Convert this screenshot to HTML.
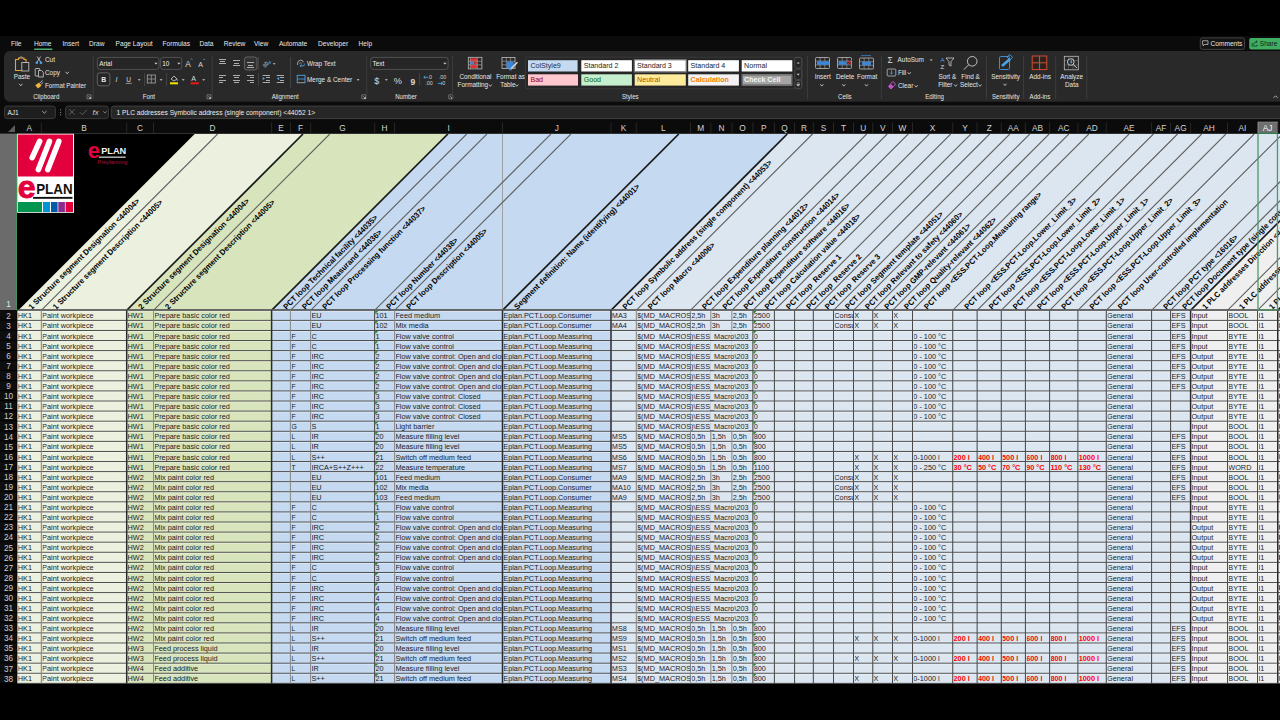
<!DOCTYPE html>
<html><head><meta charset="utf-8"><title>Excel</title>
<style>
html,body{margin:0;padding:0;width:1280px;height:720px;overflow:hidden;background:#000;font-family:"Liberation Sans",sans-serif;}
.a{position:absolute;white-space:nowrap;}
svg text{font-family:"Liberation Sans",sans-serif;}
</style></head><body>
<svg width="1280" height="122" style="position:absolute;left:0;top:0">
<rect x="0" y="0" width="1280" height="36" fill="#000"/>
<rect x="0" y="36" width="1280" height="86" fill="#0b0b0b"/>
<text x="10.9" y="46.4" font-size="7.26" fill="#e8e8e8" textLength="10.63" lengthAdjust="spacingAndGlyphs" style="white-space:pre">File</text>
<text x="33.9" y="46.4" font-size="7.26" fill="#e8e8e8" textLength="17.60" lengthAdjust="spacingAndGlyphs" style="white-space:pre">Home</text>
<text x="62.5" y="46.4" font-size="7.26" fill="#e8e8e8" textLength="16.51" lengthAdjust="spacingAndGlyphs" style="white-space:pre">Insert</text>
<text x="89" y="46.4" font-size="7.26" fill="#e8e8e8" textLength="15.40" lengthAdjust="spacingAndGlyphs" style="white-space:pre">Draw</text>
<text x="115.6" y="46.4" font-size="7.26" fill="#e8e8e8" textLength="37.06" lengthAdjust="spacingAndGlyphs" style="white-space:pre">Page Layout</text>
<text x="162.5" y="46.4" font-size="7.26" fill="#e8e8e8" textLength="27.50" lengthAdjust="spacingAndGlyphs" style="white-space:pre">Formulas</text>
<text x="199.5" y="46.4" font-size="7.26" fill="#e8e8e8" textLength="13.94" lengthAdjust="spacingAndGlyphs" style="white-space:pre">Data</text>
<text x="223.75" y="46.4" font-size="7.26" fill="#e8e8e8" textLength="21.64" lengthAdjust="spacingAndGlyphs" style="white-space:pre">Review</text>
<text x="254" y="46.4" font-size="7.26" fill="#e8e8e8" textLength="14.19" lengthAdjust="spacingAndGlyphs" style="white-space:pre">View</text>
<text x="278.9" y="46.4" font-size="7.26" fill="#e8e8e8" textLength="28.25" lengthAdjust="spacingAndGlyphs" style="white-space:pre">Automate</text>
<text x="318" y="46.4" font-size="7.26" fill="#e8e8e8" textLength="30.08" lengthAdjust="spacingAndGlyphs" style="white-space:pre">Developer</text>
<text x="358.6" y="46.4" font-size="7.26" fill="#e8e8e8" textLength="13.57" lengthAdjust="spacingAndGlyphs" style="white-space:pre">Help</text>
<rect x="34" y="48.6" width="18.5" height="1.3" rx="0.6" fill="#4fb072"/>
<rect x="1200.3" y="37.9" width="44.3" height="11.5" rx="2" fill="#141414" stroke="#505050" stroke-width="0.8"/>
<path d="M1202.6,40.8 h5.4 v3.6 h-3.4 l-1.4,1.5 v-1.5 h-0.6 z" fill="none" stroke="#e0e0e0" stroke-width="0.7"/>
<text x="1210.5" y="46.2" font-size="7.26" fill="#e8e8e8" textLength="31.91" lengthAdjust="spacingAndGlyphs" style="white-space:pre">Comments</text>
<rect x="1249.2" y="37.9" width="36" height="11.5" rx="2" fill="#3fae62"/>
<path d="M1252.2,43 v3 h5 v-1.2 M1253.5,44.6 q0.8,-3 3.6,-3 m-1.2,-1.2 l1.3,1.2 l-1.3,1.2" fill="none" stroke="#0b2b16" stroke-width="0.7"/>
<text x="1259.8" y="46.2" font-size="7.26" fill="#0d1f12" textLength="17.61" lengthAdjust="spacingAndGlyphs" style="white-space:pre">Share</text>
<rect x="4" y="51" width="1290" height="50.8" rx="6" fill="#292929"/>
<path d="M15.5,59.5 h3 v-1.5 h5.5 v1.5 h2 v11 h-10.5 z" fill="none" stroke="#e8a23a" stroke-width="1.1"/>
<path d="M19,58.5 l2.2,-2 l2.2,2" fill="none" stroke="#bdbdbd" stroke-width="0.8"/>
<rect x="21.8" y="62.5" width="7" height="8.5" fill="#292929" stroke="#bdbdbd" stroke-width="0.9"/>
<text x="13.8" y="79.2" font-size="7.04" fill="#e6e6e6" textLength="16.36" lengthAdjust="spacingAndGlyphs" style="white-space:pre">Paste</text>
<path d="M19.20,83.80 L20.80,85.80 L22.40,83.80" fill="none" stroke="#d8d8d8" stroke-width="0.8"/>
<path d="M37.2,56.5 l3.4,5.5 M40.6,56.5 l-3.4,5.5" stroke="#cfcfcf" stroke-width="0.8"/>
<circle cx="36.8" cy="62.8" r="1.3" fill="#4aa3e8"/><circle cx="41" cy="62.8" r="1.3" fill="#4aa3e8"/>
<text x="45" y="62.4" font-size="7.04" fill="#e6e6e6" textLength="9.96" lengthAdjust="spacingAndGlyphs" style="white-space:pre">Cut</text>
<rect x="35.2" y="68.5" width="4.5" height="7.5" rx="0.6" fill="none" stroke="#cfcfcf" stroke-width="0.8"/>
<path d="M38.5,70.5 h3 l1.8,1.8 v4.7 h-4.8 z" fill="#292929" stroke="#cfcfcf" stroke-width="0.8"/>
<text x="45" y="75.4" font-size="7.04" fill="#e6e6e6" textLength="14.94" lengthAdjust="spacingAndGlyphs" style="white-space:pre">Copy</text>
<path d="M65.60,71.80 L67.20,73.80 L68.80,71.80" fill="none" stroke="#d8d8d8" stroke-width="0.8"/>
<path d="M35.2,85.2 l3.8,-2.8 l2.4,3.4 l-3.4,2.8 z" fill="#f0b43c"/>
<path d="M39.6,83.2 l3,-2.8 M40.6,84.6 l2.6,-2.2" stroke="#cfcfcf" stroke-width="0.8"/>
<text x="45" y="88.4" font-size="6.82" fill="#e6e6e6" textLength="41.00" lengthAdjust="spacingAndGlyphs" style="white-space:pre">Format Painter</text>
<text x="33.2" y="99.3" font-size="6.71" fill="#e6e6e6" textLength="26.11" lengthAdjust="spacingAndGlyphs" style="white-space:pre">Clipboard</text>
<path d="M87,94.8 h4 v4 h-4 z" fill="none" stroke="#9a9a9a" stroke-width="0.6"/><path d="M88.5,96.3 l2.2,2.2 m0,-1.6 v1.6 h-1.6" fill="none" stroke="#cfcfcf" stroke-width="0.7"/>
<line x1="93.2" y1="56" x2="93.2" y2="99" stroke="#3d3d3d" stroke-width="1"/>
<rect x="97.4" y="57.4" width="61.6" height="12" rx="2.5" fill="#262626" stroke="#5c5c5c" stroke-width="0.8"/>
<text x="99.3" y="65.9" font-size="7.04" fill="#f0f0f0" textLength="12.80" lengthAdjust="spacingAndGlyphs" style="white-space:pre">Arial</text>
<path d="M154.3,62.7 h3.4 l-1.7,1.8 z" fill="#cfcfcf"/>
<rect x="160.6" y="57.4" width="21.2" height="12" rx="2.5" fill="#262626" stroke="#5c5c5c" stroke-width="0.8"/>
<text x="162.2" y="65.9" font-size="7.04" fill="#f0f0f0" textLength="7.12" lengthAdjust="spacingAndGlyphs" style="white-space:pre">10</text>
<path d="M177.2,62.7 h3.4 l-1.7,1.8 z" fill="#cfcfcf"/>
<text x="185.2" y="67.3" font-size="8.4" fill="#dcdcdc">A</text>
<path d="M190.5,59.5 l1,-0.8 l1,0.8" fill="none" stroke="#4aa3e8" stroke-width="0.8"/>
<text x="198.3" y="67.3" font-size="7" fill="#dcdcdc">A</text>
<path d="M203.2,59 l0.9,0.8 l0.9,-0.8" fill="none" stroke="#4aa3e8" stroke-width="0.8"/>
<rect x="97.3" y="72.8" width="12.6" height="13" rx="2.5" fill="#262626" stroke="#6a6a6a" stroke-width="0.9"/>
<text x="101.2" y="82" font-size="6.8" fill="#e8e8e8" font-weight="bold">B</text>
<text x="115.5" y="82" font-size="7" fill="#d8d8d8" font-style="italic" font-family="Liberation Serif">I</text>
<text x="126.2" y="81.6" font-size="6.6" fill="#d8d8d8">U</text>
<line x1="125.8" y1="83.4" x2="131.8" y2="83.4" stroke="#d8d8d8" stroke-width="0.6"/>
<path d="M137.7,79.3 h3 l-1.5,1.5 z" fill="#cfcfcf"/>
<line x1="144.6" y1="73" x2="144.6" y2="86" stroke="#444" stroke-width="1"/>
<rect x="147.3" y="75" width="8" height="8" fill="none" stroke="#a8a8a8" stroke-width="0.8"/><path d="M151.3,75 v8 M147.3,79 h8" stroke="#a8a8a8" stroke-width="0.7"/>
<path d="M159.6,79.3 h3 l-1.5,1.5 z" fill="#cfcfcf"/>
<line x1="166.6" y1="73" x2="166.6" y2="86" stroke="#444" stroke-width="1"/>
<path d="M171,79 l3,-3 l3,3 l-3,2 z" fill="none" stroke="#d0d0d0" stroke-width="0.8"/><circle cx="177.4" cy="80" r="0.8" fill="#4aa3e8"/>
<rect x="170" y="82.3" width="8" height="2" fill="#f2e600"/>
<path d="M181.7,79.3 h3 l-1.5,1.5 z" fill="#cfcfcf"/>
<text x="191.2" y="81.2" font-size="7" fill="#dcdcdc">A</text>
<rect x="190.5" y="82.3" width="8.4" height="2" fill="#e81818"/>
<path d="M202.2,79.3 h3 l-1.5,1.5 z" fill="#cfcfcf"/>
<text x="142.8" y="99.3" font-size="6.71" fill="#e6e6e6" textLength="12.20" lengthAdjust="spacingAndGlyphs" style="white-space:pre">Font</text>
<path d="M207,94.8 h4 v4 h-4 z" fill="none" stroke="#9a9a9a" stroke-width="0.6"/><path d="M208.5,96.3 l2.2,2.2 m0,-1.6 v1.6 h-1.6" fill="none" stroke="#cfcfcf" stroke-width="0.7"/>
<line x1="212.2" y1="56" x2="212.2" y2="99" stroke="#3d3d3d" stroke-width="1"/>
<line x1="219" y1="59.5" x2="226" y2="59.5" stroke="#c4c4c4" stroke-width="0.85"/><line x1="220" y1="61.5" x2="225" y2="61.5" stroke="#c4c4c4" stroke-width="0.85"/><line x1="219" y1="63.5" x2="226" y2="63.5" stroke="#c4c4c4" stroke-width="0.85"/>
<line x1="233" y1="60.5" x2="240" y2="60.5" stroke="#c4c4c4" stroke-width="0.85"/><line x1="234" y1="63.5" x2="239" y2="63.5" stroke="#c4c4c4" stroke-width="0.85"/><line x1="233" y1="65.5" x2="240" y2="65.5" stroke="#c4c4c4" stroke-width="0.85"/>
<rect x="244.4" y="57" width="12.6" height="13" rx="2.5" fill="#323232" stroke="#6a6a6a" stroke-width="0.9"/>
<line x1="247" y1="62.5" x2="254" y2="62.5" stroke="#c4c4c4" stroke-width="0.85"/><line x1="248" y1="65.5" x2="253" y2="65.5" stroke="#c4c4c4" stroke-width="0.85"/><line x1="247" y1="67.5" x2="254" y2="67.5" stroke="#c4c4c4" stroke-width="0.85"/>
<line x1="258.4" y1="57" x2="258.4" y2="70" stroke="#444" stroke-width="1"/>
<text x="261.8" y="66" font-size="5.2" fill="#bdbdbd" transform="rotate(-40 264.5 63.5)">ab</text>
<line x1="264.8" y1="67.8" x2="270.2" y2="62.2" stroke="#4aa3e8" stroke-width="0.9"/>
<path d="M268.6,62 l1.8,-0.2 l-0.2,1.8" fill="none" stroke="#4aa3e8" stroke-width="0.7"/>
<path d="M272.8,63.3 h2.8 l-1.4,1.4 z" fill="#cfcfcf"/>
<line x1="219" y1="75.5" x2="226" y2="75.5" stroke="#c4c4c4" stroke-width="0.85"/><line x1="219" y1="77.5" x2="223" y2="77.5" stroke="#c4c4c4" stroke-width="0.85"/><line x1="219" y1="80.5" x2="226" y2="80.5" stroke="#c4c4c4" stroke-width="0.85"/><line x1="219" y1="82.5" x2="223" y2="82.5" stroke="#c4c4c4" stroke-width="0.85"/>
<line x1="233" y1="75.5" x2="240" y2="75.5" stroke="#c4c4c4" stroke-width="0.85"/><line x1="234" y1="77.5" x2="239" y2="77.5" stroke="#c4c4c4" stroke-width="0.85"/><line x1="233" y1="80.5" x2="240" y2="80.5" stroke="#c4c4c4" stroke-width="0.85"/><line x1="234" y1="82.5" x2="239" y2="82.5" stroke="#c4c4c4" stroke-width="0.85"/>
<line x1="247" y1="75.5" x2="254" y2="75.5" stroke="#c4c4c4" stroke-width="0.85"/><line x1="250" y1="77.5" x2="254" y2="77.5" stroke="#c4c4c4" stroke-width="0.85"/><line x1="247" y1="80.5" x2="254" y2="80.5" stroke="#c4c4c4" stroke-width="0.85"/><line x1="250" y1="82.5" x2="254" y2="82.5" stroke="#c4c4c4" stroke-width="0.85"/>
<line x1="258.4" y1="73" x2="258.4" y2="86" stroke="#444" stroke-width="1"/>
<line x1="262.7" y1="75.5" x2="270" y2="75.5" stroke="#c4c4c4" stroke-width="0.85"/><line x1="266" y1="77.5" x2="270" y2="77.5" stroke="#c4c4c4" stroke-width="0.85"/><line x1="266" y1="80.5" x2="270" y2="80.5" stroke="#c4c4c4" stroke-width="0.85"/><line x1="262.7" y1="82.5" x2="270" y2="82.5" stroke="#c4c4c4" stroke-width="0.85"/>
<path d="M262.6,77 l2.4,1.6 l-2.4,1.6 z" fill="#4aa3e8"/>
<line x1="276.7" y1="75.5" x2="284" y2="75.5" stroke="#c4c4c4" stroke-width="0.85"/><line x1="280" y1="77.5" x2="284" y2="77.5" stroke="#c4c4c4" stroke-width="0.85"/><line x1="280" y1="80.5" x2="284" y2="80.5" stroke="#c4c4c4" stroke-width="0.85"/><line x1="276.7" y1="82.5" x2="284" y2="82.5" stroke="#c4c4c4" stroke-width="0.85"/>
<path d="M279.2,77 l-2.4,1.6 l2.4,1.6 z" fill="#4aa3e8"/>
<line x1="290.6" y1="57" x2="290.6" y2="88" stroke="#444" stroke-width="1"/>
<path d="M297.6,65 q-0.5,-4.5 3,-4.8 q2.6,-0.2 2.6,2.2" fill="none" stroke="#bdbdbd" stroke-width="0.8"/>
<path d="M299.2,63.6 q1.2,-1.8 2.4,0" fill="none" stroke="#bdbdbd" stroke-width="0.6"/>
<path d="M300,65.8 h3.2 q1.2,0 1.2,-1.2 v-1 M301.4,64.5 l-1.3,1.3 l1.3,1.3" fill="none" stroke="#4aa3e8" stroke-width="0.85"/>
<text x="307" y="66.4" font-size="7.04" fill="#e6e6e6" textLength="28.57" lengthAdjust="spacingAndGlyphs" style="white-space:pre">Wrap Text</text>
<rect x="297.2" y="75.3" width="7.8" height="7.5" fill="none" stroke="#4aa3e8" stroke-width="0.9"/><path d="M297.2,79 h7.8" stroke="#4aa3e8" stroke-width="0.8"/><path d="M297.6,82.5 h7" stroke="#c08850" stroke-width="0.6"/>
<text x="307" y="82" font-size="7.04" fill="#e6e6e6" textLength="45.17" lengthAdjust="spacingAndGlyphs" style="white-space:pre">Merge &amp; Center</text>
<path d="M356.6,79.3 h3 l-1.5,1.5 z" fill="#cfcfcf"/>
<text x="271.7" y="99.3" font-size="6.71" fill="#e6e6e6" textLength="27.12" lengthAdjust="spacingAndGlyphs" style="white-space:pre">Alignment</text>
<path d="M361.8,94.8 h4 v4 h-4 z" fill="none" stroke="#9a9a9a" stroke-width="0.6"/><path d="M363.3,96.3 l2.2,2.2 m0,-1.6 v1.6 h-1.6" fill="none" stroke="#cfcfcf" stroke-width="0.7"/>
<line x1="366.7" y1="56" x2="366.7" y2="99" stroke="#3d3d3d" stroke-width="1"/>
<rect x="370.7" y="57.4" width="77.4" height="12" rx="2.5" fill="#262626" stroke="#5c5c5c" stroke-width="0.8"/>
<text x="372.6" y="65.9" font-size="7.04" fill="#f0f0f0" textLength="11.74" lengthAdjust="spacingAndGlyphs" style="white-space:pre">Text</text>
<path d="M443.2,62.7 h3.4 l-1.7,1.8 z" fill="#cfcfcf"/>
<text x="374.3" y="83.6" font-size="9" fill="#d8d8d8" font-family="Liberation Serif">$</text>
<path d="M384.8,79.3 h3 l-1.5,1.5 z" fill="#cfcfcf"/>
<text x="393.8" y="83.8" font-size="9.2" fill="#d8d8d8">%</text>
<text x="410.6" y="84.6" font-size="8.6" fill="#d8d8d8" font-weight="bold">9</text>
<line x1="419.6" y1="73.5" x2="419.6" y2="85.5" stroke="#444" stroke-width="1"/>
<text x="427.6" y="79.2" font-size="5.4" fill="#cfcfcf">.0</text><text x="425.2" y="85" font-size="5.4" fill="#cfcfcf">.00</text><path d="M423.8,77.3 h4.2 M423.8,77.3 l1.5,-1.2 m-1.5,1.2 l1.5,1.2" stroke="#4aa3e8" stroke-width="0.9" fill="none"/>
<text x="438.8" y="79.2" font-size="5.4" fill="#cfcfcf">.00</text><text x="440.8" y="85" font-size="5.4" fill="#cfcfcf">.0</text><path d="M437.8,83.4 h4.6 l-1.5,-1.2 m1.5,1.2 l-1.5,1.2" stroke="#4aa3e8" stroke-width="0.9" fill="none"/>
<text x="395.2" y="99.3" font-size="6.71" fill="#e6e6e6" textLength="21.69" lengthAdjust="spacingAndGlyphs" style="white-space:pre">Number</text>
<path d="M448.8,94.8 h4 v4 h-4 z" fill="none" stroke="#9a9a9a" stroke-width="0.6"/><path d="M450.3,96.3 l2.2,2.2 m0,-1.6 v1.6 h-1.6" fill="none" stroke="#cfcfcf" stroke-width="0.7"/>
<line x1="452.4" y1="56" x2="452.4" y2="99" stroke="#3d3d3d" stroke-width="1"/>
<rect x="468.3" y="57.3" width="13.6" height="11.6" fill="none" stroke="#bdbdbd" stroke-width="0.8"/>
<rect x="470.3" y="58.3" width="7" height="3" fill="#e03030"/><rect x="470.3" y="61.8" width="4" height="2.6" fill="#3a86d8"/><rect x="474.3" y="61.8" width="3" height="2.6" fill="#e03030"/><rect x="470.3" y="65" width="7" height="3" fill="#e03030"/>
<path d="M468.3,61.3 h13.6 M468.3,64.8 h13.6 M470.3,57.3 v11.6 M477.3,57.3 v11.6" stroke="#bdbdbd" stroke-width="0.5"/>
<text x="459.4" y="78.8" font-size="7.04" fill="#e6e6e6" textLength="32.02" lengthAdjust="spacingAndGlyphs" style="white-space:pre">Conditional</text>
<text x="457.6" y="86.8" font-size="7.04" fill="#e6e6e6" textLength="30.59" lengthAdjust="spacingAndGlyphs" style="white-space:pre">Formatting</text>
<path d="M488.80,84.46 L490.30,86.34 L491.80,84.46" fill="none" stroke="#d8d8d8" stroke-width="0.8"/>
<rect x="502" y="57.5" width="13" height="11" fill="none" stroke="#bdbdbd" stroke-width="0.8"/><path d="M502,61.2 h13 M502,64.8 h13 M506.3,57.5 v11 M510.6,57.5 v11" stroke="#bdbdbd" stroke-width="0.5"/>
<rect x="506.6" y="61.5" width="7" height="6.6" fill="#3a86d8"/><path d="M510,69.8 l7.5,-7.5" stroke="#dcdcdc" stroke-width="1.4"/><circle cx="510.4" cy="69.4" r="1.2" fill="#3a86d8"/>
<text x="496.2" y="78.8" font-size="7.04" fill="#e6e6e6" textLength="28.80" lengthAdjust="spacingAndGlyphs" style="white-space:pre">Format as</text>
<text x="500.2" y="86.8" font-size="7.04" fill="#e6e6e6" textLength="15.30" lengthAdjust="spacingAndGlyphs" style="white-space:pre">Table</text>
<path d="M515.30,84.46 L516.80,86.34 L518.30,84.46" fill="none" stroke="#d8d8d8" stroke-width="0.8"/>
<rect x="525.4" y="57.2" width="276.6" height="31.6" rx="3" fill="#262626" stroke="#3c3c3c" stroke-width="0.9"/>
<rect x="528.0" y="60.2" width="49.6" height="11.3" fill="#c5d9f1"/>
<text x="530.4" y="68.10000000000001" font-size="7.81" fill="#1f2f4f" textLength="30.39" lengthAdjust="spacingAndGlyphs" style="white-space:pre">ColStyle9</text>
<rect x="581.3" y="60.2" width="50.6" height="11.3" fill="#ffffff"/>
<text x="583.6999999999999" y="68.10000000000001" font-size="7.81" fill="#222" textLength="34.73" lengthAdjust="spacingAndGlyphs" style="white-space:pre">Standard 2</text>
<rect x="634.7" y="60.2" width="51.1" height="11.3" fill="#ffffff"/>
<text x="637.1" y="68.10000000000001" font-size="7.81" fill="#222" textLength="34.73" lengthAdjust="spacingAndGlyphs" style="white-space:pre">Standard 3</text>
<rect x="688.2" y="60.2" width="50.7" height="11.3" fill="#ffffff"/>
<text x="690.6" y="68.10000000000001" font-size="7.81" fill="#222" textLength="34.73" lengthAdjust="spacingAndGlyphs" style="white-space:pre">Standard 4</text>
<rect x="741.7" y="60.2" width="50.6" height="11.3" fill="#ffffff"/>
<text x="744.1" y="68.10000000000001" font-size="7.81" fill="#222" textLength="22.88" lengthAdjust="spacingAndGlyphs" style="white-space:pre">Normal</text>
<rect x="528.0" y="74.3" width="50.0" height="11.3" fill="#ffc7ce"/>
<text x="530.4" y="82.2" font-size="7.81" fill="#9c0006" textLength="12.63" lengthAdjust="spacingAndGlyphs" style="white-space:pre">Bad</text>
<rect x="581.3" y="74.3" width="50.6" height="11.3" fill="#c6efce"/>
<text x="583.6999999999999" y="82.2" font-size="7.81" fill="#006100" textLength="17.37" lengthAdjust="spacingAndGlyphs" style="white-space:pre">Good</text>
<rect x="634.7" y="74.3" width="51.1" height="11.3" fill="#ffeb9c"/>
<text x="637.1" y="82.2" font-size="7.81" fill="#9c5700" textLength="22.89" lengthAdjust="spacingAndGlyphs" style="white-space:pre">Neutral</text>
<rect x="688.2" y="74.3" width="50.7" height="11.3" fill="#f2f2f2"/>
<text x="690.6" y="82.2" font-size="7.81" fill="#fa7d00" font-weight="bold" textLength="38.26" lengthAdjust="spacingAndGlyphs" style="white-space:pre">Calculation</text>
<rect x="741.7" y="74.3" width="50.6" height="11.3" fill="#a5a5a5"/>
<rect x="742.5" y="75.1" width="49.0" height="9.7" fill="none" stroke="#5a5a5a" stroke-width="0.7"/>
<text x="744.1" y="82.2" font-size="7.81" fill="#f4f4f4" font-weight="bold" textLength="36.30" lengthAdjust="spacingAndGlyphs" style="white-space:pre">Check Cell</text>
<rect x="634.2" y="59.7" width="52.1" height="12.3" fill="none" stroke="#8a8a8a" stroke-width="0.9"/>
<rect x="794.8" y="57.5" width="6.9" height="10.5" rx="1.5" fill="#262626" stroke="#5a5a5a" stroke-width="0.7"/>
<path d="M796.7,63.6 l1.55,-1.6 l1.55,1.6 z" fill="#d0d0d0"/>
<rect x="794.8" y="69.2" width="6.9" height="10.5" rx="1.5" fill="#262626" stroke="#5a5a5a" stroke-width="0.7"/>
<path d="M796.7,73.8 l1.55,1.6 l1.55,-1.6 z" fill="#d0d0d0"/>
<rect x="794.8" y="80.4" width="6.9" height="8" rx="1.5" fill="#262626" stroke="#5a5a5a" stroke-width="0.7"/>
<path d="M796.8,83 h3 M796.7,84.6 l1.55,1.4 l1.55,-1.4 z" fill="#d0d0d0" stroke="#d0d0d0" stroke-width="0.6"/>
<text x="622" y="99.3" font-size="6.71" fill="#e6e6e6" textLength="16.61" lengthAdjust="spacingAndGlyphs" style="white-space:pre">Styles</text>
<line x1="807.4" y1="56" x2="807.4" y2="99" stroke="#3d3d3d" stroke-width="1"/>
<rect x="815.5" y="57.5" width="14" height="11" rx="1" fill="none" stroke="#bdbdbd" stroke-width="0.8"/><path d="M815.5,61.17 h14 M815.5,64.83 h14 M820.17,57.5 v11 M824.83,57.5 v11" stroke="#bdbdbd" stroke-width="0.5"/>
<rect x="817" y="61.4" width="12.5" height="3.4" fill="#3a86d8"/><path d="M820,59.8 l-3,3.2 l3,3.2" fill="none" stroke="#3a86d8" stroke-width="1"/>
<text x="814.7" y="78.8" font-size="7.04" fill="#e6e6e6" textLength="16.00" lengthAdjust="spacingAndGlyphs" style="white-space:pre">Insert</text>
<path d="M820.30,84.26 L821.80,86.14 L823.30,84.26" fill="none" stroke="#d8d8d8" stroke-width="0.8"/>
<rect x="837.5" y="57.5" width="14" height="11" rx="1" fill="none" stroke="#bdbdbd" stroke-width="0.8"/><path d="M837.5,61.17 h14 M837.5,64.83 h14 M842.17,57.5 v11 M846.83,57.5 v11" stroke="#bdbdbd" stroke-width="0.5"/>
<rect x="838.5" y="61.4" width="8" height="3.4" fill="#3a86d8"/><path d="M847.3,60 l4.6,4.6 M851.9,60 l-4.6,4.6" stroke="#e03030" stroke-width="1"/>
<text x="835.9" y="78.8" font-size="7.04" fill="#e6e6e6" textLength="18.50" lengthAdjust="spacingAndGlyphs" style="white-space:pre">Delete</text>
<path d="M842.30,84.26 L843.80,86.14 L845.30,84.26" fill="none" stroke="#d8d8d8" stroke-width="0.8"/>
<rect x="859.5" y="58" width="14" height="11" rx="1" fill="none" stroke="#bdbdbd" stroke-width="0.8"/><path d="M859.5,61.67 h14 M859.5,65.33 h14 M864.17,58 v11 M868.83,58 v11" stroke="#bdbdbd" stroke-width="0.5"/>
<rect x="862" y="61.8" width="9" height="3.4" fill="#3a86d8"/><path d="M861,55.6 h10" stroke="#3a86d8" stroke-width="0.8"/>
<text x="857" y="78.8" font-size="7.04" fill="#e6e6e6" textLength="20.27" lengthAdjust="spacingAndGlyphs" style="white-space:pre">Format</text>
<path d="M865.00,84.26 L866.50,86.14 L868.00,84.26" fill="none" stroke="#d8d8d8" stroke-width="0.8"/>
<text x="838" y="99.3" font-size="6.71" fill="#e6e6e6" textLength="13.56" lengthAdjust="spacingAndGlyphs" style="white-space:pre">Cells</text>
<line x1="881.4" y1="56" x2="881.4" y2="99" stroke="#3d3d3d" stroke-width="1"/>
<text x="887.6" y="63.3" font-size="8.5" fill="#dcdcdc">Σ</text>
<text x="897.6" y="62.4" font-size="7.04" fill="#e6e6e6" textLength="26.32" lengthAdjust="spacingAndGlyphs" style="white-space:pre">AutoSum</text>
<path d="M929.6,59.6 h3 l-1.5,1.5 z" fill="#cfcfcf"/>
<rect x="887.2" y="69" width="8.6" height="7" rx="0.8" fill="none" stroke="#bdbdbd" stroke-width="0.8"/><path d="M891.5,70 v4 M890,72.6 l1.5,1.5 l1.5,-1.5" fill="none" stroke="#4aa3e8" stroke-width="0.8"/>
<text x="898" y="75.2" font-size="7.04" fill="#e6e6e6" textLength="8.18" lengthAdjust="spacingAndGlyphs" style="white-space:pre">Fill</text>
<path d="M907.70,72.26 L909.20,74.14 L910.70,72.26" fill="none" stroke="#d8d8d8" stroke-width="0.8"/>
<path d="M888.3,86.5 l4.5,-5 l2.8,2.5 l-4.5,5 z" fill="none" stroke="#c452c8" stroke-width="1"/><path d="M888.6,86.6 l2.3,-2.6 l2.3,2.2 l-2.2,2.5 z" fill="#c452c8"/>
<text x="898" y="88.2" font-size="7.04" fill="#e6e6e6" textLength="15.29" lengthAdjust="spacingAndGlyphs" style="white-space:pre">Clear</text>
<path d="M914.70,85.26 L916.20,87.14 L917.70,85.26" fill="none" stroke="#d8d8d8" stroke-width="0.8"/>
<text x="925.3" y="99.3" font-size="6.71" fill="#e6e6e6" textLength="18.65" lengthAdjust="spacingAndGlyphs" style="white-space:pre">Editing</text>
<text x="940.5" y="62" font-size="6" fill="#4aa3e8">A</text>
<text x="940.5" y="69" font-size="6" fill="#dcdcdc">Z</text>
<path d="M946,58 h8 l-3,3.6 v4.5 l-2,-1.2 v-3.3 z" fill="none" stroke="#cfcfcf" stroke-width="0.8"/>
<text x="938.4" y="78.8" font-size="7.04" fill="#e6e6e6" textLength="17.78" lengthAdjust="spacingAndGlyphs" style="white-space:pre">Sort &amp;</text>
<text x="938.2" y="86.8" font-size="7.04" fill="#e6e6e6" textLength="14.22" lengthAdjust="spacingAndGlyphs" style="white-space:pre">Filter</text>
<path d="M954.10,84.46 L955.60,86.34 L957.10,84.46" fill="none" stroke="#d8d8d8" stroke-width="0.8"/>
<circle cx="972.2" cy="61.3" r="4.8" fill="none" stroke="#cfcfcf" stroke-width="0.9"/><path d="M968.8,64.7 l-5,5" stroke="#cfcfcf" stroke-width="0.9"/>
<text x="961.3" y="78.8" font-size="7.04" fill="#e6e6e6" textLength="18.50" lengthAdjust="spacingAndGlyphs" style="white-space:pre">Find &amp;</text>
<text x="960" y="86.8" font-size="7.04" fill="#e6e6e6" textLength="17.79" lengthAdjust="spacingAndGlyphs" style="white-space:pre">Select</text>
<path d="M978.50,84.46 L980.00,86.34 L981.50,84.46" fill="none" stroke="#d8d8d8" stroke-width="0.8"/>
<line x1="986.5" y1="56" x2="986.5" y2="99" stroke="#3d3d3d" stroke-width="1"/>
<rect x="999.5" y="56.5" width="10" height="13" rx="1" fill="none" stroke="#3d8ed6" stroke-width="1"/>
<path d="M1002,66 l8,-7" stroke="#4aa3e8" stroke-width="2.6"/><rect x="1008" y="55.5" width="4" height="3.5" fill="none" stroke="#4aa3e8" stroke-width="0.8" transform="rotate(40 1010 57)"/>
<text x="991.2" y="78.8" font-size="7.04" fill="#e6e6e6" textLength="28.81" lengthAdjust="spacingAndGlyphs" style="white-space:pre">Sensitivity</text>
<path d="M1003.50,83.66 L1005.00,85.54 L1006.50,83.66" fill="none" stroke="#d8d8d8" stroke-width="0.8"/>
<text x="992" y="99.3" font-size="6.71" fill="#e6e6e6" textLength="27.46" lengthAdjust="spacingAndGlyphs" style="white-space:pre">Sensitivity</text>
<line x1="1023.6" y1="56" x2="1023.6" y2="99" stroke="#3d3d3d" stroke-width="1"/>
<rect x="1032.2" y="56" width="14.6" height="13.6" fill="none" stroke="#d24a2a" stroke-width="1"/>
<path d="M1039.5,56 v13.6 M1032.2,62.8 h14.6" stroke="#d24a2a" stroke-width="1"/>
<rect x="1034" y="57.8" width="3.6" height="3.4" fill="#3a1a12"/><rect x="1041.4" y="57.8" width="3.6" height="3.4" fill="#3a1a12"/><rect x="1034" y="64.5" width="3.6" height="3.4" fill="#3a1a12"/><rect x="1041.4" y="64.5" width="3.6" height="3.4" fill="#3a1a12"/>
<text x="1029.3" y="78.8" font-size="7.04" fill="#e6e6e6" textLength="21.70" lengthAdjust="spacingAndGlyphs" style="white-space:pre">Add-ins</text>
<text x="1029.6" y="99.3" font-size="6.71" fill="#e6e6e6" textLength="20.68" lengthAdjust="spacingAndGlyphs" style="white-space:pre">Add-ins</text>
<line x1="1055.7" y1="56" x2="1055.7" y2="99" stroke="#3d3d3d" stroke-width="1"/>
<rect x="1064.3" y="56.3" width="14" height="13.5" fill="none" stroke="#bdbdbd" stroke-width="0.8"/><path d="M1064.3,60.5 h14 M1064.3,65 h14 M1068.5,56.3 v13.5 M1073,56.3 v13.5" stroke="#8a8a8a" stroke-width="0.4"/>
<circle cx="1070.8" cy="62" r="3.3" fill="#292929" stroke="#dcdcdc" stroke-width="0.9"/><rect x="1070.5" y="60.3" width="1.6" height="3" fill="#4aa3e8"/><path d="M1073.3,64.5 l3.5,3.5" stroke="#dcdcdc" stroke-width="1"/>
<text x="1060.3" y="78.8" font-size="7.04" fill="#e6e6e6" textLength="22.77" lengthAdjust="spacingAndGlyphs" style="white-space:pre">Analyze</text>
<text x="1065" y="86.8" font-size="7.04" fill="#e6e6e6" textLength="13.52" lengthAdjust="spacingAndGlyphs" style="white-space:pre">Data</text>
<line x1="1086.8" y1="56" x2="1086.8" y2="99" stroke="#3d3d3d" stroke-width="1"/>
<path d="M1273.6,97.8 l2,-2 l2,2" fill="none" stroke="#cfcfcf" stroke-width="0.8"/>
<rect x="4.6" y="106.1" width="50.8" height="12.5" rx="2.5" fill="#1e1e1e" stroke="#3e3e3e" stroke-width="0.9"/>
<text x="7.4" y="114.9" font-size="7.26" fill="#e8e8e8" textLength="11.37" lengthAdjust="spacingAndGlyphs" style="white-space:pre">AJ1</text>
<path d="M42.2,111 l2.2,2.2 l2.2,-2.2" fill="none" stroke="#cfcfcf" stroke-width="0.8"/>
<circle cx="60.6" cy="109.8" r="0.55" fill="#bdbdbd"/><circle cx="60.6" cy="112.3" r="0.55" fill="#bdbdbd"/><circle cx="60.6" cy="114.8" r="0.55" fill="#bdbdbd"/>
<rect x="65.6" y="106.1" width="42.8" height="12.5" rx="2.5" fill="#1e1e1e" stroke="#3e3e3e" stroke-width="0.9"/>
<path d="M69.3,109.3 l5.3,5.3 M74.6,109.3 l-5.3,5.3" stroke="#6e6e6e" stroke-width="0.8"/>
<path d="M80,112.3 l2.2,2.3 l4.8,-4.8" fill="none" stroke="#6e6e6e" stroke-width="0.8"/>
<text x="92.6" y="115.3" font-size="7.6" fill="#d0d0d0" font-style="italic" font-family="Liberation Serif">fx</text>
<path d="M103.2,111.3 l1.8,1.8 l1.8,-1.8" fill="none" stroke="#a0a0a0" stroke-width="0.7"/>
<rect x="111.2" y="106.1" width="1200" height="12.5" rx="2.5" fill="#262626" stroke="#444" stroke-width="0.9"/>
<text x="116.4" y="114.9" font-size="7.37" fill="#ececec" textLength="198.87" lengthAdjust="spacingAndGlyphs" style="white-space:pre">1 PLC addresses Symbolic address (single component) &lt;44052 1&gt;</text>
</svg>
<svg width="1280" height="720" style="position:absolute;left:0;top:0">
<defs><clipPath id="r1"><rect x="17" y="134" width="1263" height="175.5"/></clipPath><clipPath id="data"><rect x="17" y="309" width="1263" height="375"/></clipPath></defs>
<rect x="0" y="121" width="1280" height="13" fill="#0b0b0b"/>
<path d="M8,132 L15,132 L15,125 Z" fill="#5c5c5c"/>
<line x1="41.30" y1="122.5" x2="41.30" y2="133" stroke="#2e2e2e" stroke-width="0.8"/>
<text x="29.15" y="131" font-size="8.3" fill="#d4d4d4" text-anchor="middle">A</text>
<line x1="126.70" y1="122.5" x2="126.70" y2="133" stroke="#2e2e2e" stroke-width="0.8"/>
<text x="84.00" y="131" font-size="8.3" fill="#d4d4d4" text-anchor="middle">B</text>
<line x1="153.50" y1="122.5" x2="153.50" y2="133" stroke="#2e2e2e" stroke-width="0.8"/>
<text x="140.10" y="131" font-size="8.3" fill="#d4d4d4" text-anchor="middle">C</text>
<line x1="271.60" y1="122.5" x2="271.60" y2="133" stroke="#2e2e2e" stroke-width="0.8"/>
<text x="212.55" y="131" font-size="8.3" fill="#d4d4d4" text-anchor="middle">D</text>
<line x1="290.40" y1="122.5" x2="290.40" y2="133" stroke="#2e2e2e" stroke-width="0.8"/>
<text x="281.00" y="131" font-size="8.3" fill="#d4d4d4" text-anchor="middle">E</text>
<line x1="310.60" y1="122.5" x2="310.60" y2="133" stroke="#2e2e2e" stroke-width="0.8"/>
<text x="300.50" y="131" font-size="8.3" fill="#d4d4d4" text-anchor="middle">F</text>
<line x1="374.60" y1="122.5" x2="374.60" y2="133" stroke="#2e2e2e" stroke-width="0.8"/>
<text x="342.60" y="131" font-size="8.3" fill="#d4d4d4" text-anchor="middle">G</text>
<line x1="394.60" y1="122.5" x2="394.60" y2="133" stroke="#2e2e2e" stroke-width="0.8"/>
<text x="384.60" y="131" font-size="8.3" fill="#d4d4d4" text-anchor="middle">H</text>
<line x1="502.50" y1="122.5" x2="502.50" y2="133" stroke="#2e2e2e" stroke-width="0.8"/>
<text x="448.55" y="131" font-size="8.3" fill="#d4d4d4" text-anchor="middle">I</text>
<line x1="611.00" y1="122.5" x2="611.00" y2="133" stroke="#2e2e2e" stroke-width="0.8"/>
<text x="556.75" y="131" font-size="8.3" fill="#d4d4d4" text-anchor="middle">J</text>
<line x1="636.25" y1="122.5" x2="636.25" y2="133" stroke="#2e2e2e" stroke-width="0.8"/>
<text x="623.62" y="131" font-size="8.3" fill="#d4d4d4" text-anchor="middle">K</text>
<line x1="690.40" y1="122.5" x2="690.40" y2="133" stroke="#2e2e2e" stroke-width="0.8"/>
<text x="663.33" y="131" font-size="8.3" fill="#d4d4d4" text-anchor="middle">L</text>
<line x1="710.90" y1="122.5" x2="710.90" y2="133" stroke="#2e2e2e" stroke-width="0.8"/>
<text x="700.65" y="131" font-size="8.3" fill="#d4d4d4" text-anchor="middle">M</text>
<line x1="731.90" y1="122.5" x2="731.90" y2="133" stroke="#2e2e2e" stroke-width="0.8"/>
<text x="721.40" y="131" font-size="8.3" fill="#d4d4d4" text-anchor="middle">N</text>
<line x1="752.90" y1="122.5" x2="752.90" y2="133" stroke="#2e2e2e" stroke-width="0.8"/>
<text x="742.40" y="131" font-size="8.3" fill="#d4d4d4" text-anchor="middle">O</text>
<line x1="774.40" y1="122.5" x2="774.40" y2="133" stroke="#2e2e2e" stroke-width="0.8"/>
<text x="763.65" y="131" font-size="8.3" fill="#d4d4d4" text-anchor="middle">P</text>
<line x1="794.60" y1="122.5" x2="794.60" y2="133" stroke="#2e2e2e" stroke-width="0.8"/>
<text x="784.50" y="131" font-size="8.3" fill="#d4d4d4" text-anchor="middle">Q</text>
<line x1="813.30" y1="122.5" x2="813.30" y2="133" stroke="#2e2e2e" stroke-width="0.8"/>
<text x="803.95" y="131" font-size="8.3" fill="#d4d4d4" text-anchor="middle">R</text>
<line x1="833.50" y1="122.5" x2="833.50" y2="133" stroke="#2e2e2e" stroke-width="0.8"/>
<text x="823.40" y="131" font-size="8.3" fill="#d4d4d4" text-anchor="middle">S</text>
<line x1="853.50" y1="122.5" x2="853.50" y2="133" stroke="#2e2e2e" stroke-width="0.8"/>
<text x="843.50" y="131" font-size="8.3" fill="#d4d4d4" text-anchor="middle">T</text>
<line x1="872.80" y1="122.5" x2="872.80" y2="133" stroke="#2e2e2e" stroke-width="0.8"/>
<text x="863.15" y="131" font-size="8.3" fill="#d4d4d4" text-anchor="middle">U</text>
<line x1="892.50" y1="122.5" x2="892.50" y2="133" stroke="#2e2e2e" stroke-width="0.8"/>
<text x="882.65" y="131" font-size="8.3" fill="#d4d4d4" text-anchor="middle">V</text>
<line x1="912.50" y1="122.5" x2="912.50" y2="133" stroke="#2e2e2e" stroke-width="0.8"/>
<text x="902.50" y="131" font-size="8.3" fill="#d4d4d4" text-anchor="middle">W</text>
<line x1="952.75" y1="122.5" x2="952.75" y2="133" stroke="#2e2e2e" stroke-width="0.8"/>
<text x="932.62" y="131" font-size="8.3" fill="#d4d4d4" text-anchor="middle">X</text>
<line x1="977.10" y1="122.5" x2="977.10" y2="133" stroke="#2e2e2e" stroke-width="0.8"/>
<text x="964.92" y="131" font-size="8.3" fill="#d4d4d4" text-anchor="middle">Y</text>
<line x1="1001.25" y1="122.5" x2="1001.25" y2="133" stroke="#2e2e2e" stroke-width="0.8"/>
<text x="989.17" y="131" font-size="8.3" fill="#d4d4d4" text-anchor="middle">Z</text>
<line x1="1025.40" y1="122.5" x2="1025.40" y2="133" stroke="#2e2e2e" stroke-width="0.8"/>
<text x="1013.33" y="131" font-size="8.3" fill="#d4d4d4" text-anchor="middle">AA</text>
<line x1="1049.60" y1="122.5" x2="1049.60" y2="133" stroke="#2e2e2e" stroke-width="0.8"/>
<text x="1037.50" y="131" font-size="8.3" fill="#d4d4d4" text-anchor="middle">AB</text>
<line x1="1077.90" y1="122.5" x2="1077.90" y2="133" stroke="#2e2e2e" stroke-width="0.8"/>
<text x="1063.75" y="131" font-size="8.3" fill="#d4d4d4" text-anchor="middle">AC</text>
<line x1="1106.25" y1="122.5" x2="1106.25" y2="133" stroke="#2e2e2e" stroke-width="0.8"/>
<text x="1092.08" y="131" font-size="8.3" fill="#d4d4d4" text-anchor="middle">AD</text>
<line x1="1151.60" y1="122.5" x2="1151.60" y2="133" stroke="#2e2e2e" stroke-width="0.8"/>
<text x="1128.92" y="131" font-size="8.3" fill="#d4d4d4" text-anchor="middle">AE</text>
<line x1="1170.60" y1="122.5" x2="1170.60" y2="133" stroke="#2e2e2e" stroke-width="0.8"/>
<text x="1161.10" y="131" font-size="8.3" fill="#d4d4d4" text-anchor="middle">AF</text>
<line x1="1190.60" y1="122.5" x2="1190.60" y2="133" stroke="#2e2e2e" stroke-width="0.8"/>
<text x="1180.60" y="131" font-size="8.3" fill="#d4d4d4" text-anchor="middle">AG</text>
<line x1="1227.50" y1="122.5" x2="1227.50" y2="133" stroke="#2e2e2e" stroke-width="0.8"/>
<text x="1209.05" y="131" font-size="8.3" fill="#d4d4d4" text-anchor="middle">AH</text>
<line x1="1257.50" y1="122.5" x2="1257.50" y2="133" stroke="#2e2e2e" stroke-width="0.8"/>
<text x="1242.50" y="131" font-size="8.3" fill="#d4d4d4" text-anchor="middle">AI</text>
<rect x="1258.0" y="122" width="19.75" height="11.5" fill="#6e6e6e" stroke="#9a9a9a" stroke-width="0.6"/>
<line x1="1277.75" y1="122.5" x2="1277.75" y2="133" stroke="#2e2e2e" stroke-width="0.8"/>
<text x="1267.62" y="131" font-size="8.3" fill="#f6f6f6" text-anchor="middle">AJ</text>
<line x1="1310.00" y1="122.5" x2="1310.00" y2="133" stroke="#2e2e2e" stroke-width="0.8"/>
<text x="1293.88" y="131" font-size="8.3" fill="#d4d4d4" text-anchor="middle">AK</text>
<line x1="0" y1="133.6" x2="1280" y2="133.6" stroke="#3a3a3a" stroke-width="0.9"/>
<line x1="1257.5" y1="133.3" x2="1277.5" y2="133.3" stroke="#2f8a55" stroke-width="1.1"/>
<rect x="0" y="134" width="17" height="176.3" fill="#6b6b6b"/>
<rect x="0" y="310.3" width="17" height="409.7" fill="#000"/>
<text x="8.5" y="307" font-size="8.2" fill="#e8e8e8" text-anchor="middle">1</text>
<rect x="0" y="310.30" width="16.5" height="9.28" fill="#0e0e0e"/>
<text x="8.5" y="318.60" font-size="8.2" fill="#cdcdcd" text-anchor="middle">2</text>
<rect x="0" y="320.38" width="16.5" height="9.28" fill="#0e0e0e"/>
<text x="8.5" y="328.68" font-size="8.2" fill="#cdcdcd" text-anchor="middle">3</text>
<rect x="0" y="330.47" width="16.5" height="9.28" fill="#0e0e0e"/>
<text x="8.5" y="338.77" font-size="8.2" fill="#cdcdcd" text-anchor="middle">4</text>
<rect x="0" y="340.55" width="16.5" height="9.28" fill="#0e0e0e"/>
<text x="8.5" y="348.85" font-size="8.2" fill="#cdcdcd" text-anchor="middle">5</text>
<rect x="0" y="350.63" width="16.5" height="9.28" fill="#0e0e0e"/>
<text x="8.5" y="358.93" font-size="8.2" fill="#cdcdcd" text-anchor="middle">6</text>
<rect x="0" y="360.72" width="16.5" height="9.28" fill="#0e0e0e"/>
<text x="8.5" y="369.02" font-size="8.2" fill="#cdcdcd" text-anchor="middle">7</text>
<rect x="0" y="370.80" width="16.5" height="9.28" fill="#0e0e0e"/>
<text x="8.5" y="379.10" font-size="8.2" fill="#cdcdcd" text-anchor="middle">8</text>
<rect x="0" y="380.88" width="16.5" height="9.28" fill="#0e0e0e"/>
<text x="8.5" y="389.18" font-size="8.2" fill="#cdcdcd" text-anchor="middle">9</text>
<rect x="0" y="390.96" width="16.5" height="9.28" fill="#0e0e0e"/>
<text x="8.5" y="399.26" font-size="8.2" fill="#cdcdcd" text-anchor="middle">10</text>
<rect x="0" y="401.05" width="16.5" height="9.28" fill="#0e0e0e"/>
<text x="8.5" y="409.35" font-size="8.2" fill="#cdcdcd" text-anchor="middle">11</text>
<rect x="0" y="411.13" width="16.5" height="9.28" fill="#0e0e0e"/>
<text x="8.5" y="419.43" font-size="8.2" fill="#cdcdcd" text-anchor="middle">12</text>
<rect x="0" y="421.21" width="16.5" height="9.28" fill="#0e0e0e"/>
<text x="8.5" y="429.51" font-size="8.2" fill="#cdcdcd" text-anchor="middle">13</text>
<rect x="0" y="431.30" width="16.5" height="9.28" fill="#0e0e0e"/>
<text x="8.5" y="439.60" font-size="8.2" fill="#cdcdcd" text-anchor="middle">14</text>
<rect x="0" y="441.38" width="16.5" height="9.28" fill="#0e0e0e"/>
<text x="8.5" y="449.68" font-size="8.2" fill="#cdcdcd" text-anchor="middle">15</text>
<rect x="0" y="451.46" width="16.5" height="9.28" fill="#0e0e0e"/>
<text x="8.5" y="459.76" font-size="8.2" fill="#cdcdcd" text-anchor="middle">16</text>
<rect x="0" y="461.55" width="16.5" height="9.28" fill="#0e0e0e"/>
<text x="8.5" y="469.85" font-size="8.2" fill="#cdcdcd" text-anchor="middle">17</text>
<rect x="0" y="471.63" width="16.5" height="9.28" fill="#0e0e0e"/>
<text x="8.5" y="479.93" font-size="8.2" fill="#cdcdcd" text-anchor="middle">18</text>
<rect x="0" y="481.71" width="16.5" height="9.28" fill="#0e0e0e"/>
<text x="8.5" y="490.01" font-size="8.2" fill="#cdcdcd" text-anchor="middle">19</text>
<rect x="0" y="491.79" width="16.5" height="9.28" fill="#0e0e0e"/>
<text x="8.5" y="500.09" font-size="8.2" fill="#cdcdcd" text-anchor="middle">20</text>
<rect x="0" y="501.88" width="16.5" height="9.28" fill="#0e0e0e"/>
<text x="8.5" y="510.18" font-size="8.2" fill="#cdcdcd" text-anchor="middle">21</text>
<rect x="0" y="511.96" width="16.5" height="9.28" fill="#0e0e0e"/>
<text x="8.5" y="520.26" font-size="8.2" fill="#cdcdcd" text-anchor="middle">22</text>
<rect x="0" y="522.04" width="16.5" height="9.28" fill="#0e0e0e"/>
<text x="8.5" y="530.34" font-size="8.2" fill="#cdcdcd" text-anchor="middle">23</text>
<rect x="0" y="532.13" width="16.5" height="9.28" fill="#0e0e0e"/>
<text x="8.5" y="540.43" font-size="8.2" fill="#cdcdcd" text-anchor="middle">24</text>
<rect x="0" y="542.21" width="16.5" height="9.28" fill="#0e0e0e"/>
<text x="8.5" y="550.51" font-size="8.2" fill="#cdcdcd" text-anchor="middle">25</text>
<rect x="0" y="552.29" width="16.5" height="9.28" fill="#0e0e0e"/>
<text x="8.5" y="560.59" font-size="8.2" fill="#cdcdcd" text-anchor="middle">26</text>
<rect x="0" y="562.38" width="16.5" height="9.28" fill="#0e0e0e"/>
<text x="8.5" y="570.67" font-size="8.2" fill="#cdcdcd" text-anchor="middle">27</text>
<rect x="0" y="572.46" width="16.5" height="9.28" fill="#0e0e0e"/>
<text x="8.5" y="580.76" font-size="8.2" fill="#cdcdcd" text-anchor="middle">28</text>
<rect x="0" y="582.54" width="16.5" height="9.28" fill="#0e0e0e"/>
<text x="8.5" y="590.84" font-size="8.2" fill="#cdcdcd" text-anchor="middle">29</text>
<rect x="0" y="592.62" width="16.5" height="9.28" fill="#0e0e0e"/>
<text x="8.5" y="600.92" font-size="8.2" fill="#cdcdcd" text-anchor="middle">30</text>
<rect x="0" y="602.71" width="16.5" height="9.28" fill="#0e0e0e"/>
<text x="8.5" y="611.01" font-size="8.2" fill="#cdcdcd" text-anchor="middle">31</text>
<rect x="0" y="612.79" width="16.5" height="9.28" fill="#0e0e0e"/>
<text x="8.5" y="621.09" font-size="8.2" fill="#cdcdcd" text-anchor="middle">32</text>
<rect x="0" y="622.87" width="16.5" height="9.28" fill="#0e0e0e"/>
<text x="8.5" y="631.17" font-size="8.2" fill="#cdcdcd" text-anchor="middle">33</text>
<rect x="0" y="632.96" width="16.5" height="9.28" fill="#0e0e0e"/>
<text x="8.5" y="641.26" font-size="8.2" fill="#cdcdcd" text-anchor="middle">34</text>
<rect x="0" y="643.04" width="16.5" height="9.28" fill="#0e0e0e"/>
<text x="8.5" y="651.34" font-size="8.2" fill="#cdcdcd" text-anchor="middle">35</text>
<rect x="0" y="653.12" width="16.5" height="9.28" fill="#0e0e0e"/>
<text x="8.5" y="661.42" font-size="8.2" fill="#cdcdcd" text-anchor="middle">36</text>
<rect x="0" y="663.21" width="16.5" height="9.28" fill="#0e0e0e"/>
<text x="8.5" y="671.50" font-size="8.2" fill="#cdcdcd" text-anchor="middle">37</text>
<rect x="0" y="673.29" width="16.5" height="9.28" fill="#0e0e0e"/>
<text x="8.5" y="681.59" font-size="8.2" fill="#cdcdcd" text-anchor="middle">38</text>
<line x1="16.7" y1="134" x2="16.7" y2="310.3" stroke="#3f9a5e" stroke-width="1"/>
<rect x="17" y="134" width="1263" height="176.3" fill="#000"/>
<g clip-path="url(#r1)">
<polygon points="18.30,310.3 41.30,310.3 217.60,134.0 194.60,134.0" fill="#ebf1de"/>
<polygon points="41.30,310.3 126.70,310.3 303.00,134.0 217.60,134.0" fill="#ebf1de"/>
<polygon points="126.70,310.3 153.50,310.3 329.80,134.0 303.00,134.0" fill="#d8e4bc"/>
<polygon points="153.50,310.3 271.60,310.3 447.90,134.0 329.80,134.0" fill="#d8e4bc"/>
<polygon points="271.60,310.3 290.40,310.3 466.70,134.0 447.90,134.0" fill="#c5d9f1"/>
<polygon points="290.40,310.3 310.60,310.3 486.90,134.0 466.70,134.0" fill="#c5d9f1"/>
<polygon points="310.60,310.3 374.60,310.3 550.90,134.0 486.90,134.0" fill="#c5d9f1"/>
<polygon points="374.60,310.3 394.60,310.3 570.90,134.0 550.90,134.0" fill="#c5d9f1"/>
<polygon points="394.60,310.3 502.50,310.3 678.80,134.0 570.90,134.0" fill="#c5d9f1"/>
<polygon points="502.50,310.3 611.00,310.3 787.30,134.0 678.80,134.0" fill="#c5d9f1"/>
<polygon points="611.00,310.3 636.25,310.3 812.55,134.0 787.30,134.0" fill="#dce6f1"/>
<polygon points="636.25,310.3 690.40,310.3 866.70,134.0 812.55,134.0" fill="#dce6f1"/>
<polygon points="690.40,310.3 710.90,310.3 887.20,134.0 866.70,134.0" fill="#dce6f1"/>
<polygon points="710.90,310.3 731.90,310.3 908.20,134.0 887.20,134.0" fill="#dce6f1"/>
<polygon points="731.90,310.3 752.90,310.3 929.20,134.0 908.20,134.0" fill="#dce6f1"/>
<polygon points="752.90,310.3 774.40,310.3 950.70,134.0 929.20,134.0" fill="#dce6f1"/>
<polygon points="774.40,310.3 794.60,310.3 970.90,134.0 950.70,134.0" fill="#dce6f1"/>
<polygon points="794.60,310.3 813.30,310.3 989.60,134.0 970.90,134.0" fill="#dce6f1"/>
<polygon points="813.30,310.3 833.50,310.3 1009.80,134.0 989.60,134.0" fill="#dce6f1"/>
<polygon points="833.50,310.3 853.50,310.3 1029.80,134.0 1009.80,134.0" fill="#dce6f1"/>
<polygon points="853.50,310.3 872.80,310.3 1049.10,134.0 1029.80,134.0" fill="#dce6f1"/>
<polygon points="872.80,310.3 892.50,310.3 1068.80,134.0 1049.10,134.0" fill="#dce6f1"/>
<polygon points="892.50,310.3 912.50,310.3 1088.80,134.0 1068.80,134.0" fill="#dce6f1"/>
<polygon points="912.50,310.3 952.75,310.3 1129.05,134.0 1088.80,134.0" fill="#dce6f1"/>
<polygon points="952.75,310.3 977.10,310.3 1153.40,134.0 1129.05,134.0" fill="#dce6f1"/>
<polygon points="977.10,310.3 1001.25,310.3 1177.55,134.0 1153.40,134.0" fill="#dce6f1"/>
<polygon points="1001.25,310.3 1025.40,310.3 1201.70,134.0 1177.55,134.0" fill="#dce6f1"/>
<polygon points="1025.40,310.3 1049.60,310.3 1225.90,134.0 1201.70,134.0" fill="#dce6f1"/>
<polygon points="1049.60,310.3 1077.90,310.3 1254.20,134.0 1225.90,134.0" fill="#dce6f1"/>
<polygon points="1077.90,310.3 1106.25,310.3 1282.55,134.0 1254.20,134.0" fill="#dce6f1"/>
<polygon points="1106.25,310.3 1151.60,310.3 1327.90,134.0 1282.55,134.0" fill="#dce6f1"/>
<polygon points="1151.60,310.3 1170.60,310.3 1346.90,134.0 1327.90,134.0" fill="#dce6f1"/>
<polygon points="1170.60,310.3 1190.60,310.3 1366.90,134.0 1346.90,134.0" fill="#dce6f1"/>
<polygon points="1190.60,310.3 1227.50,310.3 1403.80,134.0 1366.90,134.0" fill="#efefef"/>
<polygon points="1227.50,310.3 1257.50,310.3 1433.80,134.0 1403.80,134.0" fill="#efefef"/>
<polygon points="1257.50,310.3 1277.75,310.3 1454.05,134.0 1433.80,134.0" fill="#efefef"/>
<polygon points="1277.75,310.3 1310.00,310.3 1486.30,134.0 1454.05,134.0" fill="#efefef"/>
<line x1="502.5" y1="134" x2="502.5" y2="310.3" stroke="#9a9a9a" stroke-width="0.9"/>
<line x1="41.30" y1="310.3" x2="217.60" y2="134.0" stroke="#646464" stroke-width="1.1"/>
<line x1="126.70" y1="310.3" x2="303.00" y2="134.0" stroke="#1a1a1a" stroke-width="1.7"/>
<line x1="153.50" y1="310.3" x2="329.80" y2="134.0" stroke="#646464" stroke-width="1.1"/>
<line x1="271.60" y1="310.3" x2="447.90" y2="134.0" stroke="#1a1a1a" stroke-width="1.7"/>
<line x1="290.40" y1="310.3" x2="466.70" y2="134.0" stroke="#646464" stroke-width="1.1"/>
<line x1="310.60" y1="310.3" x2="486.90" y2="134.0" stroke="#646464" stroke-width="1.1"/>
<line x1="374.60" y1="310.3" x2="550.90" y2="134.0" stroke="#646464" stroke-width="1.1"/>
<line x1="394.60" y1="310.3" x2="570.90" y2="134.0" stroke="#646464" stroke-width="1.1"/>
<line x1="502.50" y1="310.3" x2="678.80" y2="134.0" stroke="#1a1a1a" stroke-width="1.7"/>
<line x1="611.00" y1="310.3" x2="787.30" y2="134.0" stroke="#1a1a1a" stroke-width="1.7"/>
<line x1="636.25" y1="310.3" x2="812.55" y2="134.0" stroke="#646464" stroke-width="1.1"/>
<line x1="690.40" y1="310.3" x2="866.70" y2="134.0" stroke="#646464" stroke-width="1.1"/>
<line x1="710.90" y1="310.3" x2="887.20" y2="134.0" stroke="#646464" stroke-width="1.1"/>
<line x1="731.90" y1="310.3" x2="908.20" y2="134.0" stroke="#646464" stroke-width="1.1"/>
<line x1="752.90" y1="310.3" x2="929.20" y2="134.0" stroke="#646464" stroke-width="1.1"/>
<line x1="774.40" y1="310.3" x2="950.70" y2="134.0" stroke="#646464" stroke-width="1.1"/>
<line x1="794.60" y1="310.3" x2="970.90" y2="134.0" stroke="#646464" stroke-width="1.1"/>
<line x1="813.30" y1="310.3" x2="989.60" y2="134.0" stroke="#646464" stroke-width="1.1"/>
<line x1="833.50" y1="310.3" x2="1009.80" y2="134.0" stroke="#646464" stroke-width="1.1"/>
<line x1="853.50" y1="310.3" x2="1029.80" y2="134.0" stroke="#646464" stroke-width="1.1"/>
<line x1="872.80" y1="310.3" x2="1049.10" y2="134.0" stroke="#646464" stroke-width="1.1"/>
<line x1="892.50" y1="310.3" x2="1068.80" y2="134.0" stroke="#646464" stroke-width="1.1"/>
<line x1="912.50" y1="310.3" x2="1088.80" y2="134.0" stroke="#646464" stroke-width="1.1"/>
<line x1="952.75" y1="310.3" x2="1129.05" y2="134.0" stroke="#646464" stroke-width="1.1"/>
<line x1="977.10" y1="310.3" x2="1153.40" y2="134.0" stroke="#646464" stroke-width="1.1"/>
<line x1="1001.25" y1="310.3" x2="1177.55" y2="134.0" stroke="#646464" stroke-width="1.1"/>
<line x1="1025.40" y1="310.3" x2="1201.70" y2="134.0" stroke="#646464" stroke-width="1.1"/>
<line x1="1049.60" y1="310.3" x2="1225.90" y2="134.0" stroke="#646464" stroke-width="1.1"/>
<line x1="1077.90" y1="310.3" x2="1254.20" y2="134.0" stroke="#646464" stroke-width="1.1"/>
<line x1="1106.25" y1="310.3" x2="1282.55" y2="134.0" stroke="#646464" stroke-width="1.1"/>
<line x1="1151.60" y1="310.3" x2="1327.90" y2="134.0" stroke="#646464" stroke-width="1.1"/>
<line x1="1170.60" y1="310.3" x2="1346.90" y2="134.0" stroke="#646464" stroke-width="1.1"/>
<line x1="1190.60" y1="310.3" x2="1366.90" y2="134.0" stroke="#1a1a1a" stroke-width="1.7"/>
<line x1="1227.50" y1="310.3" x2="1403.80" y2="134.0" stroke="#646464" stroke-width="1.1"/>
<line x1="1257.50" y1="310.3" x2="1433.80" y2="134.0" stroke="#646464" stroke-width="1.1"/>
<line x1="1277.75" y1="310.3" x2="1454.05" y2="134.0" stroke="#1a1a1a" stroke-width="1.7"/>
<text transform="translate(31.80,309.90) rotate(-45)" style="white-space:pre" font-size="7.95" font-weight="bold" fill="#000" textLength="153.19" lengthAdjust="spacingAndGlyphs">1 Structure segment Designation &lt;44004&gt;</text>
<text transform="translate(56.10,309.90) rotate(-45)" style="white-space:pre" font-size="7.95" font-weight="bold" fill="#000" textLength="151.49" lengthAdjust="spacingAndGlyphs">1 Structure segment Description &lt;44005&gt;</text>
<text transform="translate(141.50,309.90) rotate(-45)" style="white-space:pre" font-size="7.95" font-weight="bold" fill="#000" textLength="153.19" lengthAdjust="spacingAndGlyphs">2 Structure segment Designation &lt;44004&gt;</text>
<text transform="translate(168.30,309.90) rotate(-45)" style="white-space:pre" font-size="7.95" font-weight="bold" fill="#000" textLength="151.49" lengthAdjust="spacingAndGlyphs">2 Structure segment Description &lt;44005&gt;</text>
<text transform="translate(286.40,309.90) rotate(-45)" style="white-space:pre" font-size="7.95" font-weight="bold" fill="#000" textLength="129.94" lengthAdjust="spacingAndGlyphs">PCT loop Technical facility &lt;44035&gt;</text>
<text transform="translate(305.20,309.90) rotate(-45)" style="white-space:pre" font-size="7.95" font-weight="bold" fill="#000" textLength="109.12" lengthAdjust="spacingAndGlyphs">PCT loop Measurand &lt;44036&gt;</text>
<text transform="translate(325.40,309.90) rotate(-45)" style="white-space:pre" font-size="7.95" font-weight="bold" fill="#000" textLength="142.48" lengthAdjust="spacingAndGlyphs">PCT loop Processing function &lt;44037&gt;</text>
<text transform="translate(389.40,309.90) rotate(-45)" style="white-space:pre" font-size="7.95" font-weight="bold" fill="#000" textLength="97.56" lengthAdjust="spacingAndGlyphs">PCT loop Number &lt;44038&gt;</text>
<text transform="translate(409.40,309.90) rotate(-45)" style="white-space:pre" font-size="7.95" font-weight="bold" fill="#000" textLength="110.82" lengthAdjust="spacingAndGlyphs">PCT loop Description &lt;44005&gt;</text>
<text transform="translate(517.30,309.90) rotate(-45)" style="white-space:pre" font-size="7.95" font-weight="bold" fill="#000" textLength="173.70" lengthAdjust="spacingAndGlyphs">Segment definition: Name (identifying) &lt;44001&gt;</text>
<text transform="translate(625.80,309.90) rotate(-45)" style="white-space:pre" font-size="7.95" font-weight="bold" fill="#000" textLength="207.51" lengthAdjust="spacingAndGlyphs">PCT loop Symbolic address (single component) &lt;44053&gt;</text>
<text transform="translate(651.05,309.90) rotate(-45)" style="white-space:pre" font-size="7.95" font-weight="bold" fill="#000" textLength="91.15" lengthAdjust="spacingAndGlyphs">PCT loop Macro &lt;44006&gt;</text>
<text transform="translate(705.20,309.90) rotate(-45)" style="white-space:pre" font-size="7.95" font-weight="bold" fill="#000" textLength="147.18" lengthAdjust="spacingAndGlyphs">PCT loop Expenditure planning &lt;44012&gt;</text>
<text transform="translate(725.70,309.90) rotate(-45)" style="white-space:pre" font-size="7.95" font-weight="bold" fill="#000" textLength="161.73" lengthAdjust="spacingAndGlyphs">PCT loop Expenditure construction &lt;44014&gt;</text>
<text transform="translate(746.70,309.90) rotate(-45)" style="white-space:pre" font-size="7.95" font-weight="bold" fill="#000" textLength="146.77" lengthAdjust="spacingAndGlyphs">PCT loop Expenditure software &lt;44016&gt;</text>
<text transform="translate(767.70,309.90) rotate(-45)" style="white-space:pre" font-size="7.95" font-weight="bold" fill="#000" textLength="131.79" lengthAdjust="spacingAndGlyphs">PCT loop Calculation value &lt;44018&gt;</text>
<text transform="translate(789.20,309.90) rotate(-45)" style="white-space:pre" font-size="7.95" font-weight="bold" fill="#000" textLength="74.45" lengthAdjust="spacingAndGlyphs">PCT loop  Reserve 1</text>
<text transform="translate(809.40,309.90) rotate(-45)" style="white-space:pre" font-size="7.95" font-weight="bold" fill="#000" textLength="74.45" lengthAdjust="spacingAndGlyphs">PCT loop  Reserve 2</text>
<text transform="translate(828.10,309.90) rotate(-45)" style="white-space:pre" font-size="7.95" font-weight="bold" fill="#000" textLength="74.45" lengthAdjust="spacingAndGlyphs">PCT loop  Reserve 3</text>
<text transform="translate(848.30,309.90) rotate(-45)" style="white-space:pre" font-size="7.95" font-weight="bold" fill="#000" textLength="134.79" lengthAdjust="spacingAndGlyphs">PCT loop Segment template &lt;44051&gt;</text>
<text transform="translate(868.30,309.90) rotate(-45)" style="white-space:pre" font-size="7.95" font-weight="bold" fill="#000" textLength="134.37" lengthAdjust="spacingAndGlyphs">PCT loop Relevant to safety &lt;44060&gt;</text>
<text transform="translate(887.60,309.90) rotate(-45)" style="white-space:pre" font-size="7.95" font-weight="bold" fill="#000" textLength="118.10" lengthAdjust="spacingAndGlyphs">PCT loop GMP-relevant &lt;44061&gt;</text>
<text transform="translate(907.30,309.90) rotate(-45)" style="white-space:pre" font-size="7.95" font-weight="bold" fill="#000" textLength="126.66" lengthAdjust="spacingAndGlyphs">PCT loop Quality-relevant &lt;44062&gt;</text>
<text transform="translate(927.30,309.90) rotate(-45)" style="white-space:pre" font-size="7.95" font-weight="bold" fill="#000" textLength="162.57" lengthAdjust="spacingAndGlyphs">PCT loop &lt;ESS.PCT-Loop.Measuring range&gt;</text>
<text transform="translate(967.55,309.90) rotate(-45)" style="white-space:pre" font-size="7.95" font-weight="bold" fill="#000" textLength="154.87" lengthAdjust="spacingAndGlyphs">PCT loop &lt;ESS.PCT-Loop.Lower_Limit_3&gt;</text>
<text transform="translate(991.90,309.90) rotate(-45)" style="white-space:pre" font-size="7.95" font-weight="bold" fill="#000" textLength="154.87" lengthAdjust="spacingAndGlyphs">PCT loop &lt;ESS.PCT-Loop.Lower_Limit_2&gt;</text>
<text transform="translate(1016.05,309.90) rotate(-45)" style="white-space:pre" font-size="7.95" font-weight="bold" fill="#000" textLength="154.87" lengthAdjust="spacingAndGlyphs">PCT loop &lt;ESS.PCT-Loop.Lower_Limit_1&gt;</text>
<text transform="translate(1040.20,309.90) rotate(-45)" style="white-space:pre" font-size="7.95" font-weight="bold" fill="#000" textLength="154.44" lengthAdjust="spacingAndGlyphs">PCT loop &lt;ESS.PCT-Loop.Upper_Limit_1&gt;</text>
<text transform="translate(1064.40,309.90) rotate(-45)" style="white-space:pre" font-size="7.95" font-weight="bold" fill="#000" textLength="154.44" lengthAdjust="spacingAndGlyphs">PCT loop &lt;ESS.PCT-Loop.Upper_Limit_2&gt;</text>
<text transform="translate(1092.70,309.90) rotate(-45)" style="white-space:pre" font-size="7.95" font-weight="bold" fill="#000" textLength="154.44" lengthAdjust="spacingAndGlyphs">PCT loop &lt;ESS.PCT-Loop.Upper_Limit_3&gt;</text>
<text transform="translate(1121.05,309.90) rotate(-45)" style="white-space:pre" font-size="7.95" font-weight="bold" fill="#000" textLength="151.86" lengthAdjust="spacingAndGlyphs">PCT loop User-controlled implementation</text>
<text transform="translate(1166.40,309.90) rotate(-45)" style="white-space:pre" font-size="7.95" font-weight="bold" fill="#000" textLength="101.84" lengthAdjust="spacingAndGlyphs">PCT loop PCT type &lt;16016&gt;</text>
<text transform="translate(1185.40,309.90) rotate(-45)" style="white-space:pre" font-size="7.95" font-weight="bold" fill="#000" textLength="197.23" lengthAdjust="spacingAndGlyphs">PCT loop Document type (single component) &lt;16017&gt;</text>
<text transform="translate(1205.40,309.90) rotate(-45)" style="white-space:pre" font-size="7.95" font-weight="bold" fill="#000" textLength="130.11" lengthAdjust="spacingAndGlyphs">1 PLC addresses Direction &lt;44050&gt;</text>
<text transform="translate(1242.30,309.90) rotate(-45)" style="white-space:pre" font-size="7.95" font-weight="bold" fill="#000" textLength="131.40" lengthAdjust="spacingAndGlyphs">1 PLC addresses Data type &lt;44048&gt;</text>
<text transform="translate(1272.30,309.90) rotate(-45)" style="white-space:pre" font-size="7.95" font-weight="bold" fill="#000" textLength="242.20" lengthAdjust="spacingAndGlyphs">1 PLC addresses Symbolic address (single component) &lt;44052 1&gt;</text>
<text transform="translate(1292.55,309.90) rotate(-45)" style="white-space:pre" font-size="7.95" font-weight="bold" fill="#000" textLength="127.26" lengthAdjust="spacingAndGlyphs">1 PLC addresses Address &lt;44049&gt;</text>
</g>
<rect x="17.00" y="310.30" width="24.30" height="373.07" fill="#ebf1de"/>
<rect x="41.30" y="310.30" width="85.40" height="373.07" fill="#ebf1de"/>
<rect x="126.70" y="310.30" width="26.80" height="373.07" fill="#d8e4bc"/>
<rect x="153.50" y="310.30" width="118.10" height="373.07" fill="#d8e4bc"/>
<rect x="271.60" y="310.30" width="18.80" height="373.07" fill="#c5d9f1"/>
<rect x="290.40" y="310.30" width="20.20" height="373.07" fill="#c5d9f1"/>
<rect x="310.60" y="310.30" width="64.00" height="373.07" fill="#c5d9f1"/>
<rect x="374.60" y="310.30" width="20.00" height="373.07" fill="#c5d9f1"/>
<rect x="394.60" y="310.30" width="107.90" height="373.07" fill="#c5d9f1"/>
<rect x="502.50" y="310.30" width="108.50" height="373.07" fill="#c5d9f1"/>
<rect x="611.00" y="310.30" width="25.25" height="373.07" fill="#dce6f1"/>
<rect x="636.25" y="310.30" width="54.15" height="373.07" fill="#dce6f1"/>
<rect x="690.40" y="310.30" width="20.50" height="373.07" fill="#dce6f1"/>
<rect x="710.90" y="310.30" width="21.00" height="373.07" fill="#dce6f1"/>
<rect x="731.90" y="310.30" width="21.00" height="373.07" fill="#dce6f1"/>
<rect x="752.90" y="310.30" width="21.50" height="373.07" fill="#dce6f1"/>
<rect x="774.40" y="310.30" width="20.20" height="373.07" fill="#dce6f1"/>
<rect x="794.60" y="310.30" width="18.70" height="373.07" fill="#dce6f1"/>
<rect x="813.30" y="310.30" width="20.20" height="373.07" fill="#dce6f1"/>
<rect x="833.50" y="310.30" width="20.00" height="373.07" fill="#dce6f1"/>
<rect x="853.50" y="310.30" width="19.30" height="373.07" fill="#dce6f1"/>
<rect x="872.80" y="310.30" width="19.70" height="373.07" fill="#dce6f1"/>
<rect x="892.50" y="310.30" width="20.00" height="373.07" fill="#dce6f1"/>
<rect x="912.50" y="310.30" width="40.25" height="373.07" fill="#dce6f1"/>
<rect x="952.75" y="310.30" width="24.35" height="373.07" fill="#dce6f1"/>
<rect x="977.10" y="310.30" width="24.15" height="373.07" fill="#dce6f1"/>
<rect x="1001.25" y="310.30" width="24.15" height="373.07" fill="#dce6f1"/>
<rect x="1025.40" y="310.30" width="24.20" height="373.07" fill="#dce6f1"/>
<rect x="1049.60" y="310.30" width="28.30" height="373.07" fill="#dce6f1"/>
<rect x="1077.90" y="310.30" width="28.35" height="373.07" fill="#dce6f1"/>
<rect x="1106.25" y="310.30" width="45.35" height="373.07" fill="#dce6f1"/>
<rect x="1151.60" y="310.30" width="19.00" height="373.07" fill="#dce6f1"/>
<rect x="1170.60" y="310.30" width="20.00" height="373.07" fill="#dce6f1"/>
<rect x="1190.60" y="310.30" width="36.90" height="373.07" fill="#efefef"/>
<rect x="1227.50" y="310.30" width="30.00" height="373.07" fill="#efefef"/>
<rect x="1257.50" y="310.30" width="20.25" height="373.07" fill="#efefef"/>
<rect x="1277.75" y="310.30" width="32.25" height="373.07" fill="#efefef"/>
<line x1="17" y1="310.30" x2="1280" y2="310.30" stroke="#606060" stroke-width="1.4"/>
<line x1="17" y1="311.30" x2="1280" y2="311.30" stroke="#ffffff" stroke-opacity="0.45" stroke-width="0.8"/>
<line x1="17" y1="320.38" x2="1280" y2="320.38" stroke="#4a4a4a" stroke-width="1.0"/>
<line x1="17" y1="321.38" x2="1280" y2="321.38" stroke="#ffffff" stroke-opacity="0.45" stroke-width="0.8"/>
<line x1="17" y1="330.47" x2="1280" y2="330.47" stroke="#4a4a4a" stroke-width="1.0"/>
<line x1="17" y1="331.47" x2="1280" y2="331.47" stroke="#ffffff" stroke-opacity="0.45" stroke-width="0.8"/>
<line x1="17" y1="340.55" x2="1280" y2="340.55" stroke="#4a4a4a" stroke-width="1.0"/>
<line x1="17" y1="341.55" x2="1280" y2="341.55" stroke="#ffffff" stroke-opacity="0.45" stroke-width="0.8"/>
<line x1="17" y1="350.63" x2="1280" y2="350.63" stroke="#4a4a4a" stroke-width="1.0"/>
<line x1="17" y1="351.63" x2="1280" y2="351.63" stroke="#ffffff" stroke-opacity="0.45" stroke-width="0.8"/>
<line x1="17" y1="360.72" x2="1280" y2="360.72" stroke="#4a4a4a" stroke-width="1.0"/>
<line x1="17" y1="361.72" x2="1280" y2="361.72" stroke="#ffffff" stroke-opacity="0.45" stroke-width="0.8"/>
<line x1="17" y1="370.80" x2="1280" y2="370.80" stroke="#4a4a4a" stroke-width="1.0"/>
<line x1="17" y1="371.80" x2="1280" y2="371.80" stroke="#ffffff" stroke-opacity="0.45" stroke-width="0.8"/>
<line x1="17" y1="380.88" x2="1280" y2="380.88" stroke="#4a4a4a" stroke-width="1.0"/>
<line x1="17" y1="381.88" x2="1280" y2="381.88" stroke="#ffffff" stroke-opacity="0.45" stroke-width="0.8"/>
<line x1="17" y1="390.96" x2="1280" y2="390.96" stroke="#4a4a4a" stroke-width="1.0"/>
<line x1="17" y1="391.96" x2="1280" y2="391.96" stroke="#ffffff" stroke-opacity="0.45" stroke-width="0.8"/>
<line x1="17" y1="401.05" x2="1280" y2="401.05" stroke="#4a4a4a" stroke-width="1.0"/>
<line x1="17" y1="402.05" x2="1280" y2="402.05" stroke="#ffffff" stroke-opacity="0.45" stroke-width="0.8"/>
<line x1="17" y1="411.13" x2="1280" y2="411.13" stroke="#4a4a4a" stroke-width="1.0"/>
<line x1="17" y1="412.13" x2="1280" y2="412.13" stroke="#ffffff" stroke-opacity="0.45" stroke-width="0.8"/>
<line x1="17" y1="421.21" x2="1280" y2="421.21" stroke="#4a4a4a" stroke-width="1.0"/>
<line x1="17" y1="422.21" x2="1280" y2="422.21" stroke="#ffffff" stroke-opacity="0.45" stroke-width="0.8"/>
<line x1="17" y1="431.30" x2="1280" y2="431.30" stroke="#4a4a4a" stroke-width="1.0"/>
<line x1="17" y1="432.30" x2="1280" y2="432.30" stroke="#ffffff" stroke-opacity="0.45" stroke-width="0.8"/>
<line x1="17" y1="441.38" x2="1280" y2="441.38" stroke="#4a4a4a" stroke-width="1.0"/>
<line x1="17" y1="442.38" x2="1280" y2="442.38" stroke="#ffffff" stroke-opacity="0.45" stroke-width="0.8"/>
<line x1="17" y1="451.46" x2="1280" y2="451.46" stroke="#4a4a4a" stroke-width="1.0"/>
<line x1="17" y1="452.46" x2="1280" y2="452.46" stroke="#ffffff" stroke-opacity="0.45" stroke-width="0.8"/>
<line x1="17" y1="461.55" x2="1280" y2="461.55" stroke="#4a4a4a" stroke-width="1.0"/>
<line x1="17" y1="462.55" x2="1280" y2="462.55" stroke="#ffffff" stroke-opacity="0.45" stroke-width="0.8"/>
<line x1="17" y1="471.63" x2="1280" y2="471.63" stroke="#4a4a4a" stroke-width="1.0"/>
<line x1="17" y1="472.63" x2="1280" y2="472.63" stroke="#ffffff" stroke-opacity="0.45" stroke-width="0.8"/>
<line x1="17" y1="481.71" x2="1280" y2="481.71" stroke="#4a4a4a" stroke-width="1.0"/>
<line x1="17" y1="482.71" x2="1280" y2="482.71" stroke="#ffffff" stroke-opacity="0.45" stroke-width="0.8"/>
<line x1="17" y1="491.79" x2="1280" y2="491.79" stroke="#4a4a4a" stroke-width="1.0"/>
<line x1="17" y1="492.79" x2="1280" y2="492.79" stroke="#ffffff" stroke-opacity="0.45" stroke-width="0.8"/>
<line x1="17" y1="501.88" x2="1280" y2="501.88" stroke="#4a4a4a" stroke-width="1.0"/>
<line x1="17" y1="502.88" x2="1280" y2="502.88" stroke="#ffffff" stroke-opacity="0.45" stroke-width="0.8"/>
<line x1="17" y1="511.96" x2="1280" y2="511.96" stroke="#4a4a4a" stroke-width="1.0"/>
<line x1="17" y1="512.96" x2="1280" y2="512.96" stroke="#ffffff" stroke-opacity="0.45" stroke-width="0.8"/>
<line x1="17" y1="522.04" x2="1280" y2="522.04" stroke="#4a4a4a" stroke-width="1.0"/>
<line x1="17" y1="523.04" x2="1280" y2="523.04" stroke="#ffffff" stroke-opacity="0.45" stroke-width="0.8"/>
<line x1="17" y1="532.13" x2="1280" y2="532.13" stroke="#4a4a4a" stroke-width="1.0"/>
<line x1="17" y1="533.13" x2="1280" y2="533.13" stroke="#ffffff" stroke-opacity="0.45" stroke-width="0.8"/>
<line x1="17" y1="542.21" x2="1280" y2="542.21" stroke="#4a4a4a" stroke-width="1.0"/>
<line x1="17" y1="543.21" x2="1280" y2="543.21" stroke="#ffffff" stroke-opacity="0.45" stroke-width="0.8"/>
<line x1="17" y1="552.29" x2="1280" y2="552.29" stroke="#4a4a4a" stroke-width="1.0"/>
<line x1="17" y1="553.29" x2="1280" y2="553.29" stroke="#ffffff" stroke-opacity="0.45" stroke-width="0.8"/>
<line x1="17" y1="562.38" x2="1280" y2="562.38" stroke="#4a4a4a" stroke-width="1.0"/>
<line x1="17" y1="563.38" x2="1280" y2="563.38" stroke="#ffffff" stroke-opacity="0.45" stroke-width="0.8"/>
<line x1="17" y1="572.46" x2="1280" y2="572.46" stroke="#4a4a4a" stroke-width="1.0"/>
<line x1="17" y1="573.46" x2="1280" y2="573.46" stroke="#ffffff" stroke-opacity="0.45" stroke-width="0.8"/>
<line x1="17" y1="582.54" x2="1280" y2="582.54" stroke="#4a4a4a" stroke-width="1.0"/>
<line x1="17" y1="583.54" x2="1280" y2="583.54" stroke="#ffffff" stroke-opacity="0.45" stroke-width="0.8"/>
<line x1="17" y1="592.62" x2="1280" y2="592.62" stroke="#4a4a4a" stroke-width="1.0"/>
<line x1="17" y1="593.62" x2="1280" y2="593.62" stroke="#ffffff" stroke-opacity="0.45" stroke-width="0.8"/>
<line x1="17" y1="602.71" x2="1280" y2="602.71" stroke="#4a4a4a" stroke-width="1.0"/>
<line x1="17" y1="603.71" x2="1280" y2="603.71" stroke="#ffffff" stroke-opacity="0.45" stroke-width="0.8"/>
<line x1="17" y1="612.79" x2="1280" y2="612.79" stroke="#4a4a4a" stroke-width="1.0"/>
<line x1="17" y1="613.79" x2="1280" y2="613.79" stroke="#ffffff" stroke-opacity="0.45" stroke-width="0.8"/>
<line x1="17" y1="622.87" x2="1280" y2="622.87" stroke="#4a4a4a" stroke-width="1.0"/>
<line x1="17" y1="623.87" x2="1280" y2="623.87" stroke="#ffffff" stroke-opacity="0.45" stroke-width="0.8"/>
<line x1="17" y1="632.96" x2="1280" y2="632.96" stroke="#4a4a4a" stroke-width="1.0"/>
<line x1="17" y1="633.96" x2="1280" y2="633.96" stroke="#ffffff" stroke-opacity="0.45" stroke-width="0.8"/>
<line x1="17" y1="643.04" x2="1280" y2="643.04" stroke="#4a4a4a" stroke-width="1.0"/>
<line x1="17" y1="644.04" x2="1280" y2="644.04" stroke="#ffffff" stroke-opacity="0.45" stroke-width="0.8"/>
<line x1="17" y1="653.12" x2="1280" y2="653.12" stroke="#4a4a4a" stroke-width="1.0"/>
<line x1="17" y1="654.12" x2="1280" y2="654.12" stroke="#ffffff" stroke-opacity="0.45" stroke-width="0.8"/>
<line x1="17" y1="663.21" x2="1280" y2="663.21" stroke="#4a4a4a" stroke-width="1.0"/>
<line x1="17" y1="664.21" x2="1280" y2="664.21" stroke="#ffffff" stroke-opacity="0.45" stroke-width="0.8"/>
<line x1="17" y1="673.29" x2="1280" y2="673.29" stroke="#4a4a4a" stroke-width="1.0"/>
<line x1="17" y1="674.29" x2="1280" y2="674.29" stroke="#ffffff" stroke-opacity="0.45" stroke-width="0.8"/>
<line x1="17" y1="683.37" x2="1280" y2="683.37" stroke="#4a4a4a" stroke-width="1.0"/>
<g clip-path="url(#data)">
<line x1="17.00" y1="310.30" x2="17.00" y2="320.38" stroke="#4a4a4a" stroke-width="1.0"/>
<line x1="41.30" y1="310.30" x2="41.30" y2="320.38" stroke="#8c8c8c" stroke-width="1.0"/>
<line x1="126.70" y1="310.30" x2="126.70" y2="320.38" stroke="#2a2a2a" stroke-width="1.5"/>
<line x1="153.50" y1="310.30" x2="153.50" y2="320.38" stroke="#8c8c8c" stroke-width="1.0"/>
<line x1="271.60" y1="310.30" x2="271.60" y2="320.38" stroke="#2a2a2a" stroke-width="1.5"/>
<line x1="290.40" y1="310.30" x2="290.40" y2="320.38" stroke="#8c8c8c" stroke-width="1.0"/>
<line x1="310.60" y1="310.30" x2="310.60" y2="320.38" stroke="#8c8c8c" stroke-width="1.0"/>
<line x1="374.60" y1="310.30" x2="374.60" y2="320.38" stroke="#4a4a4a" stroke-width="1.0"/>
<line x1="394.60" y1="310.30" x2="394.60" y2="320.38" stroke="#8c8c8c" stroke-width="1.0"/>
<line x1="502.50" y1="310.30" x2="502.50" y2="320.38" stroke="#2a2a2a" stroke-width="1.5"/>
<line x1="611.00" y1="310.30" x2="611.00" y2="320.38" stroke="#2a2a2a" stroke-width="1.5"/>
<line x1="636.25" y1="310.30" x2="636.25" y2="320.38" stroke="#8c8c8c" stroke-width="1.0"/>
<line x1="690.40" y1="310.30" x2="690.40" y2="320.38" stroke="#8c8c8c" stroke-width="1.0"/>
<line x1="710.90" y1="310.30" x2="710.90" y2="320.38" stroke="#8c8c8c" stroke-width="1.0"/>
<line x1="731.90" y1="310.30" x2="731.90" y2="320.38" stroke="#8c8c8c" stroke-width="1.0"/>
<line x1="752.90" y1="310.30" x2="752.90" y2="320.38" stroke="#4a4a4a" stroke-width="1.0"/>
<line x1="774.40" y1="310.30" x2="774.40" y2="320.38" stroke="#4a4a4a" stroke-width="1.0"/>
<line x1="794.60" y1="310.30" x2="794.60" y2="320.38" stroke="#4a4a4a" stroke-width="1.0"/>
<line x1="813.30" y1="310.30" x2="813.30" y2="320.38" stroke="#4a4a4a" stroke-width="1.0"/>
<line x1="833.50" y1="310.30" x2="833.50" y2="320.38" stroke="#4a4a4a" stroke-width="1.0"/>
<line x1="853.50" y1="310.30" x2="853.50" y2="320.38" stroke="#4a4a4a" stroke-width="1.0"/>
<line x1="872.80" y1="310.30" x2="872.80" y2="320.38" stroke="#4a4a4a" stroke-width="1.0"/>
<line x1="892.50" y1="310.30" x2="892.50" y2="320.38" stroke="#4a4a4a" stroke-width="1.0"/>
<line x1="912.50" y1="310.30" x2="912.50" y2="320.38" stroke="#4a4a4a" stroke-width="1.0"/>
<line x1="952.75" y1="310.30" x2="952.75" y2="320.38" stroke="#4a4a4a" stroke-width="1.0"/>
<line x1="977.10" y1="310.30" x2="977.10" y2="320.38" stroke="#4a4a4a" stroke-width="1.0"/>
<line x1="1001.25" y1="310.30" x2="1001.25" y2="320.38" stroke="#4a4a4a" stroke-width="1.0"/>
<line x1="1025.40" y1="310.30" x2="1025.40" y2="320.38" stroke="#4a4a4a" stroke-width="1.0"/>
<line x1="1049.60" y1="310.30" x2="1049.60" y2="320.38" stroke="#4a4a4a" stroke-width="1.0"/>
<line x1="1077.90" y1="310.30" x2="1077.90" y2="320.38" stroke="#4a4a4a" stroke-width="1.0"/>
<line x1="1106.25" y1="310.30" x2="1106.25" y2="320.38" stroke="#4a4a4a" stroke-width="1.0"/>
<line x1="1151.60" y1="310.30" x2="1151.60" y2="320.38" stroke="#4a4a4a" stroke-width="1.0"/>
<line x1="1170.60" y1="310.30" x2="1170.60" y2="320.38" stroke="#4a4a4a" stroke-width="1.0"/>
<line x1="1190.60" y1="310.30" x2="1190.60" y2="320.38" stroke="#2a2a2a" stroke-width="1.5"/>
<line x1="1227.50" y1="310.30" x2="1227.50" y2="320.38" stroke="#4a4a4a" stroke-width="1.0"/>
<line x1="1257.50" y1="310.30" x2="1257.50" y2="320.38" stroke="#4a4a4a" stroke-width="1.0"/>
<line x1="1277.75" y1="310.30" x2="1277.75" y2="320.38" stroke="#2a2a2a" stroke-width="1.5"/>
<line x1="17.00" y1="320.38" x2="17.00" y2="330.47" stroke="#4a4a4a" stroke-width="1.0"/>
<line x1="41.30" y1="320.38" x2="41.30" y2="330.47" stroke="#8c8c8c" stroke-width="1.0"/>
<line x1="126.70" y1="320.38" x2="126.70" y2="330.47" stroke="#2a2a2a" stroke-width="1.5"/>
<line x1="153.50" y1="320.38" x2="153.50" y2="330.47" stroke="#8c8c8c" stroke-width="1.0"/>
<line x1="271.60" y1="320.38" x2="271.60" y2="330.47" stroke="#2a2a2a" stroke-width="1.5"/>
<line x1="290.40" y1="320.38" x2="290.40" y2="330.47" stroke="#8c8c8c" stroke-width="1.0"/>
<line x1="310.60" y1="320.38" x2="310.60" y2="330.47" stroke="#8c8c8c" stroke-width="1.0"/>
<line x1="374.60" y1="320.38" x2="374.60" y2="330.47" stroke="#4a4a4a" stroke-width="1.0"/>
<line x1="394.60" y1="320.38" x2="394.60" y2="330.47" stroke="#8c8c8c" stroke-width="1.0"/>
<line x1="502.50" y1="320.38" x2="502.50" y2="330.47" stroke="#2a2a2a" stroke-width="1.5"/>
<line x1="611.00" y1="320.38" x2="611.00" y2="330.47" stroke="#2a2a2a" stroke-width="1.5"/>
<line x1="636.25" y1="320.38" x2="636.25" y2="330.47" stroke="#8c8c8c" stroke-width="1.0"/>
<line x1="690.40" y1="320.38" x2="690.40" y2="330.47" stroke="#8c8c8c" stroke-width="1.0"/>
<line x1="710.90" y1="320.38" x2="710.90" y2="330.47" stroke="#8c8c8c" stroke-width="1.0"/>
<line x1="731.90" y1="320.38" x2="731.90" y2="330.47" stroke="#8c8c8c" stroke-width="1.0"/>
<line x1="752.90" y1="320.38" x2="752.90" y2="330.47" stroke="#4a4a4a" stroke-width="1.0"/>
<line x1="774.40" y1="320.38" x2="774.40" y2="330.47" stroke="#4a4a4a" stroke-width="1.0"/>
<line x1="794.60" y1="320.38" x2="794.60" y2="330.47" stroke="#4a4a4a" stroke-width="1.0"/>
<line x1="813.30" y1="320.38" x2="813.30" y2="330.47" stroke="#4a4a4a" stroke-width="1.0"/>
<line x1="833.50" y1="320.38" x2="833.50" y2="330.47" stroke="#4a4a4a" stroke-width="1.0"/>
<line x1="853.50" y1="320.38" x2="853.50" y2="330.47" stroke="#4a4a4a" stroke-width="1.0"/>
<line x1="872.80" y1="320.38" x2="872.80" y2="330.47" stroke="#4a4a4a" stroke-width="1.0"/>
<line x1="892.50" y1="320.38" x2="892.50" y2="330.47" stroke="#4a4a4a" stroke-width="1.0"/>
<line x1="912.50" y1="320.38" x2="912.50" y2="330.47" stroke="#4a4a4a" stroke-width="1.0"/>
<line x1="952.75" y1="320.38" x2="952.75" y2="330.47" stroke="#4a4a4a" stroke-width="1.0"/>
<line x1="977.10" y1="320.38" x2="977.10" y2="330.47" stroke="#4a4a4a" stroke-width="1.0"/>
<line x1="1001.25" y1="320.38" x2="1001.25" y2="330.47" stroke="#4a4a4a" stroke-width="1.0"/>
<line x1="1025.40" y1="320.38" x2="1025.40" y2="330.47" stroke="#4a4a4a" stroke-width="1.0"/>
<line x1="1049.60" y1="320.38" x2="1049.60" y2="330.47" stroke="#4a4a4a" stroke-width="1.0"/>
<line x1="1077.90" y1="320.38" x2="1077.90" y2="330.47" stroke="#4a4a4a" stroke-width="1.0"/>
<line x1="1106.25" y1="320.38" x2="1106.25" y2="330.47" stroke="#4a4a4a" stroke-width="1.0"/>
<line x1="1151.60" y1="320.38" x2="1151.60" y2="330.47" stroke="#4a4a4a" stroke-width="1.0"/>
<line x1="1170.60" y1="320.38" x2="1170.60" y2="330.47" stroke="#4a4a4a" stroke-width="1.0"/>
<line x1="1190.60" y1="320.38" x2="1190.60" y2="330.47" stroke="#2a2a2a" stroke-width="1.5"/>
<line x1="1227.50" y1="320.38" x2="1227.50" y2="330.47" stroke="#4a4a4a" stroke-width="1.0"/>
<line x1="1257.50" y1="320.38" x2="1257.50" y2="330.47" stroke="#4a4a4a" stroke-width="1.0"/>
<line x1="1277.75" y1="320.38" x2="1277.75" y2="330.47" stroke="#2a2a2a" stroke-width="1.5"/>
<line x1="17.00" y1="330.47" x2="17.00" y2="340.55" stroke="#4a4a4a" stroke-width="1.0"/>
<line x1="41.30" y1="330.47" x2="41.30" y2="340.55" stroke="#8c8c8c" stroke-width="1.0"/>
<line x1="126.70" y1="330.47" x2="126.70" y2="340.55" stroke="#2a2a2a" stroke-width="1.5"/>
<line x1="153.50" y1="330.47" x2="153.50" y2="340.55" stroke="#8c8c8c" stroke-width="1.0"/>
<line x1="271.60" y1="330.47" x2="271.60" y2="340.55" stroke="#2a2a2a" stroke-width="1.5"/>
<line x1="290.40" y1="330.47" x2="290.40" y2="340.55" stroke="#8c8c8c" stroke-width="1.0"/>
<line x1="310.60" y1="330.47" x2="310.60" y2="340.55" stroke="#8c8c8c" stroke-width="1.0"/>
<line x1="374.60" y1="330.47" x2="374.60" y2="340.55" stroke="#4a4a4a" stroke-width="1.0"/>
<line x1="394.60" y1="330.47" x2="394.60" y2="340.55" stroke="#8c8c8c" stroke-width="1.0"/>
<line x1="502.50" y1="330.47" x2="502.50" y2="340.55" stroke="#2a2a2a" stroke-width="1.5"/>
<line x1="611.00" y1="330.47" x2="611.00" y2="340.55" stroke="#2a2a2a" stroke-width="1.5"/>
<line x1="636.25" y1="330.47" x2="636.25" y2="340.55" stroke="#8c8c8c" stroke-width="1.0"/>
<line x1="752.90" y1="330.47" x2="752.90" y2="340.55" stroke="#4a4a4a" stroke-width="1.0"/>
<line x1="774.40" y1="330.47" x2="774.40" y2="340.55" stroke="#4a4a4a" stroke-width="1.0"/>
<line x1="794.60" y1="330.47" x2="794.60" y2="340.55" stroke="#4a4a4a" stroke-width="1.0"/>
<line x1="813.30" y1="330.47" x2="813.30" y2="340.55" stroke="#4a4a4a" stroke-width="1.0"/>
<line x1="833.50" y1="330.47" x2="833.50" y2="340.55" stroke="#4a4a4a" stroke-width="1.0"/>
<line x1="853.50" y1="330.47" x2="853.50" y2="340.55" stroke="#4a4a4a" stroke-width="1.0"/>
<line x1="872.80" y1="330.47" x2="872.80" y2="340.55" stroke="#4a4a4a" stroke-width="1.0"/>
<line x1="892.50" y1="330.47" x2="892.50" y2="340.55" stroke="#4a4a4a" stroke-width="1.0"/>
<line x1="912.50" y1="330.47" x2="912.50" y2="340.55" stroke="#4a4a4a" stroke-width="1.0"/>
<line x1="952.75" y1="330.47" x2="952.75" y2="340.55" stroke="#4a4a4a" stroke-width="1.0"/>
<line x1="977.10" y1="330.47" x2="977.10" y2="340.55" stroke="#4a4a4a" stroke-width="1.0"/>
<line x1="1001.25" y1="330.47" x2="1001.25" y2="340.55" stroke="#4a4a4a" stroke-width="1.0"/>
<line x1="1025.40" y1="330.47" x2="1025.40" y2="340.55" stroke="#4a4a4a" stroke-width="1.0"/>
<line x1="1049.60" y1="330.47" x2="1049.60" y2="340.55" stroke="#4a4a4a" stroke-width="1.0"/>
<line x1="1077.90" y1="330.47" x2="1077.90" y2="340.55" stroke="#4a4a4a" stroke-width="1.0"/>
<line x1="1106.25" y1="330.47" x2="1106.25" y2="340.55" stroke="#4a4a4a" stroke-width="1.0"/>
<line x1="1151.60" y1="330.47" x2="1151.60" y2="340.55" stroke="#4a4a4a" stroke-width="1.0"/>
<line x1="1170.60" y1="330.47" x2="1170.60" y2="340.55" stroke="#4a4a4a" stroke-width="1.0"/>
<line x1="1190.60" y1="330.47" x2="1190.60" y2="340.55" stroke="#2a2a2a" stroke-width="1.5"/>
<line x1="1227.50" y1="330.47" x2="1227.50" y2="340.55" stroke="#4a4a4a" stroke-width="1.0"/>
<line x1="1257.50" y1="330.47" x2="1257.50" y2="340.55" stroke="#4a4a4a" stroke-width="1.0"/>
<line x1="1277.75" y1="330.47" x2="1277.75" y2="340.55" stroke="#2a2a2a" stroke-width="1.5"/>
<line x1="17.00" y1="340.55" x2="17.00" y2="350.63" stroke="#4a4a4a" stroke-width="1.0"/>
<line x1="41.30" y1="340.55" x2="41.30" y2="350.63" stroke="#8c8c8c" stroke-width="1.0"/>
<line x1="126.70" y1="340.55" x2="126.70" y2="350.63" stroke="#2a2a2a" stroke-width="1.5"/>
<line x1="153.50" y1="340.55" x2="153.50" y2="350.63" stroke="#8c8c8c" stroke-width="1.0"/>
<line x1="271.60" y1="340.55" x2="271.60" y2="350.63" stroke="#2a2a2a" stroke-width="1.5"/>
<line x1="290.40" y1="340.55" x2="290.40" y2="350.63" stroke="#8c8c8c" stroke-width="1.0"/>
<line x1="310.60" y1="340.55" x2="310.60" y2="350.63" stroke="#8c8c8c" stroke-width="1.0"/>
<line x1="374.60" y1="340.55" x2="374.60" y2="350.63" stroke="#4a4a4a" stroke-width="1.0"/>
<line x1="394.60" y1="340.55" x2="394.60" y2="350.63" stroke="#8c8c8c" stroke-width="1.0"/>
<line x1="502.50" y1="340.55" x2="502.50" y2="350.63" stroke="#2a2a2a" stroke-width="1.5"/>
<line x1="611.00" y1="340.55" x2="611.00" y2="350.63" stroke="#2a2a2a" stroke-width="1.5"/>
<line x1="636.25" y1="340.55" x2="636.25" y2="350.63" stroke="#8c8c8c" stroke-width="1.0"/>
<line x1="752.90" y1="340.55" x2="752.90" y2="350.63" stroke="#4a4a4a" stroke-width="1.0"/>
<line x1="774.40" y1="340.55" x2="774.40" y2="350.63" stroke="#4a4a4a" stroke-width="1.0"/>
<line x1="794.60" y1="340.55" x2="794.60" y2="350.63" stroke="#4a4a4a" stroke-width="1.0"/>
<line x1="813.30" y1="340.55" x2="813.30" y2="350.63" stroke="#4a4a4a" stroke-width="1.0"/>
<line x1="833.50" y1="340.55" x2="833.50" y2="350.63" stroke="#4a4a4a" stroke-width="1.0"/>
<line x1="853.50" y1="340.55" x2="853.50" y2="350.63" stroke="#4a4a4a" stroke-width="1.0"/>
<line x1="872.80" y1="340.55" x2="872.80" y2="350.63" stroke="#4a4a4a" stroke-width="1.0"/>
<line x1="892.50" y1="340.55" x2="892.50" y2="350.63" stroke="#4a4a4a" stroke-width="1.0"/>
<line x1="912.50" y1="340.55" x2="912.50" y2="350.63" stroke="#4a4a4a" stroke-width="1.0"/>
<line x1="952.75" y1="340.55" x2="952.75" y2="350.63" stroke="#4a4a4a" stroke-width="1.0"/>
<line x1="977.10" y1="340.55" x2="977.10" y2="350.63" stroke="#4a4a4a" stroke-width="1.0"/>
<line x1="1001.25" y1="340.55" x2="1001.25" y2="350.63" stroke="#4a4a4a" stroke-width="1.0"/>
<line x1="1025.40" y1="340.55" x2="1025.40" y2="350.63" stroke="#4a4a4a" stroke-width="1.0"/>
<line x1="1049.60" y1="340.55" x2="1049.60" y2="350.63" stroke="#4a4a4a" stroke-width="1.0"/>
<line x1="1077.90" y1="340.55" x2="1077.90" y2="350.63" stroke="#4a4a4a" stroke-width="1.0"/>
<line x1="1106.25" y1="340.55" x2="1106.25" y2="350.63" stroke="#4a4a4a" stroke-width="1.0"/>
<line x1="1151.60" y1="340.55" x2="1151.60" y2="350.63" stroke="#4a4a4a" stroke-width="1.0"/>
<line x1="1170.60" y1="340.55" x2="1170.60" y2="350.63" stroke="#4a4a4a" stroke-width="1.0"/>
<line x1="1190.60" y1="340.55" x2="1190.60" y2="350.63" stroke="#2a2a2a" stroke-width="1.5"/>
<line x1="1227.50" y1="340.55" x2="1227.50" y2="350.63" stroke="#4a4a4a" stroke-width="1.0"/>
<line x1="1257.50" y1="340.55" x2="1257.50" y2="350.63" stroke="#4a4a4a" stroke-width="1.0"/>
<line x1="1277.75" y1="340.55" x2="1277.75" y2="350.63" stroke="#2a2a2a" stroke-width="1.5"/>
<line x1="17.00" y1="350.63" x2="17.00" y2="360.72" stroke="#4a4a4a" stroke-width="1.0"/>
<line x1="41.30" y1="350.63" x2="41.30" y2="360.72" stroke="#8c8c8c" stroke-width="1.0"/>
<line x1="126.70" y1="350.63" x2="126.70" y2="360.72" stroke="#2a2a2a" stroke-width="1.5"/>
<line x1="153.50" y1="350.63" x2="153.50" y2="360.72" stroke="#8c8c8c" stroke-width="1.0"/>
<line x1="271.60" y1="350.63" x2="271.60" y2="360.72" stroke="#2a2a2a" stroke-width="1.5"/>
<line x1="290.40" y1="350.63" x2="290.40" y2="360.72" stroke="#8c8c8c" stroke-width="1.0"/>
<line x1="310.60" y1="350.63" x2="310.60" y2="360.72" stroke="#8c8c8c" stroke-width="1.0"/>
<line x1="374.60" y1="350.63" x2="374.60" y2="360.72" stroke="#4a4a4a" stroke-width="1.0"/>
<line x1="394.60" y1="350.63" x2="394.60" y2="360.72" stroke="#8c8c8c" stroke-width="1.0"/>
<line x1="502.50" y1="350.63" x2="502.50" y2="360.72" stroke="#2a2a2a" stroke-width="1.5"/>
<line x1="611.00" y1="350.63" x2="611.00" y2="360.72" stroke="#2a2a2a" stroke-width="1.5"/>
<line x1="636.25" y1="350.63" x2="636.25" y2="360.72" stroke="#8c8c8c" stroke-width="1.0"/>
<line x1="752.90" y1="350.63" x2="752.90" y2="360.72" stroke="#4a4a4a" stroke-width="1.0"/>
<line x1="774.40" y1="350.63" x2="774.40" y2="360.72" stroke="#4a4a4a" stroke-width="1.0"/>
<line x1="794.60" y1="350.63" x2="794.60" y2="360.72" stroke="#4a4a4a" stroke-width="1.0"/>
<line x1="813.30" y1="350.63" x2="813.30" y2="360.72" stroke="#4a4a4a" stroke-width="1.0"/>
<line x1="833.50" y1="350.63" x2="833.50" y2="360.72" stroke="#4a4a4a" stroke-width="1.0"/>
<line x1="853.50" y1="350.63" x2="853.50" y2="360.72" stroke="#4a4a4a" stroke-width="1.0"/>
<line x1="872.80" y1="350.63" x2="872.80" y2="360.72" stroke="#4a4a4a" stroke-width="1.0"/>
<line x1="892.50" y1="350.63" x2="892.50" y2="360.72" stroke="#4a4a4a" stroke-width="1.0"/>
<line x1="912.50" y1="350.63" x2="912.50" y2="360.72" stroke="#4a4a4a" stroke-width="1.0"/>
<line x1="952.75" y1="350.63" x2="952.75" y2="360.72" stroke="#4a4a4a" stroke-width="1.0"/>
<line x1="977.10" y1="350.63" x2="977.10" y2="360.72" stroke="#4a4a4a" stroke-width="1.0"/>
<line x1="1001.25" y1="350.63" x2="1001.25" y2="360.72" stroke="#4a4a4a" stroke-width="1.0"/>
<line x1="1025.40" y1="350.63" x2="1025.40" y2="360.72" stroke="#4a4a4a" stroke-width="1.0"/>
<line x1="1049.60" y1="350.63" x2="1049.60" y2="360.72" stroke="#4a4a4a" stroke-width="1.0"/>
<line x1="1077.90" y1="350.63" x2="1077.90" y2="360.72" stroke="#4a4a4a" stroke-width="1.0"/>
<line x1="1106.25" y1="350.63" x2="1106.25" y2="360.72" stroke="#4a4a4a" stroke-width="1.0"/>
<line x1="1151.60" y1="350.63" x2="1151.60" y2="360.72" stroke="#4a4a4a" stroke-width="1.0"/>
<line x1="1170.60" y1="350.63" x2="1170.60" y2="360.72" stroke="#4a4a4a" stroke-width="1.0"/>
<line x1="1190.60" y1="350.63" x2="1190.60" y2="360.72" stroke="#2a2a2a" stroke-width="1.5"/>
<line x1="1227.50" y1="350.63" x2="1227.50" y2="360.72" stroke="#4a4a4a" stroke-width="1.0"/>
<line x1="1257.50" y1="350.63" x2="1257.50" y2="360.72" stroke="#4a4a4a" stroke-width="1.0"/>
<line x1="1277.75" y1="350.63" x2="1277.75" y2="360.72" stroke="#2a2a2a" stroke-width="1.5"/>
<line x1="17.00" y1="360.72" x2="17.00" y2="370.80" stroke="#4a4a4a" stroke-width="1.0"/>
<line x1="41.30" y1="360.72" x2="41.30" y2="370.80" stroke="#8c8c8c" stroke-width="1.0"/>
<line x1="126.70" y1="360.72" x2="126.70" y2="370.80" stroke="#2a2a2a" stroke-width="1.5"/>
<line x1="153.50" y1="360.72" x2="153.50" y2="370.80" stroke="#8c8c8c" stroke-width="1.0"/>
<line x1="271.60" y1="360.72" x2="271.60" y2="370.80" stroke="#2a2a2a" stroke-width="1.5"/>
<line x1="290.40" y1="360.72" x2="290.40" y2="370.80" stroke="#8c8c8c" stroke-width="1.0"/>
<line x1="310.60" y1="360.72" x2="310.60" y2="370.80" stroke="#8c8c8c" stroke-width="1.0"/>
<line x1="374.60" y1="360.72" x2="374.60" y2="370.80" stroke="#4a4a4a" stroke-width="1.0"/>
<line x1="394.60" y1="360.72" x2="394.60" y2="370.80" stroke="#8c8c8c" stroke-width="1.0"/>
<line x1="502.50" y1="360.72" x2="502.50" y2="370.80" stroke="#2a2a2a" stroke-width="1.5"/>
<line x1="611.00" y1="360.72" x2="611.00" y2="370.80" stroke="#2a2a2a" stroke-width="1.5"/>
<line x1="636.25" y1="360.72" x2="636.25" y2="370.80" stroke="#8c8c8c" stroke-width="1.0"/>
<line x1="752.90" y1="360.72" x2="752.90" y2="370.80" stroke="#4a4a4a" stroke-width="1.0"/>
<line x1="774.40" y1="360.72" x2="774.40" y2="370.80" stroke="#4a4a4a" stroke-width="1.0"/>
<line x1="794.60" y1="360.72" x2="794.60" y2="370.80" stroke="#4a4a4a" stroke-width="1.0"/>
<line x1="813.30" y1="360.72" x2="813.30" y2="370.80" stroke="#4a4a4a" stroke-width="1.0"/>
<line x1="833.50" y1="360.72" x2="833.50" y2="370.80" stroke="#4a4a4a" stroke-width="1.0"/>
<line x1="853.50" y1="360.72" x2="853.50" y2="370.80" stroke="#4a4a4a" stroke-width="1.0"/>
<line x1="872.80" y1="360.72" x2="872.80" y2="370.80" stroke="#4a4a4a" stroke-width="1.0"/>
<line x1="892.50" y1="360.72" x2="892.50" y2="370.80" stroke="#4a4a4a" stroke-width="1.0"/>
<line x1="912.50" y1="360.72" x2="912.50" y2="370.80" stroke="#4a4a4a" stroke-width="1.0"/>
<line x1="952.75" y1="360.72" x2="952.75" y2="370.80" stroke="#4a4a4a" stroke-width="1.0"/>
<line x1="977.10" y1="360.72" x2="977.10" y2="370.80" stroke="#4a4a4a" stroke-width="1.0"/>
<line x1="1001.25" y1="360.72" x2="1001.25" y2="370.80" stroke="#4a4a4a" stroke-width="1.0"/>
<line x1="1025.40" y1="360.72" x2="1025.40" y2="370.80" stroke="#4a4a4a" stroke-width="1.0"/>
<line x1="1049.60" y1="360.72" x2="1049.60" y2="370.80" stroke="#4a4a4a" stroke-width="1.0"/>
<line x1="1077.90" y1="360.72" x2="1077.90" y2="370.80" stroke="#4a4a4a" stroke-width="1.0"/>
<line x1="1106.25" y1="360.72" x2="1106.25" y2="370.80" stroke="#4a4a4a" stroke-width="1.0"/>
<line x1="1151.60" y1="360.72" x2="1151.60" y2="370.80" stroke="#4a4a4a" stroke-width="1.0"/>
<line x1="1170.60" y1="360.72" x2="1170.60" y2="370.80" stroke="#4a4a4a" stroke-width="1.0"/>
<line x1="1190.60" y1="360.72" x2="1190.60" y2="370.80" stroke="#2a2a2a" stroke-width="1.5"/>
<line x1="1227.50" y1="360.72" x2="1227.50" y2="370.80" stroke="#4a4a4a" stroke-width="1.0"/>
<line x1="1257.50" y1="360.72" x2="1257.50" y2="370.80" stroke="#4a4a4a" stroke-width="1.0"/>
<line x1="1277.75" y1="360.72" x2="1277.75" y2="370.80" stroke="#2a2a2a" stroke-width="1.5"/>
<line x1="17.00" y1="370.80" x2="17.00" y2="380.88" stroke="#4a4a4a" stroke-width="1.0"/>
<line x1="41.30" y1="370.80" x2="41.30" y2="380.88" stroke="#8c8c8c" stroke-width="1.0"/>
<line x1="126.70" y1="370.80" x2="126.70" y2="380.88" stroke="#2a2a2a" stroke-width="1.5"/>
<line x1="153.50" y1="370.80" x2="153.50" y2="380.88" stroke="#8c8c8c" stroke-width="1.0"/>
<line x1="271.60" y1="370.80" x2="271.60" y2="380.88" stroke="#2a2a2a" stroke-width="1.5"/>
<line x1="290.40" y1="370.80" x2="290.40" y2="380.88" stroke="#8c8c8c" stroke-width="1.0"/>
<line x1="310.60" y1="370.80" x2="310.60" y2="380.88" stroke="#8c8c8c" stroke-width="1.0"/>
<line x1="374.60" y1="370.80" x2="374.60" y2="380.88" stroke="#4a4a4a" stroke-width="1.0"/>
<line x1="394.60" y1="370.80" x2="394.60" y2="380.88" stroke="#8c8c8c" stroke-width="1.0"/>
<line x1="502.50" y1="370.80" x2="502.50" y2="380.88" stroke="#2a2a2a" stroke-width="1.5"/>
<line x1="611.00" y1="370.80" x2="611.00" y2="380.88" stroke="#2a2a2a" stroke-width="1.5"/>
<line x1="636.25" y1="370.80" x2="636.25" y2="380.88" stroke="#8c8c8c" stroke-width="1.0"/>
<line x1="752.90" y1="370.80" x2="752.90" y2="380.88" stroke="#4a4a4a" stroke-width="1.0"/>
<line x1="774.40" y1="370.80" x2="774.40" y2="380.88" stroke="#4a4a4a" stroke-width="1.0"/>
<line x1="794.60" y1="370.80" x2="794.60" y2="380.88" stroke="#4a4a4a" stroke-width="1.0"/>
<line x1="813.30" y1="370.80" x2="813.30" y2="380.88" stroke="#4a4a4a" stroke-width="1.0"/>
<line x1="833.50" y1="370.80" x2="833.50" y2="380.88" stroke="#4a4a4a" stroke-width="1.0"/>
<line x1="853.50" y1="370.80" x2="853.50" y2="380.88" stroke="#4a4a4a" stroke-width="1.0"/>
<line x1="872.80" y1="370.80" x2="872.80" y2="380.88" stroke="#4a4a4a" stroke-width="1.0"/>
<line x1="892.50" y1="370.80" x2="892.50" y2="380.88" stroke="#4a4a4a" stroke-width="1.0"/>
<line x1="912.50" y1="370.80" x2="912.50" y2="380.88" stroke="#4a4a4a" stroke-width="1.0"/>
<line x1="952.75" y1="370.80" x2="952.75" y2="380.88" stroke="#4a4a4a" stroke-width="1.0"/>
<line x1="977.10" y1="370.80" x2="977.10" y2="380.88" stroke="#4a4a4a" stroke-width="1.0"/>
<line x1="1001.25" y1="370.80" x2="1001.25" y2="380.88" stroke="#4a4a4a" stroke-width="1.0"/>
<line x1="1025.40" y1="370.80" x2="1025.40" y2="380.88" stroke="#4a4a4a" stroke-width="1.0"/>
<line x1="1049.60" y1="370.80" x2="1049.60" y2="380.88" stroke="#4a4a4a" stroke-width="1.0"/>
<line x1="1077.90" y1="370.80" x2="1077.90" y2="380.88" stroke="#4a4a4a" stroke-width="1.0"/>
<line x1="1106.25" y1="370.80" x2="1106.25" y2="380.88" stroke="#4a4a4a" stroke-width="1.0"/>
<line x1="1151.60" y1="370.80" x2="1151.60" y2="380.88" stroke="#4a4a4a" stroke-width="1.0"/>
<line x1="1170.60" y1="370.80" x2="1170.60" y2="380.88" stroke="#4a4a4a" stroke-width="1.0"/>
<line x1="1190.60" y1="370.80" x2="1190.60" y2="380.88" stroke="#2a2a2a" stroke-width="1.5"/>
<line x1="1227.50" y1="370.80" x2="1227.50" y2="380.88" stroke="#4a4a4a" stroke-width="1.0"/>
<line x1="1257.50" y1="370.80" x2="1257.50" y2="380.88" stroke="#4a4a4a" stroke-width="1.0"/>
<line x1="1277.75" y1="370.80" x2="1277.75" y2="380.88" stroke="#2a2a2a" stroke-width="1.5"/>
<line x1="17.00" y1="380.88" x2="17.00" y2="390.96" stroke="#4a4a4a" stroke-width="1.0"/>
<line x1="41.30" y1="380.88" x2="41.30" y2="390.96" stroke="#8c8c8c" stroke-width="1.0"/>
<line x1="126.70" y1="380.88" x2="126.70" y2="390.96" stroke="#2a2a2a" stroke-width="1.5"/>
<line x1="153.50" y1="380.88" x2="153.50" y2="390.96" stroke="#8c8c8c" stroke-width="1.0"/>
<line x1="271.60" y1="380.88" x2="271.60" y2="390.96" stroke="#2a2a2a" stroke-width="1.5"/>
<line x1="290.40" y1="380.88" x2="290.40" y2="390.96" stroke="#8c8c8c" stroke-width="1.0"/>
<line x1="310.60" y1="380.88" x2="310.60" y2="390.96" stroke="#8c8c8c" stroke-width="1.0"/>
<line x1="374.60" y1="380.88" x2="374.60" y2="390.96" stroke="#4a4a4a" stroke-width="1.0"/>
<line x1="394.60" y1="380.88" x2="394.60" y2="390.96" stroke="#8c8c8c" stroke-width="1.0"/>
<line x1="502.50" y1="380.88" x2="502.50" y2="390.96" stroke="#2a2a2a" stroke-width="1.5"/>
<line x1="611.00" y1="380.88" x2="611.00" y2="390.96" stroke="#2a2a2a" stroke-width="1.5"/>
<line x1="636.25" y1="380.88" x2="636.25" y2="390.96" stroke="#8c8c8c" stroke-width="1.0"/>
<line x1="752.90" y1="380.88" x2="752.90" y2="390.96" stroke="#4a4a4a" stroke-width="1.0"/>
<line x1="774.40" y1="380.88" x2="774.40" y2="390.96" stroke="#4a4a4a" stroke-width="1.0"/>
<line x1="794.60" y1="380.88" x2="794.60" y2="390.96" stroke="#4a4a4a" stroke-width="1.0"/>
<line x1="813.30" y1="380.88" x2="813.30" y2="390.96" stroke="#4a4a4a" stroke-width="1.0"/>
<line x1="833.50" y1="380.88" x2="833.50" y2="390.96" stroke="#4a4a4a" stroke-width="1.0"/>
<line x1="853.50" y1="380.88" x2="853.50" y2="390.96" stroke="#4a4a4a" stroke-width="1.0"/>
<line x1="872.80" y1="380.88" x2="872.80" y2="390.96" stroke="#4a4a4a" stroke-width="1.0"/>
<line x1="892.50" y1="380.88" x2="892.50" y2="390.96" stroke="#4a4a4a" stroke-width="1.0"/>
<line x1="912.50" y1="380.88" x2="912.50" y2="390.96" stroke="#4a4a4a" stroke-width="1.0"/>
<line x1="952.75" y1="380.88" x2="952.75" y2="390.96" stroke="#4a4a4a" stroke-width="1.0"/>
<line x1="977.10" y1="380.88" x2="977.10" y2="390.96" stroke="#4a4a4a" stroke-width="1.0"/>
<line x1="1001.25" y1="380.88" x2="1001.25" y2="390.96" stroke="#4a4a4a" stroke-width="1.0"/>
<line x1="1025.40" y1="380.88" x2="1025.40" y2="390.96" stroke="#4a4a4a" stroke-width="1.0"/>
<line x1="1049.60" y1="380.88" x2="1049.60" y2="390.96" stroke="#4a4a4a" stroke-width="1.0"/>
<line x1="1077.90" y1="380.88" x2="1077.90" y2="390.96" stroke="#4a4a4a" stroke-width="1.0"/>
<line x1="1106.25" y1="380.88" x2="1106.25" y2="390.96" stroke="#4a4a4a" stroke-width="1.0"/>
<line x1="1151.60" y1="380.88" x2="1151.60" y2="390.96" stroke="#4a4a4a" stroke-width="1.0"/>
<line x1="1170.60" y1="380.88" x2="1170.60" y2="390.96" stroke="#4a4a4a" stroke-width="1.0"/>
<line x1="1190.60" y1="380.88" x2="1190.60" y2="390.96" stroke="#2a2a2a" stroke-width="1.5"/>
<line x1="1227.50" y1="380.88" x2="1227.50" y2="390.96" stroke="#4a4a4a" stroke-width="1.0"/>
<line x1="1257.50" y1="380.88" x2="1257.50" y2="390.96" stroke="#4a4a4a" stroke-width="1.0"/>
<line x1="1277.75" y1="380.88" x2="1277.75" y2="390.96" stroke="#2a2a2a" stroke-width="1.5"/>
<line x1="17.00" y1="390.96" x2="17.00" y2="401.05" stroke="#4a4a4a" stroke-width="1.0"/>
<line x1="41.30" y1="390.96" x2="41.30" y2="401.05" stroke="#8c8c8c" stroke-width="1.0"/>
<line x1="126.70" y1="390.96" x2="126.70" y2="401.05" stroke="#2a2a2a" stroke-width="1.5"/>
<line x1="153.50" y1="390.96" x2="153.50" y2="401.05" stroke="#8c8c8c" stroke-width="1.0"/>
<line x1="271.60" y1="390.96" x2="271.60" y2="401.05" stroke="#2a2a2a" stroke-width="1.5"/>
<line x1="290.40" y1="390.96" x2="290.40" y2="401.05" stroke="#8c8c8c" stroke-width="1.0"/>
<line x1="310.60" y1="390.96" x2="310.60" y2="401.05" stroke="#8c8c8c" stroke-width="1.0"/>
<line x1="374.60" y1="390.96" x2="374.60" y2="401.05" stroke="#4a4a4a" stroke-width="1.0"/>
<line x1="394.60" y1="390.96" x2="394.60" y2="401.05" stroke="#8c8c8c" stroke-width="1.0"/>
<line x1="502.50" y1="390.96" x2="502.50" y2="401.05" stroke="#2a2a2a" stroke-width="1.5"/>
<line x1="611.00" y1="390.96" x2="611.00" y2="401.05" stroke="#2a2a2a" stroke-width="1.5"/>
<line x1="636.25" y1="390.96" x2="636.25" y2="401.05" stroke="#8c8c8c" stroke-width="1.0"/>
<line x1="752.90" y1="390.96" x2="752.90" y2="401.05" stroke="#4a4a4a" stroke-width="1.0"/>
<line x1="774.40" y1="390.96" x2="774.40" y2="401.05" stroke="#4a4a4a" stroke-width="1.0"/>
<line x1="794.60" y1="390.96" x2="794.60" y2="401.05" stroke="#4a4a4a" stroke-width="1.0"/>
<line x1="813.30" y1="390.96" x2="813.30" y2="401.05" stroke="#4a4a4a" stroke-width="1.0"/>
<line x1="833.50" y1="390.96" x2="833.50" y2="401.05" stroke="#4a4a4a" stroke-width="1.0"/>
<line x1="853.50" y1="390.96" x2="853.50" y2="401.05" stroke="#4a4a4a" stroke-width="1.0"/>
<line x1="872.80" y1="390.96" x2="872.80" y2="401.05" stroke="#4a4a4a" stroke-width="1.0"/>
<line x1="892.50" y1="390.96" x2="892.50" y2="401.05" stroke="#4a4a4a" stroke-width="1.0"/>
<line x1="912.50" y1="390.96" x2="912.50" y2="401.05" stroke="#4a4a4a" stroke-width="1.0"/>
<line x1="952.75" y1="390.96" x2="952.75" y2="401.05" stroke="#4a4a4a" stroke-width="1.0"/>
<line x1="977.10" y1="390.96" x2="977.10" y2="401.05" stroke="#4a4a4a" stroke-width="1.0"/>
<line x1="1001.25" y1="390.96" x2="1001.25" y2="401.05" stroke="#4a4a4a" stroke-width="1.0"/>
<line x1="1025.40" y1="390.96" x2="1025.40" y2="401.05" stroke="#4a4a4a" stroke-width="1.0"/>
<line x1="1049.60" y1="390.96" x2="1049.60" y2="401.05" stroke="#4a4a4a" stroke-width="1.0"/>
<line x1="1077.90" y1="390.96" x2="1077.90" y2="401.05" stroke="#4a4a4a" stroke-width="1.0"/>
<line x1="1106.25" y1="390.96" x2="1106.25" y2="401.05" stroke="#4a4a4a" stroke-width="1.0"/>
<line x1="1151.60" y1="390.96" x2="1151.60" y2="401.05" stroke="#4a4a4a" stroke-width="1.0"/>
<line x1="1170.60" y1="390.96" x2="1170.60" y2="401.05" stroke="#4a4a4a" stroke-width="1.0"/>
<line x1="1190.60" y1="390.96" x2="1190.60" y2="401.05" stroke="#2a2a2a" stroke-width="1.5"/>
<line x1="1227.50" y1="390.96" x2="1227.50" y2="401.05" stroke="#4a4a4a" stroke-width="1.0"/>
<line x1="1257.50" y1="390.96" x2="1257.50" y2="401.05" stroke="#4a4a4a" stroke-width="1.0"/>
<line x1="1277.75" y1="390.96" x2="1277.75" y2="401.05" stroke="#2a2a2a" stroke-width="1.5"/>
<line x1="17.00" y1="401.05" x2="17.00" y2="411.13" stroke="#4a4a4a" stroke-width="1.0"/>
<line x1="41.30" y1="401.05" x2="41.30" y2="411.13" stroke="#8c8c8c" stroke-width="1.0"/>
<line x1="126.70" y1="401.05" x2="126.70" y2="411.13" stroke="#2a2a2a" stroke-width="1.5"/>
<line x1="153.50" y1="401.05" x2="153.50" y2="411.13" stroke="#8c8c8c" stroke-width="1.0"/>
<line x1="271.60" y1="401.05" x2="271.60" y2="411.13" stroke="#2a2a2a" stroke-width="1.5"/>
<line x1="290.40" y1="401.05" x2="290.40" y2="411.13" stroke="#8c8c8c" stroke-width="1.0"/>
<line x1="310.60" y1="401.05" x2="310.60" y2="411.13" stroke="#8c8c8c" stroke-width="1.0"/>
<line x1="374.60" y1="401.05" x2="374.60" y2="411.13" stroke="#4a4a4a" stroke-width="1.0"/>
<line x1="394.60" y1="401.05" x2="394.60" y2="411.13" stroke="#8c8c8c" stroke-width="1.0"/>
<line x1="502.50" y1="401.05" x2="502.50" y2="411.13" stroke="#2a2a2a" stroke-width="1.5"/>
<line x1="611.00" y1="401.05" x2="611.00" y2="411.13" stroke="#2a2a2a" stroke-width="1.5"/>
<line x1="636.25" y1="401.05" x2="636.25" y2="411.13" stroke="#8c8c8c" stroke-width="1.0"/>
<line x1="752.90" y1="401.05" x2="752.90" y2="411.13" stroke="#4a4a4a" stroke-width="1.0"/>
<line x1="774.40" y1="401.05" x2="774.40" y2="411.13" stroke="#4a4a4a" stroke-width="1.0"/>
<line x1="794.60" y1="401.05" x2="794.60" y2="411.13" stroke="#4a4a4a" stroke-width="1.0"/>
<line x1="813.30" y1="401.05" x2="813.30" y2="411.13" stroke="#4a4a4a" stroke-width="1.0"/>
<line x1="833.50" y1="401.05" x2="833.50" y2="411.13" stroke="#4a4a4a" stroke-width="1.0"/>
<line x1="853.50" y1="401.05" x2="853.50" y2="411.13" stroke="#4a4a4a" stroke-width="1.0"/>
<line x1="872.80" y1="401.05" x2="872.80" y2="411.13" stroke="#4a4a4a" stroke-width="1.0"/>
<line x1="892.50" y1="401.05" x2="892.50" y2="411.13" stroke="#4a4a4a" stroke-width="1.0"/>
<line x1="912.50" y1="401.05" x2="912.50" y2="411.13" stroke="#4a4a4a" stroke-width="1.0"/>
<line x1="952.75" y1="401.05" x2="952.75" y2="411.13" stroke="#4a4a4a" stroke-width="1.0"/>
<line x1="977.10" y1="401.05" x2="977.10" y2="411.13" stroke="#4a4a4a" stroke-width="1.0"/>
<line x1="1001.25" y1="401.05" x2="1001.25" y2="411.13" stroke="#4a4a4a" stroke-width="1.0"/>
<line x1="1025.40" y1="401.05" x2="1025.40" y2="411.13" stroke="#4a4a4a" stroke-width="1.0"/>
<line x1="1049.60" y1="401.05" x2="1049.60" y2="411.13" stroke="#4a4a4a" stroke-width="1.0"/>
<line x1="1077.90" y1="401.05" x2="1077.90" y2="411.13" stroke="#4a4a4a" stroke-width="1.0"/>
<line x1="1106.25" y1="401.05" x2="1106.25" y2="411.13" stroke="#4a4a4a" stroke-width="1.0"/>
<line x1="1151.60" y1="401.05" x2="1151.60" y2="411.13" stroke="#4a4a4a" stroke-width="1.0"/>
<line x1="1170.60" y1="401.05" x2="1170.60" y2="411.13" stroke="#4a4a4a" stroke-width="1.0"/>
<line x1="1190.60" y1="401.05" x2="1190.60" y2="411.13" stroke="#2a2a2a" stroke-width="1.5"/>
<line x1="1227.50" y1="401.05" x2="1227.50" y2="411.13" stroke="#4a4a4a" stroke-width="1.0"/>
<line x1="1257.50" y1="401.05" x2="1257.50" y2="411.13" stroke="#4a4a4a" stroke-width="1.0"/>
<line x1="1277.75" y1="401.05" x2="1277.75" y2="411.13" stroke="#2a2a2a" stroke-width="1.5"/>
<line x1="17.00" y1="411.13" x2="17.00" y2="421.21" stroke="#4a4a4a" stroke-width="1.0"/>
<line x1="41.30" y1="411.13" x2="41.30" y2="421.21" stroke="#8c8c8c" stroke-width="1.0"/>
<line x1="126.70" y1="411.13" x2="126.70" y2="421.21" stroke="#2a2a2a" stroke-width="1.5"/>
<line x1="153.50" y1="411.13" x2="153.50" y2="421.21" stroke="#8c8c8c" stroke-width="1.0"/>
<line x1="271.60" y1="411.13" x2="271.60" y2="421.21" stroke="#2a2a2a" stroke-width="1.5"/>
<line x1="290.40" y1="411.13" x2="290.40" y2="421.21" stroke="#8c8c8c" stroke-width="1.0"/>
<line x1="310.60" y1="411.13" x2="310.60" y2="421.21" stroke="#8c8c8c" stroke-width="1.0"/>
<line x1="374.60" y1="411.13" x2="374.60" y2="421.21" stroke="#4a4a4a" stroke-width="1.0"/>
<line x1="394.60" y1="411.13" x2="394.60" y2="421.21" stroke="#8c8c8c" stroke-width="1.0"/>
<line x1="502.50" y1="411.13" x2="502.50" y2="421.21" stroke="#2a2a2a" stroke-width="1.5"/>
<line x1="611.00" y1="411.13" x2="611.00" y2="421.21" stroke="#2a2a2a" stroke-width="1.5"/>
<line x1="636.25" y1="411.13" x2="636.25" y2="421.21" stroke="#8c8c8c" stroke-width="1.0"/>
<line x1="752.90" y1="411.13" x2="752.90" y2="421.21" stroke="#4a4a4a" stroke-width="1.0"/>
<line x1="774.40" y1="411.13" x2="774.40" y2="421.21" stroke="#4a4a4a" stroke-width="1.0"/>
<line x1="794.60" y1="411.13" x2="794.60" y2="421.21" stroke="#4a4a4a" stroke-width="1.0"/>
<line x1="813.30" y1="411.13" x2="813.30" y2="421.21" stroke="#4a4a4a" stroke-width="1.0"/>
<line x1="833.50" y1="411.13" x2="833.50" y2="421.21" stroke="#4a4a4a" stroke-width="1.0"/>
<line x1="853.50" y1="411.13" x2="853.50" y2="421.21" stroke="#4a4a4a" stroke-width="1.0"/>
<line x1="872.80" y1="411.13" x2="872.80" y2="421.21" stroke="#4a4a4a" stroke-width="1.0"/>
<line x1="892.50" y1="411.13" x2="892.50" y2="421.21" stroke="#4a4a4a" stroke-width="1.0"/>
<line x1="912.50" y1="411.13" x2="912.50" y2="421.21" stroke="#4a4a4a" stroke-width="1.0"/>
<line x1="952.75" y1="411.13" x2="952.75" y2="421.21" stroke="#4a4a4a" stroke-width="1.0"/>
<line x1="977.10" y1="411.13" x2="977.10" y2="421.21" stroke="#4a4a4a" stroke-width="1.0"/>
<line x1="1001.25" y1="411.13" x2="1001.25" y2="421.21" stroke="#4a4a4a" stroke-width="1.0"/>
<line x1="1025.40" y1="411.13" x2="1025.40" y2="421.21" stroke="#4a4a4a" stroke-width="1.0"/>
<line x1="1049.60" y1="411.13" x2="1049.60" y2="421.21" stroke="#4a4a4a" stroke-width="1.0"/>
<line x1="1077.90" y1="411.13" x2="1077.90" y2="421.21" stroke="#4a4a4a" stroke-width="1.0"/>
<line x1="1106.25" y1="411.13" x2="1106.25" y2="421.21" stroke="#4a4a4a" stroke-width="1.0"/>
<line x1="1151.60" y1="411.13" x2="1151.60" y2="421.21" stroke="#4a4a4a" stroke-width="1.0"/>
<line x1="1170.60" y1="411.13" x2="1170.60" y2="421.21" stroke="#4a4a4a" stroke-width="1.0"/>
<line x1="1190.60" y1="411.13" x2="1190.60" y2="421.21" stroke="#2a2a2a" stroke-width="1.5"/>
<line x1="1227.50" y1="411.13" x2="1227.50" y2="421.21" stroke="#4a4a4a" stroke-width="1.0"/>
<line x1="1257.50" y1="411.13" x2="1257.50" y2="421.21" stroke="#4a4a4a" stroke-width="1.0"/>
<line x1="1277.75" y1="411.13" x2="1277.75" y2="421.21" stroke="#2a2a2a" stroke-width="1.5"/>
<line x1="17.00" y1="421.21" x2="17.00" y2="431.30" stroke="#4a4a4a" stroke-width="1.0"/>
<line x1="41.30" y1="421.21" x2="41.30" y2="431.30" stroke="#8c8c8c" stroke-width="1.0"/>
<line x1="126.70" y1="421.21" x2="126.70" y2="431.30" stroke="#2a2a2a" stroke-width="1.5"/>
<line x1="153.50" y1="421.21" x2="153.50" y2="431.30" stroke="#8c8c8c" stroke-width="1.0"/>
<line x1="271.60" y1="421.21" x2="271.60" y2="431.30" stroke="#2a2a2a" stroke-width="1.5"/>
<line x1="290.40" y1="421.21" x2="290.40" y2="431.30" stroke="#8c8c8c" stroke-width="1.0"/>
<line x1="310.60" y1="421.21" x2="310.60" y2="431.30" stroke="#8c8c8c" stroke-width="1.0"/>
<line x1="374.60" y1="421.21" x2="374.60" y2="431.30" stroke="#4a4a4a" stroke-width="1.0"/>
<line x1="394.60" y1="421.21" x2="394.60" y2="431.30" stroke="#8c8c8c" stroke-width="1.0"/>
<line x1="502.50" y1="421.21" x2="502.50" y2="431.30" stroke="#2a2a2a" stroke-width="1.5"/>
<line x1="611.00" y1="421.21" x2="611.00" y2="431.30" stroke="#2a2a2a" stroke-width="1.5"/>
<line x1="636.25" y1="421.21" x2="636.25" y2="431.30" stroke="#8c8c8c" stroke-width="1.0"/>
<line x1="752.90" y1="421.21" x2="752.90" y2="431.30" stroke="#4a4a4a" stroke-width="1.0"/>
<line x1="774.40" y1="421.21" x2="774.40" y2="431.30" stroke="#4a4a4a" stroke-width="1.0"/>
<line x1="794.60" y1="421.21" x2="794.60" y2="431.30" stroke="#4a4a4a" stroke-width="1.0"/>
<line x1="813.30" y1="421.21" x2="813.30" y2="431.30" stroke="#4a4a4a" stroke-width="1.0"/>
<line x1="833.50" y1="421.21" x2="833.50" y2="431.30" stroke="#4a4a4a" stroke-width="1.0"/>
<line x1="853.50" y1="421.21" x2="853.50" y2="431.30" stroke="#4a4a4a" stroke-width="1.0"/>
<line x1="872.80" y1="421.21" x2="872.80" y2="431.30" stroke="#4a4a4a" stroke-width="1.0"/>
<line x1="892.50" y1="421.21" x2="892.50" y2="431.30" stroke="#4a4a4a" stroke-width="1.0"/>
<line x1="912.50" y1="421.21" x2="912.50" y2="431.30" stroke="#4a4a4a" stroke-width="1.0"/>
<line x1="952.75" y1="421.21" x2="952.75" y2="431.30" stroke="#4a4a4a" stroke-width="1.0"/>
<line x1="977.10" y1="421.21" x2="977.10" y2="431.30" stroke="#4a4a4a" stroke-width="1.0"/>
<line x1="1001.25" y1="421.21" x2="1001.25" y2="431.30" stroke="#4a4a4a" stroke-width="1.0"/>
<line x1="1025.40" y1="421.21" x2="1025.40" y2="431.30" stroke="#4a4a4a" stroke-width="1.0"/>
<line x1="1049.60" y1="421.21" x2="1049.60" y2="431.30" stroke="#4a4a4a" stroke-width="1.0"/>
<line x1="1077.90" y1="421.21" x2="1077.90" y2="431.30" stroke="#4a4a4a" stroke-width="1.0"/>
<line x1="1106.25" y1="421.21" x2="1106.25" y2="431.30" stroke="#4a4a4a" stroke-width="1.0"/>
<line x1="1151.60" y1="421.21" x2="1151.60" y2="431.30" stroke="#4a4a4a" stroke-width="1.0"/>
<line x1="1170.60" y1="421.21" x2="1170.60" y2="431.30" stroke="#4a4a4a" stroke-width="1.0"/>
<line x1="1190.60" y1="421.21" x2="1190.60" y2="431.30" stroke="#2a2a2a" stroke-width="1.5"/>
<line x1="1227.50" y1="421.21" x2="1227.50" y2="431.30" stroke="#4a4a4a" stroke-width="1.0"/>
<line x1="1257.50" y1="421.21" x2="1257.50" y2="431.30" stroke="#4a4a4a" stroke-width="1.0"/>
<line x1="1277.75" y1="421.21" x2="1277.75" y2="431.30" stroke="#2a2a2a" stroke-width="1.5"/>
<line x1="17.00" y1="431.30" x2="17.00" y2="441.38" stroke="#4a4a4a" stroke-width="1.0"/>
<line x1="41.30" y1="431.30" x2="41.30" y2="441.38" stroke="#8c8c8c" stroke-width="1.0"/>
<line x1="126.70" y1="431.30" x2="126.70" y2="441.38" stroke="#2a2a2a" stroke-width="1.5"/>
<line x1="153.50" y1="431.30" x2="153.50" y2="441.38" stroke="#8c8c8c" stroke-width="1.0"/>
<line x1="271.60" y1="431.30" x2="271.60" y2="441.38" stroke="#2a2a2a" stroke-width="1.5"/>
<line x1="290.40" y1="431.30" x2="290.40" y2="441.38" stroke="#8c8c8c" stroke-width="1.0"/>
<line x1="310.60" y1="431.30" x2="310.60" y2="441.38" stroke="#8c8c8c" stroke-width="1.0"/>
<line x1="374.60" y1="431.30" x2="374.60" y2="441.38" stroke="#4a4a4a" stroke-width="1.0"/>
<line x1="394.60" y1="431.30" x2="394.60" y2="441.38" stroke="#8c8c8c" stroke-width="1.0"/>
<line x1="502.50" y1="431.30" x2="502.50" y2="441.38" stroke="#2a2a2a" stroke-width="1.5"/>
<line x1="611.00" y1="431.30" x2="611.00" y2="441.38" stroke="#2a2a2a" stroke-width="1.5"/>
<line x1="636.25" y1="431.30" x2="636.25" y2="441.38" stroke="#8c8c8c" stroke-width="1.0"/>
<line x1="690.40" y1="431.30" x2="690.40" y2="441.38" stroke="#8c8c8c" stroke-width="1.0"/>
<line x1="710.90" y1="431.30" x2="710.90" y2="441.38" stroke="#8c8c8c" stroke-width="1.0"/>
<line x1="731.90" y1="431.30" x2="731.90" y2="441.38" stroke="#8c8c8c" stroke-width="1.0"/>
<line x1="752.90" y1="431.30" x2="752.90" y2="441.38" stroke="#4a4a4a" stroke-width="1.0"/>
<line x1="774.40" y1="431.30" x2="774.40" y2="441.38" stroke="#4a4a4a" stroke-width="1.0"/>
<line x1="794.60" y1="431.30" x2="794.60" y2="441.38" stroke="#4a4a4a" stroke-width="1.0"/>
<line x1="813.30" y1="431.30" x2="813.30" y2="441.38" stroke="#4a4a4a" stroke-width="1.0"/>
<line x1="833.50" y1="431.30" x2="833.50" y2="441.38" stroke="#4a4a4a" stroke-width="1.0"/>
<line x1="853.50" y1="431.30" x2="853.50" y2="441.38" stroke="#4a4a4a" stroke-width="1.0"/>
<line x1="872.80" y1="431.30" x2="872.80" y2="441.38" stroke="#4a4a4a" stroke-width="1.0"/>
<line x1="892.50" y1="431.30" x2="892.50" y2="441.38" stroke="#4a4a4a" stroke-width="1.0"/>
<line x1="912.50" y1="431.30" x2="912.50" y2="441.38" stroke="#4a4a4a" stroke-width="1.0"/>
<line x1="952.75" y1="431.30" x2="952.75" y2="441.38" stroke="#4a4a4a" stroke-width="1.0"/>
<line x1="977.10" y1="431.30" x2="977.10" y2="441.38" stroke="#4a4a4a" stroke-width="1.0"/>
<line x1="1001.25" y1="431.30" x2="1001.25" y2="441.38" stroke="#4a4a4a" stroke-width="1.0"/>
<line x1="1025.40" y1="431.30" x2="1025.40" y2="441.38" stroke="#4a4a4a" stroke-width="1.0"/>
<line x1="1049.60" y1="431.30" x2="1049.60" y2="441.38" stroke="#4a4a4a" stroke-width="1.0"/>
<line x1="1077.90" y1="431.30" x2="1077.90" y2="441.38" stroke="#4a4a4a" stroke-width="1.0"/>
<line x1="1106.25" y1="431.30" x2="1106.25" y2="441.38" stroke="#4a4a4a" stroke-width="1.0"/>
<line x1="1151.60" y1="431.30" x2="1151.60" y2="441.38" stroke="#4a4a4a" stroke-width="1.0"/>
<line x1="1170.60" y1="431.30" x2="1170.60" y2="441.38" stroke="#4a4a4a" stroke-width="1.0"/>
<line x1="1190.60" y1="431.30" x2="1190.60" y2="441.38" stroke="#2a2a2a" stroke-width="1.5"/>
<line x1="1227.50" y1="431.30" x2="1227.50" y2="441.38" stroke="#4a4a4a" stroke-width="1.0"/>
<line x1="1257.50" y1="431.30" x2="1257.50" y2="441.38" stroke="#4a4a4a" stroke-width="1.0"/>
<line x1="1277.75" y1="431.30" x2="1277.75" y2="441.38" stroke="#2a2a2a" stroke-width="1.5"/>
<line x1="17.00" y1="441.38" x2="17.00" y2="451.46" stroke="#4a4a4a" stroke-width="1.0"/>
<line x1="41.30" y1="441.38" x2="41.30" y2="451.46" stroke="#8c8c8c" stroke-width="1.0"/>
<line x1="126.70" y1="441.38" x2="126.70" y2="451.46" stroke="#2a2a2a" stroke-width="1.5"/>
<line x1="153.50" y1="441.38" x2="153.50" y2="451.46" stroke="#8c8c8c" stroke-width="1.0"/>
<line x1="271.60" y1="441.38" x2="271.60" y2="451.46" stroke="#2a2a2a" stroke-width="1.5"/>
<line x1="290.40" y1="441.38" x2="290.40" y2="451.46" stroke="#8c8c8c" stroke-width="1.0"/>
<line x1="310.60" y1="441.38" x2="310.60" y2="451.46" stroke="#8c8c8c" stroke-width="1.0"/>
<line x1="374.60" y1="441.38" x2="374.60" y2="451.46" stroke="#4a4a4a" stroke-width="1.0"/>
<line x1="394.60" y1="441.38" x2="394.60" y2="451.46" stroke="#8c8c8c" stroke-width="1.0"/>
<line x1="502.50" y1="441.38" x2="502.50" y2="451.46" stroke="#2a2a2a" stroke-width="1.5"/>
<line x1="611.00" y1="441.38" x2="611.00" y2="451.46" stroke="#2a2a2a" stroke-width="1.5"/>
<line x1="636.25" y1="441.38" x2="636.25" y2="451.46" stroke="#8c8c8c" stroke-width="1.0"/>
<line x1="690.40" y1="441.38" x2="690.40" y2="451.46" stroke="#8c8c8c" stroke-width="1.0"/>
<line x1="710.90" y1="441.38" x2="710.90" y2="451.46" stroke="#8c8c8c" stroke-width="1.0"/>
<line x1="731.90" y1="441.38" x2="731.90" y2="451.46" stroke="#8c8c8c" stroke-width="1.0"/>
<line x1="752.90" y1="441.38" x2="752.90" y2="451.46" stroke="#4a4a4a" stroke-width="1.0"/>
<line x1="774.40" y1="441.38" x2="774.40" y2="451.46" stroke="#4a4a4a" stroke-width="1.0"/>
<line x1="794.60" y1="441.38" x2="794.60" y2="451.46" stroke="#4a4a4a" stroke-width="1.0"/>
<line x1="813.30" y1="441.38" x2="813.30" y2="451.46" stroke="#4a4a4a" stroke-width="1.0"/>
<line x1="833.50" y1="441.38" x2="833.50" y2="451.46" stroke="#4a4a4a" stroke-width="1.0"/>
<line x1="853.50" y1="441.38" x2="853.50" y2="451.46" stroke="#4a4a4a" stroke-width="1.0"/>
<line x1="872.80" y1="441.38" x2="872.80" y2="451.46" stroke="#4a4a4a" stroke-width="1.0"/>
<line x1="892.50" y1="441.38" x2="892.50" y2="451.46" stroke="#4a4a4a" stroke-width="1.0"/>
<line x1="912.50" y1="441.38" x2="912.50" y2="451.46" stroke="#4a4a4a" stroke-width="1.0"/>
<line x1="952.75" y1="441.38" x2="952.75" y2="451.46" stroke="#4a4a4a" stroke-width="1.0"/>
<line x1="977.10" y1="441.38" x2="977.10" y2="451.46" stroke="#4a4a4a" stroke-width="1.0"/>
<line x1="1001.25" y1="441.38" x2="1001.25" y2="451.46" stroke="#4a4a4a" stroke-width="1.0"/>
<line x1="1025.40" y1="441.38" x2="1025.40" y2="451.46" stroke="#4a4a4a" stroke-width="1.0"/>
<line x1="1049.60" y1="441.38" x2="1049.60" y2="451.46" stroke="#4a4a4a" stroke-width="1.0"/>
<line x1="1077.90" y1="441.38" x2="1077.90" y2="451.46" stroke="#4a4a4a" stroke-width="1.0"/>
<line x1="1106.25" y1="441.38" x2="1106.25" y2="451.46" stroke="#4a4a4a" stroke-width="1.0"/>
<line x1="1151.60" y1="441.38" x2="1151.60" y2="451.46" stroke="#4a4a4a" stroke-width="1.0"/>
<line x1="1170.60" y1="441.38" x2="1170.60" y2="451.46" stroke="#4a4a4a" stroke-width="1.0"/>
<line x1="1190.60" y1="441.38" x2="1190.60" y2="451.46" stroke="#2a2a2a" stroke-width="1.5"/>
<line x1="1227.50" y1="441.38" x2="1227.50" y2="451.46" stroke="#4a4a4a" stroke-width="1.0"/>
<line x1="1257.50" y1="441.38" x2="1257.50" y2="451.46" stroke="#4a4a4a" stroke-width="1.0"/>
<line x1="1277.75" y1="441.38" x2="1277.75" y2="451.46" stroke="#2a2a2a" stroke-width="1.5"/>
<line x1="17.00" y1="451.46" x2="17.00" y2="461.55" stroke="#4a4a4a" stroke-width="1.0"/>
<line x1="41.30" y1="451.46" x2="41.30" y2="461.55" stroke="#8c8c8c" stroke-width="1.0"/>
<line x1="126.70" y1="451.46" x2="126.70" y2="461.55" stroke="#2a2a2a" stroke-width="1.5"/>
<line x1="153.50" y1="451.46" x2="153.50" y2="461.55" stroke="#8c8c8c" stroke-width="1.0"/>
<line x1="271.60" y1="451.46" x2="271.60" y2="461.55" stroke="#2a2a2a" stroke-width="1.5"/>
<line x1="290.40" y1="451.46" x2="290.40" y2="461.55" stroke="#8c8c8c" stroke-width="1.0"/>
<line x1="310.60" y1="451.46" x2="310.60" y2="461.55" stroke="#8c8c8c" stroke-width="1.0"/>
<line x1="374.60" y1="451.46" x2="374.60" y2="461.55" stroke="#4a4a4a" stroke-width="1.0"/>
<line x1="394.60" y1="451.46" x2="394.60" y2="461.55" stroke="#8c8c8c" stroke-width="1.0"/>
<line x1="502.50" y1="451.46" x2="502.50" y2="461.55" stroke="#2a2a2a" stroke-width="1.5"/>
<line x1="611.00" y1="451.46" x2="611.00" y2="461.55" stroke="#2a2a2a" stroke-width="1.5"/>
<line x1="636.25" y1="451.46" x2="636.25" y2="461.55" stroke="#8c8c8c" stroke-width="1.0"/>
<line x1="690.40" y1="451.46" x2="690.40" y2="461.55" stroke="#8c8c8c" stroke-width="1.0"/>
<line x1="710.90" y1="451.46" x2="710.90" y2="461.55" stroke="#8c8c8c" stroke-width="1.0"/>
<line x1="731.90" y1="451.46" x2="731.90" y2="461.55" stroke="#8c8c8c" stroke-width="1.0"/>
<line x1="752.90" y1="451.46" x2="752.90" y2="461.55" stroke="#4a4a4a" stroke-width="1.0"/>
<line x1="774.40" y1="451.46" x2="774.40" y2="461.55" stroke="#4a4a4a" stroke-width="1.0"/>
<line x1="794.60" y1="451.46" x2="794.60" y2="461.55" stroke="#4a4a4a" stroke-width="1.0"/>
<line x1="813.30" y1="451.46" x2="813.30" y2="461.55" stroke="#4a4a4a" stroke-width="1.0"/>
<line x1="833.50" y1="451.46" x2="833.50" y2="461.55" stroke="#4a4a4a" stroke-width="1.0"/>
<line x1="853.50" y1="451.46" x2="853.50" y2="461.55" stroke="#4a4a4a" stroke-width="1.0"/>
<line x1="872.80" y1="451.46" x2="872.80" y2="461.55" stroke="#4a4a4a" stroke-width="1.0"/>
<line x1="892.50" y1="451.46" x2="892.50" y2="461.55" stroke="#4a4a4a" stroke-width="1.0"/>
<line x1="912.50" y1="451.46" x2="912.50" y2="461.55" stroke="#4a4a4a" stroke-width="1.0"/>
<line x1="952.75" y1="451.46" x2="952.75" y2="461.55" stroke="#4a4a4a" stroke-width="1.0"/>
<line x1="977.10" y1="451.46" x2="977.10" y2="461.55" stroke="#4a4a4a" stroke-width="1.0"/>
<line x1="1001.25" y1="451.46" x2="1001.25" y2="461.55" stroke="#4a4a4a" stroke-width="1.0"/>
<line x1="1025.40" y1="451.46" x2="1025.40" y2="461.55" stroke="#4a4a4a" stroke-width="1.0"/>
<line x1="1049.60" y1="451.46" x2="1049.60" y2="461.55" stroke="#4a4a4a" stroke-width="1.0"/>
<line x1="1077.90" y1="451.46" x2="1077.90" y2="461.55" stroke="#4a4a4a" stroke-width="1.0"/>
<line x1="1106.25" y1="451.46" x2="1106.25" y2="461.55" stroke="#4a4a4a" stroke-width="1.0"/>
<line x1="1151.60" y1="451.46" x2="1151.60" y2="461.55" stroke="#4a4a4a" stroke-width="1.0"/>
<line x1="1170.60" y1="451.46" x2="1170.60" y2="461.55" stroke="#4a4a4a" stroke-width="1.0"/>
<line x1="1190.60" y1="451.46" x2="1190.60" y2="461.55" stroke="#2a2a2a" stroke-width="1.5"/>
<line x1="1227.50" y1="451.46" x2="1227.50" y2="461.55" stroke="#4a4a4a" stroke-width="1.0"/>
<line x1="1257.50" y1="451.46" x2="1257.50" y2="461.55" stroke="#4a4a4a" stroke-width="1.0"/>
<line x1="1277.75" y1="451.46" x2="1277.75" y2="461.55" stroke="#2a2a2a" stroke-width="1.5"/>
<line x1="17.00" y1="461.55" x2="17.00" y2="471.63" stroke="#4a4a4a" stroke-width="1.0"/>
<line x1="41.30" y1="461.55" x2="41.30" y2="471.63" stroke="#8c8c8c" stroke-width="1.0"/>
<line x1="126.70" y1="461.55" x2="126.70" y2="471.63" stroke="#2a2a2a" stroke-width="1.5"/>
<line x1="153.50" y1="461.55" x2="153.50" y2="471.63" stroke="#8c8c8c" stroke-width="1.0"/>
<line x1="271.60" y1="461.55" x2="271.60" y2="471.63" stroke="#2a2a2a" stroke-width="1.5"/>
<line x1="290.40" y1="461.55" x2="290.40" y2="471.63" stroke="#8c8c8c" stroke-width="1.0"/>
<line x1="310.60" y1="461.55" x2="310.60" y2="471.63" stroke="#8c8c8c" stroke-width="1.0"/>
<line x1="374.60" y1="461.55" x2="374.60" y2="471.63" stroke="#4a4a4a" stroke-width="1.0"/>
<line x1="394.60" y1="461.55" x2="394.60" y2="471.63" stroke="#8c8c8c" stroke-width="1.0"/>
<line x1="502.50" y1="461.55" x2="502.50" y2="471.63" stroke="#2a2a2a" stroke-width="1.5"/>
<line x1="611.00" y1="461.55" x2="611.00" y2="471.63" stroke="#2a2a2a" stroke-width="1.5"/>
<line x1="636.25" y1="461.55" x2="636.25" y2="471.63" stroke="#8c8c8c" stroke-width="1.0"/>
<line x1="690.40" y1="461.55" x2="690.40" y2="471.63" stroke="#8c8c8c" stroke-width="1.0"/>
<line x1="710.90" y1="461.55" x2="710.90" y2="471.63" stroke="#8c8c8c" stroke-width="1.0"/>
<line x1="731.90" y1="461.55" x2="731.90" y2="471.63" stroke="#8c8c8c" stroke-width="1.0"/>
<line x1="752.90" y1="461.55" x2="752.90" y2="471.63" stroke="#4a4a4a" stroke-width="1.0"/>
<line x1="774.40" y1="461.55" x2="774.40" y2="471.63" stroke="#4a4a4a" stroke-width="1.0"/>
<line x1="794.60" y1="461.55" x2="794.60" y2="471.63" stroke="#4a4a4a" stroke-width="1.0"/>
<line x1="813.30" y1="461.55" x2="813.30" y2="471.63" stroke="#4a4a4a" stroke-width="1.0"/>
<line x1="833.50" y1="461.55" x2="833.50" y2="471.63" stroke="#4a4a4a" stroke-width="1.0"/>
<line x1="853.50" y1="461.55" x2="853.50" y2="471.63" stroke="#4a4a4a" stroke-width="1.0"/>
<line x1="872.80" y1="461.55" x2="872.80" y2="471.63" stroke="#4a4a4a" stroke-width="1.0"/>
<line x1="892.50" y1="461.55" x2="892.50" y2="471.63" stroke="#4a4a4a" stroke-width="1.0"/>
<line x1="912.50" y1="461.55" x2="912.50" y2="471.63" stroke="#4a4a4a" stroke-width="1.0"/>
<line x1="952.75" y1="461.55" x2="952.75" y2="471.63" stroke="#4a4a4a" stroke-width="1.0"/>
<line x1="977.10" y1="461.55" x2="977.10" y2="471.63" stroke="#4a4a4a" stroke-width="1.0"/>
<line x1="1001.25" y1="461.55" x2="1001.25" y2="471.63" stroke="#4a4a4a" stroke-width="1.0"/>
<line x1="1025.40" y1="461.55" x2="1025.40" y2="471.63" stroke="#4a4a4a" stroke-width="1.0"/>
<line x1="1049.60" y1="461.55" x2="1049.60" y2="471.63" stroke="#4a4a4a" stroke-width="1.0"/>
<line x1="1077.90" y1="461.55" x2="1077.90" y2="471.63" stroke="#4a4a4a" stroke-width="1.0"/>
<line x1="1106.25" y1="461.55" x2="1106.25" y2="471.63" stroke="#4a4a4a" stroke-width="1.0"/>
<line x1="1151.60" y1="461.55" x2="1151.60" y2="471.63" stroke="#4a4a4a" stroke-width="1.0"/>
<line x1="1170.60" y1="461.55" x2="1170.60" y2="471.63" stroke="#4a4a4a" stroke-width="1.0"/>
<line x1="1190.60" y1="461.55" x2="1190.60" y2="471.63" stroke="#2a2a2a" stroke-width="1.5"/>
<line x1="1227.50" y1="461.55" x2="1227.50" y2="471.63" stroke="#4a4a4a" stroke-width="1.0"/>
<line x1="1257.50" y1="461.55" x2="1257.50" y2="471.63" stroke="#4a4a4a" stroke-width="1.0"/>
<line x1="1277.75" y1="461.55" x2="1277.75" y2="471.63" stroke="#2a2a2a" stroke-width="1.5"/>
<line x1="17.00" y1="471.63" x2="17.00" y2="481.71" stroke="#4a4a4a" stroke-width="1.0"/>
<line x1="41.30" y1="471.63" x2="41.30" y2="481.71" stroke="#8c8c8c" stroke-width="1.0"/>
<line x1="126.70" y1="471.63" x2="126.70" y2="481.71" stroke="#2a2a2a" stroke-width="1.5"/>
<line x1="153.50" y1="471.63" x2="153.50" y2="481.71" stroke="#8c8c8c" stroke-width="1.0"/>
<line x1="271.60" y1="471.63" x2="271.60" y2="481.71" stroke="#2a2a2a" stroke-width="1.5"/>
<line x1="290.40" y1="471.63" x2="290.40" y2="481.71" stroke="#8c8c8c" stroke-width="1.0"/>
<line x1="310.60" y1="471.63" x2="310.60" y2="481.71" stroke="#8c8c8c" stroke-width="1.0"/>
<line x1="374.60" y1="471.63" x2="374.60" y2="481.71" stroke="#4a4a4a" stroke-width="1.0"/>
<line x1="394.60" y1="471.63" x2="394.60" y2="481.71" stroke="#8c8c8c" stroke-width="1.0"/>
<line x1="502.50" y1="471.63" x2="502.50" y2="481.71" stroke="#2a2a2a" stroke-width="1.5"/>
<line x1="611.00" y1="471.63" x2="611.00" y2="481.71" stroke="#2a2a2a" stroke-width="1.5"/>
<line x1="636.25" y1="471.63" x2="636.25" y2="481.71" stroke="#8c8c8c" stroke-width="1.0"/>
<line x1="690.40" y1="471.63" x2="690.40" y2="481.71" stroke="#8c8c8c" stroke-width="1.0"/>
<line x1="710.90" y1="471.63" x2="710.90" y2="481.71" stroke="#8c8c8c" stroke-width="1.0"/>
<line x1="731.90" y1="471.63" x2="731.90" y2="481.71" stroke="#8c8c8c" stroke-width="1.0"/>
<line x1="752.90" y1="471.63" x2="752.90" y2="481.71" stroke="#4a4a4a" stroke-width="1.0"/>
<line x1="774.40" y1="471.63" x2="774.40" y2="481.71" stroke="#4a4a4a" stroke-width="1.0"/>
<line x1="794.60" y1="471.63" x2="794.60" y2="481.71" stroke="#4a4a4a" stroke-width="1.0"/>
<line x1="813.30" y1="471.63" x2="813.30" y2="481.71" stroke="#4a4a4a" stroke-width="1.0"/>
<line x1="833.50" y1="471.63" x2="833.50" y2="481.71" stroke="#4a4a4a" stroke-width="1.0"/>
<line x1="853.50" y1="471.63" x2="853.50" y2="481.71" stroke="#4a4a4a" stroke-width="1.0"/>
<line x1="872.80" y1="471.63" x2="872.80" y2="481.71" stroke="#4a4a4a" stroke-width="1.0"/>
<line x1="892.50" y1="471.63" x2="892.50" y2="481.71" stroke="#4a4a4a" stroke-width="1.0"/>
<line x1="912.50" y1="471.63" x2="912.50" y2="481.71" stroke="#4a4a4a" stroke-width="1.0"/>
<line x1="952.75" y1="471.63" x2="952.75" y2="481.71" stroke="#4a4a4a" stroke-width="1.0"/>
<line x1="977.10" y1="471.63" x2="977.10" y2="481.71" stroke="#4a4a4a" stroke-width="1.0"/>
<line x1="1001.25" y1="471.63" x2="1001.25" y2="481.71" stroke="#4a4a4a" stroke-width="1.0"/>
<line x1="1025.40" y1="471.63" x2="1025.40" y2="481.71" stroke="#4a4a4a" stroke-width="1.0"/>
<line x1="1049.60" y1="471.63" x2="1049.60" y2="481.71" stroke="#4a4a4a" stroke-width="1.0"/>
<line x1="1077.90" y1="471.63" x2="1077.90" y2="481.71" stroke="#4a4a4a" stroke-width="1.0"/>
<line x1="1106.25" y1="471.63" x2="1106.25" y2="481.71" stroke="#4a4a4a" stroke-width="1.0"/>
<line x1="1151.60" y1="471.63" x2="1151.60" y2="481.71" stroke="#4a4a4a" stroke-width="1.0"/>
<line x1="1170.60" y1="471.63" x2="1170.60" y2="481.71" stroke="#4a4a4a" stroke-width="1.0"/>
<line x1="1190.60" y1="471.63" x2="1190.60" y2="481.71" stroke="#2a2a2a" stroke-width="1.5"/>
<line x1="1227.50" y1="471.63" x2="1227.50" y2="481.71" stroke="#4a4a4a" stroke-width="1.0"/>
<line x1="1257.50" y1="471.63" x2="1257.50" y2="481.71" stroke="#4a4a4a" stroke-width="1.0"/>
<line x1="1277.75" y1="471.63" x2="1277.75" y2="481.71" stroke="#2a2a2a" stroke-width="1.5"/>
<line x1="17.00" y1="481.71" x2="17.00" y2="491.79" stroke="#4a4a4a" stroke-width="1.0"/>
<line x1="41.30" y1="481.71" x2="41.30" y2="491.79" stroke="#8c8c8c" stroke-width="1.0"/>
<line x1="126.70" y1="481.71" x2="126.70" y2="491.79" stroke="#2a2a2a" stroke-width="1.5"/>
<line x1="153.50" y1="481.71" x2="153.50" y2="491.79" stroke="#8c8c8c" stroke-width="1.0"/>
<line x1="271.60" y1="481.71" x2="271.60" y2="491.79" stroke="#2a2a2a" stroke-width="1.5"/>
<line x1="290.40" y1="481.71" x2="290.40" y2="491.79" stroke="#8c8c8c" stroke-width="1.0"/>
<line x1="310.60" y1="481.71" x2="310.60" y2="491.79" stroke="#8c8c8c" stroke-width="1.0"/>
<line x1="374.60" y1="481.71" x2="374.60" y2="491.79" stroke="#4a4a4a" stroke-width="1.0"/>
<line x1="394.60" y1="481.71" x2="394.60" y2="491.79" stroke="#8c8c8c" stroke-width="1.0"/>
<line x1="502.50" y1="481.71" x2="502.50" y2="491.79" stroke="#2a2a2a" stroke-width="1.5"/>
<line x1="611.00" y1="481.71" x2="611.00" y2="491.79" stroke="#2a2a2a" stroke-width="1.5"/>
<line x1="636.25" y1="481.71" x2="636.25" y2="491.79" stroke="#8c8c8c" stroke-width="1.0"/>
<line x1="690.40" y1="481.71" x2="690.40" y2="491.79" stroke="#8c8c8c" stroke-width="1.0"/>
<line x1="710.90" y1="481.71" x2="710.90" y2="491.79" stroke="#8c8c8c" stroke-width="1.0"/>
<line x1="731.90" y1="481.71" x2="731.90" y2="491.79" stroke="#8c8c8c" stroke-width="1.0"/>
<line x1="752.90" y1="481.71" x2="752.90" y2="491.79" stroke="#4a4a4a" stroke-width="1.0"/>
<line x1="774.40" y1="481.71" x2="774.40" y2="491.79" stroke="#4a4a4a" stroke-width="1.0"/>
<line x1="794.60" y1="481.71" x2="794.60" y2="491.79" stroke="#4a4a4a" stroke-width="1.0"/>
<line x1="813.30" y1="481.71" x2="813.30" y2="491.79" stroke="#4a4a4a" stroke-width="1.0"/>
<line x1="833.50" y1="481.71" x2="833.50" y2="491.79" stroke="#4a4a4a" stroke-width="1.0"/>
<line x1="853.50" y1="481.71" x2="853.50" y2="491.79" stroke="#4a4a4a" stroke-width="1.0"/>
<line x1="872.80" y1="481.71" x2="872.80" y2="491.79" stroke="#4a4a4a" stroke-width="1.0"/>
<line x1="892.50" y1="481.71" x2="892.50" y2="491.79" stroke="#4a4a4a" stroke-width="1.0"/>
<line x1="912.50" y1="481.71" x2="912.50" y2="491.79" stroke="#4a4a4a" stroke-width="1.0"/>
<line x1="952.75" y1="481.71" x2="952.75" y2="491.79" stroke="#4a4a4a" stroke-width="1.0"/>
<line x1="977.10" y1="481.71" x2="977.10" y2="491.79" stroke="#4a4a4a" stroke-width="1.0"/>
<line x1="1001.25" y1="481.71" x2="1001.25" y2="491.79" stroke="#4a4a4a" stroke-width="1.0"/>
<line x1="1025.40" y1="481.71" x2="1025.40" y2="491.79" stroke="#4a4a4a" stroke-width="1.0"/>
<line x1="1049.60" y1="481.71" x2="1049.60" y2="491.79" stroke="#4a4a4a" stroke-width="1.0"/>
<line x1="1077.90" y1="481.71" x2="1077.90" y2="491.79" stroke="#4a4a4a" stroke-width="1.0"/>
<line x1="1106.25" y1="481.71" x2="1106.25" y2="491.79" stroke="#4a4a4a" stroke-width="1.0"/>
<line x1="1151.60" y1="481.71" x2="1151.60" y2="491.79" stroke="#4a4a4a" stroke-width="1.0"/>
<line x1="1170.60" y1="481.71" x2="1170.60" y2="491.79" stroke="#4a4a4a" stroke-width="1.0"/>
<line x1="1190.60" y1="481.71" x2="1190.60" y2="491.79" stroke="#2a2a2a" stroke-width="1.5"/>
<line x1="1227.50" y1="481.71" x2="1227.50" y2="491.79" stroke="#4a4a4a" stroke-width="1.0"/>
<line x1="1257.50" y1="481.71" x2="1257.50" y2="491.79" stroke="#4a4a4a" stroke-width="1.0"/>
<line x1="1277.75" y1="481.71" x2="1277.75" y2="491.79" stroke="#2a2a2a" stroke-width="1.5"/>
<line x1="17.00" y1="491.79" x2="17.00" y2="501.88" stroke="#4a4a4a" stroke-width="1.0"/>
<line x1="41.30" y1="491.79" x2="41.30" y2="501.88" stroke="#8c8c8c" stroke-width="1.0"/>
<line x1="126.70" y1="491.79" x2="126.70" y2="501.88" stroke="#2a2a2a" stroke-width="1.5"/>
<line x1="153.50" y1="491.79" x2="153.50" y2="501.88" stroke="#8c8c8c" stroke-width="1.0"/>
<line x1="271.60" y1="491.79" x2="271.60" y2="501.88" stroke="#2a2a2a" stroke-width="1.5"/>
<line x1="290.40" y1="491.79" x2="290.40" y2="501.88" stroke="#8c8c8c" stroke-width="1.0"/>
<line x1="310.60" y1="491.79" x2="310.60" y2="501.88" stroke="#8c8c8c" stroke-width="1.0"/>
<line x1="374.60" y1="491.79" x2="374.60" y2="501.88" stroke="#4a4a4a" stroke-width="1.0"/>
<line x1="394.60" y1="491.79" x2="394.60" y2="501.88" stroke="#8c8c8c" stroke-width="1.0"/>
<line x1="502.50" y1="491.79" x2="502.50" y2="501.88" stroke="#2a2a2a" stroke-width="1.5"/>
<line x1="611.00" y1="491.79" x2="611.00" y2="501.88" stroke="#2a2a2a" stroke-width="1.5"/>
<line x1="636.25" y1="491.79" x2="636.25" y2="501.88" stroke="#8c8c8c" stroke-width="1.0"/>
<line x1="690.40" y1="491.79" x2="690.40" y2="501.88" stroke="#8c8c8c" stroke-width="1.0"/>
<line x1="710.90" y1="491.79" x2="710.90" y2="501.88" stroke="#8c8c8c" stroke-width="1.0"/>
<line x1="731.90" y1="491.79" x2="731.90" y2="501.88" stroke="#8c8c8c" stroke-width="1.0"/>
<line x1="752.90" y1="491.79" x2="752.90" y2="501.88" stroke="#4a4a4a" stroke-width="1.0"/>
<line x1="774.40" y1="491.79" x2="774.40" y2="501.88" stroke="#4a4a4a" stroke-width="1.0"/>
<line x1="794.60" y1="491.79" x2="794.60" y2="501.88" stroke="#4a4a4a" stroke-width="1.0"/>
<line x1="813.30" y1="491.79" x2="813.30" y2="501.88" stroke="#4a4a4a" stroke-width="1.0"/>
<line x1="833.50" y1="491.79" x2="833.50" y2="501.88" stroke="#4a4a4a" stroke-width="1.0"/>
<line x1="853.50" y1="491.79" x2="853.50" y2="501.88" stroke="#4a4a4a" stroke-width="1.0"/>
<line x1="872.80" y1="491.79" x2="872.80" y2="501.88" stroke="#4a4a4a" stroke-width="1.0"/>
<line x1="892.50" y1="491.79" x2="892.50" y2="501.88" stroke="#4a4a4a" stroke-width="1.0"/>
<line x1="912.50" y1="491.79" x2="912.50" y2="501.88" stroke="#4a4a4a" stroke-width="1.0"/>
<line x1="952.75" y1="491.79" x2="952.75" y2="501.88" stroke="#4a4a4a" stroke-width="1.0"/>
<line x1="977.10" y1="491.79" x2="977.10" y2="501.88" stroke="#4a4a4a" stroke-width="1.0"/>
<line x1="1001.25" y1="491.79" x2="1001.25" y2="501.88" stroke="#4a4a4a" stroke-width="1.0"/>
<line x1="1025.40" y1="491.79" x2="1025.40" y2="501.88" stroke="#4a4a4a" stroke-width="1.0"/>
<line x1="1049.60" y1="491.79" x2="1049.60" y2="501.88" stroke="#4a4a4a" stroke-width="1.0"/>
<line x1="1077.90" y1="491.79" x2="1077.90" y2="501.88" stroke="#4a4a4a" stroke-width="1.0"/>
<line x1="1106.25" y1="491.79" x2="1106.25" y2="501.88" stroke="#4a4a4a" stroke-width="1.0"/>
<line x1="1151.60" y1="491.79" x2="1151.60" y2="501.88" stroke="#4a4a4a" stroke-width="1.0"/>
<line x1="1170.60" y1="491.79" x2="1170.60" y2="501.88" stroke="#4a4a4a" stroke-width="1.0"/>
<line x1="1190.60" y1="491.79" x2="1190.60" y2="501.88" stroke="#2a2a2a" stroke-width="1.5"/>
<line x1="1227.50" y1="491.79" x2="1227.50" y2="501.88" stroke="#4a4a4a" stroke-width="1.0"/>
<line x1="1257.50" y1="491.79" x2="1257.50" y2="501.88" stroke="#4a4a4a" stroke-width="1.0"/>
<line x1="1277.75" y1="491.79" x2="1277.75" y2="501.88" stroke="#2a2a2a" stroke-width="1.5"/>
<line x1="17.00" y1="501.88" x2="17.00" y2="511.96" stroke="#4a4a4a" stroke-width="1.0"/>
<line x1="41.30" y1="501.88" x2="41.30" y2="511.96" stroke="#8c8c8c" stroke-width="1.0"/>
<line x1="126.70" y1="501.88" x2="126.70" y2="511.96" stroke="#2a2a2a" stroke-width="1.5"/>
<line x1="153.50" y1="501.88" x2="153.50" y2="511.96" stroke="#8c8c8c" stroke-width="1.0"/>
<line x1="271.60" y1="501.88" x2="271.60" y2="511.96" stroke="#2a2a2a" stroke-width="1.5"/>
<line x1="290.40" y1="501.88" x2="290.40" y2="511.96" stroke="#8c8c8c" stroke-width="1.0"/>
<line x1="310.60" y1="501.88" x2="310.60" y2="511.96" stroke="#8c8c8c" stroke-width="1.0"/>
<line x1="374.60" y1="501.88" x2="374.60" y2="511.96" stroke="#4a4a4a" stroke-width="1.0"/>
<line x1="394.60" y1="501.88" x2="394.60" y2="511.96" stroke="#8c8c8c" stroke-width="1.0"/>
<line x1="502.50" y1="501.88" x2="502.50" y2="511.96" stroke="#2a2a2a" stroke-width="1.5"/>
<line x1="611.00" y1="501.88" x2="611.00" y2="511.96" stroke="#2a2a2a" stroke-width="1.5"/>
<line x1="636.25" y1="501.88" x2="636.25" y2="511.96" stroke="#8c8c8c" stroke-width="1.0"/>
<line x1="752.90" y1="501.88" x2="752.90" y2="511.96" stroke="#4a4a4a" stroke-width="1.0"/>
<line x1="774.40" y1="501.88" x2="774.40" y2="511.96" stroke="#4a4a4a" stroke-width="1.0"/>
<line x1="794.60" y1="501.88" x2="794.60" y2="511.96" stroke="#4a4a4a" stroke-width="1.0"/>
<line x1="813.30" y1="501.88" x2="813.30" y2="511.96" stroke="#4a4a4a" stroke-width="1.0"/>
<line x1="833.50" y1="501.88" x2="833.50" y2="511.96" stroke="#4a4a4a" stroke-width="1.0"/>
<line x1="853.50" y1="501.88" x2="853.50" y2="511.96" stroke="#4a4a4a" stroke-width="1.0"/>
<line x1="872.80" y1="501.88" x2="872.80" y2="511.96" stroke="#4a4a4a" stroke-width="1.0"/>
<line x1="892.50" y1="501.88" x2="892.50" y2="511.96" stroke="#4a4a4a" stroke-width="1.0"/>
<line x1="912.50" y1="501.88" x2="912.50" y2="511.96" stroke="#4a4a4a" stroke-width="1.0"/>
<line x1="952.75" y1="501.88" x2="952.75" y2="511.96" stroke="#4a4a4a" stroke-width="1.0"/>
<line x1="977.10" y1="501.88" x2="977.10" y2="511.96" stroke="#4a4a4a" stroke-width="1.0"/>
<line x1="1001.25" y1="501.88" x2="1001.25" y2="511.96" stroke="#4a4a4a" stroke-width="1.0"/>
<line x1="1025.40" y1="501.88" x2="1025.40" y2="511.96" stroke="#4a4a4a" stroke-width="1.0"/>
<line x1="1049.60" y1="501.88" x2="1049.60" y2="511.96" stroke="#4a4a4a" stroke-width="1.0"/>
<line x1="1077.90" y1="501.88" x2="1077.90" y2="511.96" stroke="#4a4a4a" stroke-width="1.0"/>
<line x1="1106.25" y1="501.88" x2="1106.25" y2="511.96" stroke="#4a4a4a" stroke-width="1.0"/>
<line x1="1151.60" y1="501.88" x2="1151.60" y2="511.96" stroke="#4a4a4a" stroke-width="1.0"/>
<line x1="1170.60" y1="501.88" x2="1170.60" y2="511.96" stroke="#4a4a4a" stroke-width="1.0"/>
<line x1="1190.60" y1="501.88" x2="1190.60" y2="511.96" stroke="#2a2a2a" stroke-width="1.5"/>
<line x1="1227.50" y1="501.88" x2="1227.50" y2="511.96" stroke="#4a4a4a" stroke-width="1.0"/>
<line x1="1257.50" y1="501.88" x2="1257.50" y2="511.96" stroke="#4a4a4a" stroke-width="1.0"/>
<line x1="1277.75" y1="501.88" x2="1277.75" y2="511.96" stroke="#2a2a2a" stroke-width="1.5"/>
<line x1="17.00" y1="511.96" x2="17.00" y2="522.04" stroke="#4a4a4a" stroke-width="1.0"/>
<line x1="41.30" y1="511.96" x2="41.30" y2="522.04" stroke="#8c8c8c" stroke-width="1.0"/>
<line x1="126.70" y1="511.96" x2="126.70" y2="522.04" stroke="#2a2a2a" stroke-width="1.5"/>
<line x1="153.50" y1="511.96" x2="153.50" y2="522.04" stroke="#8c8c8c" stroke-width="1.0"/>
<line x1="271.60" y1="511.96" x2="271.60" y2="522.04" stroke="#2a2a2a" stroke-width="1.5"/>
<line x1="290.40" y1="511.96" x2="290.40" y2="522.04" stroke="#8c8c8c" stroke-width="1.0"/>
<line x1="310.60" y1="511.96" x2="310.60" y2="522.04" stroke="#8c8c8c" stroke-width="1.0"/>
<line x1="374.60" y1="511.96" x2="374.60" y2="522.04" stroke="#4a4a4a" stroke-width="1.0"/>
<line x1="394.60" y1="511.96" x2="394.60" y2="522.04" stroke="#8c8c8c" stroke-width="1.0"/>
<line x1="502.50" y1="511.96" x2="502.50" y2="522.04" stroke="#2a2a2a" stroke-width="1.5"/>
<line x1="611.00" y1="511.96" x2="611.00" y2="522.04" stroke="#2a2a2a" stroke-width="1.5"/>
<line x1="636.25" y1="511.96" x2="636.25" y2="522.04" stroke="#8c8c8c" stroke-width="1.0"/>
<line x1="752.90" y1="511.96" x2="752.90" y2="522.04" stroke="#4a4a4a" stroke-width="1.0"/>
<line x1="774.40" y1="511.96" x2="774.40" y2="522.04" stroke="#4a4a4a" stroke-width="1.0"/>
<line x1="794.60" y1="511.96" x2="794.60" y2="522.04" stroke="#4a4a4a" stroke-width="1.0"/>
<line x1="813.30" y1="511.96" x2="813.30" y2="522.04" stroke="#4a4a4a" stroke-width="1.0"/>
<line x1="833.50" y1="511.96" x2="833.50" y2="522.04" stroke="#4a4a4a" stroke-width="1.0"/>
<line x1="853.50" y1="511.96" x2="853.50" y2="522.04" stroke="#4a4a4a" stroke-width="1.0"/>
<line x1="872.80" y1="511.96" x2="872.80" y2="522.04" stroke="#4a4a4a" stroke-width="1.0"/>
<line x1="892.50" y1="511.96" x2="892.50" y2="522.04" stroke="#4a4a4a" stroke-width="1.0"/>
<line x1="912.50" y1="511.96" x2="912.50" y2="522.04" stroke="#4a4a4a" stroke-width="1.0"/>
<line x1="952.75" y1="511.96" x2="952.75" y2="522.04" stroke="#4a4a4a" stroke-width="1.0"/>
<line x1="977.10" y1="511.96" x2="977.10" y2="522.04" stroke="#4a4a4a" stroke-width="1.0"/>
<line x1="1001.25" y1="511.96" x2="1001.25" y2="522.04" stroke="#4a4a4a" stroke-width="1.0"/>
<line x1="1025.40" y1="511.96" x2="1025.40" y2="522.04" stroke="#4a4a4a" stroke-width="1.0"/>
<line x1="1049.60" y1="511.96" x2="1049.60" y2="522.04" stroke="#4a4a4a" stroke-width="1.0"/>
<line x1="1077.90" y1="511.96" x2="1077.90" y2="522.04" stroke="#4a4a4a" stroke-width="1.0"/>
<line x1="1106.25" y1="511.96" x2="1106.25" y2="522.04" stroke="#4a4a4a" stroke-width="1.0"/>
<line x1="1151.60" y1="511.96" x2="1151.60" y2="522.04" stroke="#4a4a4a" stroke-width="1.0"/>
<line x1="1170.60" y1="511.96" x2="1170.60" y2="522.04" stroke="#4a4a4a" stroke-width="1.0"/>
<line x1="1190.60" y1="511.96" x2="1190.60" y2="522.04" stroke="#2a2a2a" stroke-width="1.5"/>
<line x1="1227.50" y1="511.96" x2="1227.50" y2="522.04" stroke="#4a4a4a" stroke-width="1.0"/>
<line x1="1257.50" y1="511.96" x2="1257.50" y2="522.04" stroke="#4a4a4a" stroke-width="1.0"/>
<line x1="1277.75" y1="511.96" x2="1277.75" y2="522.04" stroke="#2a2a2a" stroke-width="1.5"/>
<line x1="17.00" y1="522.04" x2="17.00" y2="532.13" stroke="#4a4a4a" stroke-width="1.0"/>
<line x1="41.30" y1="522.04" x2="41.30" y2="532.13" stroke="#8c8c8c" stroke-width="1.0"/>
<line x1="126.70" y1="522.04" x2="126.70" y2="532.13" stroke="#2a2a2a" stroke-width="1.5"/>
<line x1="153.50" y1="522.04" x2="153.50" y2="532.13" stroke="#8c8c8c" stroke-width="1.0"/>
<line x1="271.60" y1="522.04" x2="271.60" y2="532.13" stroke="#2a2a2a" stroke-width="1.5"/>
<line x1="290.40" y1="522.04" x2="290.40" y2="532.13" stroke="#8c8c8c" stroke-width="1.0"/>
<line x1="310.60" y1="522.04" x2="310.60" y2="532.13" stroke="#8c8c8c" stroke-width="1.0"/>
<line x1="374.60" y1="522.04" x2="374.60" y2="532.13" stroke="#4a4a4a" stroke-width="1.0"/>
<line x1="394.60" y1="522.04" x2="394.60" y2="532.13" stroke="#8c8c8c" stroke-width="1.0"/>
<line x1="502.50" y1="522.04" x2="502.50" y2="532.13" stroke="#2a2a2a" stroke-width="1.5"/>
<line x1="611.00" y1="522.04" x2="611.00" y2="532.13" stroke="#2a2a2a" stroke-width="1.5"/>
<line x1="636.25" y1="522.04" x2="636.25" y2="532.13" stroke="#8c8c8c" stroke-width="1.0"/>
<line x1="752.90" y1="522.04" x2="752.90" y2="532.13" stroke="#4a4a4a" stroke-width="1.0"/>
<line x1="774.40" y1="522.04" x2="774.40" y2="532.13" stroke="#4a4a4a" stroke-width="1.0"/>
<line x1="794.60" y1="522.04" x2="794.60" y2="532.13" stroke="#4a4a4a" stroke-width="1.0"/>
<line x1="813.30" y1="522.04" x2="813.30" y2="532.13" stroke="#4a4a4a" stroke-width="1.0"/>
<line x1="833.50" y1="522.04" x2="833.50" y2="532.13" stroke="#4a4a4a" stroke-width="1.0"/>
<line x1="853.50" y1="522.04" x2="853.50" y2="532.13" stroke="#4a4a4a" stroke-width="1.0"/>
<line x1="872.80" y1="522.04" x2="872.80" y2="532.13" stroke="#4a4a4a" stroke-width="1.0"/>
<line x1="892.50" y1="522.04" x2="892.50" y2="532.13" stroke="#4a4a4a" stroke-width="1.0"/>
<line x1="912.50" y1="522.04" x2="912.50" y2="532.13" stroke="#4a4a4a" stroke-width="1.0"/>
<line x1="952.75" y1="522.04" x2="952.75" y2="532.13" stroke="#4a4a4a" stroke-width="1.0"/>
<line x1="977.10" y1="522.04" x2="977.10" y2="532.13" stroke="#4a4a4a" stroke-width="1.0"/>
<line x1="1001.25" y1="522.04" x2="1001.25" y2="532.13" stroke="#4a4a4a" stroke-width="1.0"/>
<line x1="1025.40" y1="522.04" x2="1025.40" y2="532.13" stroke="#4a4a4a" stroke-width="1.0"/>
<line x1="1049.60" y1="522.04" x2="1049.60" y2="532.13" stroke="#4a4a4a" stroke-width="1.0"/>
<line x1="1077.90" y1="522.04" x2="1077.90" y2="532.13" stroke="#4a4a4a" stroke-width="1.0"/>
<line x1="1106.25" y1="522.04" x2="1106.25" y2="532.13" stroke="#4a4a4a" stroke-width="1.0"/>
<line x1="1151.60" y1="522.04" x2="1151.60" y2="532.13" stroke="#4a4a4a" stroke-width="1.0"/>
<line x1="1170.60" y1="522.04" x2="1170.60" y2="532.13" stroke="#4a4a4a" stroke-width="1.0"/>
<line x1="1190.60" y1="522.04" x2="1190.60" y2="532.13" stroke="#2a2a2a" stroke-width="1.5"/>
<line x1="1227.50" y1="522.04" x2="1227.50" y2="532.13" stroke="#4a4a4a" stroke-width="1.0"/>
<line x1="1257.50" y1="522.04" x2="1257.50" y2="532.13" stroke="#4a4a4a" stroke-width="1.0"/>
<line x1="1277.75" y1="522.04" x2="1277.75" y2="532.13" stroke="#2a2a2a" stroke-width="1.5"/>
<line x1="17.00" y1="532.13" x2="17.00" y2="542.21" stroke="#4a4a4a" stroke-width="1.0"/>
<line x1="41.30" y1="532.13" x2="41.30" y2="542.21" stroke="#8c8c8c" stroke-width="1.0"/>
<line x1="126.70" y1="532.13" x2="126.70" y2="542.21" stroke="#2a2a2a" stroke-width="1.5"/>
<line x1="153.50" y1="532.13" x2="153.50" y2="542.21" stroke="#8c8c8c" stroke-width="1.0"/>
<line x1="271.60" y1="532.13" x2="271.60" y2="542.21" stroke="#2a2a2a" stroke-width="1.5"/>
<line x1="290.40" y1="532.13" x2="290.40" y2="542.21" stroke="#8c8c8c" stroke-width="1.0"/>
<line x1="310.60" y1="532.13" x2="310.60" y2="542.21" stroke="#8c8c8c" stroke-width="1.0"/>
<line x1="374.60" y1="532.13" x2="374.60" y2="542.21" stroke="#4a4a4a" stroke-width="1.0"/>
<line x1="394.60" y1="532.13" x2="394.60" y2="542.21" stroke="#8c8c8c" stroke-width="1.0"/>
<line x1="502.50" y1="532.13" x2="502.50" y2="542.21" stroke="#2a2a2a" stroke-width="1.5"/>
<line x1="611.00" y1="532.13" x2="611.00" y2="542.21" stroke="#2a2a2a" stroke-width="1.5"/>
<line x1="636.25" y1="532.13" x2="636.25" y2="542.21" stroke="#8c8c8c" stroke-width="1.0"/>
<line x1="752.90" y1="532.13" x2="752.90" y2="542.21" stroke="#4a4a4a" stroke-width="1.0"/>
<line x1="774.40" y1="532.13" x2="774.40" y2="542.21" stroke="#4a4a4a" stroke-width="1.0"/>
<line x1="794.60" y1="532.13" x2="794.60" y2="542.21" stroke="#4a4a4a" stroke-width="1.0"/>
<line x1="813.30" y1="532.13" x2="813.30" y2="542.21" stroke="#4a4a4a" stroke-width="1.0"/>
<line x1="833.50" y1="532.13" x2="833.50" y2="542.21" stroke="#4a4a4a" stroke-width="1.0"/>
<line x1="853.50" y1="532.13" x2="853.50" y2="542.21" stroke="#4a4a4a" stroke-width="1.0"/>
<line x1="872.80" y1="532.13" x2="872.80" y2="542.21" stroke="#4a4a4a" stroke-width="1.0"/>
<line x1="892.50" y1="532.13" x2="892.50" y2="542.21" stroke="#4a4a4a" stroke-width="1.0"/>
<line x1="912.50" y1="532.13" x2="912.50" y2="542.21" stroke="#4a4a4a" stroke-width="1.0"/>
<line x1="952.75" y1="532.13" x2="952.75" y2="542.21" stroke="#4a4a4a" stroke-width="1.0"/>
<line x1="977.10" y1="532.13" x2="977.10" y2="542.21" stroke="#4a4a4a" stroke-width="1.0"/>
<line x1="1001.25" y1="532.13" x2="1001.25" y2="542.21" stroke="#4a4a4a" stroke-width="1.0"/>
<line x1="1025.40" y1="532.13" x2="1025.40" y2="542.21" stroke="#4a4a4a" stroke-width="1.0"/>
<line x1="1049.60" y1="532.13" x2="1049.60" y2="542.21" stroke="#4a4a4a" stroke-width="1.0"/>
<line x1="1077.90" y1="532.13" x2="1077.90" y2="542.21" stroke="#4a4a4a" stroke-width="1.0"/>
<line x1="1106.25" y1="532.13" x2="1106.25" y2="542.21" stroke="#4a4a4a" stroke-width="1.0"/>
<line x1="1151.60" y1="532.13" x2="1151.60" y2="542.21" stroke="#4a4a4a" stroke-width="1.0"/>
<line x1="1170.60" y1="532.13" x2="1170.60" y2="542.21" stroke="#4a4a4a" stroke-width="1.0"/>
<line x1="1190.60" y1="532.13" x2="1190.60" y2="542.21" stroke="#2a2a2a" stroke-width="1.5"/>
<line x1="1227.50" y1="532.13" x2="1227.50" y2="542.21" stroke="#4a4a4a" stroke-width="1.0"/>
<line x1="1257.50" y1="532.13" x2="1257.50" y2="542.21" stroke="#4a4a4a" stroke-width="1.0"/>
<line x1="1277.75" y1="532.13" x2="1277.75" y2="542.21" stroke="#2a2a2a" stroke-width="1.5"/>
<line x1="17.00" y1="542.21" x2="17.00" y2="552.29" stroke="#4a4a4a" stroke-width="1.0"/>
<line x1="41.30" y1="542.21" x2="41.30" y2="552.29" stroke="#8c8c8c" stroke-width="1.0"/>
<line x1="126.70" y1="542.21" x2="126.70" y2="552.29" stroke="#2a2a2a" stroke-width="1.5"/>
<line x1="153.50" y1="542.21" x2="153.50" y2="552.29" stroke="#8c8c8c" stroke-width="1.0"/>
<line x1="271.60" y1="542.21" x2="271.60" y2="552.29" stroke="#2a2a2a" stroke-width="1.5"/>
<line x1="290.40" y1="542.21" x2="290.40" y2="552.29" stroke="#8c8c8c" stroke-width="1.0"/>
<line x1="310.60" y1="542.21" x2="310.60" y2="552.29" stroke="#8c8c8c" stroke-width="1.0"/>
<line x1="374.60" y1="542.21" x2="374.60" y2="552.29" stroke="#4a4a4a" stroke-width="1.0"/>
<line x1="394.60" y1="542.21" x2="394.60" y2="552.29" stroke="#8c8c8c" stroke-width="1.0"/>
<line x1="502.50" y1="542.21" x2="502.50" y2="552.29" stroke="#2a2a2a" stroke-width="1.5"/>
<line x1="611.00" y1="542.21" x2="611.00" y2="552.29" stroke="#2a2a2a" stroke-width="1.5"/>
<line x1="636.25" y1="542.21" x2="636.25" y2="552.29" stroke="#8c8c8c" stroke-width="1.0"/>
<line x1="752.90" y1="542.21" x2="752.90" y2="552.29" stroke="#4a4a4a" stroke-width="1.0"/>
<line x1="774.40" y1="542.21" x2="774.40" y2="552.29" stroke="#4a4a4a" stroke-width="1.0"/>
<line x1="794.60" y1="542.21" x2="794.60" y2="552.29" stroke="#4a4a4a" stroke-width="1.0"/>
<line x1="813.30" y1="542.21" x2="813.30" y2="552.29" stroke="#4a4a4a" stroke-width="1.0"/>
<line x1="833.50" y1="542.21" x2="833.50" y2="552.29" stroke="#4a4a4a" stroke-width="1.0"/>
<line x1="853.50" y1="542.21" x2="853.50" y2="552.29" stroke="#4a4a4a" stroke-width="1.0"/>
<line x1="872.80" y1="542.21" x2="872.80" y2="552.29" stroke="#4a4a4a" stroke-width="1.0"/>
<line x1="892.50" y1="542.21" x2="892.50" y2="552.29" stroke="#4a4a4a" stroke-width="1.0"/>
<line x1="912.50" y1="542.21" x2="912.50" y2="552.29" stroke="#4a4a4a" stroke-width="1.0"/>
<line x1="952.75" y1="542.21" x2="952.75" y2="552.29" stroke="#4a4a4a" stroke-width="1.0"/>
<line x1="977.10" y1="542.21" x2="977.10" y2="552.29" stroke="#4a4a4a" stroke-width="1.0"/>
<line x1="1001.25" y1="542.21" x2="1001.25" y2="552.29" stroke="#4a4a4a" stroke-width="1.0"/>
<line x1="1025.40" y1="542.21" x2="1025.40" y2="552.29" stroke="#4a4a4a" stroke-width="1.0"/>
<line x1="1049.60" y1="542.21" x2="1049.60" y2="552.29" stroke="#4a4a4a" stroke-width="1.0"/>
<line x1="1077.90" y1="542.21" x2="1077.90" y2="552.29" stroke="#4a4a4a" stroke-width="1.0"/>
<line x1="1106.25" y1="542.21" x2="1106.25" y2="552.29" stroke="#4a4a4a" stroke-width="1.0"/>
<line x1="1151.60" y1="542.21" x2="1151.60" y2="552.29" stroke="#4a4a4a" stroke-width="1.0"/>
<line x1="1170.60" y1="542.21" x2="1170.60" y2="552.29" stroke="#4a4a4a" stroke-width="1.0"/>
<line x1="1190.60" y1="542.21" x2="1190.60" y2="552.29" stroke="#2a2a2a" stroke-width="1.5"/>
<line x1="1227.50" y1="542.21" x2="1227.50" y2="552.29" stroke="#4a4a4a" stroke-width="1.0"/>
<line x1="1257.50" y1="542.21" x2="1257.50" y2="552.29" stroke="#4a4a4a" stroke-width="1.0"/>
<line x1="1277.75" y1="542.21" x2="1277.75" y2="552.29" stroke="#2a2a2a" stroke-width="1.5"/>
<line x1="17.00" y1="552.29" x2="17.00" y2="562.38" stroke="#4a4a4a" stroke-width="1.0"/>
<line x1="41.30" y1="552.29" x2="41.30" y2="562.38" stroke="#8c8c8c" stroke-width="1.0"/>
<line x1="126.70" y1="552.29" x2="126.70" y2="562.38" stroke="#2a2a2a" stroke-width="1.5"/>
<line x1="153.50" y1="552.29" x2="153.50" y2="562.38" stroke="#8c8c8c" stroke-width="1.0"/>
<line x1="271.60" y1="552.29" x2="271.60" y2="562.38" stroke="#2a2a2a" stroke-width="1.5"/>
<line x1="290.40" y1="552.29" x2="290.40" y2="562.38" stroke="#8c8c8c" stroke-width="1.0"/>
<line x1="310.60" y1="552.29" x2="310.60" y2="562.38" stroke="#8c8c8c" stroke-width="1.0"/>
<line x1="374.60" y1="552.29" x2="374.60" y2="562.38" stroke="#4a4a4a" stroke-width="1.0"/>
<line x1="394.60" y1="552.29" x2="394.60" y2="562.38" stroke="#8c8c8c" stroke-width="1.0"/>
<line x1="502.50" y1="552.29" x2="502.50" y2="562.38" stroke="#2a2a2a" stroke-width="1.5"/>
<line x1="611.00" y1="552.29" x2="611.00" y2="562.38" stroke="#2a2a2a" stroke-width="1.5"/>
<line x1="636.25" y1="552.29" x2="636.25" y2="562.38" stroke="#8c8c8c" stroke-width="1.0"/>
<line x1="752.90" y1="552.29" x2="752.90" y2="562.38" stroke="#4a4a4a" stroke-width="1.0"/>
<line x1="774.40" y1="552.29" x2="774.40" y2="562.38" stroke="#4a4a4a" stroke-width="1.0"/>
<line x1="794.60" y1="552.29" x2="794.60" y2="562.38" stroke="#4a4a4a" stroke-width="1.0"/>
<line x1="813.30" y1="552.29" x2="813.30" y2="562.38" stroke="#4a4a4a" stroke-width="1.0"/>
<line x1="833.50" y1="552.29" x2="833.50" y2="562.38" stroke="#4a4a4a" stroke-width="1.0"/>
<line x1="853.50" y1="552.29" x2="853.50" y2="562.38" stroke="#4a4a4a" stroke-width="1.0"/>
<line x1="872.80" y1="552.29" x2="872.80" y2="562.38" stroke="#4a4a4a" stroke-width="1.0"/>
<line x1="892.50" y1="552.29" x2="892.50" y2="562.38" stroke="#4a4a4a" stroke-width="1.0"/>
<line x1="912.50" y1="552.29" x2="912.50" y2="562.38" stroke="#4a4a4a" stroke-width="1.0"/>
<line x1="952.75" y1="552.29" x2="952.75" y2="562.38" stroke="#4a4a4a" stroke-width="1.0"/>
<line x1="977.10" y1="552.29" x2="977.10" y2="562.38" stroke="#4a4a4a" stroke-width="1.0"/>
<line x1="1001.25" y1="552.29" x2="1001.25" y2="562.38" stroke="#4a4a4a" stroke-width="1.0"/>
<line x1="1025.40" y1="552.29" x2="1025.40" y2="562.38" stroke="#4a4a4a" stroke-width="1.0"/>
<line x1="1049.60" y1="552.29" x2="1049.60" y2="562.38" stroke="#4a4a4a" stroke-width="1.0"/>
<line x1="1077.90" y1="552.29" x2="1077.90" y2="562.38" stroke="#4a4a4a" stroke-width="1.0"/>
<line x1="1106.25" y1="552.29" x2="1106.25" y2="562.38" stroke="#4a4a4a" stroke-width="1.0"/>
<line x1="1151.60" y1="552.29" x2="1151.60" y2="562.38" stroke="#4a4a4a" stroke-width="1.0"/>
<line x1="1170.60" y1="552.29" x2="1170.60" y2="562.38" stroke="#4a4a4a" stroke-width="1.0"/>
<line x1="1190.60" y1="552.29" x2="1190.60" y2="562.38" stroke="#2a2a2a" stroke-width="1.5"/>
<line x1="1227.50" y1="552.29" x2="1227.50" y2="562.38" stroke="#4a4a4a" stroke-width="1.0"/>
<line x1="1257.50" y1="552.29" x2="1257.50" y2="562.38" stroke="#4a4a4a" stroke-width="1.0"/>
<line x1="1277.75" y1="552.29" x2="1277.75" y2="562.38" stroke="#2a2a2a" stroke-width="1.5"/>
<line x1="17.00" y1="562.38" x2="17.00" y2="572.46" stroke="#4a4a4a" stroke-width="1.0"/>
<line x1="41.30" y1="562.38" x2="41.30" y2="572.46" stroke="#8c8c8c" stroke-width="1.0"/>
<line x1="126.70" y1="562.38" x2="126.70" y2="572.46" stroke="#2a2a2a" stroke-width="1.5"/>
<line x1="153.50" y1="562.38" x2="153.50" y2="572.46" stroke="#8c8c8c" stroke-width="1.0"/>
<line x1="271.60" y1="562.38" x2="271.60" y2="572.46" stroke="#2a2a2a" stroke-width="1.5"/>
<line x1="290.40" y1="562.38" x2="290.40" y2="572.46" stroke="#8c8c8c" stroke-width="1.0"/>
<line x1="310.60" y1="562.38" x2="310.60" y2="572.46" stroke="#8c8c8c" stroke-width="1.0"/>
<line x1="374.60" y1="562.38" x2="374.60" y2="572.46" stroke="#4a4a4a" stroke-width="1.0"/>
<line x1="394.60" y1="562.38" x2="394.60" y2="572.46" stroke="#8c8c8c" stroke-width="1.0"/>
<line x1="502.50" y1="562.38" x2="502.50" y2="572.46" stroke="#2a2a2a" stroke-width="1.5"/>
<line x1="611.00" y1="562.38" x2="611.00" y2="572.46" stroke="#2a2a2a" stroke-width="1.5"/>
<line x1="636.25" y1="562.38" x2="636.25" y2="572.46" stroke="#8c8c8c" stroke-width="1.0"/>
<line x1="752.90" y1="562.38" x2="752.90" y2="572.46" stroke="#4a4a4a" stroke-width="1.0"/>
<line x1="774.40" y1="562.38" x2="774.40" y2="572.46" stroke="#4a4a4a" stroke-width="1.0"/>
<line x1="794.60" y1="562.38" x2="794.60" y2="572.46" stroke="#4a4a4a" stroke-width="1.0"/>
<line x1="813.30" y1="562.38" x2="813.30" y2="572.46" stroke="#4a4a4a" stroke-width="1.0"/>
<line x1="833.50" y1="562.38" x2="833.50" y2="572.46" stroke="#4a4a4a" stroke-width="1.0"/>
<line x1="853.50" y1="562.38" x2="853.50" y2="572.46" stroke="#4a4a4a" stroke-width="1.0"/>
<line x1="872.80" y1="562.38" x2="872.80" y2="572.46" stroke="#4a4a4a" stroke-width="1.0"/>
<line x1="892.50" y1="562.38" x2="892.50" y2="572.46" stroke="#4a4a4a" stroke-width="1.0"/>
<line x1="912.50" y1="562.38" x2="912.50" y2="572.46" stroke="#4a4a4a" stroke-width="1.0"/>
<line x1="952.75" y1="562.38" x2="952.75" y2="572.46" stroke="#4a4a4a" stroke-width="1.0"/>
<line x1="977.10" y1="562.38" x2="977.10" y2="572.46" stroke="#4a4a4a" stroke-width="1.0"/>
<line x1="1001.25" y1="562.38" x2="1001.25" y2="572.46" stroke="#4a4a4a" stroke-width="1.0"/>
<line x1="1025.40" y1="562.38" x2="1025.40" y2="572.46" stroke="#4a4a4a" stroke-width="1.0"/>
<line x1="1049.60" y1="562.38" x2="1049.60" y2="572.46" stroke="#4a4a4a" stroke-width="1.0"/>
<line x1="1077.90" y1="562.38" x2="1077.90" y2="572.46" stroke="#4a4a4a" stroke-width="1.0"/>
<line x1="1106.25" y1="562.38" x2="1106.25" y2="572.46" stroke="#4a4a4a" stroke-width="1.0"/>
<line x1="1151.60" y1="562.38" x2="1151.60" y2="572.46" stroke="#4a4a4a" stroke-width="1.0"/>
<line x1="1170.60" y1="562.38" x2="1170.60" y2="572.46" stroke="#4a4a4a" stroke-width="1.0"/>
<line x1="1190.60" y1="562.38" x2="1190.60" y2="572.46" stroke="#2a2a2a" stroke-width="1.5"/>
<line x1="1227.50" y1="562.38" x2="1227.50" y2="572.46" stroke="#4a4a4a" stroke-width="1.0"/>
<line x1="1257.50" y1="562.38" x2="1257.50" y2="572.46" stroke="#4a4a4a" stroke-width="1.0"/>
<line x1="1277.75" y1="562.38" x2="1277.75" y2="572.46" stroke="#2a2a2a" stroke-width="1.5"/>
<line x1="17.00" y1="572.46" x2="17.00" y2="582.54" stroke="#4a4a4a" stroke-width="1.0"/>
<line x1="41.30" y1="572.46" x2="41.30" y2="582.54" stroke="#8c8c8c" stroke-width="1.0"/>
<line x1="126.70" y1="572.46" x2="126.70" y2="582.54" stroke="#2a2a2a" stroke-width="1.5"/>
<line x1="153.50" y1="572.46" x2="153.50" y2="582.54" stroke="#8c8c8c" stroke-width="1.0"/>
<line x1="271.60" y1="572.46" x2="271.60" y2="582.54" stroke="#2a2a2a" stroke-width="1.5"/>
<line x1="290.40" y1="572.46" x2="290.40" y2="582.54" stroke="#8c8c8c" stroke-width="1.0"/>
<line x1="310.60" y1="572.46" x2="310.60" y2="582.54" stroke="#8c8c8c" stroke-width="1.0"/>
<line x1="374.60" y1="572.46" x2="374.60" y2="582.54" stroke="#4a4a4a" stroke-width="1.0"/>
<line x1="394.60" y1="572.46" x2="394.60" y2="582.54" stroke="#8c8c8c" stroke-width="1.0"/>
<line x1="502.50" y1="572.46" x2="502.50" y2="582.54" stroke="#2a2a2a" stroke-width="1.5"/>
<line x1="611.00" y1="572.46" x2="611.00" y2="582.54" stroke="#2a2a2a" stroke-width="1.5"/>
<line x1="636.25" y1="572.46" x2="636.25" y2="582.54" stroke="#8c8c8c" stroke-width="1.0"/>
<line x1="752.90" y1="572.46" x2="752.90" y2="582.54" stroke="#4a4a4a" stroke-width="1.0"/>
<line x1="774.40" y1="572.46" x2="774.40" y2="582.54" stroke="#4a4a4a" stroke-width="1.0"/>
<line x1="794.60" y1="572.46" x2="794.60" y2="582.54" stroke="#4a4a4a" stroke-width="1.0"/>
<line x1="813.30" y1="572.46" x2="813.30" y2="582.54" stroke="#4a4a4a" stroke-width="1.0"/>
<line x1="833.50" y1="572.46" x2="833.50" y2="582.54" stroke="#4a4a4a" stroke-width="1.0"/>
<line x1="853.50" y1="572.46" x2="853.50" y2="582.54" stroke="#4a4a4a" stroke-width="1.0"/>
<line x1="872.80" y1="572.46" x2="872.80" y2="582.54" stroke="#4a4a4a" stroke-width="1.0"/>
<line x1="892.50" y1="572.46" x2="892.50" y2="582.54" stroke="#4a4a4a" stroke-width="1.0"/>
<line x1="912.50" y1="572.46" x2="912.50" y2="582.54" stroke="#4a4a4a" stroke-width="1.0"/>
<line x1="952.75" y1="572.46" x2="952.75" y2="582.54" stroke="#4a4a4a" stroke-width="1.0"/>
<line x1="977.10" y1="572.46" x2="977.10" y2="582.54" stroke="#4a4a4a" stroke-width="1.0"/>
<line x1="1001.25" y1="572.46" x2="1001.25" y2="582.54" stroke="#4a4a4a" stroke-width="1.0"/>
<line x1="1025.40" y1="572.46" x2="1025.40" y2="582.54" stroke="#4a4a4a" stroke-width="1.0"/>
<line x1="1049.60" y1="572.46" x2="1049.60" y2="582.54" stroke="#4a4a4a" stroke-width="1.0"/>
<line x1="1077.90" y1="572.46" x2="1077.90" y2="582.54" stroke="#4a4a4a" stroke-width="1.0"/>
<line x1="1106.25" y1="572.46" x2="1106.25" y2="582.54" stroke="#4a4a4a" stroke-width="1.0"/>
<line x1="1151.60" y1="572.46" x2="1151.60" y2="582.54" stroke="#4a4a4a" stroke-width="1.0"/>
<line x1="1170.60" y1="572.46" x2="1170.60" y2="582.54" stroke="#4a4a4a" stroke-width="1.0"/>
<line x1="1190.60" y1="572.46" x2="1190.60" y2="582.54" stroke="#2a2a2a" stroke-width="1.5"/>
<line x1="1227.50" y1="572.46" x2="1227.50" y2="582.54" stroke="#4a4a4a" stroke-width="1.0"/>
<line x1="1257.50" y1="572.46" x2="1257.50" y2="582.54" stroke="#4a4a4a" stroke-width="1.0"/>
<line x1="1277.75" y1="572.46" x2="1277.75" y2="582.54" stroke="#2a2a2a" stroke-width="1.5"/>
<line x1="17.00" y1="582.54" x2="17.00" y2="592.62" stroke="#4a4a4a" stroke-width="1.0"/>
<line x1="41.30" y1="582.54" x2="41.30" y2="592.62" stroke="#8c8c8c" stroke-width="1.0"/>
<line x1="126.70" y1="582.54" x2="126.70" y2="592.62" stroke="#2a2a2a" stroke-width="1.5"/>
<line x1="153.50" y1="582.54" x2="153.50" y2="592.62" stroke="#8c8c8c" stroke-width="1.0"/>
<line x1="271.60" y1="582.54" x2="271.60" y2="592.62" stroke="#2a2a2a" stroke-width="1.5"/>
<line x1="290.40" y1="582.54" x2="290.40" y2="592.62" stroke="#8c8c8c" stroke-width="1.0"/>
<line x1="310.60" y1="582.54" x2="310.60" y2="592.62" stroke="#8c8c8c" stroke-width="1.0"/>
<line x1="374.60" y1="582.54" x2="374.60" y2="592.62" stroke="#4a4a4a" stroke-width="1.0"/>
<line x1="394.60" y1="582.54" x2="394.60" y2="592.62" stroke="#8c8c8c" stroke-width="1.0"/>
<line x1="502.50" y1="582.54" x2="502.50" y2="592.62" stroke="#2a2a2a" stroke-width="1.5"/>
<line x1="611.00" y1="582.54" x2="611.00" y2="592.62" stroke="#2a2a2a" stroke-width="1.5"/>
<line x1="636.25" y1="582.54" x2="636.25" y2="592.62" stroke="#8c8c8c" stroke-width="1.0"/>
<line x1="752.90" y1="582.54" x2="752.90" y2="592.62" stroke="#4a4a4a" stroke-width="1.0"/>
<line x1="774.40" y1="582.54" x2="774.40" y2="592.62" stroke="#4a4a4a" stroke-width="1.0"/>
<line x1="794.60" y1="582.54" x2="794.60" y2="592.62" stroke="#4a4a4a" stroke-width="1.0"/>
<line x1="813.30" y1="582.54" x2="813.30" y2="592.62" stroke="#4a4a4a" stroke-width="1.0"/>
<line x1="833.50" y1="582.54" x2="833.50" y2="592.62" stroke="#4a4a4a" stroke-width="1.0"/>
<line x1="853.50" y1="582.54" x2="853.50" y2="592.62" stroke="#4a4a4a" stroke-width="1.0"/>
<line x1="872.80" y1="582.54" x2="872.80" y2="592.62" stroke="#4a4a4a" stroke-width="1.0"/>
<line x1="892.50" y1="582.54" x2="892.50" y2="592.62" stroke="#4a4a4a" stroke-width="1.0"/>
<line x1="912.50" y1="582.54" x2="912.50" y2="592.62" stroke="#4a4a4a" stroke-width="1.0"/>
<line x1="952.75" y1="582.54" x2="952.75" y2="592.62" stroke="#4a4a4a" stroke-width="1.0"/>
<line x1="977.10" y1="582.54" x2="977.10" y2="592.62" stroke="#4a4a4a" stroke-width="1.0"/>
<line x1="1001.25" y1="582.54" x2="1001.25" y2="592.62" stroke="#4a4a4a" stroke-width="1.0"/>
<line x1="1025.40" y1="582.54" x2="1025.40" y2="592.62" stroke="#4a4a4a" stroke-width="1.0"/>
<line x1="1049.60" y1="582.54" x2="1049.60" y2="592.62" stroke="#4a4a4a" stroke-width="1.0"/>
<line x1="1077.90" y1="582.54" x2="1077.90" y2="592.62" stroke="#4a4a4a" stroke-width="1.0"/>
<line x1="1106.25" y1="582.54" x2="1106.25" y2="592.62" stroke="#4a4a4a" stroke-width="1.0"/>
<line x1="1151.60" y1="582.54" x2="1151.60" y2="592.62" stroke="#4a4a4a" stroke-width="1.0"/>
<line x1="1170.60" y1="582.54" x2="1170.60" y2="592.62" stroke="#4a4a4a" stroke-width="1.0"/>
<line x1="1190.60" y1="582.54" x2="1190.60" y2="592.62" stroke="#2a2a2a" stroke-width="1.5"/>
<line x1="1227.50" y1="582.54" x2="1227.50" y2="592.62" stroke="#4a4a4a" stroke-width="1.0"/>
<line x1="1257.50" y1="582.54" x2="1257.50" y2="592.62" stroke="#4a4a4a" stroke-width="1.0"/>
<line x1="1277.75" y1="582.54" x2="1277.75" y2="592.62" stroke="#2a2a2a" stroke-width="1.5"/>
<line x1="17.00" y1="592.62" x2="17.00" y2="602.71" stroke="#4a4a4a" stroke-width="1.0"/>
<line x1="41.30" y1="592.62" x2="41.30" y2="602.71" stroke="#8c8c8c" stroke-width="1.0"/>
<line x1="126.70" y1="592.62" x2="126.70" y2="602.71" stroke="#2a2a2a" stroke-width="1.5"/>
<line x1="153.50" y1="592.62" x2="153.50" y2="602.71" stroke="#8c8c8c" stroke-width="1.0"/>
<line x1="271.60" y1="592.62" x2="271.60" y2="602.71" stroke="#2a2a2a" stroke-width="1.5"/>
<line x1="290.40" y1="592.62" x2="290.40" y2="602.71" stroke="#8c8c8c" stroke-width="1.0"/>
<line x1="310.60" y1="592.62" x2="310.60" y2="602.71" stroke="#8c8c8c" stroke-width="1.0"/>
<line x1="374.60" y1="592.62" x2="374.60" y2="602.71" stroke="#4a4a4a" stroke-width="1.0"/>
<line x1="394.60" y1="592.62" x2="394.60" y2="602.71" stroke="#8c8c8c" stroke-width="1.0"/>
<line x1="502.50" y1="592.62" x2="502.50" y2="602.71" stroke="#2a2a2a" stroke-width="1.5"/>
<line x1="611.00" y1="592.62" x2="611.00" y2="602.71" stroke="#2a2a2a" stroke-width="1.5"/>
<line x1="636.25" y1="592.62" x2="636.25" y2="602.71" stroke="#8c8c8c" stroke-width="1.0"/>
<line x1="752.90" y1="592.62" x2="752.90" y2="602.71" stroke="#4a4a4a" stroke-width="1.0"/>
<line x1="774.40" y1="592.62" x2="774.40" y2="602.71" stroke="#4a4a4a" stroke-width="1.0"/>
<line x1="794.60" y1="592.62" x2="794.60" y2="602.71" stroke="#4a4a4a" stroke-width="1.0"/>
<line x1="813.30" y1="592.62" x2="813.30" y2="602.71" stroke="#4a4a4a" stroke-width="1.0"/>
<line x1="833.50" y1="592.62" x2="833.50" y2="602.71" stroke="#4a4a4a" stroke-width="1.0"/>
<line x1="853.50" y1="592.62" x2="853.50" y2="602.71" stroke="#4a4a4a" stroke-width="1.0"/>
<line x1="872.80" y1="592.62" x2="872.80" y2="602.71" stroke="#4a4a4a" stroke-width="1.0"/>
<line x1="892.50" y1="592.62" x2="892.50" y2="602.71" stroke="#4a4a4a" stroke-width="1.0"/>
<line x1="912.50" y1="592.62" x2="912.50" y2="602.71" stroke="#4a4a4a" stroke-width="1.0"/>
<line x1="952.75" y1="592.62" x2="952.75" y2="602.71" stroke="#4a4a4a" stroke-width="1.0"/>
<line x1="977.10" y1="592.62" x2="977.10" y2="602.71" stroke="#4a4a4a" stroke-width="1.0"/>
<line x1="1001.25" y1="592.62" x2="1001.25" y2="602.71" stroke="#4a4a4a" stroke-width="1.0"/>
<line x1="1025.40" y1="592.62" x2="1025.40" y2="602.71" stroke="#4a4a4a" stroke-width="1.0"/>
<line x1="1049.60" y1="592.62" x2="1049.60" y2="602.71" stroke="#4a4a4a" stroke-width="1.0"/>
<line x1="1077.90" y1="592.62" x2="1077.90" y2="602.71" stroke="#4a4a4a" stroke-width="1.0"/>
<line x1="1106.25" y1="592.62" x2="1106.25" y2="602.71" stroke="#4a4a4a" stroke-width="1.0"/>
<line x1="1151.60" y1="592.62" x2="1151.60" y2="602.71" stroke="#4a4a4a" stroke-width="1.0"/>
<line x1="1170.60" y1="592.62" x2="1170.60" y2="602.71" stroke="#4a4a4a" stroke-width="1.0"/>
<line x1="1190.60" y1="592.62" x2="1190.60" y2="602.71" stroke="#2a2a2a" stroke-width="1.5"/>
<line x1="1227.50" y1="592.62" x2="1227.50" y2="602.71" stroke="#4a4a4a" stroke-width="1.0"/>
<line x1="1257.50" y1="592.62" x2="1257.50" y2="602.71" stroke="#4a4a4a" stroke-width="1.0"/>
<line x1="1277.75" y1="592.62" x2="1277.75" y2="602.71" stroke="#2a2a2a" stroke-width="1.5"/>
<line x1="17.00" y1="602.71" x2="17.00" y2="612.79" stroke="#4a4a4a" stroke-width="1.0"/>
<line x1="41.30" y1="602.71" x2="41.30" y2="612.79" stroke="#8c8c8c" stroke-width="1.0"/>
<line x1="126.70" y1="602.71" x2="126.70" y2="612.79" stroke="#2a2a2a" stroke-width="1.5"/>
<line x1="153.50" y1="602.71" x2="153.50" y2="612.79" stroke="#8c8c8c" stroke-width="1.0"/>
<line x1="271.60" y1="602.71" x2="271.60" y2="612.79" stroke="#2a2a2a" stroke-width="1.5"/>
<line x1="290.40" y1="602.71" x2="290.40" y2="612.79" stroke="#8c8c8c" stroke-width="1.0"/>
<line x1="310.60" y1="602.71" x2="310.60" y2="612.79" stroke="#8c8c8c" stroke-width="1.0"/>
<line x1="374.60" y1="602.71" x2="374.60" y2="612.79" stroke="#4a4a4a" stroke-width="1.0"/>
<line x1="394.60" y1="602.71" x2="394.60" y2="612.79" stroke="#8c8c8c" stroke-width="1.0"/>
<line x1="502.50" y1="602.71" x2="502.50" y2="612.79" stroke="#2a2a2a" stroke-width="1.5"/>
<line x1="611.00" y1="602.71" x2="611.00" y2="612.79" stroke="#2a2a2a" stroke-width="1.5"/>
<line x1="636.25" y1="602.71" x2="636.25" y2="612.79" stroke="#8c8c8c" stroke-width="1.0"/>
<line x1="752.90" y1="602.71" x2="752.90" y2="612.79" stroke="#4a4a4a" stroke-width="1.0"/>
<line x1="774.40" y1="602.71" x2="774.40" y2="612.79" stroke="#4a4a4a" stroke-width="1.0"/>
<line x1="794.60" y1="602.71" x2="794.60" y2="612.79" stroke="#4a4a4a" stroke-width="1.0"/>
<line x1="813.30" y1="602.71" x2="813.30" y2="612.79" stroke="#4a4a4a" stroke-width="1.0"/>
<line x1="833.50" y1="602.71" x2="833.50" y2="612.79" stroke="#4a4a4a" stroke-width="1.0"/>
<line x1="853.50" y1="602.71" x2="853.50" y2="612.79" stroke="#4a4a4a" stroke-width="1.0"/>
<line x1="872.80" y1="602.71" x2="872.80" y2="612.79" stroke="#4a4a4a" stroke-width="1.0"/>
<line x1="892.50" y1="602.71" x2="892.50" y2="612.79" stroke="#4a4a4a" stroke-width="1.0"/>
<line x1="912.50" y1="602.71" x2="912.50" y2="612.79" stroke="#4a4a4a" stroke-width="1.0"/>
<line x1="952.75" y1="602.71" x2="952.75" y2="612.79" stroke="#4a4a4a" stroke-width="1.0"/>
<line x1="977.10" y1="602.71" x2="977.10" y2="612.79" stroke="#4a4a4a" stroke-width="1.0"/>
<line x1="1001.25" y1="602.71" x2="1001.25" y2="612.79" stroke="#4a4a4a" stroke-width="1.0"/>
<line x1="1025.40" y1="602.71" x2="1025.40" y2="612.79" stroke="#4a4a4a" stroke-width="1.0"/>
<line x1="1049.60" y1="602.71" x2="1049.60" y2="612.79" stroke="#4a4a4a" stroke-width="1.0"/>
<line x1="1077.90" y1="602.71" x2="1077.90" y2="612.79" stroke="#4a4a4a" stroke-width="1.0"/>
<line x1="1106.25" y1="602.71" x2="1106.25" y2="612.79" stroke="#4a4a4a" stroke-width="1.0"/>
<line x1="1151.60" y1="602.71" x2="1151.60" y2="612.79" stroke="#4a4a4a" stroke-width="1.0"/>
<line x1="1170.60" y1="602.71" x2="1170.60" y2="612.79" stroke="#4a4a4a" stroke-width="1.0"/>
<line x1="1190.60" y1="602.71" x2="1190.60" y2="612.79" stroke="#2a2a2a" stroke-width="1.5"/>
<line x1="1227.50" y1="602.71" x2="1227.50" y2="612.79" stroke="#4a4a4a" stroke-width="1.0"/>
<line x1="1257.50" y1="602.71" x2="1257.50" y2="612.79" stroke="#4a4a4a" stroke-width="1.0"/>
<line x1="1277.75" y1="602.71" x2="1277.75" y2="612.79" stroke="#2a2a2a" stroke-width="1.5"/>
<line x1="17.00" y1="612.79" x2="17.00" y2="622.87" stroke="#4a4a4a" stroke-width="1.0"/>
<line x1="41.30" y1="612.79" x2="41.30" y2="622.87" stroke="#8c8c8c" stroke-width="1.0"/>
<line x1="126.70" y1="612.79" x2="126.70" y2="622.87" stroke="#2a2a2a" stroke-width="1.5"/>
<line x1="153.50" y1="612.79" x2="153.50" y2="622.87" stroke="#8c8c8c" stroke-width="1.0"/>
<line x1="271.60" y1="612.79" x2="271.60" y2="622.87" stroke="#2a2a2a" stroke-width="1.5"/>
<line x1="290.40" y1="612.79" x2="290.40" y2="622.87" stroke="#8c8c8c" stroke-width="1.0"/>
<line x1="310.60" y1="612.79" x2="310.60" y2="622.87" stroke="#8c8c8c" stroke-width="1.0"/>
<line x1="374.60" y1="612.79" x2="374.60" y2="622.87" stroke="#4a4a4a" stroke-width="1.0"/>
<line x1="394.60" y1="612.79" x2="394.60" y2="622.87" stroke="#8c8c8c" stroke-width="1.0"/>
<line x1="502.50" y1="612.79" x2="502.50" y2="622.87" stroke="#2a2a2a" stroke-width="1.5"/>
<line x1="611.00" y1="612.79" x2="611.00" y2="622.87" stroke="#2a2a2a" stroke-width="1.5"/>
<line x1="636.25" y1="612.79" x2="636.25" y2="622.87" stroke="#8c8c8c" stroke-width="1.0"/>
<line x1="752.90" y1="612.79" x2="752.90" y2="622.87" stroke="#4a4a4a" stroke-width="1.0"/>
<line x1="774.40" y1="612.79" x2="774.40" y2="622.87" stroke="#4a4a4a" stroke-width="1.0"/>
<line x1="794.60" y1="612.79" x2="794.60" y2="622.87" stroke="#4a4a4a" stroke-width="1.0"/>
<line x1="813.30" y1="612.79" x2="813.30" y2="622.87" stroke="#4a4a4a" stroke-width="1.0"/>
<line x1="833.50" y1="612.79" x2="833.50" y2="622.87" stroke="#4a4a4a" stroke-width="1.0"/>
<line x1="853.50" y1="612.79" x2="853.50" y2="622.87" stroke="#4a4a4a" stroke-width="1.0"/>
<line x1="872.80" y1="612.79" x2="872.80" y2="622.87" stroke="#4a4a4a" stroke-width="1.0"/>
<line x1="892.50" y1="612.79" x2="892.50" y2="622.87" stroke="#4a4a4a" stroke-width="1.0"/>
<line x1="912.50" y1="612.79" x2="912.50" y2="622.87" stroke="#4a4a4a" stroke-width="1.0"/>
<line x1="952.75" y1="612.79" x2="952.75" y2="622.87" stroke="#4a4a4a" stroke-width="1.0"/>
<line x1="977.10" y1="612.79" x2="977.10" y2="622.87" stroke="#4a4a4a" stroke-width="1.0"/>
<line x1="1001.25" y1="612.79" x2="1001.25" y2="622.87" stroke="#4a4a4a" stroke-width="1.0"/>
<line x1="1025.40" y1="612.79" x2="1025.40" y2="622.87" stroke="#4a4a4a" stroke-width="1.0"/>
<line x1="1049.60" y1="612.79" x2="1049.60" y2="622.87" stroke="#4a4a4a" stroke-width="1.0"/>
<line x1="1077.90" y1="612.79" x2="1077.90" y2="622.87" stroke="#4a4a4a" stroke-width="1.0"/>
<line x1="1106.25" y1="612.79" x2="1106.25" y2="622.87" stroke="#4a4a4a" stroke-width="1.0"/>
<line x1="1151.60" y1="612.79" x2="1151.60" y2="622.87" stroke="#4a4a4a" stroke-width="1.0"/>
<line x1="1170.60" y1="612.79" x2="1170.60" y2="622.87" stroke="#4a4a4a" stroke-width="1.0"/>
<line x1="1190.60" y1="612.79" x2="1190.60" y2="622.87" stroke="#2a2a2a" stroke-width="1.5"/>
<line x1="1227.50" y1="612.79" x2="1227.50" y2="622.87" stroke="#4a4a4a" stroke-width="1.0"/>
<line x1="1257.50" y1="612.79" x2="1257.50" y2="622.87" stroke="#4a4a4a" stroke-width="1.0"/>
<line x1="1277.75" y1="612.79" x2="1277.75" y2="622.87" stroke="#2a2a2a" stroke-width="1.5"/>
<line x1="17.00" y1="622.87" x2="17.00" y2="632.96" stroke="#4a4a4a" stroke-width="1.0"/>
<line x1="41.30" y1="622.87" x2="41.30" y2="632.96" stroke="#8c8c8c" stroke-width="1.0"/>
<line x1="126.70" y1="622.87" x2="126.70" y2="632.96" stroke="#2a2a2a" stroke-width="1.5"/>
<line x1="153.50" y1="622.87" x2="153.50" y2="632.96" stroke="#8c8c8c" stroke-width="1.0"/>
<line x1="271.60" y1="622.87" x2="271.60" y2="632.96" stroke="#2a2a2a" stroke-width="1.5"/>
<line x1="290.40" y1="622.87" x2="290.40" y2="632.96" stroke="#8c8c8c" stroke-width="1.0"/>
<line x1="310.60" y1="622.87" x2="310.60" y2="632.96" stroke="#8c8c8c" stroke-width="1.0"/>
<line x1="374.60" y1="622.87" x2="374.60" y2="632.96" stroke="#4a4a4a" stroke-width="1.0"/>
<line x1="394.60" y1="622.87" x2="394.60" y2="632.96" stroke="#8c8c8c" stroke-width="1.0"/>
<line x1="502.50" y1="622.87" x2="502.50" y2="632.96" stroke="#2a2a2a" stroke-width="1.5"/>
<line x1="611.00" y1="622.87" x2="611.00" y2="632.96" stroke="#2a2a2a" stroke-width="1.5"/>
<line x1="636.25" y1="622.87" x2="636.25" y2="632.96" stroke="#8c8c8c" stroke-width="1.0"/>
<line x1="690.40" y1="622.87" x2="690.40" y2="632.96" stroke="#8c8c8c" stroke-width="1.0"/>
<line x1="710.90" y1="622.87" x2="710.90" y2="632.96" stroke="#8c8c8c" stroke-width="1.0"/>
<line x1="731.90" y1="622.87" x2="731.90" y2="632.96" stroke="#8c8c8c" stroke-width="1.0"/>
<line x1="752.90" y1="622.87" x2="752.90" y2="632.96" stroke="#4a4a4a" stroke-width="1.0"/>
<line x1="774.40" y1="622.87" x2="774.40" y2="632.96" stroke="#4a4a4a" stroke-width="1.0"/>
<line x1="794.60" y1="622.87" x2="794.60" y2="632.96" stroke="#4a4a4a" stroke-width="1.0"/>
<line x1="813.30" y1="622.87" x2="813.30" y2="632.96" stroke="#4a4a4a" stroke-width="1.0"/>
<line x1="833.50" y1="622.87" x2="833.50" y2="632.96" stroke="#4a4a4a" stroke-width="1.0"/>
<line x1="853.50" y1="622.87" x2="853.50" y2="632.96" stroke="#4a4a4a" stroke-width="1.0"/>
<line x1="872.80" y1="622.87" x2="872.80" y2="632.96" stroke="#4a4a4a" stroke-width="1.0"/>
<line x1="892.50" y1="622.87" x2="892.50" y2="632.96" stroke="#4a4a4a" stroke-width="1.0"/>
<line x1="912.50" y1="622.87" x2="912.50" y2="632.96" stroke="#4a4a4a" stroke-width="1.0"/>
<line x1="952.75" y1="622.87" x2="952.75" y2="632.96" stroke="#4a4a4a" stroke-width="1.0"/>
<line x1="977.10" y1="622.87" x2="977.10" y2="632.96" stroke="#4a4a4a" stroke-width="1.0"/>
<line x1="1001.25" y1="622.87" x2="1001.25" y2="632.96" stroke="#4a4a4a" stroke-width="1.0"/>
<line x1="1025.40" y1="622.87" x2="1025.40" y2="632.96" stroke="#4a4a4a" stroke-width="1.0"/>
<line x1="1049.60" y1="622.87" x2="1049.60" y2="632.96" stroke="#4a4a4a" stroke-width="1.0"/>
<line x1="1077.90" y1="622.87" x2="1077.90" y2="632.96" stroke="#4a4a4a" stroke-width="1.0"/>
<line x1="1106.25" y1="622.87" x2="1106.25" y2="632.96" stroke="#4a4a4a" stroke-width="1.0"/>
<line x1="1151.60" y1="622.87" x2="1151.60" y2="632.96" stroke="#4a4a4a" stroke-width="1.0"/>
<line x1="1170.60" y1="622.87" x2="1170.60" y2="632.96" stroke="#4a4a4a" stroke-width="1.0"/>
<line x1="1190.60" y1="622.87" x2="1190.60" y2="632.96" stroke="#2a2a2a" stroke-width="1.5"/>
<line x1="1227.50" y1="622.87" x2="1227.50" y2="632.96" stroke="#4a4a4a" stroke-width="1.0"/>
<line x1="1257.50" y1="622.87" x2="1257.50" y2="632.96" stroke="#4a4a4a" stroke-width="1.0"/>
<line x1="1277.75" y1="622.87" x2="1277.75" y2="632.96" stroke="#2a2a2a" stroke-width="1.5"/>
<line x1="17.00" y1="632.96" x2="17.00" y2="643.04" stroke="#4a4a4a" stroke-width="1.0"/>
<line x1="41.30" y1="632.96" x2="41.30" y2="643.04" stroke="#8c8c8c" stroke-width="1.0"/>
<line x1="126.70" y1="632.96" x2="126.70" y2="643.04" stroke="#2a2a2a" stroke-width="1.5"/>
<line x1="153.50" y1="632.96" x2="153.50" y2="643.04" stroke="#8c8c8c" stroke-width="1.0"/>
<line x1="271.60" y1="632.96" x2="271.60" y2="643.04" stroke="#2a2a2a" stroke-width="1.5"/>
<line x1="290.40" y1="632.96" x2="290.40" y2="643.04" stroke="#8c8c8c" stroke-width="1.0"/>
<line x1="310.60" y1="632.96" x2="310.60" y2="643.04" stroke="#8c8c8c" stroke-width="1.0"/>
<line x1="374.60" y1="632.96" x2="374.60" y2="643.04" stroke="#4a4a4a" stroke-width="1.0"/>
<line x1="394.60" y1="632.96" x2="394.60" y2="643.04" stroke="#8c8c8c" stroke-width="1.0"/>
<line x1="502.50" y1="632.96" x2="502.50" y2="643.04" stroke="#2a2a2a" stroke-width="1.5"/>
<line x1="611.00" y1="632.96" x2="611.00" y2="643.04" stroke="#2a2a2a" stroke-width="1.5"/>
<line x1="636.25" y1="632.96" x2="636.25" y2="643.04" stroke="#8c8c8c" stroke-width="1.0"/>
<line x1="690.40" y1="632.96" x2="690.40" y2="643.04" stroke="#8c8c8c" stroke-width="1.0"/>
<line x1="710.90" y1="632.96" x2="710.90" y2="643.04" stroke="#8c8c8c" stroke-width="1.0"/>
<line x1="731.90" y1="632.96" x2="731.90" y2="643.04" stroke="#8c8c8c" stroke-width="1.0"/>
<line x1="752.90" y1="632.96" x2="752.90" y2="643.04" stroke="#4a4a4a" stroke-width="1.0"/>
<line x1="774.40" y1="632.96" x2="774.40" y2="643.04" stroke="#4a4a4a" stroke-width="1.0"/>
<line x1="794.60" y1="632.96" x2="794.60" y2="643.04" stroke="#4a4a4a" stroke-width="1.0"/>
<line x1="813.30" y1="632.96" x2="813.30" y2="643.04" stroke="#4a4a4a" stroke-width="1.0"/>
<line x1="833.50" y1="632.96" x2="833.50" y2="643.04" stroke="#4a4a4a" stroke-width="1.0"/>
<line x1="853.50" y1="632.96" x2="853.50" y2="643.04" stroke="#4a4a4a" stroke-width="1.0"/>
<line x1="872.80" y1="632.96" x2="872.80" y2="643.04" stroke="#4a4a4a" stroke-width="1.0"/>
<line x1="892.50" y1="632.96" x2="892.50" y2="643.04" stroke="#4a4a4a" stroke-width="1.0"/>
<line x1="912.50" y1="632.96" x2="912.50" y2="643.04" stroke="#4a4a4a" stroke-width="1.0"/>
<line x1="952.75" y1="632.96" x2="952.75" y2="643.04" stroke="#4a4a4a" stroke-width="1.0"/>
<line x1="977.10" y1="632.96" x2="977.10" y2="643.04" stroke="#4a4a4a" stroke-width="1.0"/>
<line x1="1001.25" y1="632.96" x2="1001.25" y2="643.04" stroke="#4a4a4a" stroke-width="1.0"/>
<line x1="1025.40" y1="632.96" x2="1025.40" y2="643.04" stroke="#4a4a4a" stroke-width="1.0"/>
<line x1="1049.60" y1="632.96" x2="1049.60" y2="643.04" stroke="#4a4a4a" stroke-width="1.0"/>
<line x1="1077.90" y1="632.96" x2="1077.90" y2="643.04" stroke="#4a4a4a" stroke-width="1.0"/>
<line x1="1106.25" y1="632.96" x2="1106.25" y2="643.04" stroke="#4a4a4a" stroke-width="1.0"/>
<line x1="1151.60" y1="632.96" x2="1151.60" y2="643.04" stroke="#4a4a4a" stroke-width="1.0"/>
<line x1="1170.60" y1="632.96" x2="1170.60" y2="643.04" stroke="#4a4a4a" stroke-width="1.0"/>
<line x1="1190.60" y1="632.96" x2="1190.60" y2="643.04" stroke="#2a2a2a" stroke-width="1.5"/>
<line x1="1227.50" y1="632.96" x2="1227.50" y2="643.04" stroke="#4a4a4a" stroke-width="1.0"/>
<line x1="1257.50" y1="632.96" x2="1257.50" y2="643.04" stroke="#4a4a4a" stroke-width="1.0"/>
<line x1="1277.75" y1="632.96" x2="1277.75" y2="643.04" stroke="#2a2a2a" stroke-width="1.5"/>
<line x1="17.00" y1="643.04" x2="17.00" y2="653.12" stroke="#4a4a4a" stroke-width="1.0"/>
<line x1="41.30" y1="643.04" x2="41.30" y2="653.12" stroke="#8c8c8c" stroke-width="1.0"/>
<line x1="126.70" y1="643.04" x2="126.70" y2="653.12" stroke="#2a2a2a" stroke-width="1.5"/>
<line x1="153.50" y1="643.04" x2="153.50" y2="653.12" stroke="#8c8c8c" stroke-width="1.0"/>
<line x1="271.60" y1="643.04" x2="271.60" y2="653.12" stroke="#2a2a2a" stroke-width="1.5"/>
<line x1="290.40" y1="643.04" x2="290.40" y2="653.12" stroke="#8c8c8c" stroke-width="1.0"/>
<line x1="310.60" y1="643.04" x2="310.60" y2="653.12" stroke="#8c8c8c" stroke-width="1.0"/>
<line x1="374.60" y1="643.04" x2="374.60" y2="653.12" stroke="#4a4a4a" stroke-width="1.0"/>
<line x1="394.60" y1="643.04" x2="394.60" y2="653.12" stroke="#8c8c8c" stroke-width="1.0"/>
<line x1="502.50" y1="643.04" x2="502.50" y2="653.12" stroke="#2a2a2a" stroke-width="1.5"/>
<line x1="611.00" y1="643.04" x2="611.00" y2="653.12" stroke="#2a2a2a" stroke-width="1.5"/>
<line x1="636.25" y1="643.04" x2="636.25" y2="653.12" stroke="#8c8c8c" stroke-width="1.0"/>
<line x1="690.40" y1="643.04" x2="690.40" y2="653.12" stroke="#8c8c8c" stroke-width="1.0"/>
<line x1="710.90" y1="643.04" x2="710.90" y2="653.12" stroke="#8c8c8c" stroke-width="1.0"/>
<line x1="731.90" y1="643.04" x2="731.90" y2="653.12" stroke="#8c8c8c" stroke-width="1.0"/>
<line x1="752.90" y1="643.04" x2="752.90" y2="653.12" stroke="#4a4a4a" stroke-width="1.0"/>
<line x1="774.40" y1="643.04" x2="774.40" y2="653.12" stroke="#4a4a4a" stroke-width="1.0"/>
<line x1="794.60" y1="643.04" x2="794.60" y2="653.12" stroke="#4a4a4a" stroke-width="1.0"/>
<line x1="813.30" y1="643.04" x2="813.30" y2="653.12" stroke="#4a4a4a" stroke-width="1.0"/>
<line x1="833.50" y1="643.04" x2="833.50" y2="653.12" stroke="#4a4a4a" stroke-width="1.0"/>
<line x1="853.50" y1="643.04" x2="853.50" y2="653.12" stroke="#4a4a4a" stroke-width="1.0"/>
<line x1="872.80" y1="643.04" x2="872.80" y2="653.12" stroke="#4a4a4a" stroke-width="1.0"/>
<line x1="892.50" y1="643.04" x2="892.50" y2="653.12" stroke="#4a4a4a" stroke-width="1.0"/>
<line x1="912.50" y1="643.04" x2="912.50" y2="653.12" stroke="#4a4a4a" stroke-width="1.0"/>
<line x1="952.75" y1="643.04" x2="952.75" y2="653.12" stroke="#4a4a4a" stroke-width="1.0"/>
<line x1="977.10" y1="643.04" x2="977.10" y2="653.12" stroke="#4a4a4a" stroke-width="1.0"/>
<line x1="1001.25" y1="643.04" x2="1001.25" y2="653.12" stroke="#4a4a4a" stroke-width="1.0"/>
<line x1="1025.40" y1="643.04" x2="1025.40" y2="653.12" stroke="#4a4a4a" stroke-width="1.0"/>
<line x1="1049.60" y1="643.04" x2="1049.60" y2="653.12" stroke="#4a4a4a" stroke-width="1.0"/>
<line x1="1077.90" y1="643.04" x2="1077.90" y2="653.12" stroke="#4a4a4a" stroke-width="1.0"/>
<line x1="1106.25" y1="643.04" x2="1106.25" y2="653.12" stroke="#4a4a4a" stroke-width="1.0"/>
<line x1="1151.60" y1="643.04" x2="1151.60" y2="653.12" stroke="#4a4a4a" stroke-width="1.0"/>
<line x1="1170.60" y1="643.04" x2="1170.60" y2="653.12" stroke="#4a4a4a" stroke-width="1.0"/>
<line x1="1190.60" y1="643.04" x2="1190.60" y2="653.12" stroke="#2a2a2a" stroke-width="1.5"/>
<line x1="1227.50" y1="643.04" x2="1227.50" y2="653.12" stroke="#4a4a4a" stroke-width="1.0"/>
<line x1="1257.50" y1="643.04" x2="1257.50" y2="653.12" stroke="#4a4a4a" stroke-width="1.0"/>
<line x1="1277.75" y1="643.04" x2="1277.75" y2="653.12" stroke="#2a2a2a" stroke-width="1.5"/>
<line x1="17.00" y1="653.12" x2="17.00" y2="663.21" stroke="#4a4a4a" stroke-width="1.0"/>
<line x1="41.30" y1="653.12" x2="41.30" y2="663.21" stroke="#8c8c8c" stroke-width="1.0"/>
<line x1="126.70" y1="653.12" x2="126.70" y2="663.21" stroke="#2a2a2a" stroke-width="1.5"/>
<line x1="153.50" y1="653.12" x2="153.50" y2="663.21" stroke="#8c8c8c" stroke-width="1.0"/>
<line x1="271.60" y1="653.12" x2="271.60" y2="663.21" stroke="#2a2a2a" stroke-width="1.5"/>
<line x1="290.40" y1="653.12" x2="290.40" y2="663.21" stroke="#8c8c8c" stroke-width="1.0"/>
<line x1="310.60" y1="653.12" x2="310.60" y2="663.21" stroke="#8c8c8c" stroke-width="1.0"/>
<line x1="374.60" y1="653.12" x2="374.60" y2="663.21" stroke="#4a4a4a" stroke-width="1.0"/>
<line x1="394.60" y1="653.12" x2="394.60" y2="663.21" stroke="#8c8c8c" stroke-width="1.0"/>
<line x1="502.50" y1="653.12" x2="502.50" y2="663.21" stroke="#2a2a2a" stroke-width="1.5"/>
<line x1="611.00" y1="653.12" x2="611.00" y2="663.21" stroke="#2a2a2a" stroke-width="1.5"/>
<line x1="636.25" y1="653.12" x2="636.25" y2="663.21" stroke="#8c8c8c" stroke-width="1.0"/>
<line x1="690.40" y1="653.12" x2="690.40" y2="663.21" stroke="#8c8c8c" stroke-width="1.0"/>
<line x1="710.90" y1="653.12" x2="710.90" y2="663.21" stroke="#8c8c8c" stroke-width="1.0"/>
<line x1="731.90" y1="653.12" x2="731.90" y2="663.21" stroke="#8c8c8c" stroke-width="1.0"/>
<line x1="752.90" y1="653.12" x2="752.90" y2="663.21" stroke="#4a4a4a" stroke-width="1.0"/>
<line x1="774.40" y1="653.12" x2="774.40" y2="663.21" stroke="#4a4a4a" stroke-width="1.0"/>
<line x1="794.60" y1="653.12" x2="794.60" y2="663.21" stroke="#4a4a4a" stroke-width="1.0"/>
<line x1="813.30" y1="653.12" x2="813.30" y2="663.21" stroke="#4a4a4a" stroke-width="1.0"/>
<line x1="833.50" y1="653.12" x2="833.50" y2="663.21" stroke="#4a4a4a" stroke-width="1.0"/>
<line x1="853.50" y1="653.12" x2="853.50" y2="663.21" stroke="#4a4a4a" stroke-width="1.0"/>
<line x1="872.80" y1="653.12" x2="872.80" y2="663.21" stroke="#4a4a4a" stroke-width="1.0"/>
<line x1="892.50" y1="653.12" x2="892.50" y2="663.21" stroke="#4a4a4a" stroke-width="1.0"/>
<line x1="912.50" y1="653.12" x2="912.50" y2="663.21" stroke="#4a4a4a" stroke-width="1.0"/>
<line x1="952.75" y1="653.12" x2="952.75" y2="663.21" stroke="#4a4a4a" stroke-width="1.0"/>
<line x1="977.10" y1="653.12" x2="977.10" y2="663.21" stroke="#4a4a4a" stroke-width="1.0"/>
<line x1="1001.25" y1="653.12" x2="1001.25" y2="663.21" stroke="#4a4a4a" stroke-width="1.0"/>
<line x1="1025.40" y1="653.12" x2="1025.40" y2="663.21" stroke="#4a4a4a" stroke-width="1.0"/>
<line x1="1049.60" y1="653.12" x2="1049.60" y2="663.21" stroke="#4a4a4a" stroke-width="1.0"/>
<line x1="1077.90" y1="653.12" x2="1077.90" y2="663.21" stroke="#4a4a4a" stroke-width="1.0"/>
<line x1="1106.25" y1="653.12" x2="1106.25" y2="663.21" stroke="#4a4a4a" stroke-width="1.0"/>
<line x1="1151.60" y1="653.12" x2="1151.60" y2="663.21" stroke="#4a4a4a" stroke-width="1.0"/>
<line x1="1170.60" y1="653.12" x2="1170.60" y2="663.21" stroke="#4a4a4a" stroke-width="1.0"/>
<line x1="1190.60" y1="653.12" x2="1190.60" y2="663.21" stroke="#2a2a2a" stroke-width="1.5"/>
<line x1="1227.50" y1="653.12" x2="1227.50" y2="663.21" stroke="#4a4a4a" stroke-width="1.0"/>
<line x1="1257.50" y1="653.12" x2="1257.50" y2="663.21" stroke="#4a4a4a" stroke-width="1.0"/>
<line x1="1277.75" y1="653.12" x2="1277.75" y2="663.21" stroke="#2a2a2a" stroke-width="1.5"/>
<line x1="17.00" y1="663.21" x2="17.00" y2="673.29" stroke="#4a4a4a" stroke-width="1.0"/>
<line x1="41.30" y1="663.21" x2="41.30" y2="673.29" stroke="#8c8c8c" stroke-width="1.0"/>
<line x1="126.70" y1="663.21" x2="126.70" y2="673.29" stroke="#2a2a2a" stroke-width="1.5"/>
<line x1="153.50" y1="663.21" x2="153.50" y2="673.29" stroke="#8c8c8c" stroke-width="1.0"/>
<line x1="271.60" y1="663.21" x2="271.60" y2="673.29" stroke="#2a2a2a" stroke-width="1.5"/>
<line x1="290.40" y1="663.21" x2="290.40" y2="673.29" stroke="#8c8c8c" stroke-width="1.0"/>
<line x1="310.60" y1="663.21" x2="310.60" y2="673.29" stroke="#8c8c8c" stroke-width="1.0"/>
<line x1="374.60" y1="663.21" x2="374.60" y2="673.29" stroke="#4a4a4a" stroke-width="1.0"/>
<line x1="394.60" y1="663.21" x2="394.60" y2="673.29" stroke="#8c8c8c" stroke-width="1.0"/>
<line x1="502.50" y1="663.21" x2="502.50" y2="673.29" stroke="#2a2a2a" stroke-width="1.5"/>
<line x1="611.00" y1="663.21" x2="611.00" y2="673.29" stroke="#2a2a2a" stroke-width="1.5"/>
<line x1="636.25" y1="663.21" x2="636.25" y2="673.29" stroke="#8c8c8c" stroke-width="1.0"/>
<line x1="690.40" y1="663.21" x2="690.40" y2="673.29" stroke="#8c8c8c" stroke-width="1.0"/>
<line x1="710.90" y1="663.21" x2="710.90" y2="673.29" stroke="#8c8c8c" stroke-width="1.0"/>
<line x1="731.90" y1="663.21" x2="731.90" y2="673.29" stroke="#8c8c8c" stroke-width="1.0"/>
<line x1="752.90" y1="663.21" x2="752.90" y2="673.29" stroke="#4a4a4a" stroke-width="1.0"/>
<line x1="774.40" y1="663.21" x2="774.40" y2="673.29" stroke="#4a4a4a" stroke-width="1.0"/>
<line x1="794.60" y1="663.21" x2="794.60" y2="673.29" stroke="#4a4a4a" stroke-width="1.0"/>
<line x1="813.30" y1="663.21" x2="813.30" y2="673.29" stroke="#4a4a4a" stroke-width="1.0"/>
<line x1="833.50" y1="663.21" x2="833.50" y2="673.29" stroke="#4a4a4a" stroke-width="1.0"/>
<line x1="853.50" y1="663.21" x2="853.50" y2="673.29" stroke="#4a4a4a" stroke-width="1.0"/>
<line x1="872.80" y1="663.21" x2="872.80" y2="673.29" stroke="#4a4a4a" stroke-width="1.0"/>
<line x1="892.50" y1="663.21" x2="892.50" y2="673.29" stroke="#4a4a4a" stroke-width="1.0"/>
<line x1="912.50" y1="663.21" x2="912.50" y2="673.29" stroke="#4a4a4a" stroke-width="1.0"/>
<line x1="952.75" y1="663.21" x2="952.75" y2="673.29" stroke="#4a4a4a" stroke-width="1.0"/>
<line x1="977.10" y1="663.21" x2="977.10" y2="673.29" stroke="#4a4a4a" stroke-width="1.0"/>
<line x1="1001.25" y1="663.21" x2="1001.25" y2="673.29" stroke="#4a4a4a" stroke-width="1.0"/>
<line x1="1025.40" y1="663.21" x2="1025.40" y2="673.29" stroke="#4a4a4a" stroke-width="1.0"/>
<line x1="1049.60" y1="663.21" x2="1049.60" y2="673.29" stroke="#4a4a4a" stroke-width="1.0"/>
<line x1="1077.90" y1="663.21" x2="1077.90" y2="673.29" stroke="#4a4a4a" stroke-width="1.0"/>
<line x1="1106.25" y1="663.21" x2="1106.25" y2="673.29" stroke="#4a4a4a" stroke-width="1.0"/>
<line x1="1151.60" y1="663.21" x2="1151.60" y2="673.29" stroke="#4a4a4a" stroke-width="1.0"/>
<line x1="1170.60" y1="663.21" x2="1170.60" y2="673.29" stroke="#4a4a4a" stroke-width="1.0"/>
<line x1="1190.60" y1="663.21" x2="1190.60" y2="673.29" stroke="#2a2a2a" stroke-width="1.5"/>
<line x1="1227.50" y1="663.21" x2="1227.50" y2="673.29" stroke="#4a4a4a" stroke-width="1.0"/>
<line x1="1257.50" y1="663.21" x2="1257.50" y2="673.29" stroke="#4a4a4a" stroke-width="1.0"/>
<line x1="1277.75" y1="663.21" x2="1277.75" y2="673.29" stroke="#2a2a2a" stroke-width="1.5"/>
<line x1="17.00" y1="673.29" x2="17.00" y2="683.37" stroke="#4a4a4a" stroke-width="1.0"/>
<line x1="41.30" y1="673.29" x2="41.30" y2="683.37" stroke="#8c8c8c" stroke-width="1.0"/>
<line x1="126.70" y1="673.29" x2="126.70" y2="683.37" stroke="#2a2a2a" stroke-width="1.5"/>
<line x1="153.50" y1="673.29" x2="153.50" y2="683.37" stroke="#8c8c8c" stroke-width="1.0"/>
<line x1="271.60" y1="673.29" x2="271.60" y2="683.37" stroke="#2a2a2a" stroke-width="1.5"/>
<line x1="290.40" y1="673.29" x2="290.40" y2="683.37" stroke="#8c8c8c" stroke-width="1.0"/>
<line x1="310.60" y1="673.29" x2="310.60" y2="683.37" stroke="#8c8c8c" stroke-width="1.0"/>
<line x1="374.60" y1="673.29" x2="374.60" y2="683.37" stroke="#4a4a4a" stroke-width="1.0"/>
<line x1="394.60" y1="673.29" x2="394.60" y2="683.37" stroke="#8c8c8c" stroke-width="1.0"/>
<line x1="502.50" y1="673.29" x2="502.50" y2="683.37" stroke="#2a2a2a" stroke-width="1.5"/>
<line x1="611.00" y1="673.29" x2="611.00" y2="683.37" stroke="#2a2a2a" stroke-width="1.5"/>
<line x1="636.25" y1="673.29" x2="636.25" y2="683.37" stroke="#8c8c8c" stroke-width="1.0"/>
<line x1="690.40" y1="673.29" x2="690.40" y2="683.37" stroke="#8c8c8c" stroke-width="1.0"/>
<line x1="710.90" y1="673.29" x2="710.90" y2="683.37" stroke="#8c8c8c" stroke-width="1.0"/>
<line x1="731.90" y1="673.29" x2="731.90" y2="683.37" stroke="#8c8c8c" stroke-width="1.0"/>
<line x1="752.90" y1="673.29" x2="752.90" y2="683.37" stroke="#4a4a4a" stroke-width="1.0"/>
<line x1="774.40" y1="673.29" x2="774.40" y2="683.37" stroke="#4a4a4a" stroke-width="1.0"/>
<line x1="794.60" y1="673.29" x2="794.60" y2="683.37" stroke="#4a4a4a" stroke-width="1.0"/>
<line x1="813.30" y1="673.29" x2="813.30" y2="683.37" stroke="#4a4a4a" stroke-width="1.0"/>
<line x1="833.50" y1="673.29" x2="833.50" y2="683.37" stroke="#4a4a4a" stroke-width="1.0"/>
<line x1="853.50" y1="673.29" x2="853.50" y2="683.37" stroke="#4a4a4a" stroke-width="1.0"/>
<line x1="872.80" y1="673.29" x2="872.80" y2="683.37" stroke="#4a4a4a" stroke-width="1.0"/>
<line x1="892.50" y1="673.29" x2="892.50" y2="683.37" stroke="#4a4a4a" stroke-width="1.0"/>
<line x1="912.50" y1="673.29" x2="912.50" y2="683.37" stroke="#4a4a4a" stroke-width="1.0"/>
<line x1="952.75" y1="673.29" x2="952.75" y2="683.37" stroke="#4a4a4a" stroke-width="1.0"/>
<line x1="977.10" y1="673.29" x2="977.10" y2="683.37" stroke="#4a4a4a" stroke-width="1.0"/>
<line x1="1001.25" y1="673.29" x2="1001.25" y2="683.37" stroke="#4a4a4a" stroke-width="1.0"/>
<line x1="1025.40" y1="673.29" x2="1025.40" y2="683.37" stroke="#4a4a4a" stroke-width="1.0"/>
<line x1="1049.60" y1="673.29" x2="1049.60" y2="683.37" stroke="#4a4a4a" stroke-width="1.0"/>
<line x1="1077.90" y1="673.29" x2="1077.90" y2="683.37" stroke="#4a4a4a" stroke-width="1.0"/>
<line x1="1106.25" y1="673.29" x2="1106.25" y2="683.37" stroke="#4a4a4a" stroke-width="1.0"/>
<line x1="1151.60" y1="673.29" x2="1151.60" y2="683.37" stroke="#4a4a4a" stroke-width="1.0"/>
<line x1="1170.60" y1="673.29" x2="1170.60" y2="683.37" stroke="#4a4a4a" stroke-width="1.0"/>
<line x1="1190.60" y1="673.29" x2="1190.60" y2="683.37" stroke="#2a2a2a" stroke-width="1.5"/>
<line x1="1227.50" y1="673.29" x2="1227.50" y2="683.37" stroke="#4a4a4a" stroke-width="1.0"/>
<line x1="1257.50" y1="673.29" x2="1257.50" y2="683.37" stroke="#4a4a4a" stroke-width="1.0"/>
<line x1="1277.75" y1="673.29" x2="1277.75" y2="683.37" stroke="#2a2a2a" stroke-width="1.5"/>
</g>
<g font-size="7.8" fill="#1c1c1c">
<svg x="18.20" y="310.30" width="23.10" height="10.08"><text x="-0.4" y="7.70" textLength="14.20" lengthAdjust="spacingAndGlyphs" style="white-space:pre">HK1</text></svg>
<svg x="42.50" y="310.30" width="84.20" height="10.08"><text x="-0.4" y="7.70" textLength="51.53" lengthAdjust="spacingAndGlyphs" style="white-space:pre">Paint workpiece</text></svg>
<svg x="127.90" y="310.30" width="25.60" height="10.08"><text x="-0.4" y="7.70" textLength="16.22" lengthAdjust="spacingAndGlyphs" style="white-space:pre">HW1</text></svg>
<svg x="154.70" y="310.30" width="116.90" height="10.08"><text x="-0.4" y="7.70" textLength="75.46" lengthAdjust="spacingAndGlyphs" style="white-space:pre">Prepare basic color red</text></svg>
<svg x="311.80" y="310.30" width="62.80" height="10.08"><text x="-0.4" y="7.70" textLength="10.14" lengthAdjust="spacingAndGlyphs" style="white-space:pre">EU</text></svg>
<svg x="375.80" y="310.30" width="18.80" height="10.08"><text x="-0.4" y="7.70" textLength="12.18" lengthAdjust="spacingAndGlyphs" style="white-space:pre">101</text></svg>
<path d="M375.20,310.90 h3 l-3,3 z" fill="#1e8a1e"/>
<svg x="395.80" y="310.30" width="106.70" height="10.08"><text x="-0.4" y="7.70" textLength="44.63" lengthAdjust="spacingAndGlyphs" style="white-space:pre">Feed medium</text></svg>
<svg x="503.70" y="310.30" width="107.30" height="10.08"><text x="-0.4" y="7.70" textLength="88.45" lengthAdjust="spacingAndGlyphs" style="white-space:pre">Eplan.PCT.Loop.Consumer</text></svg>
<svg x="612.20" y="310.30" width="24.05" height="10.08"><text x="-0.4" y="7.70" textLength="15.01" lengthAdjust="spacingAndGlyphs" style="white-space:pre">MA3</text></svg>
<svg x="637.45" y="310.30" width="52.95" height="10.08"><text x="-0.4" y="7.70" textLength="148.87" lengthAdjust="spacingAndGlyphs" style="white-space:pre">$(MD_MACROS)\ESS_Macro\Consumer.ema</text></svg>
<svg x="691.60" y="310.30" width="19.30" height="10.08"><text x="-0.4" y="7.70" textLength="14.21" lengthAdjust="spacingAndGlyphs" style="white-space:pre">2,5h</text></svg>
<svg x="712.10" y="310.30" width="19.80" height="10.08"><text x="-0.4" y="7.70" textLength="8.12" lengthAdjust="spacingAndGlyphs" style="white-space:pre">3h</text></svg>
<svg x="733.10" y="310.30" width="19.80" height="10.08"><text x="-0.4" y="7.70" textLength="14.21" lengthAdjust="spacingAndGlyphs" style="white-space:pre">2,5h</text></svg>
<svg x="754.10" y="310.30" width="20.30" height="10.08"><text x="-0.4" y="7.70" textLength="16.24" lengthAdjust="spacingAndGlyphs" style="white-space:pre">2500</text></svg>
<path d="M753.50,310.90 h3 l-3,3 z" fill="#1e8a1e"/>
<svg x="834.70" y="310.30" width="18.80" height="10.08"><text x="-0.4" y="7.70" textLength="33.67" lengthAdjust="spacingAndGlyphs" style="white-space:pre">Consumer</text></svg>
<svg x="854.70" y="310.30" width="18.10" height="10.08"><text x="-0.4" y="7.70" textLength="4.87" lengthAdjust="spacingAndGlyphs" style="white-space:pre">X</text></svg>
<svg x="874.00" y="310.30" width="18.50" height="10.08"><text x="-0.4" y="7.70" textLength="4.87" lengthAdjust="spacingAndGlyphs" style="white-space:pre">X</text></svg>
<svg x="893.70" y="310.30" width="18.80" height="10.08"><text x="-0.4" y="7.70" textLength="4.87" lengthAdjust="spacingAndGlyphs" style="white-space:pre">X</text></svg>
<svg x="1107.45" y="310.30" width="44.15" height="10.08"><text x="-0.4" y="7.70" textLength="25.97" lengthAdjust="spacingAndGlyphs" style="white-space:pre">General</text></svg>
<svg x="1171.80" y="310.30" width="18.80" height="10.08"><text x="-0.4" y="7.70" textLength="14.20" lengthAdjust="spacingAndGlyphs" style="white-space:pre">EFS</text></svg>
<svg x="1191.80" y="310.30" width="35.70" height="10.08"><text x="-0.4" y="7.70" textLength="16.23" lengthAdjust="spacingAndGlyphs" style="white-space:pre">Input</text></svg>
<svg x="1228.70" y="310.30" width="28.80" height="10.08"><text x="-0.4" y="7.70" textLength="20.28" lengthAdjust="spacingAndGlyphs" style="white-space:pre">BOOL</text></svg>
<svg x="1258.70" y="310.30" width="19.05" height="10.08"><text x="-0.4" y="7.70" textLength="6.09" lengthAdjust="spacingAndGlyphs" style="white-space:pre">I1</text></svg>
<svg x="18.20" y="320.38" width="23.10" height="10.08"><text x="-0.4" y="7.62" textLength="14.20" lengthAdjust="spacingAndGlyphs" style="white-space:pre">HK1</text></svg>
<svg x="42.50" y="320.38" width="84.20" height="10.08"><text x="-0.4" y="7.62" textLength="51.53" lengthAdjust="spacingAndGlyphs" style="white-space:pre">Paint workpiece</text></svg>
<svg x="127.90" y="320.38" width="25.60" height="10.08"><text x="-0.4" y="7.62" textLength="16.22" lengthAdjust="spacingAndGlyphs" style="white-space:pre">HW1</text></svg>
<svg x="154.70" y="320.38" width="116.90" height="10.08"><text x="-0.4" y="7.62" textLength="75.46" lengthAdjust="spacingAndGlyphs" style="white-space:pre">Prepare basic color red</text></svg>
<svg x="311.80" y="320.38" width="62.80" height="10.08"><text x="-0.4" y="7.62" textLength="10.14" lengthAdjust="spacingAndGlyphs" style="white-space:pre">EU</text></svg>
<svg x="375.80" y="320.38" width="18.80" height="10.08"><text x="-0.4" y="7.62" textLength="12.18" lengthAdjust="spacingAndGlyphs" style="white-space:pre">102</text></svg>
<path d="M375.20,320.98 h3 l-3,3 z" fill="#1e8a1e"/>
<svg x="395.80" y="320.38" width="106.70" height="10.08"><text x="-0.4" y="7.62" textLength="33.26" lengthAdjust="spacingAndGlyphs" style="white-space:pre">Mix media</text></svg>
<svg x="503.70" y="320.38" width="107.30" height="10.08"><text x="-0.4" y="7.62" textLength="88.45" lengthAdjust="spacingAndGlyphs" style="white-space:pre">Eplan.PCT.Loop.Consumer</text></svg>
<svg x="612.20" y="320.38" width="24.05" height="10.08"><text x="-0.4" y="7.62" textLength="15.01" lengthAdjust="spacingAndGlyphs" style="white-space:pre">MA4</text></svg>
<svg x="637.45" y="320.38" width="52.95" height="10.08"><text x="-0.4" y="7.62" textLength="148.87" lengthAdjust="spacingAndGlyphs" style="white-space:pre">$(MD_MACROS)\ESS_Macro\Consumer.ema</text></svg>
<svg x="691.60" y="320.38" width="19.30" height="10.08"><text x="-0.4" y="7.62" textLength="14.21" lengthAdjust="spacingAndGlyphs" style="white-space:pre">2,5h</text></svg>
<svg x="712.10" y="320.38" width="19.80" height="10.08"><text x="-0.4" y="7.62" textLength="8.12" lengthAdjust="spacingAndGlyphs" style="white-space:pre">3h</text></svg>
<svg x="733.10" y="320.38" width="19.80" height="10.08"><text x="-0.4" y="7.62" textLength="14.21" lengthAdjust="spacingAndGlyphs" style="white-space:pre">2,5h</text></svg>
<svg x="754.10" y="320.38" width="20.30" height="10.08"><text x="-0.4" y="7.62" textLength="16.24" lengthAdjust="spacingAndGlyphs" style="white-space:pre">2500</text></svg>
<path d="M753.50,320.98 h3 l-3,3 z" fill="#1e8a1e"/>
<svg x="834.70" y="320.38" width="18.80" height="10.08"><text x="-0.4" y="7.62" textLength="33.67" lengthAdjust="spacingAndGlyphs" style="white-space:pre">Consumer</text></svg>
<svg x="854.70" y="320.38" width="18.10" height="10.08"><text x="-0.4" y="7.62" textLength="4.87" lengthAdjust="spacingAndGlyphs" style="white-space:pre">X</text></svg>
<svg x="874.00" y="320.38" width="18.50" height="10.08"><text x="-0.4" y="7.62" textLength="4.87" lengthAdjust="spacingAndGlyphs" style="white-space:pre">X</text></svg>
<svg x="893.70" y="320.38" width="18.80" height="10.08"><text x="-0.4" y="7.62" textLength="4.87" lengthAdjust="spacingAndGlyphs" style="white-space:pre">X</text></svg>
<svg x="1107.45" y="320.38" width="44.15" height="10.08"><text x="-0.4" y="7.62" textLength="25.97" lengthAdjust="spacingAndGlyphs" style="white-space:pre">General</text></svg>
<svg x="1171.80" y="320.38" width="18.80" height="10.08"><text x="-0.4" y="7.62" textLength="14.20" lengthAdjust="spacingAndGlyphs" style="white-space:pre">EFS</text></svg>
<svg x="1191.80" y="320.38" width="35.70" height="10.08"><text x="-0.4" y="7.62" textLength="16.23" lengthAdjust="spacingAndGlyphs" style="white-space:pre">Input</text></svg>
<svg x="1228.70" y="320.38" width="28.80" height="10.08"><text x="-0.4" y="7.62" textLength="20.28" lengthAdjust="spacingAndGlyphs" style="white-space:pre">BOOL</text></svg>
<svg x="1258.70" y="320.38" width="19.05" height="10.08"><text x="-0.4" y="7.62" textLength="6.09" lengthAdjust="spacingAndGlyphs" style="white-space:pre">I1</text></svg>
<svg x="18.20" y="330.47" width="23.10" height="10.08"><text x="-0.4" y="8.53" textLength="14.20" lengthAdjust="spacingAndGlyphs" style="white-space:pre">HK1</text></svg>
<svg x="42.50" y="330.47" width="84.20" height="10.08"><text x="-0.4" y="8.53" textLength="51.53" lengthAdjust="spacingAndGlyphs" style="white-space:pre">Paint workpiece</text></svg>
<svg x="127.90" y="330.47" width="25.60" height="10.08"><text x="-0.4" y="8.53" textLength="16.22" lengthAdjust="spacingAndGlyphs" style="white-space:pre">HW1</text></svg>
<svg x="154.70" y="330.47" width="116.90" height="10.08"><text x="-0.4" y="8.53" textLength="75.46" lengthAdjust="spacingAndGlyphs" style="white-space:pre">Prepare basic color red</text></svg>
<svg x="291.60" y="330.47" width="19.00" height="10.08"><text x="-0.4" y="8.53" textLength="4.46" lengthAdjust="spacingAndGlyphs" style="white-space:pre">F</text></svg>
<svg x="311.80" y="330.47" width="62.80" height="10.08"><text x="-0.4" y="8.53" textLength="5.27" lengthAdjust="spacingAndGlyphs" style="white-space:pre">C</text></svg>
<svg x="375.80" y="330.47" width="18.80" height="10.08"><text x="-0.4" y="8.53" textLength="4.06" lengthAdjust="spacingAndGlyphs" style="white-space:pre">1</text></svg>
<path d="M375.20,331.07 h3 l-3,3 z" fill="#1e8a1e"/>
<svg x="395.80" y="330.47" width="106.70" height="10.08"><text x="-0.4" y="8.53" textLength="58.42" lengthAdjust="spacingAndGlyphs" style="white-space:pre">Flow valve control</text></svg>
<svg x="503.70" y="330.47" width="107.30" height="10.08"><text x="-0.4" y="8.53" textLength="88.86" lengthAdjust="spacingAndGlyphs" style="white-space:pre">Eplan.PCT.Loop.Measuring</text></svg>
<svg x="637.45" y="330.47" width="115.45" height="10.08"><text x="-0.4" y="8.53" textLength="148.08" lengthAdjust="spacingAndGlyphs" style="white-space:pre">$(MD_MACROS)\ESS_Macro\203_Loop.ema</text></svg>
<svg x="754.10" y="330.47" width="20.30" height="10.08"><text x="-0.4" y="8.53" textLength="4.06" lengthAdjust="spacingAndGlyphs" style="white-space:pre">0</text></svg>
<path d="M753.50,331.07 h3 l-3,3 z" fill="#1e8a1e"/>
<svg x="913.70" y="330.47" width="39.05" height="10.08"><text x="-0.4" y="8.53" textLength="32.94" lengthAdjust="spacingAndGlyphs" style="white-space:pre">0 - 100 °C</text></svg>
<svg x="1107.45" y="330.47" width="44.15" height="10.08"><text x="-0.4" y="8.53" textLength="25.97" lengthAdjust="spacingAndGlyphs" style="white-space:pre">General</text></svg>
<svg x="1171.80" y="330.47" width="18.80" height="10.08"><text x="-0.4" y="8.53" textLength="14.20" lengthAdjust="spacingAndGlyphs" style="white-space:pre">EFS</text></svg>
<svg x="1191.80" y="330.47" width="35.70" height="10.08"><text x="-0.4" y="8.53" textLength="16.23" lengthAdjust="spacingAndGlyphs" style="white-space:pre">Input</text></svg>
<svg x="1228.70" y="330.47" width="28.80" height="10.08"><text x="-0.4" y="8.53" textLength="19.07" lengthAdjust="spacingAndGlyphs" style="white-space:pre">BYTE</text></svg>
<svg x="1258.70" y="330.47" width="19.05" height="10.08"><text x="-0.4" y="8.53" textLength="6.09" lengthAdjust="spacingAndGlyphs" style="white-space:pre">I1</text></svg>
<svg x="18.20" y="340.55" width="23.10" height="10.08"><text x="-0.4" y="8.45" textLength="14.20" lengthAdjust="spacingAndGlyphs" style="white-space:pre">HK1</text></svg>
<svg x="42.50" y="340.55" width="84.20" height="10.08"><text x="-0.4" y="8.45" textLength="51.53" lengthAdjust="spacingAndGlyphs" style="white-space:pre">Paint workpiece</text></svg>
<svg x="127.90" y="340.55" width="25.60" height="10.08"><text x="-0.4" y="8.45" textLength="16.22" lengthAdjust="spacingAndGlyphs" style="white-space:pre">HW1</text></svg>
<svg x="154.70" y="340.55" width="116.90" height="10.08"><text x="-0.4" y="8.45" textLength="75.46" lengthAdjust="spacingAndGlyphs" style="white-space:pre">Prepare basic color red</text></svg>
<svg x="291.60" y="340.55" width="19.00" height="10.08"><text x="-0.4" y="8.45" textLength="4.46" lengthAdjust="spacingAndGlyphs" style="white-space:pre">F</text></svg>
<svg x="311.80" y="340.55" width="62.80" height="10.08"><text x="-0.4" y="8.45" textLength="5.27" lengthAdjust="spacingAndGlyphs" style="white-space:pre">C</text></svg>
<svg x="375.80" y="340.55" width="18.80" height="10.08"><text x="-0.4" y="8.45" textLength="4.06" lengthAdjust="spacingAndGlyphs" style="white-space:pre">1</text></svg>
<path d="M375.20,341.15 h3 l-3,3 z" fill="#1e8a1e"/>
<svg x="395.80" y="340.55" width="106.70" height="10.08"><text x="-0.4" y="8.45" textLength="58.42" lengthAdjust="spacingAndGlyphs" style="white-space:pre">Flow valve control</text></svg>
<svg x="503.70" y="340.55" width="107.30" height="10.08"><text x="-0.4" y="8.45" textLength="88.86" lengthAdjust="spacingAndGlyphs" style="white-space:pre">Eplan.PCT.Loop.Measuring</text></svg>
<svg x="637.45" y="340.55" width="115.45" height="10.08"><text x="-0.4" y="8.45" textLength="148.08" lengthAdjust="spacingAndGlyphs" style="white-space:pre">$(MD_MACROS)\ESS_Macro\203_Loop.ema</text></svg>
<svg x="754.10" y="340.55" width="20.30" height="10.08"><text x="-0.4" y="8.45" textLength="4.06" lengthAdjust="spacingAndGlyphs" style="white-space:pre">0</text></svg>
<path d="M753.50,341.15 h3 l-3,3 z" fill="#1e8a1e"/>
<svg x="913.70" y="340.55" width="39.05" height="10.08"><text x="-0.4" y="8.45" textLength="32.94" lengthAdjust="spacingAndGlyphs" style="white-space:pre">0 - 100 °C</text></svg>
<svg x="1107.45" y="340.55" width="44.15" height="10.08"><text x="-0.4" y="8.45" textLength="25.97" lengthAdjust="spacingAndGlyphs" style="white-space:pre">General</text></svg>
<svg x="1171.80" y="340.55" width="18.80" height="10.08"><text x="-0.4" y="8.45" textLength="14.20" lengthAdjust="spacingAndGlyphs" style="white-space:pre">EFS</text></svg>
<svg x="1191.80" y="340.55" width="35.70" height="10.08"><text x="-0.4" y="8.45" textLength="16.23" lengthAdjust="spacingAndGlyphs" style="white-space:pre">Input</text></svg>
<svg x="1228.70" y="340.55" width="28.80" height="10.08"><text x="-0.4" y="8.45" textLength="19.07" lengthAdjust="spacingAndGlyphs" style="white-space:pre">BYTE</text></svg>
<svg x="1258.70" y="340.55" width="19.05" height="10.08"><text x="-0.4" y="8.45" textLength="6.09" lengthAdjust="spacingAndGlyphs" style="white-space:pre">I1</text></svg>
<svg x="18.20" y="350.63" width="23.10" height="10.08"><text x="-0.4" y="8.37" textLength="14.20" lengthAdjust="spacingAndGlyphs" style="white-space:pre">HK1</text></svg>
<svg x="42.50" y="350.63" width="84.20" height="10.08"><text x="-0.4" y="8.37" textLength="51.53" lengthAdjust="spacingAndGlyphs" style="white-space:pre">Paint workpiece</text></svg>
<svg x="127.90" y="350.63" width="25.60" height="10.08"><text x="-0.4" y="8.37" textLength="16.22" lengthAdjust="spacingAndGlyphs" style="white-space:pre">HW1</text></svg>
<svg x="154.70" y="350.63" width="116.90" height="10.08"><text x="-0.4" y="8.37" textLength="75.46" lengthAdjust="spacingAndGlyphs" style="white-space:pre">Prepare basic color red</text></svg>
<svg x="291.60" y="350.63" width="19.00" height="10.08"><text x="-0.4" y="8.37" textLength="4.46" lengthAdjust="spacingAndGlyphs" style="white-space:pre">F</text></svg>
<svg x="311.80" y="350.63" width="62.80" height="10.08"><text x="-0.4" y="8.37" textLength="12.57" lengthAdjust="spacingAndGlyphs" style="white-space:pre">IRC</text></svg>
<svg x="375.80" y="350.63" width="18.80" height="10.08"><text x="-0.4" y="8.37" textLength="4.06" lengthAdjust="spacingAndGlyphs" style="white-space:pre">2</text></svg>
<path d="M375.20,351.23 h3 l-3,3 z" fill="#1e8a1e"/>
<svg x="395.80" y="350.63" width="106.70" height="10.08"><text x="-0.4" y="8.37" textLength="117.67" lengthAdjust="spacingAndGlyphs" style="white-space:pre">Flow valve control: Open and closed</text></svg>
<svg x="503.70" y="350.63" width="107.30" height="10.08"><text x="-0.4" y="8.37" textLength="88.86" lengthAdjust="spacingAndGlyphs" style="white-space:pre">Eplan.PCT.Loop.Measuring</text></svg>
<svg x="637.45" y="350.63" width="115.45" height="10.08"><text x="-0.4" y="8.37" textLength="148.08" lengthAdjust="spacingAndGlyphs" style="white-space:pre">$(MD_MACROS)\ESS_Macro\203_Loop.ema</text></svg>
<svg x="754.10" y="350.63" width="20.30" height="10.08"><text x="-0.4" y="8.37" textLength="4.06" lengthAdjust="spacingAndGlyphs" style="white-space:pre">0</text></svg>
<path d="M753.50,351.23 h3 l-3,3 z" fill="#1e8a1e"/>
<svg x="913.70" y="350.63" width="39.05" height="10.08"><text x="-0.4" y="8.37" textLength="32.94" lengthAdjust="spacingAndGlyphs" style="white-space:pre">0 - 100 °C</text></svg>
<svg x="1107.45" y="350.63" width="44.15" height="10.08"><text x="-0.4" y="8.37" textLength="25.97" lengthAdjust="spacingAndGlyphs" style="white-space:pre">General</text></svg>
<svg x="1171.80" y="350.63" width="18.80" height="10.08"><text x="-0.4" y="8.37" textLength="14.20" lengthAdjust="spacingAndGlyphs" style="white-space:pre">EFS</text></svg>
<svg x="1191.80" y="350.63" width="35.70" height="10.08"><text x="-0.4" y="8.37" textLength="21.91" lengthAdjust="spacingAndGlyphs" style="white-space:pre">Output</text></svg>
<svg x="1228.70" y="350.63" width="28.80" height="10.08"><text x="-0.4" y="8.37" textLength="19.07" lengthAdjust="spacingAndGlyphs" style="white-space:pre">BYTE</text></svg>
<svg x="1258.70" y="350.63" width="19.05" height="10.08"><text x="-0.4" y="8.37" textLength="6.09" lengthAdjust="spacingAndGlyphs" style="white-space:pre">I1</text></svg>
<svg x="18.20" y="360.72" width="23.10" height="10.08"><text x="-0.4" y="8.28" textLength="14.20" lengthAdjust="spacingAndGlyphs" style="white-space:pre">HK1</text></svg>
<svg x="42.50" y="360.72" width="84.20" height="10.08"><text x="-0.4" y="8.28" textLength="51.53" lengthAdjust="spacingAndGlyphs" style="white-space:pre">Paint workpiece</text></svg>
<svg x="127.90" y="360.72" width="25.60" height="10.08"><text x="-0.4" y="8.28" textLength="16.22" lengthAdjust="spacingAndGlyphs" style="white-space:pre">HW1</text></svg>
<svg x="154.70" y="360.72" width="116.90" height="10.08"><text x="-0.4" y="8.28" textLength="75.46" lengthAdjust="spacingAndGlyphs" style="white-space:pre">Prepare basic color red</text></svg>
<svg x="291.60" y="360.72" width="19.00" height="10.08"><text x="-0.4" y="8.28" textLength="4.46" lengthAdjust="spacingAndGlyphs" style="white-space:pre">F</text></svg>
<svg x="311.80" y="360.72" width="62.80" height="10.08"><text x="-0.4" y="8.28" textLength="12.57" lengthAdjust="spacingAndGlyphs" style="white-space:pre">IRC</text></svg>
<svg x="375.80" y="360.72" width="18.80" height="10.08"><text x="-0.4" y="8.28" textLength="4.06" lengthAdjust="spacingAndGlyphs" style="white-space:pre">2</text></svg>
<path d="M375.20,361.32 h3 l-3,3 z" fill="#1e8a1e"/>
<svg x="395.80" y="360.72" width="106.70" height="10.08"><text x="-0.4" y="8.28" textLength="117.67" lengthAdjust="spacingAndGlyphs" style="white-space:pre">Flow valve control: Open and closed</text></svg>
<svg x="503.70" y="360.72" width="107.30" height="10.08"><text x="-0.4" y="8.28" textLength="88.86" lengthAdjust="spacingAndGlyphs" style="white-space:pre">Eplan.PCT.Loop.Measuring</text></svg>
<svg x="637.45" y="360.72" width="115.45" height="10.08"><text x="-0.4" y="8.28" textLength="148.08" lengthAdjust="spacingAndGlyphs" style="white-space:pre">$(MD_MACROS)\ESS_Macro\203_Loop.ema</text></svg>
<svg x="754.10" y="360.72" width="20.30" height="10.08"><text x="-0.4" y="8.28" textLength="4.06" lengthAdjust="spacingAndGlyphs" style="white-space:pre">0</text></svg>
<path d="M753.50,361.32 h3 l-3,3 z" fill="#1e8a1e"/>
<svg x="913.70" y="360.72" width="39.05" height="10.08"><text x="-0.4" y="8.28" textLength="32.94" lengthAdjust="spacingAndGlyphs" style="white-space:pre">0 - 100 °C</text></svg>
<svg x="1107.45" y="360.72" width="44.15" height="10.08"><text x="-0.4" y="8.28" textLength="25.97" lengthAdjust="spacingAndGlyphs" style="white-space:pre">General</text></svg>
<svg x="1171.80" y="360.72" width="18.80" height="10.08"><text x="-0.4" y="8.28" textLength="14.20" lengthAdjust="spacingAndGlyphs" style="white-space:pre">EFS</text></svg>
<svg x="1191.80" y="360.72" width="35.70" height="10.08"><text x="-0.4" y="8.28" textLength="21.91" lengthAdjust="spacingAndGlyphs" style="white-space:pre">Output</text></svg>
<svg x="1228.70" y="360.72" width="28.80" height="10.08"><text x="-0.4" y="8.28" textLength="19.07" lengthAdjust="spacingAndGlyphs" style="white-space:pre">BYTE</text></svg>
<svg x="1258.70" y="360.72" width="19.05" height="10.08"><text x="-0.4" y="8.28" textLength="6.09" lengthAdjust="spacingAndGlyphs" style="white-space:pre">I1</text></svg>
<svg x="18.20" y="370.80" width="23.10" height="10.08"><text x="-0.4" y="8.20" textLength="14.20" lengthAdjust="spacingAndGlyphs" style="white-space:pre">HK1</text></svg>
<svg x="42.50" y="370.80" width="84.20" height="10.08"><text x="-0.4" y="8.20" textLength="51.53" lengthAdjust="spacingAndGlyphs" style="white-space:pre">Paint workpiece</text></svg>
<svg x="127.90" y="370.80" width="25.60" height="10.08"><text x="-0.4" y="8.20" textLength="16.22" lengthAdjust="spacingAndGlyphs" style="white-space:pre">HW1</text></svg>
<svg x="154.70" y="370.80" width="116.90" height="10.08"><text x="-0.4" y="8.20" textLength="75.46" lengthAdjust="spacingAndGlyphs" style="white-space:pre">Prepare basic color red</text></svg>
<svg x="291.60" y="370.80" width="19.00" height="10.08"><text x="-0.4" y="8.20" textLength="4.46" lengthAdjust="spacingAndGlyphs" style="white-space:pre">F</text></svg>
<svg x="311.80" y="370.80" width="62.80" height="10.08"><text x="-0.4" y="8.20" textLength="12.57" lengthAdjust="spacingAndGlyphs" style="white-space:pre">IRC</text></svg>
<svg x="375.80" y="370.80" width="18.80" height="10.08"><text x="-0.4" y="8.20" textLength="4.06" lengthAdjust="spacingAndGlyphs" style="white-space:pre">2</text></svg>
<path d="M375.20,371.40 h3 l-3,3 z" fill="#1e8a1e"/>
<svg x="395.80" y="370.80" width="106.70" height="10.08"><text x="-0.4" y="8.20" textLength="117.67" lengthAdjust="spacingAndGlyphs" style="white-space:pre">Flow valve control: Open and closed</text></svg>
<svg x="503.70" y="370.80" width="107.30" height="10.08"><text x="-0.4" y="8.20" textLength="88.86" lengthAdjust="spacingAndGlyphs" style="white-space:pre">Eplan.PCT.Loop.Measuring</text></svg>
<svg x="637.45" y="370.80" width="115.45" height="10.08"><text x="-0.4" y="8.20" textLength="148.08" lengthAdjust="spacingAndGlyphs" style="white-space:pre">$(MD_MACROS)\ESS_Macro\203_Loop.ema</text></svg>
<svg x="754.10" y="370.80" width="20.30" height="10.08"><text x="-0.4" y="8.20" textLength="4.06" lengthAdjust="spacingAndGlyphs" style="white-space:pre">0</text></svg>
<path d="M753.50,371.40 h3 l-3,3 z" fill="#1e8a1e"/>
<svg x="913.70" y="370.80" width="39.05" height="10.08"><text x="-0.4" y="8.20" textLength="32.94" lengthAdjust="spacingAndGlyphs" style="white-space:pre">0 - 100 °C</text></svg>
<svg x="1107.45" y="370.80" width="44.15" height="10.08"><text x="-0.4" y="8.20" textLength="25.97" lengthAdjust="spacingAndGlyphs" style="white-space:pre">General</text></svg>
<svg x="1171.80" y="370.80" width="18.80" height="10.08"><text x="-0.4" y="8.20" textLength="14.20" lengthAdjust="spacingAndGlyphs" style="white-space:pre">EFS</text></svg>
<svg x="1191.80" y="370.80" width="35.70" height="10.08"><text x="-0.4" y="8.20" textLength="21.91" lengthAdjust="spacingAndGlyphs" style="white-space:pre">Output</text></svg>
<svg x="1228.70" y="370.80" width="28.80" height="10.08"><text x="-0.4" y="8.20" textLength="19.07" lengthAdjust="spacingAndGlyphs" style="white-space:pre">BYTE</text></svg>
<svg x="1258.70" y="370.80" width="19.05" height="10.08"><text x="-0.4" y="8.20" textLength="6.09" lengthAdjust="spacingAndGlyphs" style="white-space:pre">I1</text></svg>
<svg x="18.20" y="380.88" width="23.10" height="10.08"><text x="-0.4" y="8.12" textLength="14.20" lengthAdjust="spacingAndGlyphs" style="white-space:pre">HK1</text></svg>
<svg x="42.50" y="380.88" width="84.20" height="10.08"><text x="-0.4" y="8.12" textLength="51.53" lengthAdjust="spacingAndGlyphs" style="white-space:pre">Paint workpiece</text></svg>
<svg x="127.90" y="380.88" width="25.60" height="10.08"><text x="-0.4" y="8.12" textLength="16.22" lengthAdjust="spacingAndGlyphs" style="white-space:pre">HW1</text></svg>
<svg x="154.70" y="380.88" width="116.90" height="10.08"><text x="-0.4" y="8.12" textLength="75.46" lengthAdjust="spacingAndGlyphs" style="white-space:pre">Prepare basic color red</text></svg>
<svg x="291.60" y="380.88" width="19.00" height="10.08"><text x="-0.4" y="8.12" textLength="4.46" lengthAdjust="spacingAndGlyphs" style="white-space:pre">F</text></svg>
<svg x="311.80" y="380.88" width="62.80" height="10.08"><text x="-0.4" y="8.12" textLength="12.57" lengthAdjust="spacingAndGlyphs" style="white-space:pre">IRC</text></svg>
<svg x="375.80" y="380.88" width="18.80" height="10.08"><text x="-0.4" y="8.12" textLength="4.06" lengthAdjust="spacingAndGlyphs" style="white-space:pre">2</text></svg>
<path d="M375.20,381.48 h3 l-3,3 z" fill="#1e8a1e"/>
<svg x="395.80" y="380.88" width="106.70" height="10.08"><text x="-0.4" y="8.12" textLength="117.67" lengthAdjust="spacingAndGlyphs" style="white-space:pre">Flow valve control: Open and closed</text></svg>
<svg x="503.70" y="380.88" width="107.30" height="10.08"><text x="-0.4" y="8.12" textLength="88.86" lengthAdjust="spacingAndGlyphs" style="white-space:pre">Eplan.PCT.Loop.Measuring</text></svg>
<svg x="637.45" y="380.88" width="115.45" height="10.08"><text x="-0.4" y="8.12" textLength="148.08" lengthAdjust="spacingAndGlyphs" style="white-space:pre">$(MD_MACROS)\ESS_Macro\203_Loop.ema</text></svg>
<svg x="754.10" y="380.88" width="20.30" height="10.08"><text x="-0.4" y="8.12" textLength="4.06" lengthAdjust="spacingAndGlyphs" style="white-space:pre">0</text></svg>
<path d="M753.50,381.48 h3 l-3,3 z" fill="#1e8a1e"/>
<svg x="913.70" y="380.88" width="39.05" height="10.08"><text x="-0.4" y="8.12" textLength="32.94" lengthAdjust="spacingAndGlyphs" style="white-space:pre">0 - 100 °C</text></svg>
<svg x="1107.45" y="380.88" width="44.15" height="10.08"><text x="-0.4" y="8.12" textLength="25.97" lengthAdjust="spacingAndGlyphs" style="white-space:pre">General</text></svg>
<svg x="1171.80" y="380.88" width="18.80" height="10.08"><text x="-0.4" y="8.12" textLength="14.20" lengthAdjust="spacingAndGlyphs" style="white-space:pre">EFS</text></svg>
<svg x="1191.80" y="380.88" width="35.70" height="10.08"><text x="-0.4" y="8.12" textLength="21.91" lengthAdjust="spacingAndGlyphs" style="white-space:pre">Output</text></svg>
<svg x="1228.70" y="380.88" width="28.80" height="10.08"><text x="-0.4" y="8.12" textLength="19.07" lengthAdjust="spacingAndGlyphs" style="white-space:pre">BYTE</text></svg>
<svg x="1258.70" y="380.88" width="19.05" height="10.08"><text x="-0.4" y="8.12" textLength="6.09" lengthAdjust="spacingAndGlyphs" style="white-space:pre">I1</text></svg>
<svg x="18.20" y="390.96" width="23.10" height="10.08"><text x="-0.4" y="8.04" textLength="14.20" lengthAdjust="spacingAndGlyphs" style="white-space:pre">HK1</text></svg>
<svg x="42.50" y="390.96" width="84.20" height="10.08"><text x="-0.4" y="8.04" textLength="51.53" lengthAdjust="spacingAndGlyphs" style="white-space:pre">Paint workpiece</text></svg>
<svg x="127.90" y="390.96" width="25.60" height="10.08"><text x="-0.4" y="8.04" textLength="16.22" lengthAdjust="spacingAndGlyphs" style="white-space:pre">HW1</text></svg>
<svg x="154.70" y="390.96" width="116.90" height="10.08"><text x="-0.4" y="8.04" textLength="75.46" lengthAdjust="spacingAndGlyphs" style="white-space:pre">Prepare basic color red</text></svg>
<svg x="291.60" y="390.96" width="19.00" height="10.08"><text x="-0.4" y="8.04" textLength="4.46" lengthAdjust="spacingAndGlyphs" style="white-space:pre">F</text></svg>
<svg x="311.80" y="390.96" width="62.80" height="10.08"><text x="-0.4" y="8.04" textLength="12.57" lengthAdjust="spacingAndGlyphs" style="white-space:pre">IRC</text></svg>
<svg x="375.80" y="390.96" width="18.80" height="10.08"><text x="-0.4" y="8.04" textLength="4.06" lengthAdjust="spacingAndGlyphs" style="white-space:pre">3</text></svg>
<path d="M375.20,391.56 h3 l-3,3 z" fill="#1e8a1e"/>
<svg x="395.80" y="390.96" width="106.70" height="10.08"><text x="-0.4" y="8.04" textLength="85.20" lengthAdjust="spacingAndGlyphs" style="white-space:pre">Flow valve control: Closed</text></svg>
<svg x="503.70" y="390.96" width="107.30" height="10.08"><text x="-0.4" y="8.04" textLength="88.86" lengthAdjust="spacingAndGlyphs" style="white-space:pre">Eplan.PCT.Loop.Measuring</text></svg>
<svg x="637.45" y="390.96" width="115.45" height="10.08"><text x="-0.4" y="8.04" textLength="148.08" lengthAdjust="spacingAndGlyphs" style="white-space:pre">$(MD_MACROS)\ESS_Macro\203_Loop.ema</text></svg>
<svg x="754.10" y="390.96" width="20.30" height="10.08"><text x="-0.4" y="8.04" textLength="4.06" lengthAdjust="spacingAndGlyphs" style="white-space:pre">0</text></svg>
<path d="M753.50,391.56 h3 l-3,3 z" fill="#1e8a1e"/>
<svg x="913.70" y="390.96" width="39.05" height="10.08"><text x="-0.4" y="8.04" textLength="32.94" lengthAdjust="spacingAndGlyphs" style="white-space:pre">0 - 100 °C</text></svg>
<svg x="1107.45" y="390.96" width="44.15" height="10.08"><text x="-0.4" y="8.04" textLength="25.97" lengthAdjust="spacingAndGlyphs" style="white-space:pre">General</text></svg>
<svg x="1191.80" y="390.96" width="35.70" height="10.08"><text x="-0.4" y="8.04" textLength="21.91" lengthAdjust="spacingAndGlyphs" style="white-space:pre">Output</text></svg>
<svg x="1228.70" y="390.96" width="28.80" height="10.08"><text x="-0.4" y="8.04" textLength="19.07" lengthAdjust="spacingAndGlyphs" style="white-space:pre">BYTE</text></svg>
<svg x="1258.70" y="390.96" width="19.05" height="10.08"><text x="-0.4" y="8.04" textLength="6.09" lengthAdjust="spacingAndGlyphs" style="white-space:pre">I1</text></svg>
<svg x="18.20" y="401.05" width="23.10" height="10.08"><text x="-0.4" y="7.95" textLength="14.20" lengthAdjust="spacingAndGlyphs" style="white-space:pre">HK1</text></svg>
<svg x="42.50" y="401.05" width="84.20" height="10.08"><text x="-0.4" y="7.95" textLength="51.53" lengthAdjust="spacingAndGlyphs" style="white-space:pre">Paint workpiece</text></svg>
<svg x="127.90" y="401.05" width="25.60" height="10.08"><text x="-0.4" y="7.95" textLength="16.22" lengthAdjust="spacingAndGlyphs" style="white-space:pre">HW1</text></svg>
<svg x="154.70" y="401.05" width="116.90" height="10.08"><text x="-0.4" y="7.95" textLength="75.46" lengthAdjust="spacingAndGlyphs" style="white-space:pre">Prepare basic color red</text></svg>
<svg x="291.60" y="401.05" width="19.00" height="10.08"><text x="-0.4" y="7.95" textLength="4.46" lengthAdjust="spacingAndGlyphs" style="white-space:pre">F</text></svg>
<svg x="311.80" y="401.05" width="62.80" height="10.08"><text x="-0.4" y="7.95" textLength="12.57" lengthAdjust="spacingAndGlyphs" style="white-space:pre">IRC</text></svg>
<svg x="375.80" y="401.05" width="18.80" height="10.08"><text x="-0.4" y="7.95" textLength="4.06" lengthAdjust="spacingAndGlyphs" style="white-space:pre">3</text></svg>
<path d="M375.20,401.65 h3 l-3,3 z" fill="#1e8a1e"/>
<svg x="395.80" y="401.05" width="106.70" height="10.08"><text x="-0.4" y="7.95" textLength="85.20" lengthAdjust="spacingAndGlyphs" style="white-space:pre">Flow valve control: Closed</text></svg>
<svg x="503.70" y="401.05" width="107.30" height="10.08"><text x="-0.4" y="7.95" textLength="88.86" lengthAdjust="spacingAndGlyphs" style="white-space:pre">Eplan.PCT.Loop.Measuring</text></svg>
<svg x="637.45" y="401.05" width="115.45" height="10.08"><text x="-0.4" y="7.95" textLength="148.08" lengthAdjust="spacingAndGlyphs" style="white-space:pre">$(MD_MACROS)\ESS_Macro\203_Loop.ema</text></svg>
<svg x="754.10" y="401.05" width="20.30" height="10.08"><text x="-0.4" y="7.95" textLength="4.06" lengthAdjust="spacingAndGlyphs" style="white-space:pre">0</text></svg>
<path d="M753.50,401.65 h3 l-3,3 z" fill="#1e8a1e"/>
<svg x="913.70" y="401.05" width="39.05" height="10.08"><text x="-0.4" y="7.95" textLength="32.94" lengthAdjust="spacingAndGlyphs" style="white-space:pre">0 - 100 °C</text></svg>
<svg x="1107.45" y="401.05" width="44.15" height="10.08"><text x="-0.4" y="7.95" textLength="25.97" lengthAdjust="spacingAndGlyphs" style="white-space:pre">General</text></svg>
<svg x="1191.80" y="401.05" width="35.70" height="10.08"><text x="-0.4" y="7.95" textLength="21.91" lengthAdjust="spacingAndGlyphs" style="white-space:pre">Output</text></svg>
<svg x="1228.70" y="401.05" width="28.80" height="10.08"><text x="-0.4" y="7.95" textLength="19.07" lengthAdjust="spacingAndGlyphs" style="white-space:pre">BYTE</text></svg>
<svg x="1258.70" y="401.05" width="19.05" height="10.08"><text x="-0.4" y="7.95" textLength="6.09" lengthAdjust="spacingAndGlyphs" style="white-space:pre">I1</text></svg>
<svg x="18.20" y="411.13" width="23.10" height="10.08"><text x="-0.4" y="7.87" textLength="14.20" lengthAdjust="spacingAndGlyphs" style="white-space:pre">HK1</text></svg>
<svg x="42.50" y="411.13" width="84.20" height="10.08"><text x="-0.4" y="7.87" textLength="51.53" lengthAdjust="spacingAndGlyphs" style="white-space:pre">Paint workpiece</text></svg>
<svg x="127.90" y="411.13" width="25.60" height="10.08"><text x="-0.4" y="7.87" textLength="16.22" lengthAdjust="spacingAndGlyphs" style="white-space:pre">HW1</text></svg>
<svg x="154.70" y="411.13" width="116.90" height="10.08"><text x="-0.4" y="7.87" textLength="75.46" lengthAdjust="spacingAndGlyphs" style="white-space:pre">Prepare basic color red</text></svg>
<svg x="291.60" y="411.13" width="19.00" height="10.08"><text x="-0.4" y="7.87" textLength="4.46" lengthAdjust="spacingAndGlyphs" style="white-space:pre">F</text></svg>
<svg x="311.80" y="411.13" width="62.80" height="10.08"><text x="-0.4" y="7.87" textLength="12.57" lengthAdjust="spacingAndGlyphs" style="white-space:pre">IRC</text></svg>
<svg x="375.80" y="411.13" width="18.80" height="10.08"><text x="-0.4" y="7.87" textLength="4.06" lengthAdjust="spacingAndGlyphs" style="white-space:pre">3</text></svg>
<path d="M375.20,411.73 h3 l-3,3 z" fill="#1e8a1e"/>
<svg x="395.80" y="411.13" width="106.70" height="10.08"><text x="-0.4" y="7.87" textLength="85.20" lengthAdjust="spacingAndGlyphs" style="white-space:pre">Flow valve control: Closed</text></svg>
<svg x="503.70" y="411.13" width="107.30" height="10.08"><text x="-0.4" y="7.87" textLength="88.86" lengthAdjust="spacingAndGlyphs" style="white-space:pre">Eplan.PCT.Loop.Measuring</text></svg>
<svg x="637.45" y="411.13" width="115.45" height="10.08"><text x="-0.4" y="7.87" textLength="148.08" lengthAdjust="spacingAndGlyphs" style="white-space:pre">$(MD_MACROS)\ESS_Macro\203_Loop.ema</text></svg>
<svg x="754.10" y="411.13" width="20.30" height="10.08"><text x="-0.4" y="7.87" textLength="4.06" lengthAdjust="spacingAndGlyphs" style="white-space:pre">0</text></svg>
<path d="M753.50,411.73 h3 l-3,3 z" fill="#1e8a1e"/>
<svg x="913.70" y="411.13" width="39.05" height="10.08"><text x="-0.4" y="7.87" textLength="32.94" lengthAdjust="spacingAndGlyphs" style="white-space:pre">0 - 100 °C</text></svg>
<svg x="1107.45" y="411.13" width="44.15" height="10.08"><text x="-0.4" y="7.87" textLength="25.97" lengthAdjust="spacingAndGlyphs" style="white-space:pre">General</text></svg>
<svg x="1191.80" y="411.13" width="35.70" height="10.08"><text x="-0.4" y="7.87" textLength="21.91" lengthAdjust="spacingAndGlyphs" style="white-space:pre">Output</text></svg>
<svg x="1228.70" y="411.13" width="28.80" height="10.08"><text x="-0.4" y="7.87" textLength="19.07" lengthAdjust="spacingAndGlyphs" style="white-space:pre">BYTE</text></svg>
<svg x="1258.70" y="411.13" width="19.05" height="10.08"><text x="-0.4" y="7.87" textLength="6.09" lengthAdjust="spacingAndGlyphs" style="white-space:pre">I1</text></svg>
<svg x="18.20" y="421.21" width="23.10" height="10.08"><text x="-0.4" y="7.79" textLength="14.20" lengthAdjust="spacingAndGlyphs" style="white-space:pre">HK1</text></svg>
<svg x="42.50" y="421.21" width="84.20" height="10.08"><text x="-0.4" y="7.79" textLength="51.53" lengthAdjust="spacingAndGlyphs" style="white-space:pre">Paint workpiece</text></svg>
<svg x="127.90" y="421.21" width="25.60" height="10.08"><text x="-0.4" y="7.79" textLength="16.22" lengthAdjust="spacingAndGlyphs" style="white-space:pre">HW1</text></svg>
<svg x="154.70" y="421.21" width="116.90" height="10.08"><text x="-0.4" y="7.79" textLength="75.46" lengthAdjust="spacingAndGlyphs" style="white-space:pre">Prepare basic color red</text></svg>
<svg x="291.60" y="421.21" width="19.00" height="10.08"><text x="-0.4" y="7.79" textLength="5.68" lengthAdjust="spacingAndGlyphs" style="white-space:pre">G</text></svg>
<svg x="311.80" y="421.21" width="62.80" height="10.08"><text x="-0.4" y="7.79" textLength="4.87" lengthAdjust="spacingAndGlyphs" style="white-space:pre">S</text></svg>
<svg x="375.80" y="421.21" width="18.80" height="10.08"><text x="-0.4" y="7.79" textLength="4.06" lengthAdjust="spacingAndGlyphs" style="white-space:pre">1</text></svg>
<path d="M375.20,421.81 h3 l-3,3 z" fill="#1e8a1e"/>
<svg x="395.80" y="421.21" width="106.70" height="10.08"><text x="-0.4" y="7.79" textLength="38.95" lengthAdjust="spacingAndGlyphs" style="white-space:pre">Light barrier</text></svg>
<svg x="503.70" y="421.21" width="107.30" height="10.08"><text x="-0.4" y="7.79" textLength="88.86" lengthAdjust="spacingAndGlyphs" style="white-space:pre">Eplan.PCT.Loop.Measuring</text></svg>
<svg x="637.45" y="421.21" width="115.45" height="10.08"><text x="-0.4" y="7.79" textLength="148.08" lengthAdjust="spacingAndGlyphs" style="white-space:pre">$(MD_MACROS)\ESS_Macro\203_Loop.ema</text></svg>
<svg x="754.10" y="421.21" width="20.30" height="10.08"><text x="-0.4" y="7.79" textLength="4.06" lengthAdjust="spacingAndGlyphs" style="white-space:pre">0</text></svg>
<path d="M753.50,421.81 h3 l-3,3 z" fill="#1e8a1e"/>
<svg x="1107.45" y="421.21" width="44.15" height="10.08"><text x="-0.4" y="7.79" textLength="25.97" lengthAdjust="spacingAndGlyphs" style="white-space:pre">General</text></svg>
<svg x="1191.80" y="421.21" width="35.70" height="10.08"><text x="-0.4" y="7.79" textLength="16.23" lengthAdjust="spacingAndGlyphs" style="white-space:pre">Input</text></svg>
<svg x="1228.70" y="421.21" width="28.80" height="10.08"><text x="-0.4" y="7.79" textLength="20.28" lengthAdjust="spacingAndGlyphs" style="white-space:pre">BOOL</text></svg>
<svg x="1258.70" y="421.21" width="19.05" height="10.08"><text x="-0.4" y="7.79" textLength="6.09" lengthAdjust="spacingAndGlyphs" style="white-space:pre">I1</text></svg>
<svg x="18.20" y="431.30" width="23.10" height="10.08"><text x="-0.4" y="7.70" textLength="14.20" lengthAdjust="spacingAndGlyphs" style="white-space:pre">HK1</text></svg>
<svg x="42.50" y="431.30" width="84.20" height="10.08"><text x="-0.4" y="7.70" textLength="51.53" lengthAdjust="spacingAndGlyphs" style="white-space:pre">Paint workpiece</text></svg>
<svg x="127.90" y="431.30" width="25.60" height="10.08"><text x="-0.4" y="7.70" textLength="16.22" lengthAdjust="spacingAndGlyphs" style="white-space:pre">HW1</text></svg>
<svg x="154.70" y="431.30" width="116.90" height="10.08"><text x="-0.4" y="7.70" textLength="75.46" lengthAdjust="spacingAndGlyphs" style="white-space:pre">Prepare basic color red</text></svg>
<svg x="291.60" y="431.30" width="19.00" height="10.08"><text x="-0.4" y="7.70" textLength="4.06" lengthAdjust="spacingAndGlyphs" style="white-space:pre">L</text></svg>
<svg x="311.80" y="431.30" width="62.80" height="10.08"><text x="-0.4" y="7.70" textLength="7.30" lengthAdjust="spacingAndGlyphs" style="white-space:pre">IR</text></svg>
<svg x="375.80" y="431.30" width="18.80" height="10.08"><text x="-0.4" y="7.70" textLength="8.12" lengthAdjust="spacingAndGlyphs" style="white-space:pre">20</text></svg>
<path d="M375.20,431.90 h3 l-3,3 z" fill="#1e8a1e"/>
<svg x="395.80" y="431.30" width="106.70" height="10.08"><text x="-0.4" y="7.70" textLength="64.10" lengthAdjust="spacingAndGlyphs" style="white-space:pre">Measure filling level</text></svg>
<svg x="503.70" y="431.30" width="107.30" height="10.08"><text x="-0.4" y="7.70" textLength="88.86" lengthAdjust="spacingAndGlyphs" style="white-space:pre">Eplan.PCT.Loop.Measuring</text></svg>
<svg x="612.20" y="431.30" width="24.05" height="10.08"><text x="-0.4" y="7.70" textLength="15.01" lengthAdjust="spacingAndGlyphs" style="white-space:pre">MS5</text></svg>
<svg x="637.45" y="431.30" width="52.95" height="10.08"><text x="-0.4" y="7.70" textLength="149.69" lengthAdjust="spacingAndGlyphs" style="white-space:pre">$(MD_MACROS)\ESS_Macro\Measuring.ema</text></svg>
<svg x="691.60" y="431.30" width="19.30" height="10.08"><text x="-0.4" y="7.70" textLength="14.21" lengthAdjust="spacingAndGlyphs" style="white-space:pre">0,5h</text></svg>
<svg x="712.10" y="431.30" width="19.80" height="10.08"><text x="-0.4" y="7.70" textLength="14.21" lengthAdjust="spacingAndGlyphs" style="white-space:pre">1,5h</text></svg>
<svg x="733.10" y="431.30" width="19.80" height="10.08"><text x="-0.4" y="7.70" textLength="14.21" lengthAdjust="spacingAndGlyphs" style="white-space:pre">0,5h</text></svg>
<svg x="754.10" y="431.30" width="20.30" height="10.08"><text x="-0.4" y="7.70" textLength="12.18" lengthAdjust="spacingAndGlyphs" style="white-space:pre">800</text></svg>
<path d="M753.50,431.90 h3 l-3,3 z" fill="#1e8a1e"/>
<svg x="1107.45" y="431.30" width="44.15" height="10.08"><text x="-0.4" y="7.70" textLength="25.97" lengthAdjust="spacingAndGlyphs" style="white-space:pre">General</text></svg>
<svg x="1171.80" y="431.30" width="18.80" height="10.08"><text x="-0.4" y="7.70" textLength="14.20" lengthAdjust="spacingAndGlyphs" style="white-space:pre">EFS</text></svg>
<svg x="1191.80" y="431.30" width="35.70" height="10.08"><text x="-0.4" y="7.70" textLength="16.23" lengthAdjust="spacingAndGlyphs" style="white-space:pre">Input</text></svg>
<svg x="1228.70" y="431.30" width="28.80" height="10.08"><text x="-0.4" y="7.70" textLength="20.28" lengthAdjust="spacingAndGlyphs" style="white-space:pre">BOOL</text></svg>
<svg x="1258.70" y="431.30" width="19.05" height="10.08"><text x="-0.4" y="7.70" textLength="6.09" lengthAdjust="spacingAndGlyphs" style="white-space:pre">I1</text></svg>
<svg x="18.20" y="441.38" width="23.10" height="10.08"><text x="-0.4" y="7.62" textLength="14.20" lengthAdjust="spacingAndGlyphs" style="white-space:pre">HK1</text></svg>
<svg x="42.50" y="441.38" width="84.20" height="10.08"><text x="-0.4" y="7.62" textLength="51.53" lengthAdjust="spacingAndGlyphs" style="white-space:pre">Paint workpiece</text></svg>
<svg x="127.90" y="441.38" width="25.60" height="10.08"><text x="-0.4" y="7.62" textLength="16.22" lengthAdjust="spacingAndGlyphs" style="white-space:pre">HW1</text></svg>
<svg x="154.70" y="441.38" width="116.90" height="10.08"><text x="-0.4" y="7.62" textLength="75.46" lengthAdjust="spacingAndGlyphs" style="white-space:pre">Prepare basic color red</text></svg>
<svg x="291.60" y="441.38" width="19.00" height="10.08"><text x="-0.4" y="7.62" textLength="4.06" lengthAdjust="spacingAndGlyphs" style="white-space:pre">L</text></svg>
<svg x="311.80" y="441.38" width="62.80" height="10.08"><text x="-0.4" y="7.62" textLength="7.30" lengthAdjust="spacingAndGlyphs" style="white-space:pre">IR</text></svg>
<svg x="375.80" y="441.38" width="18.80" height="10.08"><text x="-0.4" y="7.62" textLength="8.12" lengthAdjust="spacingAndGlyphs" style="white-space:pre">20</text></svg>
<path d="M375.20,441.98 h3 l-3,3 z" fill="#1e8a1e"/>
<svg x="395.80" y="441.38" width="106.70" height="10.08"><text x="-0.4" y="7.62" textLength="64.10" lengthAdjust="spacingAndGlyphs" style="white-space:pre">Measure filling level</text></svg>
<svg x="503.70" y="441.38" width="107.30" height="10.08"><text x="-0.4" y="7.62" textLength="88.86" lengthAdjust="spacingAndGlyphs" style="white-space:pre">Eplan.PCT.Loop.Measuring</text></svg>
<svg x="612.20" y="441.38" width="24.05" height="10.08"><text x="-0.4" y="7.62" textLength="15.01" lengthAdjust="spacingAndGlyphs" style="white-space:pre">MS5</text></svg>
<svg x="637.45" y="441.38" width="52.95" height="10.08"><text x="-0.4" y="7.62" textLength="149.69" lengthAdjust="spacingAndGlyphs" style="white-space:pre">$(MD_MACROS)\ESS_Macro\Measuring.ema</text></svg>
<svg x="691.60" y="441.38" width="19.30" height="10.08"><text x="-0.4" y="7.62" textLength="14.21" lengthAdjust="spacingAndGlyphs" style="white-space:pre">0,5h</text></svg>
<svg x="712.10" y="441.38" width="19.80" height="10.08"><text x="-0.4" y="7.62" textLength="14.21" lengthAdjust="spacingAndGlyphs" style="white-space:pre">1,5h</text></svg>
<svg x="733.10" y="441.38" width="19.80" height="10.08"><text x="-0.4" y="7.62" textLength="14.21" lengthAdjust="spacingAndGlyphs" style="white-space:pre">0,5h</text></svg>
<svg x="754.10" y="441.38" width="20.30" height="10.08"><text x="-0.4" y="7.62" textLength="12.18" lengthAdjust="spacingAndGlyphs" style="white-space:pre">800</text></svg>
<path d="M753.50,441.98 h3 l-3,3 z" fill="#1e8a1e"/>
<svg x="1107.45" y="441.38" width="44.15" height="10.08"><text x="-0.4" y="7.62" textLength="25.97" lengthAdjust="spacingAndGlyphs" style="white-space:pre">General</text></svg>
<svg x="1171.80" y="441.38" width="18.80" height="10.08"><text x="-0.4" y="7.62" textLength="14.20" lengthAdjust="spacingAndGlyphs" style="white-space:pre">EFS</text></svg>
<svg x="1191.80" y="441.38" width="35.70" height="10.08"><text x="-0.4" y="7.62" textLength="16.23" lengthAdjust="spacingAndGlyphs" style="white-space:pre">Input</text></svg>
<svg x="1228.70" y="441.38" width="28.80" height="10.08"><text x="-0.4" y="7.62" textLength="20.28" lengthAdjust="spacingAndGlyphs" style="white-space:pre">BOOL</text></svg>
<svg x="1258.70" y="441.38" width="19.05" height="10.08"><text x="-0.4" y="7.62" textLength="6.09" lengthAdjust="spacingAndGlyphs" style="white-space:pre">I1</text></svg>
<svg x="18.20" y="451.46" width="23.10" height="10.08"><text x="-0.4" y="8.54" textLength="14.20" lengthAdjust="spacingAndGlyphs" style="white-space:pre">HK1</text></svg>
<svg x="42.50" y="451.46" width="84.20" height="10.08"><text x="-0.4" y="8.54" textLength="51.53" lengthAdjust="spacingAndGlyphs" style="white-space:pre">Paint workpiece</text></svg>
<svg x="127.90" y="451.46" width="25.60" height="10.08"><text x="-0.4" y="8.54" textLength="16.22" lengthAdjust="spacingAndGlyphs" style="white-space:pre">HW1</text></svg>
<svg x="154.70" y="451.46" width="116.90" height="10.08"><text x="-0.4" y="8.54" textLength="75.46" lengthAdjust="spacingAndGlyphs" style="white-space:pre">Prepare basic color red</text></svg>
<svg x="291.60" y="451.46" width="19.00" height="10.08"><text x="-0.4" y="8.54" textLength="4.06" lengthAdjust="spacingAndGlyphs" style="white-space:pre">L</text></svg>
<svg x="311.80" y="451.46" width="62.80" height="10.08"><text x="-0.4" y="8.54" textLength="13.40" lengthAdjust="spacingAndGlyphs" style="white-space:pre">S++</text></svg>
<svg x="375.80" y="451.46" width="18.80" height="10.08"><text x="-0.4" y="8.54" textLength="8.12" lengthAdjust="spacingAndGlyphs" style="white-space:pre">21</text></svg>
<path d="M375.20,452.06 h3 l-3,3 z" fill="#1e8a1e"/>
<svg x="395.80" y="451.46" width="106.70" height="10.08"><text x="-0.4" y="8.54" textLength="75.74" lengthAdjust="spacingAndGlyphs" style="white-space:pre">Switch off medium feed</text></svg>
<svg x="503.70" y="451.46" width="107.30" height="10.08"><text x="-0.4" y="8.54" textLength="88.86" lengthAdjust="spacingAndGlyphs" style="white-space:pre">Eplan.PCT.Loop.Measuring</text></svg>
<svg x="612.20" y="451.46" width="24.05" height="10.08"><text x="-0.4" y="8.54" textLength="15.01" lengthAdjust="spacingAndGlyphs" style="white-space:pre">MS6</text></svg>
<svg x="637.45" y="451.46" width="52.95" height="10.08"><text x="-0.4" y="8.54" textLength="149.69" lengthAdjust="spacingAndGlyphs" style="white-space:pre">$(MD_MACROS)\ESS_Macro\Measuring.ema</text></svg>
<svg x="691.60" y="451.46" width="19.30" height="10.08"><text x="-0.4" y="8.54" textLength="14.21" lengthAdjust="spacingAndGlyphs" style="white-space:pre">0,5h</text></svg>
<svg x="712.10" y="451.46" width="19.80" height="10.08"><text x="-0.4" y="8.54" textLength="14.21" lengthAdjust="spacingAndGlyphs" style="white-space:pre">1,5h</text></svg>
<svg x="733.10" y="451.46" width="19.80" height="10.08"><text x="-0.4" y="8.54" textLength="14.21" lengthAdjust="spacingAndGlyphs" style="white-space:pre">0,5h</text></svg>
<svg x="754.10" y="451.46" width="20.30" height="10.08"><text x="-0.4" y="8.54" textLength="12.18" lengthAdjust="spacingAndGlyphs" style="white-space:pre">800</text></svg>
<path d="M753.50,452.06 h3 l-3,3 z" fill="#1e8a1e"/>
<svg x="854.70" y="451.46" width="18.10" height="10.08"><text x="-0.4" y="8.54" textLength="4.87" lengthAdjust="spacingAndGlyphs" style="white-space:pre">X</text></svg>
<svg x="874.00" y="451.46" width="18.50" height="10.08"><text x="-0.4" y="8.54" textLength="4.87" lengthAdjust="spacingAndGlyphs" style="white-space:pre">X</text></svg>
<svg x="893.70" y="451.46" width="18.80" height="10.08"><text x="-0.4" y="8.54" textLength="4.87" lengthAdjust="spacingAndGlyphs" style="white-space:pre">X</text></svg>
<svg x="913.70" y="451.46" width="39.05" height="10.08"><text x="-0.4" y="8.54" textLength="26.38" lengthAdjust="spacingAndGlyphs" style="white-space:pre">0-1000 l</text></svg>
<svg x="953.95" y="451.46" width="23.15" height="10.08"><text x="-0.4" y="8.54" font-weight="bold" fill="#ff0000" textLength="16.23" lengthAdjust="spacingAndGlyphs" style="white-space:pre">200 l</text></svg>
<svg x="978.30" y="451.46" width="22.95" height="10.08"><text x="-0.4" y="8.54" font-weight="bold" fill="#ff0000" textLength="16.23" lengthAdjust="spacingAndGlyphs" style="white-space:pre">400 l</text></svg>
<svg x="1002.45" y="451.46" width="22.95" height="10.08"><text x="-0.4" y="8.54" font-weight="bold" fill="#ff0000" textLength="16.23" lengthAdjust="spacingAndGlyphs" style="white-space:pre">500 l</text></svg>
<svg x="1026.60" y="451.46" width="23.00" height="10.08"><text x="-0.4" y="8.54" font-weight="bold" fill="#ff0000" textLength="16.23" lengthAdjust="spacingAndGlyphs" style="white-space:pre">600 l</text></svg>
<svg x="1050.80" y="451.46" width="27.10" height="10.08"><text x="-0.4" y="8.54" font-weight="bold" fill="#ff0000" textLength="16.23" lengthAdjust="spacingAndGlyphs" style="white-space:pre">800 l</text></svg>
<svg x="1079.10" y="451.46" width="27.15" height="10.08"><text x="-0.4" y="8.54" font-weight="bold" fill="#ff0000" textLength="20.29" lengthAdjust="spacingAndGlyphs" style="white-space:pre">1000 l</text></svg>
<svg x="1107.45" y="451.46" width="44.15" height="10.08"><text x="-0.4" y="8.54" textLength="25.97" lengthAdjust="spacingAndGlyphs" style="white-space:pre">General</text></svg>
<svg x="1171.80" y="451.46" width="18.80" height="10.08"><text x="-0.4" y="8.54" textLength="14.20" lengthAdjust="spacingAndGlyphs" style="white-space:pre">EFS</text></svg>
<svg x="1191.80" y="451.46" width="35.70" height="10.08"><text x="-0.4" y="8.54" textLength="16.23" lengthAdjust="spacingAndGlyphs" style="white-space:pre">Input</text></svg>
<svg x="1228.70" y="451.46" width="28.80" height="10.08"><text x="-0.4" y="8.54" textLength="20.28" lengthAdjust="spacingAndGlyphs" style="white-space:pre">BOOL</text></svg>
<svg x="1258.70" y="451.46" width="19.05" height="10.08"><text x="-0.4" y="8.54" textLength="6.09" lengthAdjust="spacingAndGlyphs" style="white-space:pre">I1</text></svg>
<svg x="18.20" y="461.55" width="23.10" height="10.08"><text x="-0.4" y="8.45" textLength="14.20" lengthAdjust="spacingAndGlyphs" style="white-space:pre">HK1</text></svg>
<svg x="42.50" y="461.55" width="84.20" height="10.08"><text x="-0.4" y="8.45" textLength="51.53" lengthAdjust="spacingAndGlyphs" style="white-space:pre">Paint workpiece</text></svg>
<svg x="127.90" y="461.55" width="25.60" height="10.08"><text x="-0.4" y="8.45" textLength="16.22" lengthAdjust="spacingAndGlyphs" style="white-space:pre">HW1</text></svg>
<svg x="154.70" y="461.55" width="116.90" height="10.08"><text x="-0.4" y="8.45" textLength="75.46" lengthAdjust="spacingAndGlyphs" style="white-space:pre">Prepare basic color red</text></svg>
<svg x="291.60" y="461.55" width="19.00" height="10.08"><text x="-0.4" y="8.45" textLength="4.46" lengthAdjust="spacingAndGlyphs" style="white-space:pre">T</text></svg>
<svg x="311.80" y="461.55" width="62.80" height="10.08"><text x="-0.4" y="8.45" textLength="52.35" lengthAdjust="spacingAndGlyphs" style="white-space:pre">IRCA+S++Z+++</text></svg>
<svg x="375.80" y="461.55" width="18.80" height="10.08"><text x="-0.4" y="8.45" textLength="8.12" lengthAdjust="spacingAndGlyphs" style="white-space:pre">22</text></svg>
<path d="M375.20,462.15 h3 l-3,3 z" fill="#1e8a1e"/>
<svg x="395.80" y="461.55" width="106.70" height="10.08"><text x="-0.4" y="8.45" textLength="69.78" lengthAdjust="spacingAndGlyphs" style="white-space:pre">Measure temperature</text></svg>
<svg x="503.70" y="461.55" width="107.30" height="10.08"><text x="-0.4" y="8.45" textLength="88.86" lengthAdjust="spacingAndGlyphs" style="white-space:pre">Eplan.PCT.Loop.Measuring</text></svg>
<svg x="612.20" y="461.55" width="24.05" height="10.08"><text x="-0.4" y="8.45" textLength="15.01" lengthAdjust="spacingAndGlyphs" style="white-space:pre">MS7</text></svg>
<svg x="637.45" y="461.55" width="52.95" height="10.08"><text x="-0.4" y="8.45" textLength="149.69" lengthAdjust="spacingAndGlyphs" style="white-space:pre">$(MD_MACROS)\ESS_Macro\Measuring.ema</text></svg>
<svg x="691.60" y="461.55" width="19.30" height="10.08"><text x="-0.4" y="8.45" textLength="14.21" lengthAdjust="spacingAndGlyphs" style="white-space:pre">0,5h</text></svg>
<svg x="712.10" y="461.55" width="19.80" height="10.08"><text x="-0.4" y="8.45" textLength="14.21" lengthAdjust="spacingAndGlyphs" style="white-space:pre">1,5h</text></svg>
<svg x="733.10" y="461.55" width="19.80" height="10.08"><text x="-0.4" y="8.45" textLength="14.21" lengthAdjust="spacingAndGlyphs" style="white-space:pre">0,5h</text></svg>
<svg x="754.10" y="461.55" width="20.30" height="10.08"><text x="-0.4" y="8.45" textLength="15.70" lengthAdjust="spacingAndGlyphs" style="white-space:pre">1100</text></svg>
<path d="M753.50,462.15 h3 l-3,3 z" fill="#1e8a1e"/>
<svg x="854.70" y="461.55" width="18.10" height="10.08"><text x="-0.4" y="8.45" textLength="4.87" lengthAdjust="spacingAndGlyphs" style="white-space:pre">X</text></svg>
<svg x="874.00" y="461.55" width="18.50" height="10.08"><text x="-0.4" y="8.45" textLength="4.87" lengthAdjust="spacingAndGlyphs" style="white-space:pre">X</text></svg>
<svg x="893.70" y="461.55" width="18.80" height="10.08"><text x="-0.4" y="8.45" textLength="4.87" lengthAdjust="spacingAndGlyphs" style="white-space:pre">X</text></svg>
<svg x="913.70" y="461.55" width="39.05" height="10.08"><text x="-0.4" y="8.45" textLength="32.94" lengthAdjust="spacingAndGlyphs" style="white-space:pre">0 - 250 °C</text></svg>
<svg x="953.95" y="461.55" width="23.15" height="10.08"><text x="-0.4" y="8.45" font-weight="bold" fill="#ff0000" textLength="18.34" lengthAdjust="spacingAndGlyphs" style="white-space:pre">30 °C</text></svg>
<svg x="978.30" y="461.55" width="22.95" height="10.08"><text x="-0.4" y="8.45" font-weight="bold" fill="#ff0000" textLength="18.34" lengthAdjust="spacingAndGlyphs" style="white-space:pre">50 °C</text></svg>
<svg x="1002.45" y="461.55" width="22.95" height="10.08"><text x="-0.4" y="8.45" font-weight="bold" fill="#ff0000" textLength="18.34" lengthAdjust="spacingAndGlyphs" style="white-space:pre">70 °C</text></svg>
<svg x="1026.60" y="461.55" width="23.00" height="10.08"><text x="-0.4" y="8.45" font-weight="bold" fill="#ff0000" textLength="18.34" lengthAdjust="spacingAndGlyphs" style="white-space:pre">90 °C</text></svg>
<svg x="1050.80" y="461.55" width="27.10" height="10.08"><text x="-0.4" y="8.45" font-weight="bold" fill="#ff0000" textLength="21.99" lengthAdjust="spacingAndGlyphs" style="white-space:pre">110 °C</text></svg>
<svg x="1079.10" y="461.55" width="27.15" height="10.08"><text x="-0.4" y="8.45" font-weight="bold" fill="#ff0000" textLength="22.40" lengthAdjust="spacingAndGlyphs" style="white-space:pre">130 °C</text></svg>
<svg x="1107.45" y="461.55" width="44.15" height="10.08"><text x="-0.4" y="8.45" textLength="25.97" lengthAdjust="spacingAndGlyphs" style="white-space:pre">General</text></svg>
<svg x="1171.80" y="461.55" width="18.80" height="10.08"><text x="-0.4" y="8.45" textLength="14.20" lengthAdjust="spacingAndGlyphs" style="white-space:pre">EFS</text></svg>
<svg x="1191.80" y="461.55" width="35.70" height="10.08"><text x="-0.4" y="8.45" textLength="16.23" lengthAdjust="spacingAndGlyphs" style="white-space:pre">Input</text></svg>
<svg x="1228.70" y="461.55" width="28.80" height="10.08"><text x="-0.4" y="8.45" textLength="23.11" lengthAdjust="spacingAndGlyphs" style="white-space:pre">WORD</text></svg>
<svg x="1258.70" y="461.55" width="19.05" height="10.08"><text x="-0.4" y="8.45" textLength="6.09" lengthAdjust="spacingAndGlyphs" style="white-space:pre">I1</text></svg>
<svg x="18.20" y="471.63" width="23.10" height="10.08"><text x="-0.4" y="8.37" textLength="14.20" lengthAdjust="spacingAndGlyphs" style="white-space:pre">HK1</text></svg>
<svg x="42.50" y="471.63" width="84.20" height="10.08"><text x="-0.4" y="8.37" textLength="51.53" lengthAdjust="spacingAndGlyphs" style="white-space:pre">Paint workpiece</text></svg>
<svg x="127.90" y="471.63" width="25.60" height="10.08"><text x="-0.4" y="8.37" textLength="16.22" lengthAdjust="spacingAndGlyphs" style="white-space:pre">HW2</text></svg>
<svg x="154.70" y="471.63" width="116.90" height="10.08"><text x="-0.4" y="8.37" textLength="59.64" lengthAdjust="spacingAndGlyphs" style="white-space:pre">Mix paint color red</text></svg>
<svg x="311.80" y="471.63" width="62.80" height="10.08"><text x="-0.4" y="8.37" textLength="10.14" lengthAdjust="spacingAndGlyphs" style="white-space:pre">EU</text></svg>
<svg x="375.80" y="471.63" width="18.80" height="10.08"><text x="-0.4" y="8.37" textLength="12.18" lengthAdjust="spacingAndGlyphs" style="white-space:pre">101</text></svg>
<path d="M375.20,472.23 h3 l-3,3 z" fill="#1e8a1e"/>
<svg x="395.80" y="471.63" width="106.70" height="10.08"><text x="-0.4" y="8.37" textLength="44.63" lengthAdjust="spacingAndGlyphs" style="white-space:pre">Feed medium</text></svg>
<svg x="503.70" y="471.63" width="107.30" height="10.08"><text x="-0.4" y="8.37" textLength="88.45" lengthAdjust="spacingAndGlyphs" style="white-space:pre">Eplan.PCT.Loop.Consumer</text></svg>
<svg x="612.20" y="471.63" width="24.05" height="10.08"><text x="-0.4" y="8.37" textLength="15.01" lengthAdjust="spacingAndGlyphs" style="white-space:pre">MA9</text></svg>
<svg x="637.45" y="471.63" width="52.95" height="10.08"><text x="-0.4" y="8.37" textLength="148.87" lengthAdjust="spacingAndGlyphs" style="white-space:pre">$(MD_MACROS)\ESS_Macro\Consumer.ema</text></svg>
<svg x="691.60" y="471.63" width="19.30" height="10.08"><text x="-0.4" y="8.37" textLength="14.21" lengthAdjust="spacingAndGlyphs" style="white-space:pre">2,5h</text></svg>
<svg x="712.10" y="471.63" width="19.80" height="10.08"><text x="-0.4" y="8.37" textLength="8.12" lengthAdjust="spacingAndGlyphs" style="white-space:pre">3h</text></svg>
<svg x="733.10" y="471.63" width="19.80" height="10.08"><text x="-0.4" y="8.37" textLength="14.21" lengthAdjust="spacingAndGlyphs" style="white-space:pre">2,5h</text></svg>
<svg x="754.10" y="471.63" width="20.30" height="10.08"><text x="-0.4" y="8.37" textLength="16.24" lengthAdjust="spacingAndGlyphs" style="white-space:pre">2500</text></svg>
<path d="M753.50,472.23 h3 l-3,3 z" fill="#1e8a1e"/>
<svg x="834.70" y="471.63" width="18.80" height="10.08"><text x="-0.4" y="8.37" textLength="33.67" lengthAdjust="spacingAndGlyphs" style="white-space:pre">Consumer</text></svg>
<svg x="854.70" y="471.63" width="18.10" height="10.08"><text x="-0.4" y="8.37" textLength="4.87" lengthAdjust="spacingAndGlyphs" style="white-space:pre">X</text></svg>
<svg x="874.00" y="471.63" width="18.50" height="10.08"><text x="-0.4" y="8.37" textLength="4.87" lengthAdjust="spacingAndGlyphs" style="white-space:pre">X</text></svg>
<svg x="893.70" y="471.63" width="18.80" height="10.08"><text x="-0.4" y="8.37" textLength="4.87" lengthAdjust="spacingAndGlyphs" style="white-space:pre">X</text></svg>
<svg x="1107.45" y="471.63" width="44.15" height="10.08"><text x="-0.4" y="8.37" textLength="25.97" lengthAdjust="spacingAndGlyphs" style="white-space:pre">General</text></svg>
<svg x="1171.80" y="471.63" width="18.80" height="10.08"><text x="-0.4" y="8.37" textLength="14.20" lengthAdjust="spacingAndGlyphs" style="white-space:pre">EFS</text></svg>
<svg x="1191.80" y="471.63" width="35.70" height="10.08"><text x="-0.4" y="8.37" textLength="16.23" lengthAdjust="spacingAndGlyphs" style="white-space:pre">Input</text></svg>
<svg x="1228.70" y="471.63" width="28.80" height="10.08"><text x="-0.4" y="8.37" textLength="20.28" lengthAdjust="spacingAndGlyphs" style="white-space:pre">BOOL</text></svg>
<svg x="1258.70" y="471.63" width="19.05" height="10.08"><text x="-0.4" y="8.37" textLength="6.09" lengthAdjust="spacingAndGlyphs" style="white-space:pre">I1</text></svg>
<svg x="18.20" y="481.71" width="23.10" height="10.08"><text x="-0.4" y="8.29" textLength="14.20" lengthAdjust="spacingAndGlyphs" style="white-space:pre">HK1</text></svg>
<svg x="42.50" y="481.71" width="84.20" height="10.08"><text x="-0.4" y="8.29" textLength="51.53" lengthAdjust="spacingAndGlyphs" style="white-space:pre">Paint workpiece</text></svg>
<svg x="127.90" y="481.71" width="25.60" height="10.08"><text x="-0.4" y="8.29" textLength="16.22" lengthAdjust="spacingAndGlyphs" style="white-space:pre">HW2</text></svg>
<svg x="154.70" y="481.71" width="116.90" height="10.08"><text x="-0.4" y="8.29" textLength="59.64" lengthAdjust="spacingAndGlyphs" style="white-space:pre">Mix paint color red</text></svg>
<svg x="311.80" y="481.71" width="62.80" height="10.08"><text x="-0.4" y="8.29" textLength="10.14" lengthAdjust="spacingAndGlyphs" style="white-space:pre">EU</text></svg>
<svg x="375.80" y="481.71" width="18.80" height="10.08"><text x="-0.4" y="8.29" textLength="12.18" lengthAdjust="spacingAndGlyphs" style="white-space:pre">102</text></svg>
<path d="M375.20,482.31 h3 l-3,3 z" fill="#1e8a1e"/>
<svg x="395.80" y="481.71" width="106.70" height="10.08"><text x="-0.4" y="8.29" textLength="33.26" lengthAdjust="spacingAndGlyphs" style="white-space:pre">Mix media</text></svg>
<svg x="503.70" y="481.71" width="107.30" height="10.08"><text x="-0.4" y="8.29" textLength="88.45" lengthAdjust="spacingAndGlyphs" style="white-space:pre">Eplan.PCT.Loop.Consumer</text></svg>
<svg x="612.20" y="481.71" width="24.05" height="10.08"><text x="-0.4" y="8.29" textLength="19.07" lengthAdjust="spacingAndGlyphs" style="white-space:pre">MA10</text></svg>
<svg x="637.45" y="481.71" width="52.95" height="10.08"><text x="-0.4" y="8.29" textLength="148.87" lengthAdjust="spacingAndGlyphs" style="white-space:pre">$(MD_MACROS)\ESS_Macro\Consumer.ema</text></svg>
<svg x="691.60" y="481.71" width="19.30" height="10.08"><text x="-0.4" y="8.29" textLength="14.21" lengthAdjust="spacingAndGlyphs" style="white-space:pre">2,5h</text></svg>
<svg x="712.10" y="481.71" width="19.80" height="10.08"><text x="-0.4" y="8.29" textLength="8.12" lengthAdjust="spacingAndGlyphs" style="white-space:pre">3h</text></svg>
<svg x="733.10" y="481.71" width="19.80" height="10.08"><text x="-0.4" y="8.29" textLength="14.21" lengthAdjust="spacingAndGlyphs" style="white-space:pre">2,5h</text></svg>
<svg x="754.10" y="481.71" width="20.30" height="10.08"><text x="-0.4" y="8.29" textLength="16.24" lengthAdjust="spacingAndGlyphs" style="white-space:pre">2500</text></svg>
<path d="M753.50,482.31 h3 l-3,3 z" fill="#1e8a1e"/>
<svg x="834.70" y="481.71" width="18.80" height="10.08"><text x="-0.4" y="8.29" textLength="33.67" lengthAdjust="spacingAndGlyphs" style="white-space:pre">Consumer</text></svg>
<svg x="854.70" y="481.71" width="18.10" height="10.08"><text x="-0.4" y="8.29" textLength="4.87" lengthAdjust="spacingAndGlyphs" style="white-space:pre">X</text></svg>
<svg x="874.00" y="481.71" width="18.50" height="10.08"><text x="-0.4" y="8.29" textLength="4.87" lengthAdjust="spacingAndGlyphs" style="white-space:pre">X</text></svg>
<svg x="893.70" y="481.71" width="18.80" height="10.08"><text x="-0.4" y="8.29" textLength="4.87" lengthAdjust="spacingAndGlyphs" style="white-space:pre">X</text></svg>
<svg x="1107.45" y="481.71" width="44.15" height="10.08"><text x="-0.4" y="8.29" textLength="25.97" lengthAdjust="spacingAndGlyphs" style="white-space:pre">General</text></svg>
<svg x="1171.80" y="481.71" width="18.80" height="10.08"><text x="-0.4" y="8.29" textLength="14.20" lengthAdjust="spacingAndGlyphs" style="white-space:pre">EFS</text></svg>
<svg x="1191.80" y="481.71" width="35.70" height="10.08"><text x="-0.4" y="8.29" textLength="16.23" lengthAdjust="spacingAndGlyphs" style="white-space:pre">Input</text></svg>
<svg x="1228.70" y="481.71" width="28.80" height="10.08"><text x="-0.4" y="8.29" textLength="20.28" lengthAdjust="spacingAndGlyphs" style="white-space:pre">BOOL</text></svg>
<svg x="1258.70" y="481.71" width="19.05" height="10.08"><text x="-0.4" y="8.29" textLength="6.09" lengthAdjust="spacingAndGlyphs" style="white-space:pre">I1</text></svg>
<svg x="18.20" y="491.79" width="23.10" height="10.08"><text x="-0.4" y="8.21" textLength="14.20" lengthAdjust="spacingAndGlyphs" style="white-space:pre">HK1</text></svg>
<svg x="42.50" y="491.79" width="84.20" height="10.08"><text x="-0.4" y="8.21" textLength="51.53" lengthAdjust="spacingAndGlyphs" style="white-space:pre">Paint workpiece</text></svg>
<svg x="127.90" y="491.79" width="25.60" height="10.08"><text x="-0.4" y="8.21" textLength="16.22" lengthAdjust="spacingAndGlyphs" style="white-space:pre">HW2</text></svg>
<svg x="154.70" y="491.79" width="116.90" height="10.08"><text x="-0.4" y="8.21" textLength="59.64" lengthAdjust="spacingAndGlyphs" style="white-space:pre">Mix paint color red</text></svg>
<svg x="311.80" y="491.79" width="62.80" height="10.08"><text x="-0.4" y="8.21" textLength="10.14" lengthAdjust="spacingAndGlyphs" style="white-space:pre">EU</text></svg>
<svg x="375.80" y="491.79" width="18.80" height="10.08"><text x="-0.4" y="8.21" textLength="12.18" lengthAdjust="spacingAndGlyphs" style="white-space:pre">103</text></svg>
<path d="M375.20,492.39 h3 l-3,3 z" fill="#1e8a1e"/>
<svg x="395.80" y="491.79" width="106.70" height="10.08"><text x="-0.4" y="8.21" textLength="44.63" lengthAdjust="spacingAndGlyphs" style="white-space:pre">Feed medium</text></svg>
<svg x="503.70" y="491.79" width="107.30" height="10.08"><text x="-0.4" y="8.21" textLength="88.45" lengthAdjust="spacingAndGlyphs" style="white-space:pre">Eplan.PCT.Loop.Consumer</text></svg>
<svg x="612.20" y="491.79" width="24.05" height="10.08"><text x="-0.4" y="8.21" textLength="15.01" lengthAdjust="spacingAndGlyphs" style="white-space:pre">MA9</text></svg>
<svg x="637.45" y="491.79" width="52.95" height="10.08"><text x="-0.4" y="8.21" textLength="148.87" lengthAdjust="spacingAndGlyphs" style="white-space:pre">$(MD_MACROS)\ESS_Macro\Consumer.ema</text></svg>
<svg x="691.60" y="491.79" width="19.30" height="10.08"><text x="-0.4" y="8.21" textLength="14.21" lengthAdjust="spacingAndGlyphs" style="white-space:pre">2,5h</text></svg>
<svg x="712.10" y="491.79" width="19.80" height="10.08"><text x="-0.4" y="8.21" textLength="8.12" lengthAdjust="spacingAndGlyphs" style="white-space:pre">3h</text></svg>
<svg x="733.10" y="491.79" width="19.80" height="10.08"><text x="-0.4" y="8.21" textLength="14.21" lengthAdjust="spacingAndGlyphs" style="white-space:pre">2,5h</text></svg>
<svg x="754.10" y="491.79" width="20.30" height="10.08"><text x="-0.4" y="8.21" textLength="16.24" lengthAdjust="spacingAndGlyphs" style="white-space:pre">2500</text></svg>
<path d="M753.50,492.39 h3 l-3,3 z" fill="#1e8a1e"/>
<svg x="834.70" y="491.79" width="18.80" height="10.08"><text x="-0.4" y="8.21" textLength="33.67" lengthAdjust="spacingAndGlyphs" style="white-space:pre">Consumer</text></svg>
<svg x="854.70" y="491.79" width="18.10" height="10.08"><text x="-0.4" y="8.21" textLength="4.87" lengthAdjust="spacingAndGlyphs" style="white-space:pre">X</text></svg>
<svg x="874.00" y="491.79" width="18.50" height="10.08"><text x="-0.4" y="8.21" textLength="4.87" lengthAdjust="spacingAndGlyphs" style="white-space:pre">X</text></svg>
<svg x="893.70" y="491.79" width="18.80" height="10.08"><text x="-0.4" y="8.21" textLength="4.87" lengthAdjust="spacingAndGlyphs" style="white-space:pre">X</text></svg>
<svg x="1107.45" y="491.79" width="44.15" height="10.08"><text x="-0.4" y="8.21" textLength="25.97" lengthAdjust="spacingAndGlyphs" style="white-space:pre">General</text></svg>
<svg x="1171.80" y="491.79" width="18.80" height="10.08"><text x="-0.4" y="8.21" textLength="14.20" lengthAdjust="spacingAndGlyphs" style="white-space:pre">EFS</text></svg>
<svg x="1191.80" y="491.79" width="35.70" height="10.08"><text x="-0.4" y="8.21" textLength="16.23" lengthAdjust="spacingAndGlyphs" style="white-space:pre">Input</text></svg>
<svg x="1228.70" y="491.79" width="28.80" height="10.08"><text x="-0.4" y="8.21" textLength="20.28" lengthAdjust="spacingAndGlyphs" style="white-space:pre">BOOL</text></svg>
<svg x="1258.70" y="491.79" width="19.05" height="10.08"><text x="-0.4" y="8.21" textLength="6.09" lengthAdjust="spacingAndGlyphs" style="white-space:pre">I1</text></svg>
<svg x="18.20" y="501.88" width="23.10" height="10.08"><text x="-0.4" y="8.12" textLength="14.20" lengthAdjust="spacingAndGlyphs" style="white-space:pre">HK1</text></svg>
<svg x="42.50" y="501.88" width="84.20" height="10.08"><text x="-0.4" y="8.12" textLength="51.53" lengthAdjust="spacingAndGlyphs" style="white-space:pre">Paint workpiece</text></svg>
<svg x="127.90" y="501.88" width="25.60" height="10.08"><text x="-0.4" y="8.12" textLength="16.22" lengthAdjust="spacingAndGlyphs" style="white-space:pre">HW2</text></svg>
<svg x="154.70" y="501.88" width="116.90" height="10.08"><text x="-0.4" y="8.12" textLength="59.64" lengthAdjust="spacingAndGlyphs" style="white-space:pre">Mix paint color red</text></svg>
<svg x="291.60" y="501.88" width="19.00" height="10.08"><text x="-0.4" y="8.12" textLength="4.46" lengthAdjust="spacingAndGlyphs" style="white-space:pre">F</text></svg>
<svg x="311.80" y="501.88" width="62.80" height="10.08"><text x="-0.4" y="8.12" textLength="5.27" lengthAdjust="spacingAndGlyphs" style="white-space:pre">C</text></svg>
<svg x="375.80" y="501.88" width="18.80" height="10.08"><text x="-0.4" y="8.12" textLength="4.06" lengthAdjust="spacingAndGlyphs" style="white-space:pre">1</text></svg>
<path d="M375.20,502.48 h3 l-3,3 z" fill="#1e8a1e"/>
<svg x="395.80" y="501.88" width="106.70" height="10.08"><text x="-0.4" y="8.12" textLength="58.42" lengthAdjust="spacingAndGlyphs" style="white-space:pre">Flow valve control</text></svg>
<svg x="503.70" y="501.88" width="107.30" height="10.08"><text x="-0.4" y="8.12" textLength="88.86" lengthAdjust="spacingAndGlyphs" style="white-space:pre">Eplan.PCT.Loop.Measuring</text></svg>
<svg x="637.45" y="501.88" width="115.45" height="10.08"><text x="-0.4" y="8.12" textLength="148.08" lengthAdjust="spacingAndGlyphs" style="white-space:pre">$(MD_MACROS)\ESS_Macro\203_Loop.ema</text></svg>
<svg x="754.10" y="501.88" width="20.30" height="10.08"><text x="-0.4" y="8.12" textLength="4.06" lengthAdjust="spacingAndGlyphs" style="white-space:pre">0</text></svg>
<path d="M753.50,502.48 h3 l-3,3 z" fill="#1e8a1e"/>
<svg x="913.70" y="501.88" width="39.05" height="10.08"><text x="-0.4" y="8.12" textLength="32.94" lengthAdjust="spacingAndGlyphs" style="white-space:pre">0 - 100 °C</text></svg>
<svg x="1107.45" y="501.88" width="44.15" height="10.08"><text x="-0.4" y="8.12" textLength="25.97" lengthAdjust="spacingAndGlyphs" style="white-space:pre">General</text></svg>
<svg x="1191.80" y="501.88" width="35.70" height="10.08"><text x="-0.4" y="8.12" textLength="16.23" lengthAdjust="spacingAndGlyphs" style="white-space:pre">Input</text></svg>
<svg x="1228.70" y="501.88" width="28.80" height="10.08"><text x="-0.4" y="8.12" textLength="19.07" lengthAdjust="spacingAndGlyphs" style="white-space:pre">BYTE</text></svg>
<svg x="1258.70" y="501.88" width="19.05" height="10.08"><text x="-0.4" y="8.12" textLength="6.09" lengthAdjust="spacingAndGlyphs" style="white-space:pre">I1</text></svg>
<svg x="18.20" y="511.96" width="23.10" height="10.08"><text x="-0.4" y="8.04" textLength="14.20" lengthAdjust="spacingAndGlyphs" style="white-space:pre">HK1</text></svg>
<svg x="42.50" y="511.96" width="84.20" height="10.08"><text x="-0.4" y="8.04" textLength="51.53" lengthAdjust="spacingAndGlyphs" style="white-space:pre">Paint workpiece</text></svg>
<svg x="127.90" y="511.96" width="25.60" height="10.08"><text x="-0.4" y="8.04" textLength="16.22" lengthAdjust="spacingAndGlyphs" style="white-space:pre">HW2</text></svg>
<svg x="154.70" y="511.96" width="116.90" height="10.08"><text x="-0.4" y="8.04" textLength="59.64" lengthAdjust="spacingAndGlyphs" style="white-space:pre">Mix paint color red</text></svg>
<svg x="291.60" y="511.96" width="19.00" height="10.08"><text x="-0.4" y="8.04" textLength="4.46" lengthAdjust="spacingAndGlyphs" style="white-space:pre">F</text></svg>
<svg x="311.80" y="511.96" width="62.80" height="10.08"><text x="-0.4" y="8.04" textLength="5.27" lengthAdjust="spacingAndGlyphs" style="white-space:pre">C</text></svg>
<svg x="375.80" y="511.96" width="18.80" height="10.08"><text x="-0.4" y="8.04" textLength="4.06" lengthAdjust="spacingAndGlyphs" style="white-space:pre">1</text></svg>
<path d="M375.20,512.56 h3 l-3,3 z" fill="#1e8a1e"/>
<svg x="395.80" y="511.96" width="106.70" height="10.08"><text x="-0.4" y="8.04" textLength="58.42" lengthAdjust="spacingAndGlyphs" style="white-space:pre">Flow valve control</text></svg>
<svg x="503.70" y="511.96" width="107.30" height="10.08"><text x="-0.4" y="8.04" textLength="88.86" lengthAdjust="spacingAndGlyphs" style="white-space:pre">Eplan.PCT.Loop.Measuring</text></svg>
<svg x="637.45" y="511.96" width="115.45" height="10.08"><text x="-0.4" y="8.04" textLength="148.08" lengthAdjust="spacingAndGlyphs" style="white-space:pre">$(MD_MACROS)\ESS_Macro\203_Loop.ema</text></svg>
<svg x="754.10" y="511.96" width="20.30" height="10.08"><text x="-0.4" y="8.04" textLength="4.06" lengthAdjust="spacingAndGlyphs" style="white-space:pre">0</text></svg>
<path d="M753.50,512.56 h3 l-3,3 z" fill="#1e8a1e"/>
<svg x="913.70" y="511.96" width="39.05" height="10.08"><text x="-0.4" y="8.04" textLength="32.94" lengthAdjust="spacingAndGlyphs" style="white-space:pre">0 - 100 °C</text></svg>
<svg x="1107.45" y="511.96" width="44.15" height="10.08"><text x="-0.4" y="8.04" textLength="25.97" lengthAdjust="spacingAndGlyphs" style="white-space:pre">General</text></svg>
<svg x="1191.80" y="511.96" width="35.70" height="10.08"><text x="-0.4" y="8.04" textLength="16.23" lengthAdjust="spacingAndGlyphs" style="white-space:pre">Input</text></svg>
<svg x="1228.70" y="511.96" width="28.80" height="10.08"><text x="-0.4" y="8.04" textLength="19.07" lengthAdjust="spacingAndGlyphs" style="white-space:pre">BYTE</text></svg>
<svg x="1258.70" y="511.96" width="19.05" height="10.08"><text x="-0.4" y="8.04" textLength="6.09" lengthAdjust="spacingAndGlyphs" style="white-space:pre">I1</text></svg>
<svg x="18.20" y="522.04" width="23.10" height="10.08"><text x="-0.4" y="7.96" textLength="14.20" lengthAdjust="spacingAndGlyphs" style="white-space:pre">HK1</text></svg>
<svg x="42.50" y="522.04" width="84.20" height="10.08"><text x="-0.4" y="7.96" textLength="51.53" lengthAdjust="spacingAndGlyphs" style="white-space:pre">Paint workpiece</text></svg>
<svg x="127.90" y="522.04" width="25.60" height="10.08"><text x="-0.4" y="7.96" textLength="16.22" lengthAdjust="spacingAndGlyphs" style="white-space:pre">HW2</text></svg>
<svg x="154.70" y="522.04" width="116.90" height="10.08"><text x="-0.4" y="7.96" textLength="59.64" lengthAdjust="spacingAndGlyphs" style="white-space:pre">Mix paint color red</text></svg>
<svg x="291.60" y="522.04" width="19.00" height="10.08"><text x="-0.4" y="7.96" textLength="4.46" lengthAdjust="spacingAndGlyphs" style="white-space:pre">F</text></svg>
<svg x="311.80" y="522.04" width="62.80" height="10.08"><text x="-0.4" y="7.96" textLength="12.57" lengthAdjust="spacingAndGlyphs" style="white-space:pre">IRC</text></svg>
<svg x="375.80" y="522.04" width="18.80" height="10.08"><text x="-0.4" y="7.96" textLength="4.06" lengthAdjust="spacingAndGlyphs" style="white-space:pre">2</text></svg>
<path d="M375.20,522.64 h3 l-3,3 z" fill="#1e8a1e"/>
<svg x="395.80" y="522.04" width="106.70" height="10.08"><text x="-0.4" y="7.96" textLength="117.67" lengthAdjust="spacingAndGlyphs" style="white-space:pre">Flow valve control: Open and closed</text></svg>
<svg x="503.70" y="522.04" width="107.30" height="10.08"><text x="-0.4" y="7.96" textLength="88.86" lengthAdjust="spacingAndGlyphs" style="white-space:pre">Eplan.PCT.Loop.Measuring</text></svg>
<svg x="637.45" y="522.04" width="115.45" height="10.08"><text x="-0.4" y="7.96" textLength="148.08" lengthAdjust="spacingAndGlyphs" style="white-space:pre">$(MD_MACROS)\ESS_Macro\203_Loop.ema</text></svg>
<svg x="754.10" y="522.04" width="20.30" height="10.08"><text x="-0.4" y="7.96" textLength="4.06" lengthAdjust="spacingAndGlyphs" style="white-space:pre">0</text></svg>
<path d="M753.50,522.64 h3 l-3,3 z" fill="#1e8a1e"/>
<svg x="913.70" y="522.04" width="39.05" height="10.08"><text x="-0.4" y="7.96" textLength="32.94" lengthAdjust="spacingAndGlyphs" style="white-space:pre">0 - 100 °C</text></svg>
<svg x="1107.45" y="522.04" width="44.15" height="10.08"><text x="-0.4" y="7.96" textLength="25.97" lengthAdjust="spacingAndGlyphs" style="white-space:pre">General</text></svg>
<svg x="1191.80" y="522.04" width="35.70" height="10.08"><text x="-0.4" y="7.96" textLength="21.91" lengthAdjust="spacingAndGlyphs" style="white-space:pre">Output</text></svg>
<svg x="1228.70" y="522.04" width="28.80" height="10.08"><text x="-0.4" y="7.96" textLength="19.07" lengthAdjust="spacingAndGlyphs" style="white-space:pre">BYTE</text></svg>
<svg x="1258.70" y="522.04" width="19.05" height="10.08"><text x="-0.4" y="7.96" textLength="6.09" lengthAdjust="spacingAndGlyphs" style="white-space:pre">I1</text></svg>
<svg x="18.20" y="532.13" width="23.10" height="10.08"><text x="-0.4" y="7.87" textLength="14.20" lengthAdjust="spacingAndGlyphs" style="white-space:pre">HK1</text></svg>
<svg x="42.50" y="532.13" width="84.20" height="10.08"><text x="-0.4" y="7.87" textLength="51.53" lengthAdjust="spacingAndGlyphs" style="white-space:pre">Paint workpiece</text></svg>
<svg x="127.90" y="532.13" width="25.60" height="10.08"><text x="-0.4" y="7.87" textLength="16.22" lengthAdjust="spacingAndGlyphs" style="white-space:pre">HW2</text></svg>
<svg x="154.70" y="532.13" width="116.90" height="10.08"><text x="-0.4" y="7.87" textLength="59.64" lengthAdjust="spacingAndGlyphs" style="white-space:pre">Mix paint color red</text></svg>
<svg x="291.60" y="532.13" width="19.00" height="10.08"><text x="-0.4" y="7.87" textLength="4.46" lengthAdjust="spacingAndGlyphs" style="white-space:pre">F</text></svg>
<svg x="311.80" y="532.13" width="62.80" height="10.08"><text x="-0.4" y="7.87" textLength="12.57" lengthAdjust="spacingAndGlyphs" style="white-space:pre">IRC</text></svg>
<svg x="375.80" y="532.13" width="18.80" height="10.08"><text x="-0.4" y="7.87" textLength="4.06" lengthAdjust="spacingAndGlyphs" style="white-space:pre">2</text></svg>
<path d="M375.20,532.73 h3 l-3,3 z" fill="#1e8a1e"/>
<svg x="395.80" y="532.13" width="106.70" height="10.08"><text x="-0.4" y="7.87" textLength="117.67" lengthAdjust="spacingAndGlyphs" style="white-space:pre">Flow valve control: Open and closed</text></svg>
<svg x="503.70" y="532.13" width="107.30" height="10.08"><text x="-0.4" y="7.87" textLength="88.86" lengthAdjust="spacingAndGlyphs" style="white-space:pre">Eplan.PCT.Loop.Measuring</text></svg>
<svg x="637.45" y="532.13" width="115.45" height="10.08"><text x="-0.4" y="7.87" textLength="148.08" lengthAdjust="spacingAndGlyphs" style="white-space:pre">$(MD_MACROS)\ESS_Macro\203_Loop.ema</text></svg>
<svg x="754.10" y="532.13" width="20.30" height="10.08"><text x="-0.4" y="7.87" textLength="4.06" lengthAdjust="spacingAndGlyphs" style="white-space:pre">0</text></svg>
<path d="M753.50,532.73 h3 l-3,3 z" fill="#1e8a1e"/>
<svg x="913.70" y="532.13" width="39.05" height="10.08"><text x="-0.4" y="7.87" textLength="32.94" lengthAdjust="spacingAndGlyphs" style="white-space:pre">0 - 100 °C</text></svg>
<svg x="1107.45" y="532.13" width="44.15" height="10.08"><text x="-0.4" y="7.87" textLength="25.97" lengthAdjust="spacingAndGlyphs" style="white-space:pre">General</text></svg>
<svg x="1191.80" y="532.13" width="35.70" height="10.08"><text x="-0.4" y="7.87" textLength="21.91" lengthAdjust="spacingAndGlyphs" style="white-space:pre">Output</text></svg>
<svg x="1228.70" y="532.13" width="28.80" height="10.08"><text x="-0.4" y="7.87" textLength="19.07" lengthAdjust="spacingAndGlyphs" style="white-space:pre">BYTE</text></svg>
<svg x="1258.70" y="532.13" width="19.05" height="10.08"><text x="-0.4" y="7.87" textLength="6.09" lengthAdjust="spacingAndGlyphs" style="white-space:pre">I1</text></svg>
<svg x="18.20" y="542.21" width="23.10" height="10.08"><text x="-0.4" y="7.79" textLength="14.20" lengthAdjust="spacingAndGlyphs" style="white-space:pre">HK1</text></svg>
<svg x="42.50" y="542.21" width="84.20" height="10.08"><text x="-0.4" y="7.79" textLength="51.53" lengthAdjust="spacingAndGlyphs" style="white-space:pre">Paint workpiece</text></svg>
<svg x="127.90" y="542.21" width="25.60" height="10.08"><text x="-0.4" y="7.79" textLength="16.22" lengthAdjust="spacingAndGlyphs" style="white-space:pre">HW2</text></svg>
<svg x="154.70" y="542.21" width="116.90" height="10.08"><text x="-0.4" y="7.79" textLength="59.64" lengthAdjust="spacingAndGlyphs" style="white-space:pre">Mix paint color red</text></svg>
<svg x="291.60" y="542.21" width="19.00" height="10.08"><text x="-0.4" y="7.79" textLength="4.46" lengthAdjust="spacingAndGlyphs" style="white-space:pre">F</text></svg>
<svg x="311.80" y="542.21" width="62.80" height="10.08"><text x="-0.4" y="7.79" textLength="12.57" lengthAdjust="spacingAndGlyphs" style="white-space:pre">IRC</text></svg>
<svg x="375.80" y="542.21" width="18.80" height="10.08"><text x="-0.4" y="7.79" textLength="4.06" lengthAdjust="spacingAndGlyphs" style="white-space:pre">2</text></svg>
<path d="M375.20,542.81 h3 l-3,3 z" fill="#1e8a1e"/>
<svg x="395.80" y="542.21" width="106.70" height="10.08"><text x="-0.4" y="7.79" textLength="117.67" lengthAdjust="spacingAndGlyphs" style="white-space:pre">Flow valve control: Open and closed</text></svg>
<svg x="503.70" y="542.21" width="107.30" height="10.08"><text x="-0.4" y="7.79" textLength="88.86" lengthAdjust="spacingAndGlyphs" style="white-space:pre">Eplan.PCT.Loop.Measuring</text></svg>
<svg x="637.45" y="542.21" width="115.45" height="10.08"><text x="-0.4" y="7.79" textLength="148.08" lengthAdjust="spacingAndGlyphs" style="white-space:pre">$(MD_MACROS)\ESS_Macro\203_Loop.ema</text></svg>
<svg x="754.10" y="542.21" width="20.30" height="10.08"><text x="-0.4" y="7.79" textLength="4.06" lengthAdjust="spacingAndGlyphs" style="white-space:pre">0</text></svg>
<path d="M753.50,542.81 h3 l-3,3 z" fill="#1e8a1e"/>
<svg x="913.70" y="542.21" width="39.05" height="10.08"><text x="-0.4" y="7.79" textLength="32.94" lengthAdjust="spacingAndGlyphs" style="white-space:pre">0 - 100 °C</text></svg>
<svg x="1107.45" y="542.21" width="44.15" height="10.08"><text x="-0.4" y="7.79" textLength="25.97" lengthAdjust="spacingAndGlyphs" style="white-space:pre">General</text></svg>
<svg x="1191.80" y="542.21" width="35.70" height="10.08"><text x="-0.4" y="7.79" textLength="21.91" lengthAdjust="spacingAndGlyphs" style="white-space:pre">Output</text></svg>
<svg x="1228.70" y="542.21" width="28.80" height="10.08"><text x="-0.4" y="7.79" textLength="19.07" lengthAdjust="spacingAndGlyphs" style="white-space:pre">BYTE</text></svg>
<svg x="1258.70" y="542.21" width="19.05" height="10.08"><text x="-0.4" y="7.79" textLength="6.09" lengthAdjust="spacingAndGlyphs" style="white-space:pre">I1</text></svg>
<svg x="18.20" y="552.29" width="23.10" height="10.08"><text x="-0.4" y="7.71" textLength="14.20" lengthAdjust="spacingAndGlyphs" style="white-space:pre">HK1</text></svg>
<svg x="42.50" y="552.29" width="84.20" height="10.08"><text x="-0.4" y="7.71" textLength="51.53" lengthAdjust="spacingAndGlyphs" style="white-space:pre">Paint workpiece</text></svg>
<svg x="127.90" y="552.29" width="25.60" height="10.08"><text x="-0.4" y="7.71" textLength="16.22" lengthAdjust="spacingAndGlyphs" style="white-space:pre">HW2</text></svg>
<svg x="154.70" y="552.29" width="116.90" height="10.08"><text x="-0.4" y="7.71" textLength="59.64" lengthAdjust="spacingAndGlyphs" style="white-space:pre">Mix paint color red</text></svg>
<svg x="291.60" y="552.29" width="19.00" height="10.08"><text x="-0.4" y="7.71" textLength="4.46" lengthAdjust="spacingAndGlyphs" style="white-space:pre">F</text></svg>
<svg x="311.80" y="552.29" width="62.80" height="10.08"><text x="-0.4" y="7.71" textLength="12.57" lengthAdjust="spacingAndGlyphs" style="white-space:pre">IRC</text></svg>
<svg x="375.80" y="552.29" width="18.80" height="10.08"><text x="-0.4" y="7.71" textLength="4.06" lengthAdjust="spacingAndGlyphs" style="white-space:pre">2</text></svg>
<path d="M375.20,552.89 h3 l-3,3 z" fill="#1e8a1e"/>
<svg x="395.80" y="552.29" width="106.70" height="10.08"><text x="-0.4" y="7.71" textLength="117.67" lengthAdjust="spacingAndGlyphs" style="white-space:pre">Flow valve control: Open and closed</text></svg>
<svg x="503.70" y="552.29" width="107.30" height="10.08"><text x="-0.4" y="7.71" textLength="88.86" lengthAdjust="spacingAndGlyphs" style="white-space:pre">Eplan.PCT.Loop.Measuring</text></svg>
<svg x="637.45" y="552.29" width="115.45" height="10.08"><text x="-0.4" y="7.71" textLength="148.08" lengthAdjust="spacingAndGlyphs" style="white-space:pre">$(MD_MACROS)\ESS_Macro\203_Loop.ema</text></svg>
<svg x="754.10" y="552.29" width="20.30" height="10.08"><text x="-0.4" y="7.71" textLength="4.06" lengthAdjust="spacingAndGlyphs" style="white-space:pre">0</text></svg>
<path d="M753.50,552.89 h3 l-3,3 z" fill="#1e8a1e"/>
<svg x="913.70" y="552.29" width="39.05" height="10.08"><text x="-0.4" y="7.71" textLength="32.94" lengthAdjust="spacingAndGlyphs" style="white-space:pre">0 - 100 °C</text></svg>
<svg x="1107.45" y="552.29" width="44.15" height="10.08"><text x="-0.4" y="7.71" textLength="25.97" lengthAdjust="spacingAndGlyphs" style="white-space:pre">General</text></svg>
<svg x="1191.80" y="552.29" width="35.70" height="10.08"><text x="-0.4" y="7.71" textLength="21.91" lengthAdjust="spacingAndGlyphs" style="white-space:pre">Output</text></svg>
<svg x="1228.70" y="552.29" width="28.80" height="10.08"><text x="-0.4" y="7.71" textLength="19.07" lengthAdjust="spacingAndGlyphs" style="white-space:pre">BYTE</text></svg>
<svg x="1258.70" y="552.29" width="19.05" height="10.08"><text x="-0.4" y="7.71" textLength="6.09" lengthAdjust="spacingAndGlyphs" style="white-space:pre">I1</text></svg>
<svg x="18.20" y="562.38" width="23.10" height="10.08"><text x="-0.4" y="7.62" textLength="14.20" lengthAdjust="spacingAndGlyphs" style="white-space:pre">HK1</text></svg>
<svg x="42.50" y="562.38" width="84.20" height="10.08"><text x="-0.4" y="7.62" textLength="51.53" lengthAdjust="spacingAndGlyphs" style="white-space:pre">Paint workpiece</text></svg>
<svg x="127.90" y="562.38" width="25.60" height="10.08"><text x="-0.4" y="7.62" textLength="16.22" lengthAdjust="spacingAndGlyphs" style="white-space:pre">HW2</text></svg>
<svg x="154.70" y="562.38" width="116.90" height="10.08"><text x="-0.4" y="7.62" textLength="59.64" lengthAdjust="spacingAndGlyphs" style="white-space:pre">Mix paint color red</text></svg>
<svg x="291.60" y="562.38" width="19.00" height="10.08"><text x="-0.4" y="7.62" textLength="4.46" lengthAdjust="spacingAndGlyphs" style="white-space:pre">F</text></svg>
<svg x="311.80" y="562.38" width="62.80" height="10.08"><text x="-0.4" y="7.62" textLength="5.27" lengthAdjust="spacingAndGlyphs" style="white-space:pre">C</text></svg>
<svg x="375.80" y="562.38" width="18.80" height="10.08"><text x="-0.4" y="7.62" textLength="4.06" lengthAdjust="spacingAndGlyphs" style="white-space:pre">3</text></svg>
<path d="M375.20,562.98 h3 l-3,3 z" fill="#1e8a1e"/>
<svg x="395.80" y="562.38" width="106.70" height="10.08"><text x="-0.4" y="7.62" textLength="58.42" lengthAdjust="spacingAndGlyphs" style="white-space:pre">Flow valve control</text></svg>
<svg x="503.70" y="562.38" width="107.30" height="10.08"><text x="-0.4" y="7.62" textLength="88.86" lengthAdjust="spacingAndGlyphs" style="white-space:pre">Eplan.PCT.Loop.Measuring</text></svg>
<svg x="637.45" y="562.38" width="115.45" height="10.08"><text x="-0.4" y="7.62" textLength="148.08" lengthAdjust="spacingAndGlyphs" style="white-space:pre">$(MD_MACROS)\ESS_Macro\203_Loop.ema</text></svg>
<svg x="754.10" y="562.38" width="20.30" height="10.08"><text x="-0.4" y="7.62" textLength="4.06" lengthAdjust="spacingAndGlyphs" style="white-space:pre">0</text></svg>
<path d="M753.50,562.98 h3 l-3,3 z" fill="#1e8a1e"/>
<svg x="913.70" y="562.38" width="39.05" height="10.08"><text x="-0.4" y="7.62" textLength="32.94" lengthAdjust="spacingAndGlyphs" style="white-space:pre">0 - 100 °C</text></svg>
<svg x="1107.45" y="562.38" width="44.15" height="10.08"><text x="-0.4" y="7.62" textLength="25.97" lengthAdjust="spacingAndGlyphs" style="white-space:pre">General</text></svg>
<svg x="1191.80" y="562.38" width="35.70" height="10.08"><text x="-0.4" y="7.62" textLength="16.23" lengthAdjust="spacingAndGlyphs" style="white-space:pre">Input</text></svg>
<svg x="1228.70" y="562.38" width="28.80" height="10.08"><text x="-0.4" y="7.62" textLength="19.07" lengthAdjust="spacingAndGlyphs" style="white-space:pre">BYTE</text></svg>
<svg x="1258.70" y="562.38" width="19.05" height="10.08"><text x="-0.4" y="7.62" textLength="6.09" lengthAdjust="spacingAndGlyphs" style="white-space:pre">I1</text></svg>
<svg x="18.20" y="572.46" width="23.10" height="10.08"><text x="-0.4" y="8.54" textLength="14.20" lengthAdjust="spacingAndGlyphs" style="white-space:pre">HK1</text></svg>
<svg x="42.50" y="572.46" width="84.20" height="10.08"><text x="-0.4" y="8.54" textLength="51.53" lengthAdjust="spacingAndGlyphs" style="white-space:pre">Paint workpiece</text></svg>
<svg x="127.90" y="572.46" width="25.60" height="10.08"><text x="-0.4" y="8.54" textLength="16.22" lengthAdjust="spacingAndGlyphs" style="white-space:pre">HW2</text></svg>
<svg x="154.70" y="572.46" width="116.90" height="10.08"><text x="-0.4" y="8.54" textLength="59.64" lengthAdjust="spacingAndGlyphs" style="white-space:pre">Mix paint color red</text></svg>
<svg x="291.60" y="572.46" width="19.00" height="10.08"><text x="-0.4" y="8.54" textLength="4.46" lengthAdjust="spacingAndGlyphs" style="white-space:pre">F</text></svg>
<svg x="311.80" y="572.46" width="62.80" height="10.08"><text x="-0.4" y="8.54" textLength="5.27" lengthAdjust="spacingAndGlyphs" style="white-space:pre">C</text></svg>
<svg x="375.80" y="572.46" width="18.80" height="10.08"><text x="-0.4" y="8.54" textLength="4.06" lengthAdjust="spacingAndGlyphs" style="white-space:pre">3</text></svg>
<path d="M375.20,573.06 h3 l-3,3 z" fill="#1e8a1e"/>
<svg x="395.80" y="572.46" width="106.70" height="10.08"><text x="-0.4" y="8.54" textLength="58.42" lengthAdjust="spacingAndGlyphs" style="white-space:pre">Flow valve control</text></svg>
<svg x="503.70" y="572.46" width="107.30" height="10.08"><text x="-0.4" y="8.54" textLength="88.86" lengthAdjust="spacingAndGlyphs" style="white-space:pre">Eplan.PCT.Loop.Measuring</text></svg>
<svg x="637.45" y="572.46" width="115.45" height="10.08"><text x="-0.4" y="8.54" textLength="148.08" lengthAdjust="spacingAndGlyphs" style="white-space:pre">$(MD_MACROS)\ESS_Macro\203_Loop.ema</text></svg>
<svg x="754.10" y="572.46" width="20.30" height="10.08"><text x="-0.4" y="8.54" textLength="4.06" lengthAdjust="spacingAndGlyphs" style="white-space:pre">0</text></svg>
<path d="M753.50,573.06 h3 l-3,3 z" fill="#1e8a1e"/>
<svg x="913.70" y="572.46" width="39.05" height="10.08"><text x="-0.4" y="8.54" textLength="32.94" lengthAdjust="spacingAndGlyphs" style="white-space:pre">0 - 100 °C</text></svg>
<svg x="1107.45" y="572.46" width="44.15" height="10.08"><text x="-0.4" y="8.54" textLength="25.97" lengthAdjust="spacingAndGlyphs" style="white-space:pre">General</text></svg>
<svg x="1191.80" y="572.46" width="35.70" height="10.08"><text x="-0.4" y="8.54" textLength="16.23" lengthAdjust="spacingAndGlyphs" style="white-space:pre">Input</text></svg>
<svg x="1228.70" y="572.46" width="28.80" height="10.08"><text x="-0.4" y="8.54" textLength="19.07" lengthAdjust="spacingAndGlyphs" style="white-space:pre">BYTE</text></svg>
<svg x="1258.70" y="572.46" width="19.05" height="10.08"><text x="-0.4" y="8.54" textLength="6.09" lengthAdjust="spacingAndGlyphs" style="white-space:pre">I1</text></svg>
<svg x="18.20" y="582.54" width="23.10" height="10.08"><text x="-0.4" y="8.46" textLength="14.20" lengthAdjust="spacingAndGlyphs" style="white-space:pre">HK1</text></svg>
<svg x="42.50" y="582.54" width="84.20" height="10.08"><text x="-0.4" y="8.46" textLength="51.53" lengthAdjust="spacingAndGlyphs" style="white-space:pre">Paint workpiece</text></svg>
<svg x="127.90" y="582.54" width="25.60" height="10.08"><text x="-0.4" y="8.46" textLength="16.22" lengthAdjust="spacingAndGlyphs" style="white-space:pre">HW2</text></svg>
<svg x="154.70" y="582.54" width="116.90" height="10.08"><text x="-0.4" y="8.46" textLength="59.64" lengthAdjust="spacingAndGlyphs" style="white-space:pre">Mix paint color red</text></svg>
<svg x="291.60" y="582.54" width="19.00" height="10.08"><text x="-0.4" y="8.46" textLength="4.46" lengthAdjust="spacingAndGlyphs" style="white-space:pre">F</text></svg>
<svg x="311.80" y="582.54" width="62.80" height="10.08"><text x="-0.4" y="8.46" textLength="12.57" lengthAdjust="spacingAndGlyphs" style="white-space:pre">IRC</text></svg>
<svg x="375.80" y="582.54" width="18.80" height="10.08"><text x="-0.4" y="8.46" textLength="4.06" lengthAdjust="spacingAndGlyphs" style="white-space:pre">4</text></svg>
<path d="M375.20,583.14 h3 l-3,3 z" fill="#1e8a1e"/>
<svg x="395.80" y="582.54" width="106.70" height="10.08"><text x="-0.4" y="8.46" textLength="117.67" lengthAdjust="spacingAndGlyphs" style="white-space:pre">Flow valve control: Open and closed</text></svg>
<svg x="503.70" y="582.54" width="107.30" height="10.08"><text x="-0.4" y="8.46" textLength="88.86" lengthAdjust="spacingAndGlyphs" style="white-space:pre">Eplan.PCT.Loop.Measuring</text></svg>
<svg x="637.45" y="582.54" width="115.45" height="10.08"><text x="-0.4" y="8.46" textLength="148.08" lengthAdjust="spacingAndGlyphs" style="white-space:pre">$(MD_MACROS)\ESS_Macro\203_Loop.ema</text></svg>
<svg x="754.10" y="582.54" width="20.30" height="10.08"><text x="-0.4" y="8.46" textLength="4.06" lengthAdjust="spacingAndGlyphs" style="white-space:pre">0</text></svg>
<path d="M753.50,583.14 h3 l-3,3 z" fill="#1e8a1e"/>
<svg x="913.70" y="582.54" width="39.05" height="10.08"><text x="-0.4" y="8.46" textLength="32.94" lengthAdjust="spacingAndGlyphs" style="white-space:pre">0 - 100 °C</text></svg>
<svg x="1107.45" y="582.54" width="44.15" height="10.08"><text x="-0.4" y="8.46" textLength="25.97" lengthAdjust="spacingAndGlyphs" style="white-space:pre">General</text></svg>
<svg x="1191.80" y="582.54" width="35.70" height="10.08"><text x="-0.4" y="8.46" textLength="21.91" lengthAdjust="spacingAndGlyphs" style="white-space:pre">Output</text></svg>
<svg x="1228.70" y="582.54" width="28.80" height="10.08"><text x="-0.4" y="8.46" textLength="19.07" lengthAdjust="spacingAndGlyphs" style="white-space:pre">BYTE</text></svg>
<svg x="1258.70" y="582.54" width="19.05" height="10.08"><text x="-0.4" y="8.46" textLength="6.09" lengthAdjust="spacingAndGlyphs" style="white-space:pre">I1</text></svg>
<svg x="18.20" y="592.62" width="23.10" height="10.08"><text x="-0.4" y="8.38" textLength="14.20" lengthAdjust="spacingAndGlyphs" style="white-space:pre">HK1</text></svg>
<svg x="42.50" y="592.62" width="84.20" height="10.08"><text x="-0.4" y="8.38" textLength="51.53" lengthAdjust="spacingAndGlyphs" style="white-space:pre">Paint workpiece</text></svg>
<svg x="127.90" y="592.62" width="25.60" height="10.08"><text x="-0.4" y="8.38" textLength="16.22" lengthAdjust="spacingAndGlyphs" style="white-space:pre">HW2</text></svg>
<svg x="154.70" y="592.62" width="116.90" height="10.08"><text x="-0.4" y="8.38" textLength="59.64" lengthAdjust="spacingAndGlyphs" style="white-space:pre">Mix paint color red</text></svg>
<svg x="291.60" y="592.62" width="19.00" height="10.08"><text x="-0.4" y="8.38" textLength="4.46" lengthAdjust="spacingAndGlyphs" style="white-space:pre">F</text></svg>
<svg x="311.80" y="592.62" width="62.80" height="10.08"><text x="-0.4" y="8.38" textLength="12.57" lengthAdjust="spacingAndGlyphs" style="white-space:pre">IRC</text></svg>
<svg x="375.80" y="592.62" width="18.80" height="10.08"><text x="-0.4" y="8.38" textLength="4.06" lengthAdjust="spacingAndGlyphs" style="white-space:pre">4</text></svg>
<path d="M375.20,593.22 h3 l-3,3 z" fill="#1e8a1e"/>
<svg x="395.80" y="592.62" width="106.70" height="10.08"><text x="-0.4" y="8.38" textLength="117.67" lengthAdjust="spacingAndGlyphs" style="white-space:pre">Flow valve control: Open and closed</text></svg>
<svg x="503.70" y="592.62" width="107.30" height="10.08"><text x="-0.4" y="8.38" textLength="88.86" lengthAdjust="spacingAndGlyphs" style="white-space:pre">Eplan.PCT.Loop.Measuring</text></svg>
<svg x="637.45" y="592.62" width="115.45" height="10.08"><text x="-0.4" y="8.38" textLength="148.08" lengthAdjust="spacingAndGlyphs" style="white-space:pre">$(MD_MACROS)\ESS_Macro\203_Loop.ema</text></svg>
<svg x="754.10" y="592.62" width="20.30" height="10.08"><text x="-0.4" y="8.38" textLength="4.06" lengthAdjust="spacingAndGlyphs" style="white-space:pre">0</text></svg>
<path d="M753.50,593.22 h3 l-3,3 z" fill="#1e8a1e"/>
<svg x="913.70" y="592.62" width="39.05" height="10.08"><text x="-0.4" y="8.38" textLength="32.94" lengthAdjust="spacingAndGlyphs" style="white-space:pre">0 - 100 °C</text></svg>
<svg x="1107.45" y="592.62" width="44.15" height="10.08"><text x="-0.4" y="8.38" textLength="25.97" lengthAdjust="spacingAndGlyphs" style="white-space:pre">General</text></svg>
<svg x="1191.80" y="592.62" width="35.70" height="10.08"><text x="-0.4" y="8.38" textLength="21.91" lengthAdjust="spacingAndGlyphs" style="white-space:pre">Output</text></svg>
<svg x="1228.70" y="592.62" width="28.80" height="10.08"><text x="-0.4" y="8.38" textLength="19.07" lengthAdjust="spacingAndGlyphs" style="white-space:pre">BYTE</text></svg>
<svg x="1258.70" y="592.62" width="19.05" height="10.08"><text x="-0.4" y="8.38" textLength="6.09" lengthAdjust="spacingAndGlyphs" style="white-space:pre">I1</text></svg>
<svg x="18.20" y="602.71" width="23.10" height="10.08"><text x="-0.4" y="8.29" textLength="14.20" lengthAdjust="spacingAndGlyphs" style="white-space:pre">HK1</text></svg>
<svg x="42.50" y="602.71" width="84.20" height="10.08"><text x="-0.4" y="8.29" textLength="51.53" lengthAdjust="spacingAndGlyphs" style="white-space:pre">Paint workpiece</text></svg>
<svg x="127.90" y="602.71" width="25.60" height="10.08"><text x="-0.4" y="8.29" textLength="16.22" lengthAdjust="spacingAndGlyphs" style="white-space:pre">HW2</text></svg>
<svg x="154.70" y="602.71" width="116.90" height="10.08"><text x="-0.4" y="8.29" textLength="59.64" lengthAdjust="spacingAndGlyphs" style="white-space:pre">Mix paint color red</text></svg>
<svg x="291.60" y="602.71" width="19.00" height="10.08"><text x="-0.4" y="8.29" textLength="4.46" lengthAdjust="spacingAndGlyphs" style="white-space:pre">F</text></svg>
<svg x="311.80" y="602.71" width="62.80" height="10.08"><text x="-0.4" y="8.29" textLength="12.57" lengthAdjust="spacingAndGlyphs" style="white-space:pre">IRC</text></svg>
<svg x="375.80" y="602.71" width="18.80" height="10.08"><text x="-0.4" y="8.29" textLength="4.06" lengthAdjust="spacingAndGlyphs" style="white-space:pre">4</text></svg>
<path d="M375.20,603.31 h3 l-3,3 z" fill="#1e8a1e"/>
<svg x="395.80" y="602.71" width="106.70" height="10.08"><text x="-0.4" y="8.29" textLength="117.67" lengthAdjust="spacingAndGlyphs" style="white-space:pre">Flow valve control: Open and closed</text></svg>
<svg x="503.70" y="602.71" width="107.30" height="10.08"><text x="-0.4" y="8.29" textLength="88.86" lengthAdjust="spacingAndGlyphs" style="white-space:pre">Eplan.PCT.Loop.Measuring</text></svg>
<svg x="637.45" y="602.71" width="115.45" height="10.08"><text x="-0.4" y="8.29" textLength="148.08" lengthAdjust="spacingAndGlyphs" style="white-space:pre">$(MD_MACROS)\ESS_Macro\203_Loop.ema</text></svg>
<svg x="754.10" y="602.71" width="20.30" height="10.08"><text x="-0.4" y="8.29" textLength="4.06" lengthAdjust="spacingAndGlyphs" style="white-space:pre">0</text></svg>
<path d="M753.50,603.31 h3 l-3,3 z" fill="#1e8a1e"/>
<svg x="913.70" y="602.71" width="39.05" height="10.08"><text x="-0.4" y="8.29" textLength="32.94" lengthAdjust="spacingAndGlyphs" style="white-space:pre">0 - 100 °C</text></svg>
<svg x="1107.45" y="602.71" width="44.15" height="10.08"><text x="-0.4" y="8.29" textLength="25.97" lengthAdjust="spacingAndGlyphs" style="white-space:pre">General</text></svg>
<svg x="1191.80" y="602.71" width="35.70" height="10.08"><text x="-0.4" y="8.29" textLength="21.91" lengthAdjust="spacingAndGlyphs" style="white-space:pre">Output</text></svg>
<svg x="1228.70" y="602.71" width="28.80" height="10.08"><text x="-0.4" y="8.29" textLength="19.07" lengthAdjust="spacingAndGlyphs" style="white-space:pre">BYTE</text></svg>
<svg x="1258.70" y="602.71" width="19.05" height="10.08"><text x="-0.4" y="8.29" textLength="6.09" lengthAdjust="spacingAndGlyphs" style="white-space:pre">I1</text></svg>
<svg x="18.20" y="612.79" width="23.10" height="10.08"><text x="-0.4" y="8.21" textLength="14.20" lengthAdjust="spacingAndGlyphs" style="white-space:pre">HK1</text></svg>
<svg x="42.50" y="612.79" width="84.20" height="10.08"><text x="-0.4" y="8.21" textLength="51.53" lengthAdjust="spacingAndGlyphs" style="white-space:pre">Paint workpiece</text></svg>
<svg x="127.90" y="612.79" width="25.60" height="10.08"><text x="-0.4" y="8.21" textLength="16.22" lengthAdjust="spacingAndGlyphs" style="white-space:pre">HW2</text></svg>
<svg x="154.70" y="612.79" width="116.90" height="10.08"><text x="-0.4" y="8.21" textLength="59.64" lengthAdjust="spacingAndGlyphs" style="white-space:pre">Mix paint color red</text></svg>
<svg x="291.60" y="612.79" width="19.00" height="10.08"><text x="-0.4" y="8.21" textLength="4.46" lengthAdjust="spacingAndGlyphs" style="white-space:pre">F</text></svg>
<svg x="311.80" y="612.79" width="62.80" height="10.08"><text x="-0.4" y="8.21" textLength="12.57" lengthAdjust="spacingAndGlyphs" style="white-space:pre">IRC</text></svg>
<svg x="375.80" y="612.79" width="18.80" height="10.08"><text x="-0.4" y="8.21" textLength="4.06" lengthAdjust="spacingAndGlyphs" style="white-space:pre">4</text></svg>
<path d="M375.20,613.39 h3 l-3,3 z" fill="#1e8a1e"/>
<svg x="395.80" y="612.79" width="106.70" height="10.08"><text x="-0.4" y="8.21" textLength="117.67" lengthAdjust="spacingAndGlyphs" style="white-space:pre">Flow valve control: Open and closed</text></svg>
<svg x="503.70" y="612.79" width="107.30" height="10.08"><text x="-0.4" y="8.21" textLength="88.86" lengthAdjust="spacingAndGlyphs" style="white-space:pre">Eplan.PCT.Loop.Measuring</text></svg>
<svg x="637.45" y="612.79" width="115.45" height="10.08"><text x="-0.4" y="8.21" textLength="148.08" lengthAdjust="spacingAndGlyphs" style="white-space:pre">$(MD_MACROS)\ESS_Macro\203_Loop.ema</text></svg>
<svg x="754.10" y="612.79" width="20.30" height="10.08"><text x="-0.4" y="8.21" textLength="4.06" lengthAdjust="spacingAndGlyphs" style="white-space:pre">0</text></svg>
<path d="M753.50,613.39 h3 l-3,3 z" fill="#1e8a1e"/>
<svg x="913.70" y="612.79" width="39.05" height="10.08"><text x="-0.4" y="8.21" textLength="32.94" lengthAdjust="spacingAndGlyphs" style="white-space:pre">0 - 100 °C</text></svg>
<svg x="1107.45" y="612.79" width="44.15" height="10.08"><text x="-0.4" y="8.21" textLength="25.97" lengthAdjust="spacingAndGlyphs" style="white-space:pre">General</text></svg>
<svg x="1191.80" y="612.79" width="35.70" height="10.08"><text x="-0.4" y="8.21" textLength="21.91" lengthAdjust="spacingAndGlyphs" style="white-space:pre">Output</text></svg>
<svg x="1228.70" y="612.79" width="28.80" height="10.08"><text x="-0.4" y="8.21" textLength="19.07" lengthAdjust="spacingAndGlyphs" style="white-space:pre">BYTE</text></svg>
<svg x="1258.70" y="612.79" width="19.05" height="10.08"><text x="-0.4" y="8.21" textLength="6.09" lengthAdjust="spacingAndGlyphs" style="white-space:pre">I1</text></svg>
<svg x="18.20" y="622.87" width="23.10" height="10.08"><text x="-0.4" y="8.13" textLength="14.20" lengthAdjust="spacingAndGlyphs" style="white-space:pre">HK1</text></svg>
<svg x="42.50" y="622.87" width="84.20" height="10.08"><text x="-0.4" y="8.13" textLength="51.53" lengthAdjust="spacingAndGlyphs" style="white-space:pre">Paint workpiece</text></svg>
<svg x="127.90" y="622.87" width="25.60" height="10.08"><text x="-0.4" y="8.13" textLength="16.22" lengthAdjust="spacingAndGlyphs" style="white-space:pre">HW2</text></svg>
<svg x="154.70" y="622.87" width="116.90" height="10.08"><text x="-0.4" y="8.13" textLength="59.64" lengthAdjust="spacingAndGlyphs" style="white-space:pre">Mix paint color red</text></svg>
<svg x="291.60" y="622.87" width="19.00" height="10.08"><text x="-0.4" y="8.13" textLength="4.06" lengthAdjust="spacingAndGlyphs" style="white-space:pre">L</text></svg>
<svg x="311.80" y="622.87" width="62.80" height="10.08"><text x="-0.4" y="8.13" textLength="7.30" lengthAdjust="spacingAndGlyphs" style="white-space:pre">IR</text></svg>
<svg x="375.80" y="622.87" width="18.80" height="10.08"><text x="-0.4" y="8.13" textLength="8.12" lengthAdjust="spacingAndGlyphs" style="white-space:pre">20</text></svg>
<path d="M375.20,623.47 h3 l-3,3 z" fill="#1e8a1e"/>
<svg x="395.80" y="622.87" width="106.70" height="10.08"><text x="-0.4" y="8.13" textLength="64.10" lengthAdjust="spacingAndGlyphs" style="white-space:pre">Measure filling level</text></svg>
<svg x="503.70" y="622.87" width="107.30" height="10.08"><text x="-0.4" y="8.13" textLength="88.86" lengthAdjust="spacingAndGlyphs" style="white-space:pre">Eplan.PCT.Loop.Measuring</text></svg>
<svg x="612.20" y="622.87" width="24.05" height="10.08"><text x="-0.4" y="8.13" textLength="15.01" lengthAdjust="spacingAndGlyphs" style="white-space:pre">MS8</text></svg>
<svg x="637.45" y="622.87" width="52.95" height="10.08"><text x="-0.4" y="8.13" textLength="149.69" lengthAdjust="spacingAndGlyphs" style="white-space:pre">$(MD_MACROS)\ESS_Macro\Measuring.ema</text></svg>
<svg x="691.60" y="622.87" width="19.30" height="10.08"><text x="-0.4" y="8.13" textLength="14.21" lengthAdjust="spacingAndGlyphs" style="white-space:pre">0,5h</text></svg>
<svg x="712.10" y="622.87" width="19.80" height="10.08"><text x="-0.4" y="8.13" textLength="14.21" lengthAdjust="spacingAndGlyphs" style="white-space:pre">1,5h</text></svg>
<svg x="733.10" y="622.87" width="19.80" height="10.08"><text x="-0.4" y="8.13" textLength="14.21" lengthAdjust="spacingAndGlyphs" style="white-space:pre">0,5h</text></svg>
<svg x="754.10" y="622.87" width="20.30" height="10.08"><text x="-0.4" y="8.13" textLength="12.18" lengthAdjust="spacingAndGlyphs" style="white-space:pre">800</text></svg>
<path d="M753.50,623.47 h3 l-3,3 z" fill="#1e8a1e"/>
<svg x="1107.45" y="622.87" width="44.15" height="10.08"><text x="-0.4" y="8.13" textLength="25.97" lengthAdjust="spacingAndGlyphs" style="white-space:pre">General</text></svg>
<svg x="1171.80" y="622.87" width="18.80" height="10.08"><text x="-0.4" y="8.13" textLength="14.20" lengthAdjust="spacingAndGlyphs" style="white-space:pre">EFS</text></svg>
<svg x="1191.80" y="622.87" width="35.70" height="10.08"><text x="-0.4" y="8.13" textLength="16.23" lengthAdjust="spacingAndGlyphs" style="white-space:pre">Input</text></svg>
<svg x="1228.70" y="622.87" width="28.80" height="10.08"><text x="-0.4" y="8.13" textLength="20.28" lengthAdjust="spacingAndGlyphs" style="white-space:pre">BOOL</text></svg>
<svg x="1258.70" y="622.87" width="19.05" height="10.08"><text x="-0.4" y="8.13" textLength="6.09" lengthAdjust="spacingAndGlyphs" style="white-space:pre">I1</text></svg>
<svg x="18.20" y="632.96" width="23.10" height="10.08"><text x="-0.4" y="8.04" textLength="14.20" lengthAdjust="spacingAndGlyphs" style="white-space:pre">HK1</text></svg>
<svg x="42.50" y="632.96" width="84.20" height="10.08"><text x="-0.4" y="8.04" textLength="51.53" lengthAdjust="spacingAndGlyphs" style="white-space:pre">Paint workpiece</text></svg>
<svg x="127.90" y="632.96" width="25.60" height="10.08"><text x="-0.4" y="8.04" textLength="16.22" lengthAdjust="spacingAndGlyphs" style="white-space:pre">HW2</text></svg>
<svg x="154.70" y="632.96" width="116.90" height="10.08"><text x="-0.4" y="8.04" textLength="59.64" lengthAdjust="spacingAndGlyphs" style="white-space:pre">Mix paint color red</text></svg>
<svg x="291.60" y="632.96" width="19.00" height="10.08"><text x="-0.4" y="8.04" textLength="4.06" lengthAdjust="spacingAndGlyphs" style="white-space:pre">L</text></svg>
<svg x="311.80" y="632.96" width="62.80" height="10.08"><text x="-0.4" y="8.04" textLength="13.40" lengthAdjust="spacingAndGlyphs" style="white-space:pre">S++</text></svg>
<svg x="375.80" y="632.96" width="18.80" height="10.08"><text x="-0.4" y="8.04" textLength="8.12" lengthAdjust="spacingAndGlyphs" style="white-space:pre">21</text></svg>
<path d="M375.20,633.56 h3 l-3,3 z" fill="#1e8a1e"/>
<svg x="395.80" y="632.96" width="106.70" height="10.08"><text x="-0.4" y="8.04" textLength="75.74" lengthAdjust="spacingAndGlyphs" style="white-space:pre">Switch off medium feed</text></svg>
<svg x="503.70" y="632.96" width="107.30" height="10.08"><text x="-0.4" y="8.04" textLength="88.86" lengthAdjust="spacingAndGlyphs" style="white-space:pre">Eplan.PCT.Loop.Measuring</text></svg>
<svg x="612.20" y="632.96" width="24.05" height="10.08"><text x="-0.4" y="8.04" textLength="15.01" lengthAdjust="spacingAndGlyphs" style="white-space:pre">MS9</text></svg>
<svg x="637.45" y="632.96" width="52.95" height="10.08"><text x="-0.4" y="8.04" textLength="149.69" lengthAdjust="spacingAndGlyphs" style="white-space:pre">$(MD_MACROS)\ESS_Macro\Measuring.ema</text></svg>
<svg x="691.60" y="632.96" width="19.30" height="10.08"><text x="-0.4" y="8.04" textLength="14.21" lengthAdjust="spacingAndGlyphs" style="white-space:pre">0,5h</text></svg>
<svg x="712.10" y="632.96" width="19.80" height="10.08"><text x="-0.4" y="8.04" textLength="14.21" lengthAdjust="spacingAndGlyphs" style="white-space:pre">1,5h</text></svg>
<svg x="733.10" y="632.96" width="19.80" height="10.08"><text x="-0.4" y="8.04" textLength="14.21" lengthAdjust="spacingAndGlyphs" style="white-space:pre">0,5h</text></svg>
<svg x="754.10" y="632.96" width="20.30" height="10.08"><text x="-0.4" y="8.04" textLength="12.18" lengthAdjust="spacingAndGlyphs" style="white-space:pre">800</text></svg>
<path d="M753.50,633.56 h3 l-3,3 z" fill="#1e8a1e"/>
<svg x="854.70" y="632.96" width="18.10" height="10.08"><text x="-0.4" y="8.04" textLength="4.87" lengthAdjust="spacingAndGlyphs" style="white-space:pre">X</text></svg>
<svg x="874.00" y="632.96" width="18.50" height="10.08"><text x="-0.4" y="8.04" textLength="4.87" lengthAdjust="spacingAndGlyphs" style="white-space:pre">X</text></svg>
<svg x="893.70" y="632.96" width="18.80" height="10.08"><text x="-0.4" y="8.04" textLength="4.87" lengthAdjust="spacingAndGlyphs" style="white-space:pre">X</text></svg>
<svg x="913.70" y="632.96" width="39.05" height="10.08"><text x="-0.4" y="8.04" textLength="26.38" lengthAdjust="spacingAndGlyphs" style="white-space:pre">0-1000 l</text></svg>
<svg x="953.95" y="632.96" width="23.15" height="10.08"><text x="-0.4" y="8.04" font-weight="bold" fill="#ff0000" textLength="16.23" lengthAdjust="spacingAndGlyphs" style="white-space:pre">200 l</text></svg>
<svg x="978.30" y="632.96" width="22.95" height="10.08"><text x="-0.4" y="8.04" font-weight="bold" fill="#ff0000" textLength="16.23" lengthAdjust="spacingAndGlyphs" style="white-space:pre">400 l</text></svg>
<svg x="1002.45" y="632.96" width="22.95" height="10.08"><text x="-0.4" y="8.04" font-weight="bold" fill="#ff0000" textLength="16.23" lengthAdjust="spacingAndGlyphs" style="white-space:pre">500 l</text></svg>
<svg x="1026.60" y="632.96" width="23.00" height="10.08"><text x="-0.4" y="8.04" font-weight="bold" fill="#ff0000" textLength="16.23" lengthAdjust="spacingAndGlyphs" style="white-space:pre">600 l</text></svg>
<svg x="1050.80" y="632.96" width="27.10" height="10.08"><text x="-0.4" y="8.04" font-weight="bold" fill="#ff0000" textLength="16.23" lengthAdjust="spacingAndGlyphs" style="white-space:pre">800 l</text></svg>
<svg x="1079.10" y="632.96" width="27.15" height="10.08"><text x="-0.4" y="8.04" font-weight="bold" fill="#ff0000" textLength="20.29" lengthAdjust="spacingAndGlyphs" style="white-space:pre">1000 l</text></svg>
<svg x="1107.45" y="632.96" width="44.15" height="10.08"><text x="-0.4" y="8.04" textLength="25.97" lengthAdjust="spacingAndGlyphs" style="white-space:pre">General</text></svg>
<svg x="1171.80" y="632.96" width="18.80" height="10.08"><text x="-0.4" y="8.04" textLength="14.20" lengthAdjust="spacingAndGlyphs" style="white-space:pre">EFS</text></svg>
<svg x="1191.80" y="632.96" width="35.70" height="10.08"><text x="-0.4" y="8.04" textLength="16.23" lengthAdjust="spacingAndGlyphs" style="white-space:pre">Input</text></svg>
<svg x="1228.70" y="632.96" width="28.80" height="10.08"><text x="-0.4" y="8.04" textLength="20.28" lengthAdjust="spacingAndGlyphs" style="white-space:pre">BOOL</text></svg>
<svg x="1258.70" y="632.96" width="19.05" height="10.08"><text x="-0.4" y="8.04" textLength="6.09" lengthAdjust="spacingAndGlyphs" style="white-space:pre">I1</text></svg>
<svg x="18.20" y="643.04" width="23.10" height="10.08"><text x="-0.4" y="7.96" textLength="14.20" lengthAdjust="spacingAndGlyphs" style="white-space:pre">HK1</text></svg>
<svg x="42.50" y="643.04" width="84.20" height="10.08"><text x="-0.4" y="7.96" textLength="51.53" lengthAdjust="spacingAndGlyphs" style="white-space:pre">Paint workpiece</text></svg>
<svg x="127.90" y="643.04" width="25.60" height="10.08"><text x="-0.4" y="7.96" textLength="16.22" lengthAdjust="spacingAndGlyphs" style="white-space:pre">HW3</text></svg>
<svg x="154.70" y="643.04" width="116.90" height="10.08"><text x="-0.4" y="7.96" textLength="63.30" lengthAdjust="spacingAndGlyphs" style="white-space:pre">Feed process liquid</text></svg>
<svg x="291.60" y="643.04" width="19.00" height="10.08"><text x="-0.4" y="7.96" textLength="4.06" lengthAdjust="spacingAndGlyphs" style="white-space:pre">L</text></svg>
<svg x="311.80" y="643.04" width="62.80" height="10.08"><text x="-0.4" y="7.96" textLength="7.30" lengthAdjust="spacingAndGlyphs" style="white-space:pre">IR</text></svg>
<svg x="375.80" y="643.04" width="18.80" height="10.08"><text x="-0.4" y="7.96" textLength="8.12" lengthAdjust="spacingAndGlyphs" style="white-space:pre">20</text></svg>
<path d="M375.20,643.64 h3 l-3,3 z" fill="#1e8a1e"/>
<svg x="395.80" y="643.04" width="106.70" height="10.08"><text x="-0.4" y="7.96" textLength="64.10" lengthAdjust="spacingAndGlyphs" style="white-space:pre">Measure filling level</text></svg>
<svg x="503.70" y="643.04" width="107.30" height="10.08"><text x="-0.4" y="7.96" textLength="88.86" lengthAdjust="spacingAndGlyphs" style="white-space:pre">Eplan.PCT.Loop.Measuring</text></svg>
<svg x="612.20" y="643.04" width="24.05" height="10.08"><text x="-0.4" y="7.96" textLength="15.01" lengthAdjust="spacingAndGlyphs" style="white-space:pre">MS1</text></svg>
<svg x="637.45" y="643.04" width="52.95" height="10.08"><text x="-0.4" y="7.96" textLength="149.69" lengthAdjust="spacingAndGlyphs" style="white-space:pre">$(MD_MACROS)\ESS_Macro\Measuring.ema</text></svg>
<svg x="691.60" y="643.04" width="19.30" height="10.08"><text x="-0.4" y="7.96" textLength="14.21" lengthAdjust="spacingAndGlyphs" style="white-space:pre">0,5h</text></svg>
<svg x="712.10" y="643.04" width="19.80" height="10.08"><text x="-0.4" y="7.96" textLength="14.21" lengthAdjust="spacingAndGlyphs" style="white-space:pre">1,5h</text></svg>
<svg x="733.10" y="643.04" width="19.80" height="10.08"><text x="-0.4" y="7.96" textLength="14.21" lengthAdjust="spacingAndGlyphs" style="white-space:pre">0,5h</text></svg>
<svg x="754.10" y="643.04" width="20.30" height="10.08"><text x="-0.4" y="7.96" textLength="12.18" lengthAdjust="spacingAndGlyphs" style="white-space:pre">800</text></svg>
<path d="M753.50,643.64 h3 l-3,3 z" fill="#1e8a1e"/>
<svg x="1107.45" y="643.04" width="44.15" height="10.08"><text x="-0.4" y="7.96" textLength="25.97" lengthAdjust="spacingAndGlyphs" style="white-space:pre">General</text></svg>
<svg x="1171.80" y="643.04" width="18.80" height="10.08"><text x="-0.4" y="7.96" textLength="14.20" lengthAdjust="spacingAndGlyphs" style="white-space:pre">EFS</text></svg>
<svg x="1191.80" y="643.04" width="35.70" height="10.08"><text x="-0.4" y="7.96" textLength="16.23" lengthAdjust="spacingAndGlyphs" style="white-space:pre">Input</text></svg>
<svg x="1228.70" y="643.04" width="28.80" height="10.08"><text x="-0.4" y="7.96" textLength="20.28" lengthAdjust="spacingAndGlyphs" style="white-space:pre">BOOL</text></svg>
<svg x="1258.70" y="643.04" width="19.05" height="10.08"><text x="-0.4" y="7.96" textLength="6.09" lengthAdjust="spacingAndGlyphs" style="white-space:pre">I1</text></svg>
<svg x="18.20" y="653.12" width="23.10" height="10.08"><text x="-0.4" y="7.88" textLength="14.20" lengthAdjust="spacingAndGlyphs" style="white-space:pre">HK1</text></svg>
<svg x="42.50" y="653.12" width="84.20" height="10.08"><text x="-0.4" y="7.88" textLength="51.53" lengthAdjust="spacingAndGlyphs" style="white-space:pre">Paint workpiece</text></svg>
<svg x="127.90" y="653.12" width="25.60" height="10.08"><text x="-0.4" y="7.88" textLength="16.22" lengthAdjust="spacingAndGlyphs" style="white-space:pre">HW3</text></svg>
<svg x="154.70" y="653.12" width="116.90" height="10.08"><text x="-0.4" y="7.88" textLength="63.30" lengthAdjust="spacingAndGlyphs" style="white-space:pre">Feed process liquid</text></svg>
<svg x="291.60" y="653.12" width="19.00" height="10.08"><text x="-0.4" y="7.88" textLength="4.06" lengthAdjust="spacingAndGlyphs" style="white-space:pre">L</text></svg>
<svg x="311.80" y="653.12" width="62.80" height="10.08"><text x="-0.4" y="7.88" textLength="13.40" lengthAdjust="spacingAndGlyphs" style="white-space:pre">S++</text></svg>
<svg x="375.80" y="653.12" width="18.80" height="10.08"><text x="-0.4" y="7.88" textLength="8.12" lengthAdjust="spacingAndGlyphs" style="white-space:pre">21</text></svg>
<path d="M375.20,653.72 h3 l-3,3 z" fill="#1e8a1e"/>
<svg x="395.80" y="653.12" width="106.70" height="10.08"><text x="-0.4" y="7.88" textLength="75.74" lengthAdjust="spacingAndGlyphs" style="white-space:pre">Switch off medium feed</text></svg>
<svg x="503.70" y="653.12" width="107.30" height="10.08"><text x="-0.4" y="7.88" textLength="88.86" lengthAdjust="spacingAndGlyphs" style="white-space:pre">Eplan.PCT.Loop.Measuring</text></svg>
<svg x="612.20" y="653.12" width="24.05" height="10.08"><text x="-0.4" y="7.88" textLength="15.01" lengthAdjust="spacingAndGlyphs" style="white-space:pre">MS2</text></svg>
<svg x="637.45" y="653.12" width="52.95" height="10.08"><text x="-0.4" y="7.88" textLength="149.69" lengthAdjust="spacingAndGlyphs" style="white-space:pre">$(MD_MACROS)\ESS_Macro\Measuring.ema</text></svg>
<svg x="691.60" y="653.12" width="19.30" height="10.08"><text x="-0.4" y="7.88" textLength="14.21" lengthAdjust="spacingAndGlyphs" style="white-space:pre">0,5h</text></svg>
<svg x="712.10" y="653.12" width="19.80" height="10.08"><text x="-0.4" y="7.88" textLength="14.21" lengthAdjust="spacingAndGlyphs" style="white-space:pre">1,5h</text></svg>
<svg x="733.10" y="653.12" width="19.80" height="10.08"><text x="-0.4" y="7.88" textLength="14.21" lengthAdjust="spacingAndGlyphs" style="white-space:pre">0,5h</text></svg>
<svg x="754.10" y="653.12" width="20.30" height="10.08"><text x="-0.4" y="7.88" textLength="12.18" lengthAdjust="spacingAndGlyphs" style="white-space:pre">800</text></svg>
<path d="M753.50,653.72 h3 l-3,3 z" fill="#1e8a1e"/>
<svg x="854.70" y="653.12" width="18.10" height="10.08"><text x="-0.4" y="7.88" textLength="4.87" lengthAdjust="spacingAndGlyphs" style="white-space:pre">X</text></svg>
<svg x="874.00" y="653.12" width="18.50" height="10.08"><text x="-0.4" y="7.88" textLength="4.87" lengthAdjust="spacingAndGlyphs" style="white-space:pre">X</text></svg>
<svg x="893.70" y="653.12" width="18.80" height="10.08"><text x="-0.4" y="7.88" textLength="4.87" lengthAdjust="spacingAndGlyphs" style="white-space:pre">X</text></svg>
<svg x="913.70" y="653.12" width="39.05" height="10.08"><text x="-0.4" y="7.88" textLength="26.38" lengthAdjust="spacingAndGlyphs" style="white-space:pre">0-1000 l</text></svg>
<svg x="953.95" y="653.12" width="23.15" height="10.08"><text x="-0.4" y="7.88" font-weight="bold" fill="#ff0000" textLength="16.23" lengthAdjust="spacingAndGlyphs" style="white-space:pre">200 l</text></svg>
<svg x="978.30" y="653.12" width="22.95" height="10.08"><text x="-0.4" y="7.88" font-weight="bold" fill="#ff0000" textLength="16.23" lengthAdjust="spacingAndGlyphs" style="white-space:pre">400 l</text></svg>
<svg x="1002.45" y="653.12" width="22.95" height="10.08"><text x="-0.4" y="7.88" font-weight="bold" fill="#ff0000" textLength="16.23" lengthAdjust="spacingAndGlyphs" style="white-space:pre">500 l</text></svg>
<svg x="1026.60" y="653.12" width="23.00" height="10.08"><text x="-0.4" y="7.88" font-weight="bold" fill="#ff0000" textLength="16.23" lengthAdjust="spacingAndGlyphs" style="white-space:pre">600 l</text></svg>
<svg x="1050.80" y="653.12" width="27.10" height="10.08"><text x="-0.4" y="7.88" font-weight="bold" fill="#ff0000" textLength="16.23" lengthAdjust="spacingAndGlyphs" style="white-space:pre">800 l</text></svg>
<svg x="1079.10" y="653.12" width="27.15" height="10.08"><text x="-0.4" y="7.88" font-weight="bold" fill="#ff0000" textLength="20.29" lengthAdjust="spacingAndGlyphs" style="white-space:pre">1000 l</text></svg>
<svg x="1107.45" y="653.12" width="44.15" height="10.08"><text x="-0.4" y="7.88" textLength="25.97" lengthAdjust="spacingAndGlyphs" style="white-space:pre">General</text></svg>
<svg x="1171.80" y="653.12" width="18.80" height="10.08"><text x="-0.4" y="7.88" textLength="14.20" lengthAdjust="spacingAndGlyphs" style="white-space:pre">EFS</text></svg>
<svg x="1191.80" y="653.12" width="35.70" height="10.08"><text x="-0.4" y="7.88" textLength="16.23" lengthAdjust="spacingAndGlyphs" style="white-space:pre">Input</text></svg>
<svg x="1228.70" y="653.12" width="28.80" height="10.08"><text x="-0.4" y="7.88" textLength="20.28" lengthAdjust="spacingAndGlyphs" style="white-space:pre">BOOL</text></svg>
<svg x="1258.70" y="653.12" width="19.05" height="10.08"><text x="-0.4" y="7.88" textLength="6.09" lengthAdjust="spacingAndGlyphs" style="white-space:pre">I1</text></svg>
<svg x="18.20" y="663.21" width="23.10" height="10.08"><text x="-0.4" y="7.79" textLength="14.20" lengthAdjust="spacingAndGlyphs" style="white-space:pre">HK1</text></svg>
<svg x="42.50" y="663.21" width="84.20" height="10.08"><text x="-0.4" y="7.79" textLength="51.53" lengthAdjust="spacingAndGlyphs" style="white-space:pre">Paint workpiece</text></svg>
<svg x="127.90" y="663.21" width="25.60" height="10.08"><text x="-0.4" y="7.79" textLength="16.22" lengthAdjust="spacingAndGlyphs" style="white-space:pre">HW4</text></svg>
<svg x="154.70" y="663.21" width="116.90" height="10.08"><text x="-0.4" y="7.79" textLength="43.83" lengthAdjust="spacingAndGlyphs" style="white-space:pre">Feed additive</text></svg>
<svg x="291.60" y="663.21" width="19.00" height="10.08"><text x="-0.4" y="7.79" textLength="4.06" lengthAdjust="spacingAndGlyphs" style="white-space:pre">L</text></svg>
<svg x="311.80" y="663.21" width="62.80" height="10.08"><text x="-0.4" y="7.79" textLength="7.30" lengthAdjust="spacingAndGlyphs" style="white-space:pre">IR</text></svg>
<svg x="375.80" y="663.21" width="18.80" height="10.08"><text x="-0.4" y="7.79" textLength="8.12" lengthAdjust="spacingAndGlyphs" style="white-space:pre">20</text></svg>
<path d="M375.20,663.81 h3 l-3,3 z" fill="#1e8a1e"/>
<svg x="395.80" y="663.21" width="106.70" height="10.08"><text x="-0.4" y="7.79" textLength="64.10" lengthAdjust="spacingAndGlyphs" style="white-space:pre">Measure filling level</text></svg>
<svg x="503.70" y="663.21" width="107.30" height="10.08"><text x="-0.4" y="7.79" textLength="88.86" lengthAdjust="spacingAndGlyphs" style="white-space:pre">Eplan.PCT.Loop.Measuring</text></svg>
<svg x="612.20" y="663.21" width="24.05" height="10.08"><text x="-0.4" y="7.79" textLength="15.01" lengthAdjust="spacingAndGlyphs" style="white-space:pre">MS3</text></svg>
<svg x="637.45" y="663.21" width="52.95" height="10.08"><text x="-0.4" y="7.79" textLength="149.69" lengthAdjust="spacingAndGlyphs" style="white-space:pre">$(MD_MACROS)\ESS_Macro\Measuring.ema</text></svg>
<svg x="691.60" y="663.21" width="19.30" height="10.08"><text x="-0.4" y="7.79" textLength="14.21" lengthAdjust="spacingAndGlyphs" style="white-space:pre">0,5h</text></svg>
<svg x="712.10" y="663.21" width="19.80" height="10.08"><text x="-0.4" y="7.79" textLength="14.21" lengthAdjust="spacingAndGlyphs" style="white-space:pre">1,5h</text></svg>
<svg x="733.10" y="663.21" width="19.80" height="10.08"><text x="-0.4" y="7.79" textLength="14.21" lengthAdjust="spacingAndGlyphs" style="white-space:pre">0,5h</text></svg>
<svg x="754.10" y="663.21" width="20.30" height="10.08"><text x="-0.4" y="7.79" textLength="12.18" lengthAdjust="spacingAndGlyphs" style="white-space:pre">800</text></svg>
<path d="M753.50,663.81 h3 l-3,3 z" fill="#1e8a1e"/>
<svg x="1107.45" y="663.21" width="44.15" height="10.08"><text x="-0.4" y="7.79" textLength="25.97" lengthAdjust="spacingAndGlyphs" style="white-space:pre">General</text></svg>
<svg x="1171.80" y="663.21" width="18.80" height="10.08"><text x="-0.4" y="7.79" textLength="14.20" lengthAdjust="spacingAndGlyphs" style="white-space:pre">EFS</text></svg>
<svg x="1191.80" y="663.21" width="35.70" height="10.08"><text x="-0.4" y="7.79" textLength="16.23" lengthAdjust="spacingAndGlyphs" style="white-space:pre">Input</text></svg>
<svg x="1228.70" y="663.21" width="28.80" height="10.08"><text x="-0.4" y="7.79" textLength="20.28" lengthAdjust="spacingAndGlyphs" style="white-space:pre">BOOL</text></svg>
<svg x="1258.70" y="663.21" width="19.05" height="10.08"><text x="-0.4" y="7.79" textLength="6.09" lengthAdjust="spacingAndGlyphs" style="white-space:pre">I1</text></svg>
<svg x="18.20" y="673.29" width="23.10" height="10.08"><text x="-0.4" y="7.71" textLength="14.20" lengthAdjust="spacingAndGlyphs" style="white-space:pre">HK1</text></svg>
<svg x="42.50" y="673.29" width="84.20" height="10.08"><text x="-0.4" y="7.71" textLength="51.53" lengthAdjust="spacingAndGlyphs" style="white-space:pre">Paint workpiece</text></svg>
<svg x="127.90" y="673.29" width="25.60" height="10.08"><text x="-0.4" y="7.71" textLength="16.22" lengthAdjust="spacingAndGlyphs" style="white-space:pre">HW4</text></svg>
<svg x="154.70" y="673.29" width="116.90" height="10.08"><text x="-0.4" y="7.71" textLength="43.83" lengthAdjust="spacingAndGlyphs" style="white-space:pre">Feed additive</text></svg>
<svg x="291.60" y="673.29" width="19.00" height="10.08"><text x="-0.4" y="7.71" textLength="4.06" lengthAdjust="spacingAndGlyphs" style="white-space:pre">L</text></svg>
<svg x="311.80" y="673.29" width="62.80" height="10.08"><text x="-0.4" y="7.71" textLength="13.40" lengthAdjust="spacingAndGlyphs" style="white-space:pre">S++</text></svg>
<svg x="375.80" y="673.29" width="18.80" height="10.08"><text x="-0.4" y="7.71" textLength="8.12" lengthAdjust="spacingAndGlyphs" style="white-space:pre">21</text></svg>
<path d="M375.20,673.89 h3 l-3,3 z" fill="#1e8a1e"/>
<svg x="395.80" y="673.29" width="106.70" height="10.08"><text x="-0.4" y="7.71" textLength="75.74" lengthAdjust="spacingAndGlyphs" style="white-space:pre">Switch off medium feed</text></svg>
<svg x="503.70" y="673.29" width="107.30" height="10.08"><text x="-0.4" y="7.71" textLength="88.86" lengthAdjust="spacingAndGlyphs" style="white-space:pre">Eplan.PCT.Loop.Measuring</text></svg>
<svg x="612.20" y="673.29" width="24.05" height="10.08"><text x="-0.4" y="7.71" textLength="15.01" lengthAdjust="spacingAndGlyphs" style="white-space:pre">MS4</text></svg>
<svg x="637.45" y="673.29" width="52.95" height="10.08"><text x="-0.4" y="7.71" textLength="149.69" lengthAdjust="spacingAndGlyphs" style="white-space:pre">$(MD_MACROS)\ESS_Macro\Measuring.ema</text></svg>
<svg x="691.60" y="673.29" width="19.30" height="10.08"><text x="-0.4" y="7.71" textLength="14.21" lengthAdjust="spacingAndGlyphs" style="white-space:pre">0,5h</text></svg>
<svg x="712.10" y="673.29" width="19.80" height="10.08"><text x="-0.4" y="7.71" textLength="14.21" lengthAdjust="spacingAndGlyphs" style="white-space:pre">1,5h</text></svg>
<svg x="733.10" y="673.29" width="19.80" height="10.08"><text x="-0.4" y="7.71" textLength="14.21" lengthAdjust="spacingAndGlyphs" style="white-space:pre">0,5h</text></svg>
<svg x="754.10" y="673.29" width="20.30" height="10.08"><text x="-0.4" y="7.71" textLength="12.18" lengthAdjust="spacingAndGlyphs" style="white-space:pre">800</text></svg>
<path d="M753.50,673.89 h3 l-3,3 z" fill="#1e8a1e"/>
<svg x="854.70" y="673.29" width="18.10" height="10.08"><text x="-0.4" y="7.71" textLength="4.87" lengthAdjust="spacingAndGlyphs" style="white-space:pre">X</text></svg>
<svg x="874.00" y="673.29" width="18.50" height="10.08"><text x="-0.4" y="7.71" textLength="4.87" lengthAdjust="spacingAndGlyphs" style="white-space:pre">X</text></svg>
<svg x="893.70" y="673.29" width="18.80" height="10.08"><text x="-0.4" y="7.71" textLength="4.87" lengthAdjust="spacingAndGlyphs" style="white-space:pre">X</text></svg>
<svg x="913.70" y="673.29" width="39.05" height="10.08"><text x="-0.4" y="7.71" textLength="26.38" lengthAdjust="spacingAndGlyphs" style="white-space:pre">0-1000 l</text></svg>
<svg x="953.95" y="673.29" width="23.15" height="10.08"><text x="-0.4" y="7.71" font-weight="bold" fill="#ff0000" textLength="16.23" lengthAdjust="spacingAndGlyphs" style="white-space:pre">200 l</text></svg>
<svg x="978.30" y="673.29" width="22.95" height="10.08"><text x="-0.4" y="7.71" font-weight="bold" fill="#ff0000" textLength="16.23" lengthAdjust="spacingAndGlyphs" style="white-space:pre">400 l</text></svg>
<svg x="1002.45" y="673.29" width="22.95" height="10.08"><text x="-0.4" y="7.71" font-weight="bold" fill="#ff0000" textLength="16.23" lengthAdjust="spacingAndGlyphs" style="white-space:pre">500 l</text></svg>
<svg x="1026.60" y="673.29" width="23.00" height="10.08"><text x="-0.4" y="7.71" font-weight="bold" fill="#ff0000" textLength="16.23" lengthAdjust="spacingAndGlyphs" style="white-space:pre">600 l</text></svg>
<svg x="1050.80" y="673.29" width="27.10" height="10.08"><text x="-0.4" y="7.71" font-weight="bold" fill="#ff0000" textLength="16.23" lengthAdjust="spacingAndGlyphs" style="white-space:pre">800 l</text></svg>
<svg x="1079.10" y="673.29" width="27.15" height="10.08"><text x="-0.4" y="7.71" font-weight="bold" fill="#ff0000" textLength="20.29" lengthAdjust="spacingAndGlyphs" style="white-space:pre">1000 l</text></svg>
<svg x="1107.45" y="673.29" width="44.15" height="10.08"><text x="-0.4" y="7.71" textLength="25.97" lengthAdjust="spacingAndGlyphs" style="white-space:pre">General</text></svg>
<svg x="1171.80" y="673.29" width="18.80" height="10.08"><text x="-0.4" y="7.71" textLength="14.20" lengthAdjust="spacingAndGlyphs" style="white-space:pre">EFS</text></svg>
<svg x="1191.80" y="673.29" width="35.70" height="10.08"><text x="-0.4" y="7.71" textLength="16.23" lengthAdjust="spacingAndGlyphs" style="white-space:pre">Input</text></svg>
<svg x="1228.70" y="673.29" width="28.80" height="10.08"><text x="-0.4" y="7.71" textLength="20.28" lengthAdjust="spacingAndGlyphs" style="white-space:pre">BOOL</text></svg>
<svg x="1258.70" y="673.29" width="19.05" height="10.08"><text x="-0.4" y="7.71" textLength="6.09" lengthAdjust="spacingAndGlyphs" style="white-space:pre">I1</text></svg>
</g>
<rect x="1278.9" y="312.90" width="1.1" height="5" fill="#b07030"/>
<rect x="1278.9" y="322.98" width="1.1" height="5" fill="#b07030"/>
<rect x="1278.9" y="353.23" width="1.1" height="5" fill="#8a4a2a"/>
<rect x="1278.9" y="363.32" width="1.1" height="5" fill="#8a4a2a"/>
<rect x="1278.9" y="373.40" width="1.1" height="5" fill="#8a4a2a"/>
<rect x="1278.9" y="383.48" width="1.1" height="5" fill="#8a4a2a"/>
<rect x="1278.9" y="393.56" width="1.1" height="5" fill="#8a4a2a"/>
<rect x="1278.9" y="403.65" width="1.1" height="5" fill="#8a4a2a"/>
<rect x="1278.9" y="413.73" width="1.1" height="5" fill="#8a4a2a"/>
<rect x="1278.9" y="423.81" width="1.1" height="5" fill="#b07030"/>
<rect x="1278.9" y="433.90" width="1.1" height="5" fill="#b07030"/>
<rect x="1278.9" y="443.98" width="1.1" height="5" fill="#b07030"/>
<rect x="1278.9" y="454.06" width="1.1" height="5" fill="#b07030"/>
<rect x="1278.9" y="474.23" width="1.1" height="5" fill="#b07030"/>
<rect x="1278.9" y="484.31" width="1.1" height="5" fill="#b07030"/>
<rect x="1278.9" y="494.39" width="1.1" height="5" fill="#b07030"/>
<rect x="1278.9" y="524.64" width="1.1" height="5" fill="#8a4a2a"/>
<rect x="1278.9" y="534.73" width="1.1" height="5" fill="#8a4a2a"/>
<rect x="1278.9" y="544.81" width="1.1" height="5" fill="#8a4a2a"/>
<rect x="1278.9" y="554.89" width="1.1" height="5" fill="#8a4a2a"/>
<rect x="1278.9" y="585.14" width="1.1" height="5" fill="#8a4a2a"/>
<rect x="1278.9" y="595.22" width="1.1" height="5" fill="#8a4a2a"/>
<rect x="1278.9" y="605.31" width="1.1" height="5" fill="#8a4a2a"/>
<rect x="1278.9" y="615.39" width="1.1" height="5" fill="#8a4a2a"/>
<rect x="1278.9" y="625.47" width="1.1" height="5" fill="#b07030"/>
<rect x="1278.9" y="635.56" width="1.1" height="5" fill="#b07030"/>
<rect x="1278.9" y="645.64" width="1.1" height="5" fill="#b07030"/>
<rect x="1278.9" y="655.72" width="1.1" height="5" fill="#b07030"/>
<rect x="1278.9" y="665.81" width="1.1" height="5" fill="#b07030"/>
<rect x="1278.9" y="675.89" width="1.1" height="5" fill="#b07030"/>
<path d="M1258.00,133.8 V309.90 H1277.45 V133.8" fill="none" stroke="#4c9a68" stroke-width="1.3"/>
</svg>
<svg width="1280" height="720" style="position:absolute;left:0;top:0">
<rect x="17.2" y="133.8" width="56.8" height="79" fill="#ffffff"/>
<rect x="18" y="134.5" width="55" height="42" fill="#e2003d"/>
<line x1="32.2" y1="157.6" x2="39.6" y2="141.4" stroke="#fff" stroke-width="5.6" stroke-linecap="round"/>
<line x1="38.4" y1="169.6" x2="49.4" y2="141.4" stroke="#fff" stroke-width="5.6" stroke-linecap="round"/>
<line x1="47.8" y1="169.6" x2="58.8" y2="141.4" stroke="#fff" stroke-width="5.6" stroke-linecap="round"/>
<text x="17.8" y="198.2" font-size="32" font-weight="bold" fill="#e2003d" stroke="#e2003d" stroke-width="0.9">e</text>
<text x="36.2" y="194.4" font-size="15.2" font-weight="bold" fill="#111" textLength="36.4" lengthAdjust="spacingAndGlyphs">PLAN</text>
<rect x="33.1" y="196.9" width="39.4" height="1.9" fill="#111"/>
<rect x="18" y="202" width="24" height="10" fill="#00964f"/>
<rect x="43" y="202" width="7" height="10" fill="#0096d6"/>
<rect x="51" y="202" width="6.6" height="10" fill="#005ca9"/>
<rect x="58.3" y="202" width="6.6" height="10" fill="#8b2d8e"/>
<rect x="65.6" y="202" width="7.4" height="10" fill="#e2003d"/>
<text x="87.8" y="157.7" font-size="22" font-weight="bold" fill="#e2003d">e</text>
<text x="101.2" y="154.4" font-size="9" font-weight="bold" fill="#f2f2f2" textLength="25" lengthAdjust="spacingAndGlyphs">PLAN</text>
<rect x="98.8" y="156.6" width="26.8" height="1.1" fill="#f2f2f2"/>
<text x="97.5" y="164.2" font-size="5.6" fill="#b0103a" textLength="30" lengthAdjust="spacingAndGlyphs">Preplanning</text>
</svg>
</body></html>
